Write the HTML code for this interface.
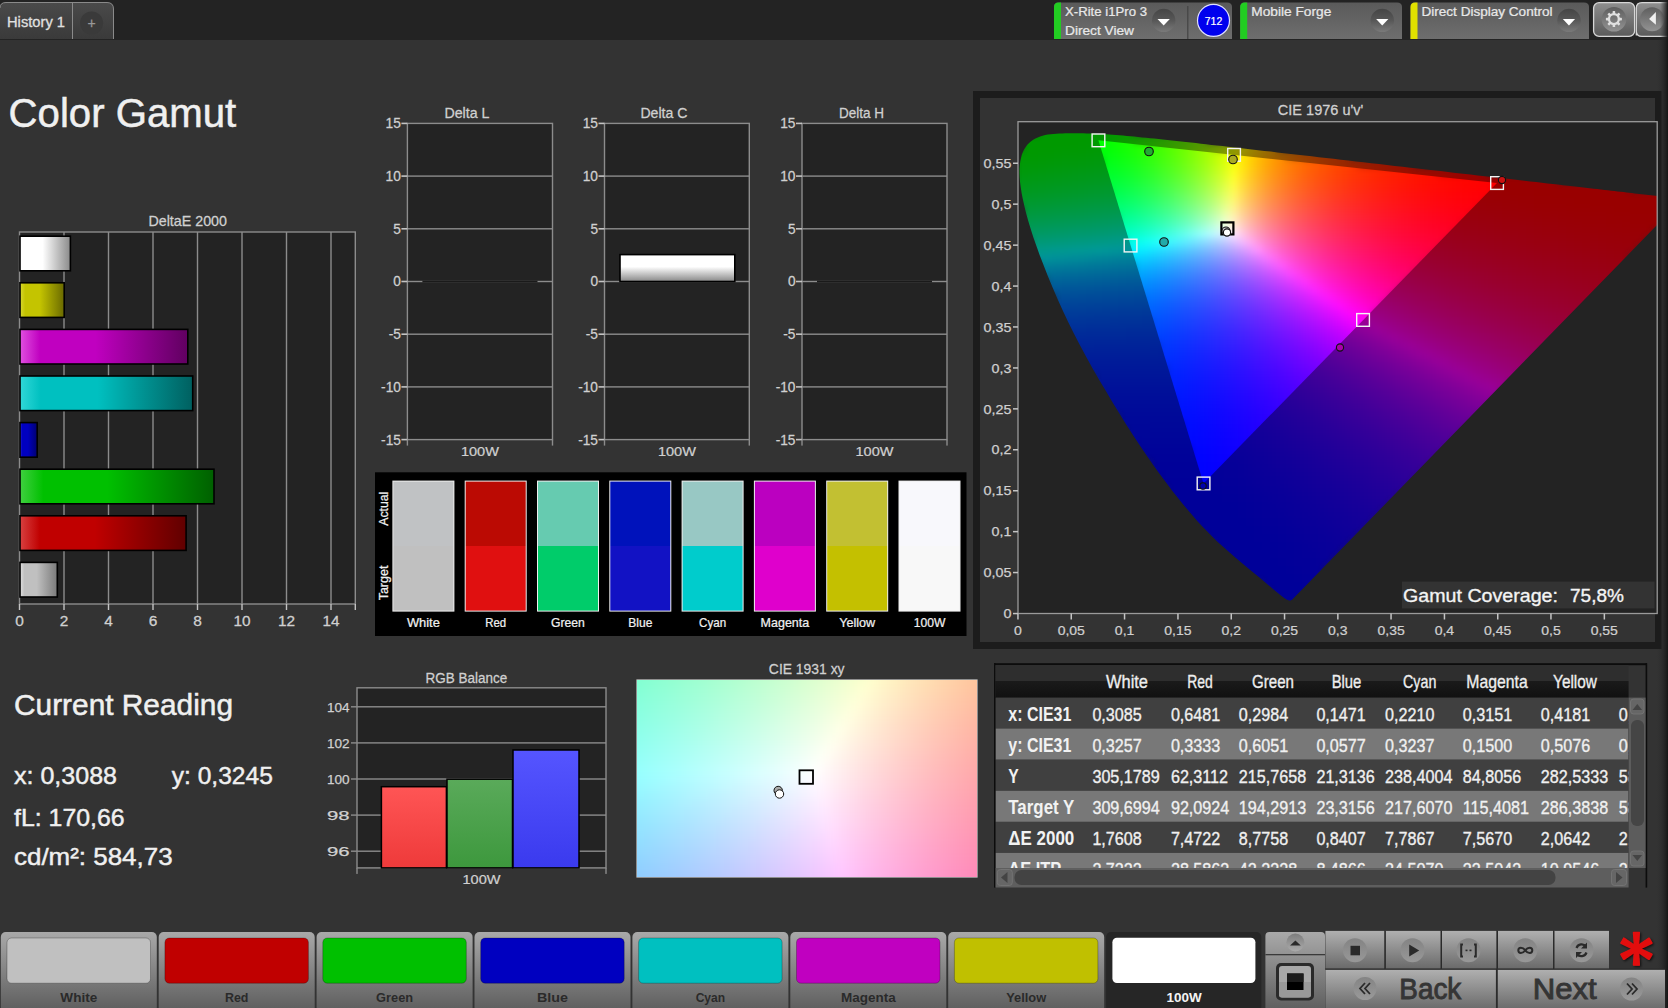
<!DOCTYPE html><html><head><meta charset="utf-8"><title>Color Gamut</title><style>html,body{margin:0;padding:0;background:#333;overflow:hidden;width:1668px;height:1008px}svg{display:block}svg text{font-family:"Liberation Sans",sans-serif}.cl rect{width:8px;height:8px}</style></head><body><svg width="1668" height="1008" viewBox="0 0 1668 1008" font-family="Liberation Sans, sans-serif"><defs><linearGradient id="tabg" x1="0" y1="0" x2="0" y2="1"><stop offset="0" stop-color="#4a4a4a"/><stop offset="1" stop-color="#3a3a3a"/></linearGradient><linearGradient id="selg" x1="0" y1="0" x2="0" y2="1"><stop offset="0" stop-color="#5a5a5a"/><stop offset="1" stop-color="#6e6e6e"/></linearGradient><radialGradient id="ddg" cx="0.5" cy="0.5" r="0.5"><stop offset="0" stop-color="#555"/><stop offset="1" stop-color="#4a4a4a"/></radialGradient><linearGradient id="ddl" x1="0" y1="0" x2="0" y2="1"><stop offset="0" stop-color="#454545"/><stop offset="0.5" stop-color="#575757"/><stop offset="1" stop-color="#7a7a7a"/></linearGradient><linearGradient id="gbtn" x1="0" y1="0" x2="0" y2="1"><stop offset="0" stop-color="#8e8e8e"/><stop offset="1" stop-color="#5a5a5a"/></linearGradient><linearGradient id="gcirc" x1="0" y1="0" x2="0" y2="1"><stop offset="0" stop-color="#5e5e5e"/><stop offset="1" stop-color="#939393"/></linearGradient><linearGradient id="btng" x1="0" y1="0" x2="0" y2="1"><stop offset="0" stop-color="#a9a9a9"/><stop offset="1" stop-color="#5c5c5c"/></linearGradient><linearGradient id="btng2" x1="0" y1="0" x2="0" y2="1"><stop offset="0" stop-color="#b0b0b0"/><stop offset="1" stop-color="#6a6a6a"/></linearGradient><linearGradient id="circg" x1="0" y1="0" x2="0" y2="1"><stop offset="0" stop-color="#6a6a6a"/><stop offset="1" stop-color="#b4b4b4"/></linearGradient><linearGradient id="redge" x1="0" y1="0" x2="1" y2="0"><stop offset="0" stop-color="#333" stop-opacity="0"/><stop offset="1" stop-color="#151515"/></linearGradient><linearGradient id="deb0" x1="0" y1="0" x2="1" y2="0"><stop offset="0" stop-color="#ffffff"/><stop offset="0.12" stop-color="#ffffff"/><stop offset="0.45" stop-color="#ffffff"/><stop offset="1" stop-color="#8a8a8a"/></linearGradient><linearGradient id="deb1" x1="0" y1="0" x2="1" y2="0"><stop offset="0" stop-color="#d8d830"/><stop offset="0.12" stop-color="#c4c400"/><stop offset="0.45" stop-color="#c4c400"/><stop offset="1" stop-color="#6a6a00"/></linearGradient><linearGradient id="deb2" x1="0" y1="0" x2="1" y2="0"><stop offset="0" stop-color="#e050e0"/><stop offset="0.12" stop-color="#c000c0"/><stop offset="0.45" stop-color="#c000c0"/><stop offset="1" stop-color="#600060"/></linearGradient><linearGradient id="deb3" x1="0" y1="0" x2="1" y2="0"><stop offset="0" stop-color="#30d8d8"/><stop offset="0.12" stop-color="#00c0c0"/><stop offset="0.45" stop-color="#00c0c0"/><stop offset="1" stop-color="#006060"/></linearGradient><linearGradient id="deb4" x1="0" y1="0" x2="1" y2="0"><stop offset="0" stop-color="#3030e0"/><stop offset="0.12" stop-color="#0000c0"/><stop offset="0.45" stop-color="#0000c0"/><stop offset="1" stop-color="#000070"/></linearGradient><linearGradient id="deb5" x1="0" y1="0" x2="1" y2="0"><stop offset="0" stop-color="#40d040"/><stop offset="0.12" stop-color="#00c000"/><stop offset="0.45" stop-color="#00c000"/><stop offset="1" stop-color="#006000"/></linearGradient><linearGradient id="deb6" x1="0" y1="0" x2="1" y2="0"><stop offset="0" stop-color="#d84040"/><stop offset="0.12" stop-color="#c00000"/><stop offset="0.45" stop-color="#c00000"/><stop offset="1" stop-color="#600000"/></linearGradient><linearGradient id="deb7" x1="0" y1="0" x2="1" y2="0"><stop offset="0" stop-color="#e0e0e0"/><stop offset="0.12" stop-color="#c0c0c0"/><stop offset="0.45" stop-color="#c0c0c0"/><stop offset="1" stop-color="#7a7a7a"/></linearGradient><linearGradient id="dcb" x1="0" y1="0" x2="0" y2="1"><stop offset="0" stop-color="#fff"/><stop offset="0.45" stop-color="#fff"/><stop offset="1" stop-color="#888"/></linearGradient><clipPath id="loc"><path d="M273.8 478.0 L273.5 478.0 L273.3 478.1 L273.1 478.3 L272.6 478.5 L272.0 478.5 L271.3 478.5 L270.4 478.3 L268.9 477.7 L266.2 475.9 L262.3 473.0 L257.1 468.7 L250.2 462.9 L241.4 455.6 L230.4 446.5 L216.7 435.1 L200.0 420.2 L196.4 416.8 L192.7 413.1 L188.8 409.1 L184.6 404.8 L180.1 399.9 L175.4 394.5 L170.3 388.6 L165.0 382.2 L159.4 375.3 L153.6 367.9 L147.7 360.1 L141.5 351.8 L135.2 343.1 L128.8 333.8 L122.2 324.1 L115.6 314.0 L108.8 303.4 L102.0 292.5 L95.1 281.3 L88.3 269.8 L81.4 258.2 L74.6 246.4 L68.0 234.6 L61.7 222.8 L55.6 211.0 L49.8 199.2 L44.4 187.7 L39.3 176.4 L34.5 165.3 L30.0 154.5 L25.9 144.1 L22.0 134.1 L18.6 124.5 L15.4 115.5 L12.7 106.9 L10.2 98.8 L8.1 91.3 L6.4 84.2 L4.9 77.6 L3.7 71.5 L2.8 65.8 L2.1 60.5 L1.7 55.6 L1.5 51.1 L1.5 46.9 L1.8 42.9 L2.3 39.3 L3.0 35.9 L3.8 32.8 L4.9 29.9 L6.2 27.3 L7.7 24.9 L9.3 22.8 L11.1 20.9 L13.1 19.2 L15.2 17.7 L17.4 16.5 L19.7 15.4 L22.1 14.5 L24.6 13.7 L27.2 13.1 L29.9 12.6 L32.7 12.2 L35.5 11.9 L38.4 11.7 L41.3 11.5 L44.3 11.4 L47.3 11.3 L50.3 11.2 L53.4 11.2 L56.4 11.2 L59.4 11.2 L62.5 11.2 L65.5 11.3 L68.6 11.4 L71.7 11.5 L74.8 11.6 L78.0 11.7 L81.2 11.9 L84.5 12.1 L87.8 12.3 L91.1 12.5 L94.5 12.8 L98.0 13.1 L101.5 13.3 L105.1 13.6 L108.8 14.0 L112.5 14.3 L116.3 14.6 L120.1 15.0 L124.1 15.4 L128.1 15.8 L132.2 16.2 L136.3 16.6 L140.6 17.1 L144.9 17.5 L149.4 18.0 L153.9 18.5 L158.5 19.0 L163.2 19.5 L168.0 20.0 L172.9 20.6 L177.9 21.1 L183.0 21.7 L188.3 22.3 L193.6 22.9 L199.0 23.5 L204.5 24.1 L210.2 24.8 L215.9 25.4 L221.8 26.1 L227.8 26.8 L233.9 27.5 L240.1 28.2 L246.4 28.9 L252.8 29.6 L259.4 30.4 L266.0 31.2 L272.8 31.9 L279.7 32.7 L286.6 33.5 L293.7 34.3 L300.9 35.2 L308.1 36.0 L315.5 36.8 L322.9 37.7 L330.4 38.5 L338.0 39.4 L345.6 40.3 L353.4 41.2 L361.1 42.1 L369.0 43.0 L376.8 43.9 L384.6 44.8 L392.4 45.7 L400.0 46.5 L407.6 47.4 L415.2 48.3 L422.7 49.1 L430.1 50.0 L437.6 50.9 L445.1 51.7 L452.5 52.6 L459.7 53.4 L466.9 54.2 L473.9 55.0 L480.7 55.8 L487.3 56.5 L493.8 57.3 L500.1 58.0 L506.3 58.7 L512.3 59.4 L518.2 60.1 L523.9 60.7 L529.5 61.4 L534.8 62.0 L540.0 62.6 L545.0 63.2 L549.9 63.7 L554.5 64.3 L559.1 64.8 L563.4 65.3 L567.6 65.8 L571.7 66.2 L575.6 66.7 L579.3 67.1 L583.0 67.5 L586.5 67.9 L589.9 68.3 L593.2 68.7 L596.4 69.1 L599.6 69.4 L602.7 69.8 L605.6 70.1 L608.5 70.4 L611.3 70.8 L614.0 71.1 L616.6 71.4 L619.1 71.7 L621.5 71.9 L640.1 74.1 L651.1 75.3 L657.5 76.1 L660.9 76.5 L662.7 76.7 L664.5 76.9 Z"/></clipPath><clipPath id="tri"><path d="M80.4 18.3 L479.0 61.0 L185.5 361.5 Z"/></clipPath><filter id="cblur" x="-5%" y="-5%" width="110%" height="110%" color-interpolation-filters="sRGB"><feGaussianBlur stdDeviation="3.5"/></filter><clipPath id="plotclip"><rect x="0" y="0" width="639.2" height="491.5"/></clipPath><linearGradient id="rbr" x1="0" y1="0" x2="0" y2="1"><stop offset="0" stop-color="#ff5555"/><stop offset="1" stop-color="#ee3a3a"/></linearGradient><linearGradient id="rbg" x1="0" y1="0" x2="0" y2="1"><stop offset="0" stop-color="#5aaa5a"/><stop offset="1" stop-color="#3d983d"/></linearGradient><linearGradient id="rbb" x1="0" y1="0" x2="0" y2="1"><stop offset="0" stop-color="#5555ff"/><stop offset="1" stop-color="#3a3aee"/></linearGradient><clipPath id="c31clip"><rect x="637" y="680" width="340" height="197"/></clipPath><filter id="c31blur" x="-5%" y="-5%" width="110%" height="110%" color-interpolation-filters="sRGB"><feGaussianBlur stdDeviation="4"/></filter><linearGradient id="thg" x1="0" y1="0" x2="0" y2="1"><stop offset="0" stop-color="#2e2e2e"/><stop offset="0.48" stop-color="#2e2e2e"/><stop offset="0.5" stop-color="#1a1a1a"/><stop offset="1" stop-color="#111"/></linearGradient><clipPath id="tclip"><rect x="995.5" y="697.6" width="633.1" height="170.4"/></clipPath><radialGradient id="icg" cx="0.5" cy="0.3" r="0.6"><stop offset="0" stop-color="#7a7a7a"/><stop offset="1" stop-color="#a5a5a5"/></radialGradient><filter id="ashadow" x="-30%" y="-30%" width="160%" height="160%"><feDropShadow dx="1.2" dy="1.2" stdDeviation="1" flood-color="#000" flood-opacity="0.7"/></filter></defs><rect x="0" y="0" width="1668" height="1008" fill="#333"/>
<rect x="0" y="0" width="1668" height="40" fill="#232323"/>
<rect x="1656" y="40" width="12" height="968" fill="url(#redge)"/>
<path d="M0 39 V8 Q0 2.5 6 2.5 H107 Q113.5 2.5 113.5 9 V39 Z" fill="url(#tabg)"/>
<path d="M0 8 Q0 2.5 6 2.5 H107 Q113.5 2.5 113.5 9 V39" fill="none" stroke="#8a8a8a" stroke-width="1"/>
<rect x="72" y="3" width="1" height="36" fill="#8a8a8a"/>
<circle cx="91.6" cy="23" r="11.5" fill="#3a3a3a"/>
<text x="91.6" y="28.0" font-size="14.0" fill="#999" text-anchor="middle" stroke="#999" stroke-width="0.26">+</text>
<text x="7.0" y="27.0" font-size="14.5" fill="#e0e0e0" textLength="58.0" lengthAdjust="spacingAndGlyphs" stroke="#e0e0e0" stroke-width="0.27">History 1</text>
<path d="M1054.0 39 V7 Q1054.0 2.5 1058.5 2.5 H1227.0 Q1232.0 2.5 1232.0 7 V39 Z" fill="url(#selg)"/>
<path d="M1054.0 39 V7 Q1054.0 2.5 1058.5 2.5 H1061.0 V39 Z" fill="#22cc22"/>
<circle cx="1163.7" cy="20.4" r="11.7" fill="url(#ddl)"/>
<path d="M1157.5 18.9 h12.3 l-6.15 6.6 z" fill="#fff"/>
<text x="1065.0" y="15.8" font-size="12.4" fill="#e8e8e8" textLength="82.0" lengthAdjust="spacingAndGlyphs" stroke="#e8e8e8" stroke-width="0.23">X-Rite i1Pro 3</text>
<text x="1065.0" y="34.8" font-size="12.4" fill="#e8e8e8" textLength="69.0" lengthAdjust="spacingAndGlyphs" stroke="#e8e8e8" stroke-width="0.23">Direct View</text>
<rect x="1187.2" y="6" width="1.2" height="33" fill="#444"/>
<circle cx="1213.5" cy="20.4" r="16" fill="#0000ee" stroke="#e0e0ff" stroke-width="1.2"/>
<text x="1213.5" y="24.8" font-size="11.5" fill="#fff" text-anchor="middle" textLength="17.5" lengthAdjust="spacingAndGlyphs" stroke="#fff" stroke-width="0.21">712</text>
<path d="M1240.2 39 V7 Q1240.2 2.5 1244.7 2.5 H1397.0 Q1402.0 2.5 1402.0 7 V39 Z" fill="url(#selg)"/>
<path d="M1240.2 39 V7 Q1240.2 2.5 1244.7 2.5 H1247.2 V39 Z" fill="#22cc22"/>
<circle cx="1382.3" cy="20.4" r="11.7" fill="url(#ddl)"/>
<path d="M1376.1 18.9 h12.3 l-6.15 6.6 z" fill="#fff"/>
<text x="1251.3" y="15.8" font-size="12.4" fill="#e8e8e8" textLength="80.0" lengthAdjust="spacingAndGlyphs" stroke="#e8e8e8" stroke-width="0.23">Mobile Forge</text>
<path d="M1410.5 39 V7 Q1410.5 2.5 1415.0 2.5 H1584.0 Q1589.0 2.5 1589.0 7 V39 Z" fill="url(#selg)"/>
<path d="M1410.5 39 V7 Q1410.5 2.5 1415.0 2.5 H1417.5 V39 Z" fill="#e0e000"/>
<circle cx="1569.0" cy="20.4" r="11.7" fill="url(#ddl)"/>
<path d="M1562.8 18.9 h12.3 l-6.15 6.6 z" fill="#fff"/>
<text x="1421.5" y="16.4" font-size="12.4" fill="#e8e8e8" textLength="131.0" lengthAdjust="spacingAndGlyphs" stroke="#e8e8e8" stroke-width="0.23">Direct Display Control</text>
<rect x="1593.6" y="2.6" width="41" height="33.8" rx="5.5" fill="url(#gbtn)" stroke="#d6d6d6" stroke-width="1.3"/>
<circle cx="1614" cy="19.3" r="12.3" fill="url(#gcirc)"/>
<rect x="1612.60" y="11.10" width="2.6" height="3.2" rx="0.6" fill="#e0e0e0" transform="rotate(0.0 1613.90 19.10)"/><rect x="1612.60" y="11.10" width="2.6" height="3.2" rx="0.6" fill="#e0e0e0" transform="rotate(45.0 1613.90 19.10)"/><rect x="1612.60" y="11.10" width="2.6" height="3.2" rx="0.6" fill="#e0e0e0" transform="rotate(90.0 1613.90 19.10)"/><rect x="1612.60" y="11.10" width="2.6" height="3.2" rx="0.6" fill="#e0e0e0" transform="rotate(135.0 1613.90 19.10)"/><rect x="1612.60" y="11.10" width="2.6" height="3.2" rx="0.6" fill="#e0e0e0" transform="rotate(180.0 1613.90 19.10)"/><rect x="1612.60" y="11.10" width="2.6" height="3.2" rx="0.6" fill="#e0e0e0" transform="rotate(225.0 1613.90 19.10)"/><rect x="1612.60" y="11.10" width="2.6" height="3.2" rx="0.6" fill="#e0e0e0" transform="rotate(270.0 1613.90 19.10)"/><rect x="1612.60" y="11.10" width="2.6" height="3.2" rx="0.6" fill="#e0e0e0" transform="rotate(315.0 1613.90 19.10)"/>
<circle cx="1613.9" cy="19.1" r="4.95" fill="none" stroke="#e0e0e0" stroke-width="2.3"/>
<path d="M1636.3 35.5 V8 Q1636.3 2.6 1642 2.6 H1669 V36.4 H1642 Q1636.3 36.4 1636.3 31 Z" fill="url(#gbtn)" stroke="#d6d6d6" stroke-width="1.3"/>
<circle cx="1652.1" cy="19.3" r="12" fill="url(#gcirc)"/>
<path d="M1649.1 19 L1655.9 12.1 V24.8 Z" fill="#f0f0f0"/>
<rect x="1660" y="0" width="8" height="40" fill="url(#redge)"/>
<text x="8.6" y="126.8" font-size="40.7" fill="#f0f0f0" textLength="227.6" lengthAdjust="spacingAndGlyphs" stroke="#f0f0f0" stroke-width="0.50">Color Gamut</text>
<rect x="19.5" y="232.0" width="335.8" height="372.0" fill="#232323"/>
<rect x="63.3" y="232.0" width="1.4" height="372.0" fill="#8c8c8c"/>
<rect x="107.8" y="232.0" width="1.4" height="372.0" fill="#8c8c8c"/>
<rect x="152.3" y="232.0" width="1.4" height="372.0" fill="#8c8c8c"/>
<rect x="196.8" y="232.0" width="1.4" height="372.0" fill="#8c8c8c"/>
<rect x="241.3" y="232.0" width="1.4" height="372.0" fill="#8c8c8c"/>
<rect x="285.8" y="232.0" width="1.4" height="372.0" fill="#8c8c8c"/>
<rect x="330.3" y="232.0" width="1.4" height="372.0" fill="#8c8c8c"/>
<rect x="19.5" y="232.0" width="335.8" height="372.0" fill="none" stroke="#8c8c8c" stroke-width="1.4"/>
<rect x="18.8" y="604.0" width="1.4" height="6" fill="#c4c4c4"/>
<text x="19.5" y="625.8" font-size="14.0" fill="#d0d0d0" text-anchor="middle" textLength="8.6" lengthAdjust="spacingAndGlyphs" stroke="#d0d0d0" stroke-width="0.26">0</text>
<rect x="63.3" y="604.0" width="1.4" height="6" fill="#c4c4c4"/>
<text x="64.0" y="625.8" font-size="14.0" fill="#d0d0d0" text-anchor="middle" textLength="8.6" lengthAdjust="spacingAndGlyphs" stroke="#d0d0d0" stroke-width="0.26">2</text>
<rect x="107.8" y="604.0" width="1.4" height="6" fill="#c4c4c4"/>
<text x="108.5" y="625.8" font-size="14.0" fill="#d0d0d0" text-anchor="middle" textLength="8.6" lengthAdjust="spacingAndGlyphs" stroke="#d0d0d0" stroke-width="0.26">4</text>
<rect x="152.3" y="604.0" width="1.4" height="6" fill="#c4c4c4"/>
<text x="153.0" y="625.8" font-size="14.0" fill="#d0d0d0" text-anchor="middle" textLength="8.6" lengthAdjust="spacingAndGlyphs" stroke="#d0d0d0" stroke-width="0.26">6</text>
<rect x="196.8" y="604.0" width="1.4" height="6" fill="#c4c4c4"/>
<text x="197.5" y="625.8" font-size="14.0" fill="#d0d0d0" text-anchor="middle" textLength="8.6" lengthAdjust="spacingAndGlyphs" stroke="#d0d0d0" stroke-width="0.26">8</text>
<rect x="241.3" y="604.0" width="1.4" height="6" fill="#c4c4c4"/>
<text x="242.0" y="625.8" font-size="14.0" fill="#d0d0d0" text-anchor="middle" textLength="17.1" lengthAdjust="spacingAndGlyphs" stroke="#d0d0d0" stroke-width="0.26">10</text>
<rect x="285.8" y="604.0" width="1.4" height="6" fill="#c4c4c4"/>
<text x="286.5" y="625.8" font-size="14.0" fill="#d0d0d0" text-anchor="middle" textLength="17.1" lengthAdjust="spacingAndGlyphs" stroke="#d0d0d0" stroke-width="0.26">12</text>
<rect x="330.3" y="604.0" width="1.4" height="6" fill="#c4c4c4"/>
<text x="331.0" y="625.8" font-size="14.0" fill="#d0d0d0" text-anchor="middle" textLength="17.1" lengthAdjust="spacingAndGlyphs" stroke="#d0d0d0" stroke-width="0.26">14</text>
<rect x="354.6" y="604.0" width="1.4" height="6" fill="#c4c4c4"/>
<text x="187.7" y="226.2" font-size="14.5" fill="#d0d0d0" text-anchor="middle" textLength="78.5" lengthAdjust="spacingAndGlyphs" stroke="#d0d0d0" stroke-width="0.27">DeltaE 2000</text>
<rect x="20.0" y="236.2" width="50.4" height="34.6" fill="url(#deb0)" stroke="#000" stroke-width="1.6"/>
<rect x="20.0" y="282.8" width="44.2" height="34.6" fill="url(#deb1)" stroke="#000" stroke-width="1.6"/>
<rect x="20.0" y="329.4" width="167.8" height="34.6" fill="url(#deb2)" stroke="#000" stroke-width="1.6"/>
<rect x="20.0" y="376.0" width="172.7" height="34.6" fill="url(#deb3)" stroke="#000" stroke-width="1.6"/>
<rect x="20.0" y="422.6" width="17.2" height="34.6" fill="url(#deb4)" stroke="#000" stroke-width="1.6"/>
<rect x="20.0" y="469.2" width="194.0" height="34.6" fill="url(#deb5)" stroke="#000" stroke-width="1.6"/>
<rect x="20.0" y="515.8" width="166.1" height="34.6" fill="url(#deb6)" stroke="#000" stroke-width="1.6"/>
<rect x="20.0" y="562.4" width="37.3" height="34.6" fill="url(#deb7)" stroke="#000" stroke-width="1.6"/>
<rect x="407.4" y="123.4" width="145.1" height="316.2" fill="#232323"/>
<rect x="407.4" y="175.4" width="145.1" height="1.4" fill="#8c8c8c"/>
<rect x="407.4" y="228.1" width="145.1" height="1.4" fill="#8c8c8c"/>
<rect x="407.4" y="280.8" width="145.1" height="1.4" fill="#8c8c8c"/>
<rect x="407.4" y="333.5" width="145.1" height="1.4" fill="#8c8c8c"/>
<rect x="407.4" y="386.2" width="145.1" height="1.4" fill="#8c8c8c"/>
<rect x="407.4" y="123.4" width="145.1" height="316.2" fill="none" stroke="#8c8c8c" stroke-width="1.4"/>
<rect x="401.4" y="122.6" width="6" height="1.6" fill="#c4c4c4"/>
<text x="400.9" y="128.3" font-size="14.0" fill="#d0d0d0" text-anchor="end" textLength="15.3" lengthAdjust="spacingAndGlyphs" stroke="#d0d0d0" stroke-width="0.26">15</text>
<rect x="401.4" y="175.3" width="6" height="1.6" fill="#c4c4c4"/>
<text x="400.9" y="181.0" font-size="14.0" fill="#d0d0d0" text-anchor="end" textLength="15.3" lengthAdjust="spacingAndGlyphs" stroke="#d0d0d0" stroke-width="0.26">10</text>
<rect x="401.4" y="228.0" width="6" height="1.6" fill="#c4c4c4"/>
<text x="400.9" y="233.7" font-size="14.0" fill="#d0d0d0" text-anchor="end" textLength="7.6" lengthAdjust="spacingAndGlyphs" stroke="#d0d0d0" stroke-width="0.26">5</text>
<rect x="401.4" y="280.7" width="6" height="1.6" fill="#c4c4c4"/>
<text x="400.9" y="286.4" font-size="14.0" fill="#d0d0d0" text-anchor="end" textLength="7.6" lengthAdjust="spacingAndGlyphs" stroke="#d0d0d0" stroke-width="0.26">0</text>
<rect x="401.4" y="333.4" width="6" height="1.6" fill="#c4c4c4"/>
<text x="400.9" y="339.1" font-size="14.0" fill="#d0d0d0" text-anchor="end" textLength="12.2" lengthAdjust="spacingAndGlyphs" stroke="#d0d0d0" stroke-width="0.26">-5</text>
<rect x="401.4" y="386.1" width="6" height="1.6" fill="#c4c4c4"/>
<text x="400.9" y="391.8" font-size="14.0" fill="#d0d0d0" text-anchor="end" textLength="19.8" lengthAdjust="spacingAndGlyphs" stroke="#d0d0d0" stroke-width="0.26">-10</text>
<rect x="401.4" y="438.8" width="6" height="1.6" fill="#c4c4c4"/>
<text x="400.9" y="444.5" font-size="14.0" fill="#d0d0d0" text-anchor="end" textLength="19.8" lengthAdjust="spacingAndGlyphs" stroke="#d0d0d0" stroke-width="0.26">-15</text>
<rect x="406.7" y="439.6" width="1.4" height="6" fill="#8c8c8c"/>
<rect x="551.8" y="439.6" width="1.4" height="6" fill="#8c8c8c"/>
<text x="479.9" y="455.5" font-size="13.2" fill="#d0d0d0" text-anchor="middle" textLength="38.0" lengthAdjust="spacingAndGlyphs" stroke="#d0d0d0" stroke-width="0.24">100W</text>
<text x="466.9" y="118.0" font-size="14.0" fill="#d0d0d0" text-anchor="middle" textLength="45.0" lengthAdjust="spacingAndGlyphs" stroke="#d0d0d0" stroke-width="0.26">Delta L</text>
<rect x="422.4" y="280.7" width="115.1" height="1.6" fill="#1a1a1a"/>
<rect x="604.5" y="123.4" width="144.8" height="316.2" fill="#232323"/>
<rect x="604.5" y="175.4" width="144.8" height="1.4" fill="#8c8c8c"/>
<rect x="604.5" y="228.1" width="144.8" height="1.4" fill="#8c8c8c"/>
<rect x="604.5" y="280.8" width="144.8" height="1.4" fill="#8c8c8c"/>
<rect x="604.5" y="333.5" width="144.8" height="1.4" fill="#8c8c8c"/>
<rect x="604.5" y="386.2" width="144.8" height="1.4" fill="#8c8c8c"/>
<rect x="604.5" y="123.4" width="144.8" height="316.2" fill="none" stroke="#8c8c8c" stroke-width="1.4"/>
<rect x="598.5" y="122.6" width="6" height="1.6" fill="#c4c4c4"/>
<text x="598.0" y="128.3" font-size="14.0" fill="#d0d0d0" text-anchor="end" textLength="15.3" lengthAdjust="spacingAndGlyphs" stroke="#d0d0d0" stroke-width="0.26">15</text>
<rect x="598.5" y="175.3" width="6" height="1.6" fill="#c4c4c4"/>
<text x="598.0" y="181.0" font-size="14.0" fill="#d0d0d0" text-anchor="end" textLength="15.3" lengthAdjust="spacingAndGlyphs" stroke="#d0d0d0" stroke-width="0.26">10</text>
<rect x="598.5" y="228.0" width="6" height="1.6" fill="#c4c4c4"/>
<text x="598.0" y="233.7" font-size="14.0" fill="#d0d0d0" text-anchor="end" textLength="7.6" lengthAdjust="spacingAndGlyphs" stroke="#d0d0d0" stroke-width="0.26">5</text>
<rect x="598.5" y="280.7" width="6" height="1.6" fill="#c4c4c4"/>
<text x="598.0" y="286.4" font-size="14.0" fill="#d0d0d0" text-anchor="end" textLength="7.6" lengthAdjust="spacingAndGlyphs" stroke="#d0d0d0" stroke-width="0.26">0</text>
<rect x="598.5" y="333.4" width="6" height="1.6" fill="#c4c4c4"/>
<text x="598.0" y="339.1" font-size="14.0" fill="#d0d0d0" text-anchor="end" textLength="12.2" lengthAdjust="spacingAndGlyphs" stroke="#d0d0d0" stroke-width="0.26">-5</text>
<rect x="598.5" y="386.1" width="6" height="1.6" fill="#c4c4c4"/>
<text x="598.0" y="391.8" font-size="14.0" fill="#d0d0d0" text-anchor="end" textLength="19.8" lengthAdjust="spacingAndGlyphs" stroke="#d0d0d0" stroke-width="0.26">-10</text>
<rect x="598.5" y="438.8" width="6" height="1.6" fill="#c4c4c4"/>
<text x="598.0" y="444.5" font-size="14.0" fill="#d0d0d0" text-anchor="end" textLength="19.8" lengthAdjust="spacingAndGlyphs" stroke="#d0d0d0" stroke-width="0.26">-15</text>
<rect x="603.8" y="439.6" width="1.4" height="6" fill="#8c8c8c"/>
<rect x="748.6" y="439.6" width="1.4" height="6" fill="#8c8c8c"/>
<text x="676.9" y="455.5" font-size="13.2" fill="#d0d0d0" text-anchor="middle" textLength="38.0" lengthAdjust="spacingAndGlyphs" stroke="#d0d0d0" stroke-width="0.24">100W</text>
<text x="663.9" y="118.0" font-size="14.0" fill="#d0d0d0" text-anchor="middle" textLength="47.0" lengthAdjust="spacingAndGlyphs" stroke="#d0d0d0" stroke-width="0.26">Delta C</text>
<rect x="620.0" y="254.6" width="114.8" height="26.9" fill="url(#dcb)" stroke="#000" stroke-width="1.6"/>
<rect x="802.0" y="123.4" width="145.0" height="316.2" fill="#232323"/>
<rect x="802.0" y="175.4" width="145.0" height="1.4" fill="#8c8c8c"/>
<rect x="802.0" y="228.1" width="145.0" height="1.4" fill="#8c8c8c"/>
<rect x="802.0" y="280.8" width="145.0" height="1.4" fill="#8c8c8c"/>
<rect x="802.0" y="333.5" width="145.0" height="1.4" fill="#8c8c8c"/>
<rect x="802.0" y="386.2" width="145.0" height="1.4" fill="#8c8c8c"/>
<rect x="802.0" y="123.4" width="145.0" height="316.2" fill="none" stroke="#8c8c8c" stroke-width="1.4"/>
<rect x="796.0" y="122.6" width="6" height="1.6" fill="#c4c4c4"/>
<text x="795.5" y="128.3" font-size="14.0" fill="#d0d0d0" text-anchor="end" textLength="15.3" lengthAdjust="spacingAndGlyphs" stroke="#d0d0d0" stroke-width="0.26">15</text>
<rect x="796.0" y="175.3" width="6" height="1.6" fill="#c4c4c4"/>
<text x="795.5" y="181.0" font-size="14.0" fill="#d0d0d0" text-anchor="end" textLength="15.3" lengthAdjust="spacingAndGlyphs" stroke="#d0d0d0" stroke-width="0.26">10</text>
<rect x="796.0" y="228.0" width="6" height="1.6" fill="#c4c4c4"/>
<text x="795.5" y="233.7" font-size="14.0" fill="#d0d0d0" text-anchor="end" textLength="7.6" lengthAdjust="spacingAndGlyphs" stroke="#d0d0d0" stroke-width="0.26">5</text>
<rect x="796.0" y="280.7" width="6" height="1.6" fill="#c4c4c4"/>
<text x="795.5" y="286.4" font-size="14.0" fill="#d0d0d0" text-anchor="end" textLength="7.6" lengthAdjust="spacingAndGlyphs" stroke="#d0d0d0" stroke-width="0.26">0</text>
<rect x="796.0" y="333.4" width="6" height="1.6" fill="#c4c4c4"/>
<text x="795.5" y="339.1" font-size="14.0" fill="#d0d0d0" text-anchor="end" textLength="12.2" lengthAdjust="spacingAndGlyphs" stroke="#d0d0d0" stroke-width="0.26">-5</text>
<rect x="796.0" y="386.1" width="6" height="1.6" fill="#c4c4c4"/>
<text x="795.5" y="391.8" font-size="14.0" fill="#d0d0d0" text-anchor="end" textLength="19.8" lengthAdjust="spacingAndGlyphs" stroke="#d0d0d0" stroke-width="0.26">-10</text>
<rect x="796.0" y="438.8" width="6" height="1.6" fill="#c4c4c4"/>
<text x="795.5" y="444.5" font-size="14.0" fill="#d0d0d0" text-anchor="end" textLength="19.8" lengthAdjust="spacingAndGlyphs" stroke="#d0d0d0" stroke-width="0.26">-15</text>
<rect x="801.3" y="439.6" width="1.4" height="6" fill="#8c8c8c"/>
<rect x="946.3" y="439.6" width="1.4" height="6" fill="#8c8c8c"/>
<text x="874.5" y="455.5" font-size="13.2" fill="#d0d0d0" text-anchor="middle" textLength="38.0" lengthAdjust="spacingAndGlyphs" stroke="#d0d0d0" stroke-width="0.24">100W</text>
<text x="861.5" y="118.0" font-size="14.0" fill="#d0d0d0" text-anchor="middle" textLength="45.0" lengthAdjust="spacingAndGlyphs" stroke="#d0d0d0" stroke-width="0.26">Delta H</text>
<rect x="817.0" y="280.7" width="115.0" height="1.6" fill="#1a1a1a"/>
<rect x="375" y="472.3" width="591.5" height="163.7" fill="#000"/>
<rect x="392.4" y="480.6" width="62" height="131" fill="#eee"/>
<rect x="393.4" y="481.6" width="60" height="64.4" fill="#c0c2c4"/>
<rect x="393.4" y="546" width="60" height="64.6" fill="#c0c0c0"/>
<text x="423.4" y="626.8" font-size="12.8" fill="#f0f0f0" text-anchor="middle" textLength="33.0" lengthAdjust="spacingAndGlyphs" stroke="#f0f0f0" stroke-width="0.24">White</text>
<rect x="464.7" y="480.6" width="62" height="131" fill="#eee"/>
<rect x="465.7" y="481.6" width="60" height="64.4" fill="#bb0a03"/>
<rect x="465.7" y="546" width="60" height="64.6" fill="#e01010"/>
<text x="495.7" y="626.8" font-size="12.8" fill="#f0f0f0" text-anchor="middle" textLength="20.9" lengthAdjust="spacingAndGlyphs" stroke="#f0f0f0" stroke-width="0.24">Red</text>
<rect x="537.0" y="480.6" width="62" height="131" fill="#eee"/>
<rect x="538.0" y="481.6" width="60" height="64.4" fill="#66cbb0"/>
<rect x="538.0" y="546" width="60" height="64.6" fill="#00cc6a"/>
<text x="568.0" y="626.8" font-size="12.8" fill="#f0f0f0" text-anchor="middle" textLength="33.8" lengthAdjust="spacingAndGlyphs" stroke="#f0f0f0" stroke-width="0.24">Green</text>
<rect x="609.3" y="480.6" width="62" height="131" fill="#eee"/>
<rect x="610.3" y="481.6" width="60" height="64.4" fill="#0012bb"/>
<rect x="610.3" y="546" width="60" height="64.6" fill="#1212c4"/>
<text x="640.3" y="626.8" font-size="12.8" fill="#f0f0f0" text-anchor="middle" textLength="24.1" lengthAdjust="spacingAndGlyphs" stroke="#f0f0f0" stroke-width="0.24">Blue</text>
<rect x="681.6" y="480.6" width="62" height="131" fill="#eee"/>
<rect x="682.6" y="481.6" width="60" height="64.4" fill="#98c8c4"/>
<rect x="682.6" y="546" width="60" height="64.6" fill="#00cccc"/>
<text x="712.6" y="626.8" font-size="12.8" fill="#f0f0f0" text-anchor="middle" textLength="27.0" lengthAdjust="spacingAndGlyphs" stroke="#f0f0f0" stroke-width="0.24">Cyan</text>
<rect x="753.9" y="480.6" width="62" height="131" fill="#eee"/>
<rect x="754.9" y="481.6" width="60" height="64.4" fill="#bb00c0"/>
<rect x="754.9" y="546" width="60" height="64.6" fill="#df00cc"/>
<text x="784.9" y="626.8" font-size="12.8" fill="#f0f0f0" text-anchor="middle" textLength="48.6" lengthAdjust="spacingAndGlyphs" stroke="#f0f0f0" stroke-width="0.24">Magenta</text>
<rect x="826.2" y="480.6" width="62" height="131" fill="#eee"/>
<rect x="827.2" y="481.6" width="60" height="64.4" fill="#c2c032"/>
<rect x="827.2" y="546" width="60" height="64.6" fill="#c4c000"/>
<text x="857.2" y="626.8" font-size="12.8" fill="#f0f0f0" text-anchor="middle" textLength="36.0" lengthAdjust="spacingAndGlyphs" stroke="#f0f0f0" stroke-width="0.24">Yellow</text>
<rect x="898.5" y="480.6" width="62" height="131" fill="#eee"/>
<rect x="899.5" y="481.6" width="60" height="64.4" fill="#f8f8fc"/>
<rect x="899.5" y="546" width="60" height="64.6" fill="#f8f8f8"/>
<text x="929.5" y="626.8" font-size="12.8" fill="#f0f0f0" text-anchor="middle" textLength="31.7" lengthAdjust="spacingAndGlyphs" stroke="#f0f0f0" stroke-width="0.24">100W</text>
<text x="0.0" y="0.0" font-size="12.8" fill="#f0f0f0" text-anchor="middle" textLength="34.0" lengthAdjust="spacingAndGlyphs" stroke="#f0f0f0" stroke-width="0.24" transform="translate(388.2 508.7) rotate(-90)">Actual</text>
<text x="0.0" y="0.0" font-size="12.8" fill="#f0f0f0" text-anchor="middle" textLength="34.7" lengthAdjust="spacingAndGlyphs" stroke="#f0f0f0" stroke-width="0.24" transform="translate(388.2 583) rotate(-90)">Target</text>
<rect x="973" y="91" width="688.5" height="558" fill="#1c1c1c"/>
<rect x="980" y="98" width="675" height="544" fill="#333"/>
<rect x="1018.0" y="121.7" width="639.2" height="491.8" fill="#232323"/>
<g transform="translate(1018 122)" clip-path="url(#plotclip)"><g clip-path="url(#loc)"><g class="cl" filter="url(#cblur)"><rect x="20" y="4" width="8" height="8" fill="#009900"/><rect x="28" y="4" width="8" height="8" fill="#009900"/><rect x="36" y="4" width="8" height="8" fill="#009900"/><rect x="44" y="4" width="8" height="8" fill="#009900"/><rect x="52" y="4" width="8" height="8" fill="#009900"/><rect x="60" y="4" width="8" height="8" fill="#009900"/><rect x="68" y="4" width="8" height="8" fill="#009900"/><rect x="76" y="4" width="8" height="8" fill="#009900"/><rect x="84" y="4" width="8" height="8" fill="#009900"/><rect x="92" y="4" width="8" height="8" fill="#019900"/><rect x="100" y="4" width="8" height="8" fill="#049900"/><rect x="108" y="4" width="8" height="8" fill="#089900"/><rect x="4" y="12" width="8" height="8" fill="#009900"/><rect x="12" y="12" width="8" height="8" fill="#009900"/><rect x="20" y="12" width="8" height="8" fill="#009900"/><rect x="28" y="12" width="8" height="8" fill="#009900"/><rect x="36" y="12" width="8" height="8" fill="#009900"/><rect x="44" y="12" width="8" height="8" fill="#009900"/><rect x="52" y="12" width="8" height="8" fill="#009900"/><rect x="60" y="12" width="8" height="8" fill="#009900"/><rect x="68" y="12" width="8" height="8" fill="#009900"/><rect x="76" y="12" width="8" height="8" fill="#009900"/><rect x="84" y="12" width="8" height="8" fill="#019900"/><rect x="92" y="12" width="8" height="8" fill="#049900"/><rect x="100" y="12" width="8" height="8" fill="#089900"/><rect x="108" y="12" width="8" height="8" fill="#0c9900"/><rect x="116" y="12" width="8" height="8" fill="#119900"/><rect x="124" y="12" width="8" height="8" fill="#179900"/><rect x="132" y="12" width="8" height="8" fill="#1d9900"/><rect x="140" y="12" width="8" height="8" fill="#239900"/><rect x="148" y="12" width="8" height="8" fill="#2a9900"/><rect x="156" y="12" width="8" height="8" fill="#329900"/><rect x="164" y="12" width="8" height="8" fill="#3b9900"/><rect x="172" y="12" width="8" height="8" fill="#449900"/><rect x="180" y="12" width="8" height="8" fill="#4e9900"/><rect x="4" y="20" width="8" height="8" fill="#009900"/><rect x="12" y="20" width="8" height="8" fill="#009900"/><rect x="20" y="20" width="8" height="8" fill="#009900"/><rect x="28" y="20" width="8" height="8" fill="#009900"/><rect x="36" y="20" width="8" height="8" fill="#009900"/><rect x="44" y="20" width="8" height="8" fill="#009900"/><rect x="52" y="20" width="8" height="8" fill="#009900"/><rect x="60" y="20" width="8" height="8" fill="#009901"/><rect x="68" y="20" width="8" height="8" fill="#009902"/><rect x="76" y="20" width="8" height="8" fill="#009902"/><rect x="84" y="20" width="8" height="8" fill="#009903"/><rect x="92" y="20" width="8" height="8" fill="#089900"/><rect x="100" y="20" width="8" height="8" fill="#0d9900"/><rect x="108" y="20" width="8" height="8" fill="#119900"/><rect x="116" y="20" width="8" height="8" fill="#179900"/><rect x="124" y="20" width="8" height="8" fill="#1c9900"/><rect x="132" y="20" width="8" height="8" fill="#239900"/><rect x="140" y="20" width="8" height="8" fill="#2a9900"/><rect x="148" y="20" width="8" height="8" fill="#319900"/><rect x="156" y="20" width="8" height="8" fill="#399900"/><rect x="164" y="20" width="8" height="8" fill="#429900"/><rect x="172" y="20" width="8" height="8" fill="#4c9900"/><rect x="180" y="20" width="8" height="8" fill="#569900"/><rect x="188" y="20" width="8" height="8" fill="#619900"/><rect x="196" y="20" width="8" height="8" fill="#6e9900"/><rect x="204" y="20" width="8" height="8" fill="#7b9900"/><rect x="212" y="20" width="8" height="8" fill="#8a9900"/><rect x="220" y="20" width="8" height="8" fill="#999900"/><rect x="228" y="20" width="8" height="8" fill="#998900"/><rect x="236" y="20" width="8" height="8" fill="#997b00"/><rect x="244" y="20" width="8" height="8" fill="#996f00"/><rect x="252" y="20" width="8" height="8" fill="#996400"/><rect x="-4" y="28" width="8" height="8" fill="#009900"/><rect x="4" y="28" width="8" height="8" fill="#009900"/><rect x="12" y="28" width="8" height="8" fill="#009901"/><rect x="20" y="28" width="8" height="8" fill="#009902"/><rect x="28" y="28" width="8" height="8" fill="#009902"/><rect x="36" y="28" width="8" height="8" fill="#009903"/><rect x="44" y="28" width="8" height="8" fill="#009904"/><rect x="52" y="28" width="8" height="8" fill="#009905"/><rect x="60" y="28" width="8" height="8" fill="#009905"/><rect x="68" y="28" width="8" height="8" fill="#009906"/><rect x="76" y="28" width="8" height="8" fill="#009907"/><rect x="84" y="28" width="8" height="8" fill="#009908"/><rect x="92" y="28" width="8" height="8" fill="#009909"/><rect x="100" y="28" width="8" height="8" fill="#00990a"/><rect x="108" y="28" width="8" height="8" fill="#179900"/><rect x="116" y="28" width="8" height="8" fill="#1c9900"/><rect x="124" y="28" width="8" height="8" fill="#229900"/><rect x="132" y="28" width="8" height="8" fill="#299900"/><rect x="140" y="28" width="8" height="8" fill="#309900"/><rect x="148" y="28" width="8" height="8" fill="#389900"/><rect x="156" y="28" width="8" height="8" fill="#409900"/><rect x="164" y="28" width="8" height="8" fill="#4a9900"/><rect x="172" y="28" width="8" height="8" fill="#539900"/><rect x="180" y="28" width="8" height="8" fill="#5e9900"/><rect x="188" y="28" width="8" height="8" fill="#6a9900"/><rect x="196" y="28" width="8" height="8" fill="#769900"/><rect x="204" y="28" width="8" height="8" fill="#849900"/><rect x="212" y="28" width="8" height="8" fill="#939900"/><rect x="220" y="28" width="8" height="8" fill="#998f00"/><rect x="228" y="28" width="8" height="8" fill="#998100"/><rect x="236" y="28" width="8" height="8" fill="#997500"/><rect x="244" y="28" width="8" height="8" fill="#996a00"/><rect x="252" y="28" width="8" height="8" fill="#996000"/><rect x="260" y="28" width="8" height="8" fill="#995700"/><rect x="268" y="28" width="8" height="8" fill="#994f00"/><rect x="276" y="28" width="8" height="8" fill="#994700"/><rect x="284" y="28" width="8" height="8" fill="#994000"/><rect x="292" y="28" width="8" height="8" fill="#993a00"/><rect x="300" y="28" width="8" height="8" fill="#993500"/><rect x="308" y="28" width="8" height="8" fill="#992f00"/><rect x="316" y="28" width="8" height="8" fill="#992b00"/><rect x="324" y="28" width="8" height="8" fill="#992600"/><rect x="-4" y="36" width="8" height="8" fill="#009904"/><rect x="4" y="36" width="8" height="8" fill="#009905"/><rect x="12" y="36" width="8" height="8" fill="#009905"/><rect x="20" y="36" width="8" height="8" fill="#009906"/><rect x="28" y="36" width="8" height="8" fill="#009907"/><rect x="36" y="36" width="8" height="8" fill="#009908"/><rect x="44" y="36" width="8" height="8" fill="#009909"/><rect x="52" y="36" width="8" height="8" fill="#00990a"/><rect x="60" y="36" width="8" height="8" fill="#00990b"/><rect x="68" y="36" width="8" height="8" fill="#00990c"/><rect x="76" y="36" width="8" height="8" fill="#00990d"/><rect x="84" y="36" width="8" height="8" fill="#00990e"/><rect x="92" y="36" width="8" height="8" fill="#00990f"/><rect x="100" y="36" width="8" height="8" fill="#009910"/><rect x="108" y="36" width="8" height="8" fill="#009911"/><rect x="116" y="36" width="8" height="8" fill="#009913"/><rect x="124" y="36" width="8" height="8" fill="#289900"/><rect x="132" y="36" width="8" height="8" fill="#2f9900"/><rect x="140" y="36" width="8" height="8" fill="#379900"/><rect x="148" y="36" width="8" height="8" fill="#3f9900"/><rect x="156" y="36" width="8" height="8" fill="#489900"/><rect x="164" y="36" width="8" height="8" fill="#519900"/><rect x="172" y="36" width="8" height="8" fill="#5b9900"/><rect x="180" y="36" width="8" height="8" fill="#669900"/><rect x="188" y="36" width="8" height="8" fill="#729900"/><rect x="196" y="36" width="8" height="8" fill="#7f9900"/><rect x="204" y="36" width="8" height="8" fill="#8d9900"/><rect x="212" y="36" width="8" height="8" fill="#999600"/><rect x="220" y="36" width="8" height="8" fill="#998700"/><rect x="228" y="36" width="8" height="8" fill="#997b00"/><rect x="236" y="36" width="8" height="8" fill="#996f00"/><rect x="244" y="36" width="8" height="8" fill="#996500"/><rect x="252" y="36" width="8" height="8" fill="#995c00"/><rect x="260" y="36" width="8" height="8" fill="#995300"/><rect x="268" y="36" width="8" height="8" fill="#994c00"/><rect x="276" y="36" width="8" height="8" fill="#994500"/><rect x="284" y="36" width="8" height="8" fill="#993e00"/><rect x="292" y="36" width="8" height="8" fill="#993900"/><rect x="300" y="36" width="8" height="8" fill="#993300"/><rect x="308" y="36" width="8" height="8" fill="#992e00"/><rect x="316" y="36" width="8" height="8" fill="#992a00"/><rect x="324" y="36" width="8" height="8" fill="#992600"/><rect x="332" y="36" width="8" height="8" fill="#992200"/><rect x="340" y="36" width="8" height="8" fill="#991e00"/><rect x="348" y="36" width="8" height="8" fill="#991b00"/><rect x="356" y="36" width="8" height="8" fill="#991800"/><rect x="364" y="36" width="8" height="8" fill="#991500"/><rect x="372" y="36" width="8" height="8" fill="#991200"/><rect x="380" y="36" width="8" height="8" fill="#991000"/><rect x="388" y="36" width="8" height="8" fill="#990e00"/><rect x="-4" y="44" width="8" height="8" fill="#009909"/><rect x="4" y="44" width="8" height="8" fill="#00990a"/><rect x="12" y="44" width="8" height="8" fill="#00990b"/><rect x="20" y="44" width="8" height="8" fill="#00990c"/><rect x="28" y="44" width="8" height="8" fill="#00990e"/><rect x="36" y="44" width="8" height="8" fill="#00990f"/><rect x="44" y="44" width="8" height="8" fill="#009910"/><rect x="52" y="44" width="8" height="8" fill="#009911"/><rect x="60" y="44" width="8" height="8" fill="#009912"/><rect x="68" y="44" width="8" height="8" fill="#009913"/><rect x="76" y="44" width="8" height="8" fill="#009914"/><rect x="84" y="44" width="8" height="8" fill="#009915"/><rect x="92" y="44" width="8" height="8" fill="#009917"/><rect x="100" y="44" width="8" height="8" fill="#009918"/><rect x="108" y="44" width="8" height="8" fill="#009919"/><rect x="116" y="44" width="8" height="8" fill="#00991a"/><rect x="124" y="44" width="8" height="8" fill="#00991b"/><rect x="132" y="44" width="8" height="8" fill="#00991d"/><rect x="140" y="44" width="8" height="8" fill="#3d9900"/><rect x="148" y="44" width="8" height="8" fill="#469900"/><rect x="156" y="44" width="8" height="8" fill="#4f9900"/><rect x="164" y="44" width="8" height="8" fill="#599900"/><rect x="172" y="44" width="8" height="8" fill="#639900"/><rect x="180" y="44" width="8" height="8" fill="#6e9900"/><rect x="188" y="44" width="8" height="8" fill="#7b9900"/><rect x="196" y="44" width="8" height="8" fill="#889900"/><rect x="204" y="44" width="8" height="8" fill="#969900"/><rect x="212" y="44" width="8" height="8" fill="#998d00"/><rect x="220" y="44" width="8" height="8" fill="#998000"/><rect x="228" y="44" width="8" height="8" fill="#997500"/><rect x="236" y="44" width="8" height="8" fill="#996a00"/><rect x="244" y="44" width="8" height="8" fill="#996100"/><rect x="252" y="44" width="8" height="8" fill="#995800"/><rect x="260" y="44" width="8" height="8" fill="#995000"/><rect x="268" y="44" width="8" height="8" fill="#994900"/><rect x="276" y="44" width="8" height="8" fill="#994300"/><rect x="284" y="44" width="8" height="8" fill="#993d00"/><rect x="292" y="44" width="8" height="8" fill="#993700"/><rect x="300" y="44" width="8" height="8" fill="#993200"/><rect x="308" y="44" width="8" height="8" fill="#992d00"/><rect x="316" y="44" width="8" height="8" fill="#992900"/><rect x="324" y="44" width="8" height="8" fill="#992500"/><rect x="332" y="44" width="8" height="8" fill="#992100"/><rect x="340" y="44" width="8" height="8" fill="#991e00"/><rect x="348" y="44" width="8" height="8" fill="#991b00"/><rect x="356" y="44" width="8" height="8" fill="#991800"/><rect x="364" y="44" width="8" height="8" fill="#991500"/><rect x="372" y="44" width="8" height="8" fill="#991300"/><rect x="380" y="44" width="8" height="8" fill="#991000"/><rect x="388" y="44" width="8" height="8" fill="#990e00"/><rect x="396" y="44" width="8" height="8" fill="#990c00"/><rect x="404" y="44" width="8" height="8" fill="#990a00"/><rect x="412" y="44" width="8" height="8" fill="#990800"/><rect x="420" y="44" width="8" height="8" fill="#990700"/><rect x="428" y="44" width="8" height="8" fill="#990500"/><rect x="436" y="44" width="8" height="8" fill="#990400"/><rect x="444" y="44" width="8" height="8" fill="#990300"/><rect x="452" y="44" width="8" height="8" fill="#990200"/><rect x="460" y="44" width="8" height="8" fill="#990100"/><rect x="-4" y="52" width="8" height="8" fill="#009910"/><rect x="4" y="52" width="8" height="8" fill="#009911"/><rect x="12" y="52" width="8" height="8" fill="#009913"/><rect x="20" y="52" width="8" height="8" fill="#009914"/><rect x="28" y="52" width="8" height="8" fill="#009915"/><rect x="36" y="52" width="8" height="8" fill="#009916"/><rect x="44" y="52" width="8" height="8" fill="#009917"/><rect x="52" y="52" width="8" height="8" fill="#009919"/><rect x="60" y="52" width="8" height="8" fill="#00991a"/><rect x="68" y="52" width="8" height="8" fill="#00991b"/><rect x="76" y="52" width="8" height="8" fill="#00991c"/><rect x="84" y="52" width="8" height="8" fill="#00991d"/><rect x="92" y="52" width="8" height="8" fill="#00991f"/><rect x="100" y="52" width="8" height="8" fill="#009920"/><rect x="108" y="52" width="8" height="8" fill="#009921"/><rect x="116" y="52" width="8" height="8" fill="#009923"/><rect x="124" y="52" width="8" height="8" fill="#009924"/><rect x="132" y="52" width="8" height="8" fill="#009925"/><rect x="140" y="52" width="8" height="8" fill="#009926"/><rect x="148" y="52" width="8" height="8" fill="#009928"/><rect x="156" y="52" width="8" height="8" fill="#569900"/><rect x="164" y="52" width="8" height="8" fill="#609900"/><rect x="172" y="52" width="8" height="8" fill="#6b9900"/><rect x="180" y="52" width="8" height="8" fill="#769900"/><rect x="188" y="52" width="8" height="8" fill="#839900"/><rect x="196" y="52" width="8" height="8" fill="#909900"/><rect x="204" y="52" width="8" height="8" fill="#999300"/><rect x="212" y="52" width="8" height="8" fill="#998600"/><rect x="220" y="52" width="8" height="8" fill="#997a00"/><rect x="228" y="52" width="8" height="8" fill="#996f00"/><rect x="236" y="52" width="8" height="8" fill="#996600"/><rect x="244" y="52" width="8" height="8" fill="#995d00"/><rect x="252" y="52" width="8" height="8" fill="#995500"/><rect x="260" y="52" width="8" height="8" fill="#994d00"/><rect x="268" y="52" width="8" height="8" fill="#994700"/><rect x="276" y="52" width="8" height="8" fill="#994100"/><rect x="284" y="52" width="8" height="8" fill="#993b00"/><rect x="292" y="52" width="8" height="8" fill="#993600"/><rect x="300" y="52" width="8" height="8" fill="#993100"/><rect x="308" y="52" width="8" height="8" fill="#992c00"/><rect x="316" y="52" width="8" height="8" fill="#992800"/><rect x="324" y="52" width="8" height="8" fill="#992400"/><rect x="332" y="52" width="8" height="8" fill="#992100"/><rect x="340" y="52" width="8" height="8" fill="#991e00"/><rect x="348" y="52" width="8" height="8" fill="#991a00"/><rect x="356" y="52" width="8" height="8" fill="#991800"/><rect x="364" y="52" width="8" height="8" fill="#991500"/><rect x="372" y="52" width="8" height="8" fill="#991300"/><rect x="380" y="52" width="8" height="8" fill="#991000"/><rect x="388" y="52" width="8" height="8" fill="#990e00"/><rect x="396" y="52" width="8" height="8" fill="#990c00"/><rect x="404" y="52" width="8" height="8" fill="#990a00"/><rect x="412" y="52" width="8" height="8" fill="#990900"/><rect x="420" y="52" width="8" height="8" fill="#990700"/><rect x="428" y="52" width="8" height="8" fill="#990600"/><rect x="436" y="52" width="8" height="8" fill="#990400"/><rect x="444" y="52" width="8" height="8" fill="#990300"/><rect x="452" y="52" width="8" height="8" fill="#990200"/><rect x="460" y="52" width="8" height="8" fill="#990100"/><rect x="468" y="52" width="8" height="8" fill="#990000"/><rect x="476" y="52" width="8" height="8" fill="#990000"/><rect x="484" y="52" width="8" height="8" fill="#990000"/><rect x="492" y="52" width="8" height="8" fill="#990000"/><rect x="500" y="52" width="8" height="8" fill="#990000"/><rect x="508" y="52" width="8" height="8" fill="#990000"/><rect x="516" y="52" width="8" height="8" fill="#990000"/><rect x="524" y="52" width="8" height="8" fill="#990000"/><rect x="532" y="52" width="8" height="8" fill="#990000"/><rect x="-4" y="60" width="8" height="8" fill="#009918"/><rect x="4" y="60" width="8" height="8" fill="#009919"/><rect x="12" y="60" width="8" height="8" fill="#00991b"/><rect x="20" y="60" width="8" height="8" fill="#00991c"/><rect x="28" y="60" width="8" height="8" fill="#00991d"/><rect x="36" y="60" width="8" height="8" fill="#00991f"/><rect x="44" y="60" width="8" height="8" fill="#009920"/><rect x="52" y="60" width="8" height="8" fill="#009921"/><rect x="60" y="60" width="8" height="8" fill="#009922"/><rect x="68" y="60" width="8" height="8" fill="#009924"/><rect x="76" y="60" width="8" height="8" fill="#009925"/><rect x="84" y="60" width="8" height="8" fill="#009927"/><rect x="92" y="60" width="8" height="8" fill="#009928"/><rect x="100" y="60" width="8" height="8" fill="#009929"/><rect x="108" y="60" width="8" height="8" fill="#00992b"/><rect x="116" y="60" width="8" height="8" fill="#00992c"/><rect x="124" y="60" width="8" height="8" fill="#00992d"/><rect x="132" y="60" width="8" height="8" fill="#00992f"/><rect x="140" y="60" width="8" height="8" fill="#009930"/><rect x="148" y="60" width="8" height="8" fill="#009931"/><rect x="156" y="60" width="8" height="8" fill="#009933"/><rect x="164" y="60" width="8" height="8" fill="#009934"/><rect x="172" y="60" width="8" height="8" fill="#729900"/><rect x="180" y="60" width="8" height="8" fill="#7e9900"/><rect x="188" y="60" width="8" height="8" fill="#8b9900"/><rect x="196" y="60" width="8" height="8" fill="#999900"/><rect x="204" y="60" width="8" height="8" fill="#998c00"/><rect x="212" y="60" width="8" height="8" fill="#997f00"/><rect x="220" y="60" width="8" height="8" fill="#997500"/><rect x="228" y="60" width="8" height="8" fill="#996b00"/><rect x="236" y="60" width="8" height="8" fill="#996200"/><rect x="244" y="60" width="8" height="8" fill="#995900"/><rect x="252" y="60" width="8" height="8" fill="#995200"/><rect x="260" y="60" width="8" height="8" fill="#994b00"/><rect x="268" y="60" width="8" height="8" fill="#994400"/><rect x="276" y="60" width="8" height="8" fill="#993f00"/><rect x="284" y="60" width="8" height="8" fill="#993900"/><rect x="292" y="60" width="8" height="8" fill="#993400"/><rect x="300" y="60" width="8" height="8" fill="#993000"/><rect x="308" y="60" width="8" height="8" fill="#992b00"/><rect x="316" y="60" width="8" height="8" fill="#992700"/><rect x="324" y="60" width="8" height="8" fill="#992400"/><rect x="332" y="60" width="8" height="8" fill="#992000"/><rect x="340" y="60" width="8" height="8" fill="#991d00"/><rect x="348" y="60" width="8" height="8" fill="#991a00"/><rect x="356" y="60" width="8" height="8" fill="#991700"/><rect x="364" y="60" width="8" height="8" fill="#991500"/><rect x="372" y="60" width="8" height="8" fill="#991300"/><rect x="380" y="60" width="8" height="8" fill="#991000"/><rect x="388" y="60" width="8" height="8" fill="#990e00"/><rect x="396" y="60" width="8" height="8" fill="#990c00"/><rect x="404" y="60" width="8" height="8" fill="#990a00"/><rect x="412" y="60" width="8" height="8" fill="#990900"/><rect x="420" y="60" width="8" height="8" fill="#990700"/><rect x="428" y="60" width="8" height="8" fill="#990600"/><rect x="436" y="60" width="8" height="8" fill="#990500"/><rect x="444" y="60" width="8" height="8" fill="#990300"/><rect x="452" y="60" width="8" height="8" fill="#990002"/><rect x="460" y="60" width="8" height="8" fill="#990001"/><rect x="468" y="60" width="8" height="8" fill="#990001"/><rect x="476" y="60" width="8" height="8" fill="#990000"/><rect x="484" y="60" width="8" height="8" fill="#990000"/><rect x="492" y="60" width="8" height="8" fill="#990000"/><rect x="500" y="60" width="8" height="8" fill="#990000"/><rect x="508" y="60" width="8" height="8" fill="#990000"/><rect x="516" y="60" width="8" height="8" fill="#990000"/><rect x="524" y="60" width="8" height="8" fill="#990000"/><rect x="532" y="60" width="8" height="8" fill="#990000"/><rect x="540" y="60" width="8" height="8" fill="#990000"/><rect x="548" y="60" width="8" height="8" fill="#990000"/><rect x="556" y="60" width="8" height="8" fill="#990000"/><rect x="564" y="60" width="8" height="8" fill="#990000"/><rect x="572" y="60" width="8" height="8" fill="#990000"/><rect x="580" y="60" width="8" height="8" fill="#990000"/><rect x="588" y="60" width="8" height="8" fill="#990000"/><rect x="596" y="60" width="8" height="8" fill="#990000"/><rect x="604" y="60" width="8" height="8" fill="#990000"/><rect x="-4" y="68" width="8" height="8" fill="#009921"/><rect x="4" y="68" width="8" height="8" fill="#009922"/><rect x="12" y="68" width="8" height="8" fill="#009924"/><rect x="20" y="68" width="8" height="8" fill="#009925"/><rect x="28" y="68" width="8" height="8" fill="#009927"/><rect x="36" y="68" width="8" height="8" fill="#009928"/><rect x="44" y="68" width="8" height="8" fill="#009929"/><rect x="52" y="68" width="8" height="8" fill="#00992b"/><rect x="60" y="68" width="8" height="8" fill="#00992c"/><rect x="68" y="68" width="8" height="8" fill="#00992e"/><rect x="76" y="68" width="8" height="8" fill="#00992f"/><rect x="84" y="68" width="8" height="8" fill="#009931"/><rect x="92" y="68" width="8" height="8" fill="#009932"/><rect x="100" y="68" width="8" height="8" fill="#009933"/><rect x="108" y="68" width="8" height="8" fill="#009935"/><rect x="116" y="68" width="8" height="8" fill="#009936"/><rect x="124" y="68" width="8" height="8" fill="#009938"/><rect x="132" y="68" width="8" height="8" fill="#009939"/><rect x="140" y="68" width="8" height="8" fill="#00993b"/><rect x="148" y="68" width="8" height="8" fill="#00993c"/><rect x="156" y="68" width="8" height="8" fill="#00993e"/><rect x="164" y="68" width="8" height="8" fill="#00993f"/><rect x="172" y="68" width="8" height="8" fill="#009940"/><rect x="180" y="68" width="8" height="8" fill="#009942"/><rect x="188" y="68" width="8" height="8" fill="#939900"/><rect x="196" y="68" width="8" height="8" fill="#999100"/><rect x="204" y="68" width="8" height="8" fill="#998500"/><rect x="212" y="68" width="8" height="8" fill="#997a00"/><rect x="220" y="68" width="8" height="8" fill="#996f00"/><rect x="228" y="68" width="8" height="8" fill="#996600"/><rect x="236" y="68" width="8" height="8" fill="#995e00"/><rect x="244" y="68" width="8" height="8" fill="#995600"/><rect x="252" y="68" width="8" height="8" fill="#994f00"/><rect x="260" y="68" width="8" height="8" fill="#994800"/><rect x="268" y="68" width="8" height="8" fill="#994200"/><rect x="276" y="68" width="8" height="8" fill="#993d00"/><rect x="284" y="68" width="8" height="8" fill="#993800"/><rect x="292" y="68" width="8" height="8" fill="#993300"/><rect x="300" y="68" width="8" height="8" fill="#992f00"/><rect x="308" y="68" width="8" height="8" fill="#992b00"/><rect x="316" y="68" width="8" height="8" fill="#992700"/><rect x="324" y="68" width="8" height="8" fill="#992300"/><rect x="332" y="68" width="8" height="8" fill="#992000"/><rect x="340" y="68" width="8" height="8" fill="#991d00"/><rect x="348" y="68" width="8" height="8" fill="#991a00"/><rect x="356" y="68" width="8" height="8" fill="#991700"/><rect x="364" y="68" width="8" height="8" fill="#991500"/><rect x="372" y="68" width="8" height="8" fill="#99000c"/><rect x="380" y="68" width="8" height="8" fill="#99000b"/><rect x="388" y="68" width="8" height="8" fill="#99000a"/><rect x="396" y="68" width="8" height="8" fill="#990009"/><rect x="404" y="68" width="8" height="8" fill="#990008"/><rect x="412" y="68" width="8" height="8" fill="#990007"/><rect x="420" y="68" width="8" height="8" fill="#990007"/><rect x="428" y="68" width="8" height="8" fill="#990006"/><rect x="436" y="68" width="8" height="8" fill="#990005"/><rect x="444" y="68" width="8" height="8" fill="#990005"/><rect x="452" y="68" width="8" height="8" fill="#990004"/><rect x="460" y="68" width="8" height="8" fill="#990003"/><rect x="468" y="68" width="8" height="8" fill="#990003"/><rect x="476" y="68" width="8" height="8" fill="#990002"/><rect x="484" y="68" width="8" height="8" fill="#990002"/><rect x="492" y="68" width="8" height="8" fill="#990001"/><rect x="500" y="68" width="8" height="8" fill="#990001"/><rect x="508" y="68" width="8" height="8" fill="#990001"/><rect x="516" y="68" width="8" height="8" fill="#990000"/><rect x="524" y="68" width="8" height="8" fill="#990000"/><rect x="532" y="68" width="8" height="8" fill="#990000"/><rect x="540" y="68" width="8" height="8" fill="#990000"/><rect x="548" y="68" width="8" height="8" fill="#990000"/><rect x="556" y="68" width="8" height="8" fill="#990000"/><rect x="564" y="68" width="8" height="8" fill="#990000"/><rect x="572" y="68" width="8" height="8" fill="#990000"/><rect x="580" y="68" width="8" height="8" fill="#990000"/><rect x="588" y="68" width="8" height="8" fill="#990000"/><rect x="596" y="68" width="8" height="8" fill="#990000"/><rect x="604" y="68" width="8" height="8" fill="#990000"/><rect x="612" y="68" width="8" height="8" fill="#990000"/><rect x="620" y="68" width="8" height="8" fill="#990000"/><rect x="628" y="68" width="8" height="8" fill="#990000"/><rect x="636" y="68" width="8" height="8" fill="#990000"/><rect x="644" y="68" width="8" height="8" fill="#990000"/><rect x="-4" y="76" width="8" height="8" fill="#00992b"/><rect x="4" y="76" width="8" height="8" fill="#00992d"/><rect x="12" y="76" width="8" height="8" fill="#00992e"/><rect x="20" y="76" width="8" height="8" fill="#009930"/><rect x="28" y="76" width="8" height="8" fill="#009931"/><rect x="36" y="76" width="8" height="8" fill="#009933"/><rect x="44" y="76" width="8" height="8" fill="#009934"/><rect x="52" y="76" width="8" height="8" fill="#009936"/><rect x="60" y="76" width="8" height="8" fill="#009937"/><rect x="68" y="76" width="8" height="8" fill="#009939"/><rect x="76" y="76" width="8" height="8" fill="#00993a"/><rect x="84" y="76" width="8" height="8" fill="#00993c"/><rect x="92" y="76" width="8" height="8" fill="#00993d"/><rect x="100" y="76" width="8" height="8" fill="#00993f"/><rect x="108" y="76" width="8" height="8" fill="#009940"/><rect x="116" y="76" width="8" height="8" fill="#009942"/><rect x="124" y="76" width="8" height="8" fill="#009943"/><rect x="132" y="76" width="8" height="8" fill="#009945"/><rect x="140" y="76" width="8" height="8" fill="#009946"/><rect x="148" y="76" width="8" height="8" fill="#009948"/><rect x="156" y="76" width="8" height="8" fill="#009949"/><rect x="164" y="76" width="8" height="8" fill="#00994b"/><rect x="172" y="76" width="8" height="8" fill="#00994c"/><rect x="180" y="76" width="8" height="8" fill="#00994e"/><rect x="188" y="76" width="8" height="8" fill="#00994f"/><rect x="196" y="76" width="8" height="8" fill="#009951"/><rect x="204" y="76" width="8" height="8" fill="#997f00"/><rect x="212" y="76" width="8" height="8" fill="#997400"/><rect x="220" y="76" width="8" height="8" fill="#996b00"/><rect x="228" y="76" width="8" height="8" fill="#996200"/><rect x="236" y="76" width="8" height="8" fill="#995a00"/><rect x="244" y="76" width="8" height="8" fill="#995300"/><rect x="252" y="76" width="8" height="8" fill="#994c00"/><rect x="260" y="76" width="8" height="8" fill="#994600"/><rect x="268" y="76" width="8" height="8" fill="#994100"/><rect x="276" y="76" width="8" height="8" fill="#993b00"/><rect x="284" y="76" width="8" height="8" fill="#993600"/><rect x="292" y="76" width="8" height="8" fill="#993200"/><rect x="300" y="76" width="8" height="8" fill="#99001e"/><rect x="308" y="76" width="8" height="8" fill="#99001c"/><rect x="316" y="76" width="8" height="8" fill="#99001a"/><rect x="324" y="76" width="8" height="8" fill="#990018"/><rect x="332" y="76" width="8" height="8" fill="#990017"/><rect x="340" y="76" width="8" height="8" fill="#990015"/><rect x="348" y="76" width="8" height="8" fill="#990014"/><rect x="356" y="76" width="8" height="8" fill="#990013"/><rect x="364" y="76" width="8" height="8" fill="#990011"/><rect x="372" y="76" width="8" height="8" fill="#990010"/><rect x="380" y="76" width="8" height="8" fill="#99000f"/><rect x="388" y="76" width="8" height="8" fill="#99000e"/><rect x="396" y="76" width="8" height="8" fill="#99000d"/><rect x="404" y="76" width="8" height="8" fill="#99000c"/><rect x="412" y="76" width="8" height="8" fill="#99000b"/><rect x="420" y="76" width="8" height="8" fill="#99000a"/><rect x="428" y="76" width="8" height="8" fill="#990009"/><rect x="436" y="76" width="8" height="8" fill="#990008"/><rect x="444" y="76" width="8" height="8" fill="#990008"/><rect x="452" y="76" width="8" height="8" fill="#990007"/><rect x="460" y="76" width="8" height="8" fill="#990006"/><rect x="468" y="76" width="8" height="8" fill="#990005"/><rect x="476" y="76" width="8" height="8" fill="#990005"/><rect x="484" y="76" width="8" height="8" fill="#990004"/><rect x="492" y="76" width="8" height="8" fill="#990004"/><rect x="500" y="76" width="8" height="8" fill="#990003"/><rect x="508" y="76" width="8" height="8" fill="#990003"/><rect x="516" y="76" width="8" height="8" fill="#990002"/><rect x="524" y="76" width="8" height="8" fill="#990002"/><rect x="532" y="76" width="8" height="8" fill="#990001"/><rect x="540" y="76" width="8" height="8" fill="#990001"/><rect x="548" y="76" width="8" height="8" fill="#990001"/><rect x="556" y="76" width="8" height="8" fill="#990000"/><rect x="564" y="76" width="8" height="8" fill="#990000"/><rect x="572" y="76" width="8" height="8" fill="#990000"/><rect x="580" y="76" width="8" height="8" fill="#990000"/><rect x="588" y="76" width="8" height="8" fill="#990000"/><rect x="596" y="76" width="8" height="8" fill="#990000"/><rect x="604" y="76" width="8" height="8" fill="#990000"/><rect x="612" y="76" width="8" height="8" fill="#990000"/><rect x="620" y="76" width="8" height="8" fill="#990000"/><rect x="628" y="76" width="8" height="8" fill="#990000"/><rect x="636" y="76" width="8" height="8" fill="#990000"/><rect x="644" y="76" width="8" height="8" fill="#990000"/><rect x="4" y="84" width="8" height="8" fill="#009938"/><rect x="12" y="84" width="8" height="8" fill="#009939"/><rect x="20" y="84" width="8" height="8" fill="#00993b"/><rect x="28" y="84" width="8" height="8" fill="#00993d"/><rect x="36" y="84" width="8" height="8" fill="#00993e"/><rect x="44" y="84" width="8" height="8" fill="#009940"/><rect x="52" y="84" width="8" height="8" fill="#009941"/><rect x="60" y="84" width="8" height="8" fill="#009943"/><rect x="68" y="84" width="8" height="8" fill="#009945"/><rect x="76" y="84" width="8" height="8" fill="#009946"/><rect x="84" y="84" width="8" height="8" fill="#009948"/><rect x="92" y="84" width="8" height="8" fill="#009949"/><rect x="100" y="84" width="8" height="8" fill="#00994b"/><rect x="108" y="84" width="8" height="8" fill="#00994d"/><rect x="116" y="84" width="8" height="8" fill="#00994e"/><rect x="124" y="84" width="8" height="8" fill="#009950"/><rect x="132" y="84" width="8" height="8" fill="#009951"/><rect x="140" y="84" width="8" height="8" fill="#009953"/><rect x="148" y="84" width="8" height="8" fill="#009955"/><rect x="156" y="84" width="8" height="8" fill="#009956"/><rect x="164" y="84" width="8" height="8" fill="#009958"/><rect x="172" y="84" width="8" height="8" fill="#009959"/><rect x="180" y="84" width="8" height="8" fill="#00995b"/><rect x="188" y="84" width="8" height="8" fill="#00995d"/><rect x="196" y="84" width="8" height="8" fill="#00995e"/><rect x="204" y="84" width="8" height="8" fill="#009960"/><rect x="212" y="84" width="8" height="8" fill="#009961"/><rect x="220" y="84" width="8" height="8" fill="#990043"/><rect x="228" y="84" width="8" height="8" fill="#99003f"/><rect x="236" y="84" width="8" height="8" fill="#99003b"/><rect x="244" y="84" width="8" height="8" fill="#990037"/><rect x="252" y="84" width="8" height="8" fill="#990034"/><rect x="260" y="84" width="8" height="8" fill="#990031"/><rect x="268" y="84" width="8" height="8" fill="#99002e"/><rect x="276" y="84" width="8" height="8" fill="#99002b"/><rect x="284" y="84" width="8" height="8" fill="#990029"/><rect x="292" y="84" width="8" height="8" fill="#990026"/><rect x="300" y="84" width="8" height="8" fill="#990024"/><rect x="308" y="84" width="8" height="8" fill="#990022"/><rect x="316" y="84" width="8" height="8" fill="#990020"/><rect x="324" y="84" width="8" height="8" fill="#99001e"/><rect x="332" y="84" width="8" height="8" fill="#99001c"/><rect x="340" y="84" width="8" height="8" fill="#99001b"/><rect x="348" y="84" width="8" height="8" fill="#990019"/><rect x="356" y="84" width="8" height="8" fill="#990017"/><rect x="364" y="84" width="8" height="8" fill="#990016"/><rect x="372" y="84" width="8" height="8" fill="#990015"/><rect x="380" y="84" width="8" height="8" fill="#990013"/><rect x="388" y="84" width="8" height="8" fill="#990012"/><rect x="396" y="84" width="8" height="8" fill="#990011"/><rect x="404" y="84" width="8" height="8" fill="#990010"/><rect x="412" y="84" width="8" height="8" fill="#99000f"/><rect x="420" y="84" width="8" height="8" fill="#99000e"/><rect x="428" y="84" width="8" height="8" fill="#99000d"/><rect x="436" y="84" width="8" height="8" fill="#99000c"/><rect x="444" y="84" width="8" height="8" fill="#99000b"/><rect x="452" y="84" width="8" height="8" fill="#99000a"/><rect x="460" y="84" width="8" height="8" fill="#990009"/><rect x="468" y="84" width="8" height="8" fill="#990008"/><rect x="476" y="84" width="8" height="8" fill="#990008"/><rect x="484" y="84" width="8" height="8" fill="#990007"/><rect x="492" y="84" width="8" height="8" fill="#990006"/><rect x="500" y="84" width="8" height="8" fill="#990006"/><rect x="508" y="84" width="8" height="8" fill="#990005"/><rect x="516" y="84" width="8" height="8" fill="#990004"/><rect x="524" y="84" width="8" height="8" fill="#990004"/><rect x="532" y="84" width="8" height="8" fill="#990003"/><rect x="540" y="84" width="8" height="8" fill="#990003"/><rect x="548" y="84" width="8" height="8" fill="#990002"/><rect x="556" y="84" width="8" height="8" fill="#990002"/><rect x="564" y="84" width="8" height="8" fill="#990002"/><rect x="572" y="84" width="8" height="8" fill="#990001"/><rect x="580" y="84" width="8" height="8" fill="#990001"/><rect x="588" y="84" width="8" height="8" fill="#990001"/><rect x="596" y="84" width="8" height="8" fill="#990000"/><rect x="604" y="84" width="8" height="8" fill="#990000"/><rect x="612" y="84" width="8" height="8" fill="#990000"/><rect x="620" y="84" width="8" height="8" fill="#990000"/><rect x="628" y="84" width="8" height="8" fill="#990000"/><rect x="636" y="84" width="8" height="8" fill="#990000"/><rect x="644" y="84" width="8" height="8" fill="#990000"/><rect x="4" y="92" width="8" height="8" fill="#009944"/><rect x="12" y="92" width="8" height="8" fill="#009946"/><rect x="20" y="92" width="8" height="8" fill="#009948"/><rect x="28" y="92" width="8" height="8" fill="#009949"/><rect x="36" y="92" width="8" height="8" fill="#00994b"/><rect x="44" y="92" width="8" height="8" fill="#00994d"/><rect x="52" y="92" width="8" height="8" fill="#00994e"/><rect x="60" y="92" width="8" height="8" fill="#009950"/><rect x="68" y="92" width="8" height="8" fill="#009952"/><rect x="76" y="92" width="8" height="8" fill="#009954"/><rect x="84" y="92" width="8" height="8" fill="#009955"/><rect x="92" y="92" width="8" height="8" fill="#009957"/><rect x="100" y="92" width="8" height="8" fill="#009959"/><rect x="108" y="92" width="8" height="8" fill="#00995a"/><rect x="116" y="92" width="8" height="8" fill="#00995c"/><rect x="124" y="92" width="8" height="8" fill="#00995e"/><rect x="132" y="92" width="8" height="8" fill="#00995f"/><rect x="140" y="92" width="8" height="8" fill="#009961"/><rect x="148" y="92" width="8" height="8" fill="#009963"/><rect x="156" y="92" width="8" height="8" fill="#009964"/><rect x="164" y="92" width="8" height="8" fill="#009966"/><rect x="172" y="92" width="8" height="8" fill="#009968"/><rect x="180" y="92" width="8" height="8" fill="#009969"/><rect x="188" y="92" width="8" height="8" fill="#00996b"/><rect x="196" y="92" width="8" height="8" fill="#00996d"/><rect x="204" y="92" width="8" height="8" fill="#00996e"/><rect x="212" y="92" width="8" height="8" fill="#009970"/><rect x="220" y="92" width="8" height="8" fill="#99004e"/><rect x="228" y="92" width="8" height="8" fill="#990049"/><rect x="236" y="92" width="8" height="8" fill="#990045"/><rect x="244" y="92" width="8" height="8" fill="#990041"/><rect x="252" y="92" width="8" height="8" fill="#99003d"/><rect x="260" y="92" width="8" height="8" fill="#99003a"/><rect x="268" y="92" width="8" height="8" fill="#990036"/><rect x="276" y="92" width="8" height="8" fill="#990033"/><rect x="284" y="92" width="8" height="8" fill="#990030"/><rect x="292" y="92" width="8" height="8" fill="#99002e"/><rect x="300" y="92" width="8" height="8" fill="#99002b"/><rect x="308" y="92" width="8" height="8" fill="#990029"/><rect x="316" y="92" width="8" height="8" fill="#990026"/><rect x="324" y="92" width="8" height="8" fill="#990024"/><rect x="332" y="92" width="8" height="8" fill="#990022"/><rect x="340" y="92" width="8" height="8" fill="#990020"/><rect x="348" y="92" width="8" height="8" fill="#99001e"/><rect x="356" y="92" width="8" height="8" fill="#99001d"/><rect x="364" y="92" width="8" height="8" fill="#99001b"/><rect x="372" y="92" width="8" height="8" fill="#99001a"/><rect x="380" y="92" width="8" height="8" fill="#990018"/><rect x="388" y="92" width="8" height="8" fill="#990017"/><rect x="396" y="92" width="8" height="8" fill="#990015"/><rect x="404" y="92" width="8" height="8" fill="#990014"/><rect x="412" y="92" width="8" height="8" fill="#990013"/><rect x="420" y="92" width="8" height="8" fill="#990012"/><rect x="428" y="92" width="8" height="8" fill="#990010"/><rect x="436" y="92" width="8" height="8" fill="#99000f"/><rect x="444" y="92" width="8" height="8" fill="#99000e"/><rect x="452" y="92" width="8" height="8" fill="#99000d"/><rect x="460" y="92" width="8" height="8" fill="#99000c"/><rect x="468" y="92" width="8" height="8" fill="#99000c"/><rect x="476" y="92" width="8" height="8" fill="#99000b"/><rect x="484" y="92" width="8" height="8" fill="#99000a"/><rect x="492" y="92" width="8" height="8" fill="#990009"/><rect x="500" y="92" width="8" height="8" fill="#990008"/><rect x="508" y="92" width="8" height="8" fill="#990008"/><rect x="516" y="92" width="8" height="8" fill="#990007"/><rect x="524" y="92" width="8" height="8" fill="#990006"/><rect x="532" y="92" width="8" height="8" fill="#990006"/><rect x="540" y="92" width="8" height="8" fill="#990005"/><rect x="548" y="92" width="8" height="8" fill="#990005"/><rect x="556" y="92" width="8" height="8" fill="#990004"/><rect x="564" y="92" width="8" height="8" fill="#990004"/><rect x="572" y="92" width="8" height="8" fill="#990003"/><rect x="580" y="92" width="8" height="8" fill="#990003"/><rect x="588" y="92" width="8" height="8" fill="#990002"/><rect x="596" y="92" width="8" height="8" fill="#990002"/><rect x="604" y="92" width="8" height="8" fill="#990002"/><rect x="612" y="92" width="8" height="8" fill="#990001"/><rect x="620" y="92" width="8" height="8" fill="#990001"/><rect x="628" y="92" width="8" height="8" fill="#990001"/><rect x="636" y="92" width="8" height="8" fill="#990000"/><rect x="644" y="92" width="8" height="8" fill="#990000"/><rect x="4" y="100" width="8" height="8" fill="#009952"/><rect x="12" y="100" width="8" height="8" fill="#009954"/><rect x="20" y="100" width="8" height="8" fill="#009956"/><rect x="28" y="100" width="8" height="8" fill="#009958"/><rect x="36" y="100" width="8" height="8" fill="#009959"/><rect x="44" y="100" width="8" height="8" fill="#00995b"/><rect x="52" y="100" width="8" height="8" fill="#00995d"/><rect x="60" y="100" width="8" height="8" fill="#00995f"/><rect x="68" y="100" width="8" height="8" fill="#009960"/><rect x="76" y="100" width="8" height="8" fill="#009962"/><rect x="84" y="100" width="8" height="8" fill="#009964"/><rect x="92" y="100" width="8" height="8" fill="#009966"/><rect x="100" y="100" width="8" height="8" fill="#009967"/><rect x="108" y="100" width="8" height="8" fill="#009969"/><rect x="116" y="100" width="8" height="8" fill="#00996b"/><rect x="124" y="100" width="8" height="8" fill="#00996d"/><rect x="132" y="100" width="8" height="8" fill="#00996e"/><rect x="140" y="100" width="8" height="8" fill="#009970"/><rect x="148" y="100" width="8" height="8" fill="#009972"/><rect x="156" y="100" width="8" height="8" fill="#009974"/><rect x="164" y="100" width="8" height="8" fill="#009976"/><rect x="172" y="100" width="8" height="8" fill="#009977"/><rect x="180" y="100" width="8" height="8" fill="#009979"/><rect x="188" y="100" width="8" height="8" fill="#00997b"/><rect x="196" y="100" width="8" height="8" fill="#00997c"/><rect x="204" y="100" width="8" height="8" fill="#00997e"/><rect x="212" y="100" width="8" height="8" fill="#009980"/><rect x="220" y="100" width="8" height="8" fill="#99005a"/><rect x="228" y="100" width="8" height="8" fill="#990055"/><rect x="236" y="100" width="8" height="8" fill="#990050"/><rect x="244" y="100" width="8" height="8" fill="#99004b"/><rect x="252" y="100" width="8" height="8" fill="#990047"/><rect x="260" y="100" width="8" height="8" fill="#990043"/><rect x="268" y="100" width="8" height="8" fill="#99003f"/><rect x="276" y="100" width="8" height="8" fill="#99003c"/><rect x="284" y="100" width="8" height="8" fill="#990039"/><rect x="292" y="100" width="8" height="8" fill="#990036"/><rect x="300" y="100" width="8" height="8" fill="#990033"/><rect x="308" y="100" width="8" height="8" fill="#990030"/><rect x="316" y="100" width="8" height="8" fill="#99002d"/><rect x="324" y="100" width="8" height="8" fill="#99002b"/><rect x="332" y="100" width="8" height="8" fill="#990029"/><rect x="340" y="100" width="8" height="8" fill="#990026"/><rect x="348" y="100" width="8" height="8" fill="#990024"/><rect x="356" y="100" width="8" height="8" fill="#990022"/><rect x="364" y="100" width="8" height="8" fill="#990021"/><rect x="372" y="100" width="8" height="8" fill="#99001f"/><rect x="380" y="100" width="8" height="8" fill="#99001d"/><rect x="388" y="100" width="8" height="8" fill="#99001c"/><rect x="396" y="100" width="8" height="8" fill="#99001a"/><rect x="404" y="100" width="8" height="8" fill="#990019"/><rect x="412" y="100" width="8" height="8" fill="#990017"/><rect x="420" y="100" width="8" height="8" fill="#990016"/><rect x="428" y="100" width="8" height="8" fill="#990015"/><rect x="436" y="100" width="8" height="8" fill="#990013"/><rect x="444" y="100" width="8" height="8" fill="#990012"/><rect x="452" y="100" width="8" height="8" fill="#990011"/><rect x="460" y="100" width="8" height="8" fill="#990010"/><rect x="468" y="100" width="8" height="8" fill="#99000f"/><rect x="476" y="100" width="8" height="8" fill="#99000e"/><rect x="484" y="100" width="8" height="8" fill="#99000d"/><rect x="492" y="100" width="8" height="8" fill="#99000c"/><rect x="500" y="100" width="8" height="8" fill="#99000c"/><rect x="508" y="100" width="8" height="8" fill="#99000b"/><rect x="516" y="100" width="8" height="8" fill="#99000a"/><rect x="524" y="100" width="8" height="8" fill="#990009"/><rect x="532" y="100" width="8" height="8" fill="#990009"/><rect x="540" y="100" width="8" height="8" fill="#990008"/><rect x="548" y="100" width="8" height="8" fill="#990007"/><rect x="556" y="100" width="8" height="8" fill="#990007"/><rect x="564" y="100" width="8" height="8" fill="#990006"/><rect x="572" y="100" width="8" height="8" fill="#990005"/><rect x="580" y="100" width="8" height="8" fill="#990005"/><rect x="588" y="100" width="8" height="8" fill="#990004"/><rect x="596" y="100" width="8" height="8" fill="#990004"/><rect x="604" y="100" width="8" height="8" fill="#990003"/><rect x="612" y="100" width="8" height="8" fill="#990003"/><rect x="620" y="100" width="8" height="8" fill="#990003"/><rect x="628" y="100" width="8" height="8" fill="#990002"/><rect x="636" y="100" width="8" height="8" fill="#990002"/><rect x="4" y="108" width="8" height="8" fill="#009962"/><rect x="12" y="108" width="8" height="8" fill="#009964"/><rect x="20" y="108" width="8" height="8" fill="#009965"/><rect x="28" y="108" width="8" height="8" fill="#009967"/><rect x="36" y="108" width="8" height="8" fill="#009969"/><rect x="44" y="108" width="8" height="8" fill="#00996b"/><rect x="52" y="108" width="8" height="8" fill="#00996d"/><rect x="60" y="108" width="8" height="8" fill="#00996f"/><rect x="68" y="108" width="8" height="8" fill="#009970"/><rect x="76" y="108" width="8" height="8" fill="#009972"/><rect x="84" y="108" width="8" height="8" fill="#009974"/><rect x="92" y="108" width="8" height="8" fill="#009976"/><rect x="100" y="108" width="8" height="8" fill="#009978"/><rect x="108" y="108" width="8" height="8" fill="#00997a"/><rect x="116" y="108" width="8" height="8" fill="#00997c"/><rect x="124" y="108" width="8" height="8" fill="#00997d"/><rect x="132" y="108" width="8" height="8" fill="#00997f"/><rect x="140" y="108" width="8" height="8" fill="#009981"/><rect x="148" y="108" width="8" height="8" fill="#009983"/><rect x="156" y="108" width="8" height="8" fill="#009985"/><rect x="164" y="108" width="8" height="8" fill="#009986"/><rect x="172" y="108" width="8" height="8" fill="#009988"/><rect x="180" y="108" width="8" height="8" fill="#00998a"/><rect x="188" y="108" width="8" height="8" fill="#00998c"/><rect x="196" y="108" width="8" height="8" fill="#00998e"/><rect x="204" y="108" width="8" height="8" fill="#009990"/><rect x="212" y="108" width="8" height="8" fill="#009991"/><rect x="220" y="108" width="8" height="8" fill="#990067"/><rect x="228" y="108" width="8" height="8" fill="#990061"/><rect x="236" y="108" width="8" height="8" fill="#99005b"/><rect x="244" y="108" width="8" height="8" fill="#990056"/><rect x="252" y="108" width="8" height="8" fill="#990052"/><rect x="260" y="108" width="8" height="8" fill="#99004d"/><rect x="268" y="108" width="8" height="8" fill="#990049"/><rect x="276" y="108" width="8" height="8" fill="#990045"/><rect x="284" y="108" width="8" height="8" fill="#990041"/><rect x="292" y="108" width="8" height="8" fill="#99003e"/><rect x="300" y="108" width="8" height="8" fill="#99003b"/><rect x="308" y="108" width="8" height="8" fill="#990038"/><rect x="316" y="108" width="8" height="8" fill="#990035"/><rect x="324" y="108" width="8" height="8" fill="#990032"/><rect x="332" y="108" width="8" height="8" fill="#99002f"/><rect x="340" y="108" width="8" height="8" fill="#99002d"/><rect x="348" y="108" width="8" height="8" fill="#99002b"/><rect x="356" y="108" width="8" height="8" fill="#990029"/><rect x="364" y="108" width="8" height="8" fill="#990026"/><rect x="372" y="108" width="8" height="8" fill="#990024"/><rect x="380" y="108" width="8" height="8" fill="#990023"/><rect x="388" y="108" width="8" height="8" fill="#990021"/><rect x="396" y="108" width="8" height="8" fill="#99001f"/><rect x="404" y="108" width="8" height="8" fill="#99001d"/><rect x="412" y="108" width="8" height="8" fill="#99001c"/><rect x="420" y="108" width="8" height="8" fill="#99001a"/><rect x="428" y="108" width="8" height="8" fill="#990019"/><rect x="436" y="108" width="8" height="8" fill="#990018"/><rect x="444" y="108" width="8" height="8" fill="#990016"/><rect x="452" y="108" width="8" height="8" fill="#990015"/><rect x="460" y="108" width="8" height="8" fill="#990014"/><rect x="468" y="108" width="8" height="8" fill="#990013"/><rect x="476" y="108" width="8" height="8" fill="#990012"/><rect x="484" y="108" width="8" height="8" fill="#990011"/><rect x="492" y="108" width="8" height="8" fill="#990010"/><rect x="500" y="108" width="8" height="8" fill="#99000f"/><rect x="508" y="108" width="8" height="8" fill="#99000e"/><rect x="516" y="108" width="8" height="8" fill="#99000d"/><rect x="524" y="108" width="8" height="8" fill="#99000c"/><rect x="532" y="108" width="8" height="8" fill="#99000b"/><rect x="540" y="108" width="8" height="8" fill="#99000b"/><rect x="548" y="108" width="8" height="8" fill="#99000a"/><rect x="556" y="108" width="8" height="8" fill="#990009"/><rect x="564" y="108" width="8" height="8" fill="#990009"/><rect x="572" y="108" width="8" height="8" fill="#990008"/><rect x="580" y="108" width="8" height="8" fill="#990007"/><rect x="588" y="108" width="8" height="8" fill="#990007"/><rect x="596" y="108" width="8" height="8" fill="#990006"/><rect x="604" y="108" width="8" height="8" fill="#990006"/><rect x="612" y="108" width="8" height="8" fill="#990005"/><rect x="620" y="108" width="8" height="8" fill="#990005"/><rect x="628" y="108" width="8" height="8" fill="#990004"/><rect x="12" y="116" width="8" height="8" fill="#009975"/><rect x="20" y="116" width="8" height="8" fill="#009977"/><rect x="28" y="116" width="8" height="8" fill="#009978"/><rect x="36" y="116" width="8" height="8" fill="#00997a"/><rect x="44" y="116" width="8" height="8" fill="#00997c"/><rect x="52" y="116" width="8" height="8" fill="#00997e"/><rect x="60" y="116" width="8" height="8" fill="#009980"/><rect x="68" y="116" width="8" height="8" fill="#009982"/><rect x="76" y="116" width="8" height="8" fill="#009984"/><rect x="84" y="116" width="8" height="8" fill="#009986"/><rect x="92" y="116" width="8" height="8" fill="#009988"/><rect x="100" y="116" width="8" height="8" fill="#00998a"/><rect x="108" y="116" width="8" height="8" fill="#00998c"/><rect x="116" y="116" width="8" height="8" fill="#00998e"/><rect x="124" y="116" width="8" height="8" fill="#009990"/><rect x="132" y="116" width="8" height="8" fill="#009991"/><rect x="140" y="116" width="8" height="8" fill="#009993"/><rect x="148" y="116" width="8" height="8" fill="#009995"/><rect x="156" y="116" width="8" height="8" fill="#009997"/><rect x="164" y="116" width="8" height="8" fill="#009999"/><rect x="172" y="116" width="8" height="8" fill="#009799"/><rect x="180" y="116" width="8" height="8" fill="#009599"/><rect x="188" y="116" width="8" height="8" fill="#009399"/><rect x="196" y="116" width="8" height="8" fill="#009299"/><rect x="204" y="116" width="8" height="8" fill="#009099"/><rect x="212" y="116" width="8" height="8" fill="#008e99"/><rect x="220" y="116" width="8" height="8" fill="#990075"/><rect x="228" y="116" width="8" height="8" fill="#99006e"/><rect x="236" y="116" width="8" height="8" fill="#990068"/><rect x="244" y="116" width="8" height="8" fill="#990062"/><rect x="252" y="116" width="8" height="8" fill="#99005d"/><rect x="260" y="116" width="8" height="8" fill="#990058"/><rect x="268" y="116" width="8" height="8" fill="#990053"/><rect x="276" y="116" width="8" height="8" fill="#99004f"/><rect x="284" y="116" width="8" height="8" fill="#99004b"/><rect x="292" y="116" width="8" height="8" fill="#990047"/><rect x="300" y="116" width="8" height="8" fill="#990043"/><rect x="308" y="116" width="8" height="8" fill="#990040"/><rect x="316" y="116" width="8" height="8" fill="#99003d"/><rect x="324" y="116" width="8" height="8" fill="#99003a"/><rect x="332" y="116" width="8" height="8" fill="#990037"/><rect x="340" y="116" width="8" height="8" fill="#990034"/><rect x="348" y="116" width="8" height="8" fill="#990032"/><rect x="356" y="116" width="8" height="8" fill="#99002f"/><rect x="364" y="116" width="8" height="8" fill="#99002d"/><rect x="372" y="116" width="8" height="8" fill="#99002b"/><rect x="380" y="116" width="8" height="8" fill="#990028"/><rect x="388" y="116" width="8" height="8" fill="#990026"/><rect x="396" y="116" width="8" height="8" fill="#990025"/><rect x="404" y="116" width="8" height="8" fill="#990023"/><rect x="412" y="116" width="8" height="8" fill="#990021"/><rect x="420" y="116" width="8" height="8" fill="#99001f"/><rect x="428" y="116" width="8" height="8" fill="#99001e"/><rect x="436" y="116" width="8" height="8" fill="#99001c"/><rect x="444" y="116" width="8" height="8" fill="#99001b"/><rect x="452" y="116" width="8" height="8" fill="#99001a"/><rect x="460" y="116" width="8" height="8" fill="#990018"/><rect x="468" y="116" width="8" height="8" fill="#990017"/><rect x="476" y="116" width="8" height="8" fill="#990016"/><rect x="484" y="116" width="8" height="8" fill="#990015"/><rect x="492" y="116" width="8" height="8" fill="#990014"/><rect x="500" y="116" width="8" height="8" fill="#990012"/><rect x="508" y="116" width="8" height="8" fill="#990011"/><rect x="516" y="116" width="8" height="8" fill="#990010"/><rect x="524" y="116" width="8" height="8" fill="#990010"/><rect x="532" y="116" width="8" height="8" fill="#99000f"/><rect x="540" y="116" width="8" height="8" fill="#99000e"/><rect x="548" y="116" width="8" height="8" fill="#99000d"/><rect x="556" y="116" width="8" height="8" fill="#99000c"/><rect x="564" y="116" width="8" height="8" fill="#99000b"/><rect x="572" y="116" width="8" height="8" fill="#99000b"/><rect x="580" y="116" width="8" height="8" fill="#99000a"/><rect x="588" y="116" width="8" height="8" fill="#990009"/><rect x="596" y="116" width="8" height="8" fill="#990009"/><rect x="604" y="116" width="8" height="8" fill="#990008"/><rect x="612" y="116" width="8" height="8" fill="#990007"/><rect x="620" y="116" width="8" height="8" fill="#990007"/><rect x="12" y="124" width="8" height="8" fill="#009987"/><rect x="20" y="124" width="8" height="8" fill="#009989"/><rect x="28" y="124" width="8" height="8" fill="#00998c"/><rect x="36" y="124" width="8" height="8" fill="#00998e"/><rect x="44" y="124" width="8" height="8" fill="#009990"/><rect x="52" y="124" width="8" height="8" fill="#009992"/><rect x="60" y="124" width="8" height="8" fill="#009994"/><rect x="68" y="124" width="8" height="8" fill="#009996"/><rect x="76" y="124" width="8" height="8" fill="#009998"/><rect x="84" y="124" width="8" height="8" fill="#009899"/><rect x="92" y="124" width="8" height="8" fill="#009699"/><rect x="100" y="124" width="8" height="8" fill="#009599"/><rect x="108" y="124" width="8" height="8" fill="#009399"/><rect x="116" y="124" width="8" height="8" fill="#009199"/><rect x="124" y="124" width="8" height="8" fill="#008f99"/><rect x="132" y="124" width="8" height="8" fill="#008d99"/><rect x="140" y="124" width="8" height="8" fill="#008c99"/><rect x="148" y="124" width="8" height="8" fill="#008a99"/><rect x="156" y="124" width="8" height="8" fill="#008999"/><rect x="164" y="124" width="8" height="8" fill="#008799"/><rect x="172" y="124" width="8" height="8" fill="#008599"/><rect x="180" y="124" width="8" height="8" fill="#008499"/><rect x="188" y="124" width="8" height="8" fill="#008399"/><rect x="196" y="124" width="8" height="8" fill="#008199"/><rect x="204" y="124" width="8" height="8" fill="#008099"/><rect x="212" y="124" width="8" height="8" fill="#007e99"/><rect x="220" y="124" width="8" height="8" fill="#990084"/><rect x="228" y="124" width="8" height="8" fill="#99007d"/><rect x="236" y="124" width="8" height="8" fill="#990076"/><rect x="244" y="124" width="8" height="8" fill="#99006f"/><rect x="252" y="124" width="8" height="8" fill="#990069"/><rect x="260" y="124" width="8" height="8" fill="#990064"/><rect x="268" y="124" width="8" height="8" fill="#99005e"/><rect x="276" y="124" width="8" height="8" fill="#99005a"/><rect x="284" y="124" width="8" height="8" fill="#990055"/><rect x="292" y="124" width="8" height="8" fill="#990051"/><rect x="300" y="124" width="8" height="8" fill="#99004d"/><rect x="308" y="124" width="8" height="8" fill="#990049"/><rect x="316" y="124" width="8" height="8" fill="#990045"/><rect x="324" y="124" width="8" height="8" fill="#990042"/><rect x="332" y="124" width="8" height="8" fill="#99003f"/><rect x="340" y="124" width="8" height="8" fill="#99003c"/><rect x="348" y="124" width="8" height="8" fill="#990039"/><rect x="356" y="124" width="8" height="8" fill="#990036"/><rect x="364" y="124" width="8" height="8" fill="#990033"/><rect x="372" y="124" width="8" height="8" fill="#990031"/><rect x="380" y="124" width="8" height="8" fill="#99002f"/><rect x="388" y="124" width="8" height="8" fill="#99002c"/><rect x="396" y="124" width="8" height="8" fill="#99002a"/><rect x="404" y="124" width="8" height="8" fill="#990028"/><rect x="412" y="124" width="8" height="8" fill="#990026"/><rect x="420" y="124" width="8" height="8" fill="#990025"/><rect x="428" y="124" width="8" height="8" fill="#990023"/><rect x="436" y="124" width="8" height="8" fill="#990021"/><rect x="444" y="124" width="8" height="8" fill="#990020"/><rect x="452" y="124" width="8" height="8" fill="#99001e"/><rect x="460" y="124" width="8" height="8" fill="#99001d"/><rect x="468" y="124" width="8" height="8" fill="#99001b"/><rect x="476" y="124" width="8" height="8" fill="#99001a"/><rect x="484" y="124" width="8" height="8" fill="#990019"/><rect x="492" y="124" width="8" height="8" fill="#990017"/><rect x="500" y="124" width="8" height="8" fill="#990016"/><rect x="508" y="124" width="8" height="8" fill="#990015"/><rect x="516" y="124" width="8" height="8" fill="#990014"/><rect x="524" y="124" width="8" height="8" fill="#990013"/><rect x="532" y="124" width="8" height="8" fill="#990012"/><rect x="540" y="124" width="8" height="8" fill="#990011"/><rect x="548" y="124" width="8" height="8" fill="#990010"/><rect x="556" y="124" width="8" height="8" fill="#99000f"/><rect x="564" y="124" width="8" height="8" fill="#99000e"/><rect x="572" y="124" width="8" height="8" fill="#99000e"/><rect x="580" y="124" width="8" height="8" fill="#99000d"/><rect x="588" y="124" width="8" height="8" fill="#99000c"/><rect x="596" y="124" width="8" height="8" fill="#99000b"/><rect x="604" y="124" width="8" height="8" fill="#99000b"/><rect x="612" y="124" width="8" height="8" fill="#99000a"/><rect x="12" y="132" width="8" height="8" fill="#009699"/><rect x="20" y="132" width="8" height="8" fill="#009499"/><rect x="28" y="132" width="8" height="8" fill="#009299"/><rect x="36" y="132" width="8" height="8" fill="#009099"/><rect x="44" y="132" width="8" height="8" fill="#008e99"/><rect x="52" y="132" width="8" height="8" fill="#008c99"/><rect x="60" y="132" width="8" height="8" fill="#008b99"/><rect x="68" y="132" width="8" height="8" fill="#008999"/><rect x="76" y="132" width="8" height="8" fill="#008799"/><rect x="84" y="132" width="8" height="8" fill="#008699"/><rect x="92" y="132" width="8" height="8" fill="#008499"/><rect x="100" y="132" width="8" height="8" fill="#008299"/><rect x="108" y="132" width="8" height="8" fill="#008199"/><rect x="116" y="132" width="8" height="8" fill="#008099"/><rect x="124" y="132" width="8" height="8" fill="#007e99"/><rect x="132" y="132" width="8" height="8" fill="#007d99"/><rect x="140" y="132" width="8" height="8" fill="#007b99"/><rect x="148" y="132" width="8" height="8" fill="#007a99"/><rect x="156" y="132" width="8" height="8" fill="#007999"/><rect x="164" y="132" width="8" height="8" fill="#007899"/><rect x="172" y="132" width="8" height="8" fill="#007699"/><rect x="180" y="132" width="8" height="8" fill="#007599"/><rect x="188" y="132" width="8" height="8" fill="#007499"/><rect x="196" y="132" width="8" height="8" fill="#007399"/><rect x="204" y="132" width="8" height="8" fill="#007299"/><rect x="212" y="132" width="8" height="8" fill="#940099"/><rect x="220" y="132" width="8" height="8" fill="#990095"/><rect x="228" y="132" width="8" height="8" fill="#99008c"/><rect x="236" y="132" width="8" height="8" fill="#990085"/><rect x="244" y="132" width="8" height="8" fill="#99007d"/><rect x="252" y="132" width="8" height="8" fill="#990076"/><rect x="260" y="132" width="8" height="8" fill="#990070"/><rect x="268" y="132" width="8" height="8" fill="#99006a"/><rect x="276" y="132" width="8" height="8" fill="#990065"/><rect x="284" y="132" width="8" height="8" fill="#990060"/><rect x="292" y="132" width="8" height="8" fill="#99005b"/><rect x="300" y="132" width="8" height="8" fill="#990056"/><rect x="308" y="132" width="8" height="8" fill="#990052"/><rect x="316" y="132" width="8" height="8" fill="#99004e"/><rect x="324" y="132" width="8" height="8" fill="#99004b"/><rect x="332" y="132" width="8" height="8" fill="#990047"/><rect x="340" y="132" width="8" height="8" fill="#990044"/><rect x="348" y="132" width="8" height="8" fill="#990040"/><rect x="356" y="132" width="8" height="8" fill="#99003d"/><rect x="364" y="132" width="8" height="8" fill="#99003b"/><rect x="372" y="132" width="8" height="8" fill="#990038"/><rect x="380" y="132" width="8" height="8" fill="#990035"/><rect x="388" y="132" width="8" height="8" fill="#990033"/><rect x="396" y="132" width="8" height="8" fill="#990031"/><rect x="404" y="132" width="8" height="8" fill="#99002e"/><rect x="412" y="132" width="8" height="8" fill="#99002c"/><rect x="420" y="132" width="8" height="8" fill="#99002a"/><rect x="428" y="132" width="8" height="8" fill="#990028"/><rect x="436" y="132" width="8" height="8" fill="#990026"/><rect x="444" y="132" width="8" height="8" fill="#990025"/><rect x="452" y="132" width="8" height="8" fill="#990023"/><rect x="460" y="132" width="8" height="8" fill="#990021"/><rect x="468" y="132" width="8" height="8" fill="#990020"/><rect x="476" y="132" width="8" height="8" fill="#99001e"/><rect x="484" y="132" width="8" height="8" fill="#99001d"/><rect x="492" y="132" width="8" height="8" fill="#99001c"/><rect x="500" y="132" width="8" height="8" fill="#99001a"/><rect x="508" y="132" width="8" height="8" fill="#990019"/><rect x="516" y="132" width="8" height="8" fill="#990018"/><rect x="524" y="132" width="8" height="8" fill="#990017"/><rect x="532" y="132" width="8" height="8" fill="#990016"/><rect x="540" y="132" width="8" height="8" fill="#990015"/><rect x="548" y="132" width="8" height="8" fill="#990014"/><rect x="556" y="132" width="8" height="8" fill="#990013"/><rect x="564" y="132" width="8" height="8" fill="#990012"/><rect x="572" y="132" width="8" height="8" fill="#990011"/><rect x="580" y="132" width="8" height="8" fill="#990010"/><rect x="588" y="132" width="8" height="8" fill="#99000f"/><rect x="596" y="132" width="8" height="8" fill="#99000e"/><rect x="604" y="132" width="8" height="8" fill="#99000d"/><rect x="20" y="140" width="8" height="8" fill="#008199"/><rect x="28" y="140" width="8" height="8" fill="#007f99"/><rect x="36" y="140" width="8" height="8" fill="#007e99"/><rect x="44" y="140" width="8" height="8" fill="#007c99"/><rect x="52" y="140" width="8" height="8" fill="#007b99"/><rect x="60" y="140" width="8" height="8" fill="#007a99"/><rect x="68" y="140" width="8" height="8" fill="#007899"/><rect x="76" y="140" width="8" height="8" fill="#007799"/><rect x="84" y="140" width="8" height="8" fill="#007699"/><rect x="92" y="140" width="8" height="8" fill="#007499"/><rect x="100" y="140" width="8" height="8" fill="#007399"/><rect x="108" y="140" width="8" height="8" fill="#007299"/><rect x="116" y="140" width="8" height="8" fill="#007199"/><rect x="124" y="140" width="8" height="8" fill="#007099"/><rect x="132" y="140" width="8" height="8" fill="#006e99"/><rect x="140" y="140" width="8" height="8" fill="#006d99"/><rect x="148" y="140" width="8" height="8" fill="#006c99"/><rect x="156" y="140" width="8" height="8" fill="#006b99"/><rect x="164" y="140" width="8" height="8" fill="#006a99"/><rect x="172" y="140" width="8" height="8" fill="#006999"/><rect x="180" y="140" width="8" height="8" fill="#006899"/><rect x="188" y="140" width="8" height="8" fill="#006799"/><rect x="196" y="140" width="8" height="8" fill="#006699"/><rect x="204" y="140" width="8" height="8" fill="#006599"/><rect x="212" y="140" width="8" height="8" fill="#840099"/><rect x="220" y="140" width="8" height="8" fill="#8c0099"/><rect x="228" y="140" width="8" height="8" fill="#950099"/><rect x="236" y="140" width="8" height="8" fill="#990095"/><rect x="244" y="140" width="8" height="8" fill="#99008c"/><rect x="252" y="140" width="8" height="8" fill="#990085"/><rect x="260" y="140" width="8" height="8" fill="#99007e"/><rect x="268" y="140" width="8" height="8" fill="#990077"/><rect x="276" y="140" width="8" height="8" fill="#990071"/><rect x="284" y="140" width="8" height="8" fill="#99006b"/><rect x="292" y="140" width="8" height="8" fill="#990066"/><rect x="300" y="140" width="8" height="8" fill="#990061"/><rect x="308" y="140" width="8" height="8" fill="#99005c"/><rect x="316" y="140" width="8" height="8" fill="#990058"/><rect x="324" y="140" width="8" height="8" fill="#990054"/><rect x="332" y="140" width="8" height="8" fill="#990050"/><rect x="340" y="140" width="8" height="8" fill="#99004c"/><rect x="348" y="140" width="8" height="8" fill="#990049"/><rect x="356" y="140" width="8" height="8" fill="#990045"/><rect x="364" y="140" width="8" height="8" fill="#990042"/><rect x="372" y="140" width="8" height="8" fill="#99003f"/><rect x="380" y="140" width="8" height="8" fill="#99003c"/><rect x="388" y="140" width="8" height="8" fill="#99003a"/><rect x="396" y="140" width="8" height="8" fill="#990037"/><rect x="404" y="140" width="8" height="8" fill="#990035"/><rect x="412" y="140" width="8" height="8" fill="#990032"/><rect x="420" y="140" width="8" height="8" fill="#990030"/><rect x="428" y="140" width="8" height="8" fill="#99002e"/><rect x="436" y="140" width="8" height="8" fill="#99002c"/><rect x="444" y="140" width="8" height="8" fill="#99002a"/><rect x="452" y="140" width="8" height="8" fill="#990028"/><rect x="460" y="140" width="8" height="8" fill="#990026"/><rect x="468" y="140" width="8" height="8" fill="#990025"/><rect x="476" y="140" width="8" height="8" fill="#990023"/><rect x="484" y="140" width="8" height="8" fill="#990022"/><rect x="492" y="140" width="8" height="8" fill="#990020"/><rect x="500" y="140" width="8" height="8" fill="#99001f"/><rect x="508" y="140" width="8" height="8" fill="#99001d"/><rect x="516" y="140" width="8" height="8" fill="#99001c"/><rect x="524" y="140" width="8" height="8" fill="#99001b"/><rect x="532" y="140" width="8" height="8" fill="#99001a"/><rect x="540" y="140" width="8" height="8" fill="#990018"/><rect x="548" y="140" width="8" height="8" fill="#990017"/><rect x="556" y="140" width="8" height="8" fill="#990016"/><rect x="564" y="140" width="8" height="8" fill="#990015"/><rect x="572" y="140" width="8" height="8" fill="#990014"/><rect x="580" y="140" width="8" height="8" fill="#990013"/><rect x="588" y="140" width="8" height="8" fill="#990012"/><rect x="596" y="140" width="8" height="8" fill="#990011"/><rect x="604" y="140" width="8" height="8" fill="#990011"/><rect x="20" y="148" width="8" height="8" fill="#007199"/><rect x="28" y="148" width="8" height="8" fill="#007099"/><rect x="36" y="148" width="8" height="8" fill="#006e99"/><rect x="44" y="148" width="8" height="8" fill="#006d99"/><rect x="52" y="148" width="8" height="8" fill="#006c99"/><rect x="60" y="148" width="8" height="8" fill="#006b99"/><rect x="68" y="148" width="8" height="8" fill="#006a99"/><rect x="76" y="148" width="8" height="8" fill="#006999"/><rect x="84" y="148" width="8" height="8" fill="#006899"/><rect x="92" y="148" width="8" height="8" fill="#006799"/><rect x="100" y="148" width="8" height="8" fill="#006699"/><rect x="108" y="148" width="8" height="8" fill="#006599"/><rect x="116" y="148" width="8" height="8" fill="#006499"/><rect x="124" y="148" width="8" height="8" fill="#006399"/><rect x="132" y="148" width="8" height="8" fill="#006299"/><rect x="140" y="148" width="8" height="8" fill="#006199"/><rect x="148" y="148" width="8" height="8" fill="#006099"/><rect x="156" y="148" width="8" height="8" fill="#005f99"/><rect x="164" y="148" width="8" height="8" fill="#005f99"/><rect x="172" y="148" width="8" height="8" fill="#005e99"/><rect x="180" y="148" width="8" height="8" fill="#005d99"/><rect x="188" y="148" width="8" height="8" fill="#005c99"/><rect x="196" y="148" width="8" height="8" fill="#005b99"/><rect x="204" y="148" width="8" height="8" fill="#005b99"/><rect x="212" y="148" width="8" height="8" fill="#760099"/><rect x="220" y="148" width="8" height="8" fill="#7d0099"/><rect x="228" y="148" width="8" height="8" fill="#850099"/><rect x="236" y="148" width="8" height="8" fill="#8d0099"/><rect x="244" y="148" width="8" height="8" fill="#950099"/><rect x="252" y="148" width="8" height="8" fill="#990094"/><rect x="260" y="148" width="8" height="8" fill="#99008c"/><rect x="268" y="148" width="8" height="8" fill="#990085"/><rect x="276" y="148" width="8" height="8" fill="#99007e"/><rect x="284" y="148" width="8" height="8" fill="#990078"/><rect x="292" y="148" width="8" height="8" fill="#990072"/><rect x="300" y="148" width="8" height="8" fill="#99006c"/><rect x="308" y="148" width="8" height="8" fill="#990067"/><rect x="316" y="148" width="8" height="8" fill="#990062"/><rect x="324" y="148" width="8" height="8" fill="#99005e"/><rect x="332" y="148" width="8" height="8" fill="#990059"/><rect x="340" y="148" width="8" height="8" fill="#990055"/><rect x="348" y="148" width="8" height="8" fill="#990051"/><rect x="356" y="148" width="8" height="8" fill="#99004e"/><rect x="364" y="148" width="8" height="8" fill="#99004a"/><rect x="372" y="148" width="8" height="8" fill="#990047"/><rect x="380" y="148" width="8" height="8" fill="#990044"/><rect x="388" y="148" width="8" height="8" fill="#990041"/><rect x="396" y="148" width="8" height="8" fill="#99003e"/><rect x="404" y="148" width="8" height="8" fill="#99003b"/><rect x="412" y="148" width="8" height="8" fill="#990039"/><rect x="420" y="148" width="8" height="8" fill="#990036"/><rect x="428" y="148" width="8" height="8" fill="#990034"/><rect x="436" y="148" width="8" height="8" fill="#990032"/><rect x="444" y="148" width="8" height="8" fill="#990030"/><rect x="452" y="148" width="8" height="8" fill="#99002e"/><rect x="460" y="148" width="8" height="8" fill="#99002c"/><rect x="468" y="148" width="8" height="8" fill="#99002a"/><rect x="476" y="148" width="8" height="8" fill="#990028"/><rect x="484" y="148" width="8" height="8" fill="#990027"/><rect x="492" y="148" width="8" height="8" fill="#990025"/><rect x="500" y="148" width="8" height="8" fill="#990023"/><rect x="508" y="148" width="8" height="8" fill="#990022"/><rect x="516" y="148" width="8" height="8" fill="#990020"/><rect x="524" y="148" width="8" height="8" fill="#99001f"/><rect x="532" y="148" width="8" height="8" fill="#99001e"/><rect x="540" y="148" width="8" height="8" fill="#99001c"/><rect x="548" y="148" width="8" height="8" fill="#99001b"/><rect x="556" y="148" width="8" height="8" fill="#99001a"/><rect x="564" y="148" width="8" height="8" fill="#990019"/><rect x="572" y="148" width="8" height="8" fill="#990018"/><rect x="580" y="148" width="8" height="8" fill="#990017"/><rect x="588" y="148" width="8" height="8" fill="#990016"/><rect x="596" y="148" width="8" height="8" fill="#990015"/><rect x="28" y="156" width="8" height="8" fill="#006299"/><rect x="36" y="156" width="8" height="8" fill="#006199"/><rect x="44" y="156" width="8" height="8" fill="#006099"/><rect x="52" y="156" width="8" height="8" fill="#005f99"/><rect x="60" y="156" width="8" height="8" fill="#005e99"/><rect x="68" y="156" width="8" height="8" fill="#005e99"/><rect x="76" y="156" width="8" height="8" fill="#005d99"/><rect x="84" y="156" width="8" height="8" fill="#005c99"/><rect x="92" y="156" width="8" height="8" fill="#005b99"/><rect x="100" y="156" width="8" height="8" fill="#005a99"/><rect x="108" y="156" width="8" height="8" fill="#005999"/><rect x="116" y="156" width="8" height="8" fill="#005999"/><rect x="124" y="156" width="8" height="8" fill="#005899"/><rect x="132" y="156" width="8" height="8" fill="#005799"/><rect x="140" y="156" width="8" height="8" fill="#005699"/><rect x="148" y="156" width="8" height="8" fill="#005699"/><rect x="156" y="156" width="8" height="8" fill="#005599"/><rect x="164" y="156" width="8" height="8" fill="#005499"/><rect x="172" y="156" width="8" height="8" fill="#005499"/><rect x="180" y="156" width="8" height="8" fill="#005399"/><rect x="188" y="156" width="8" height="8" fill="#005299"/><rect x="196" y="156" width="8" height="8" fill="#005299"/><rect x="204" y="156" width="8" height="8" fill="#005199"/><rect x="212" y="156" width="8" height="8" fill="#6a0099"/><rect x="220" y="156" width="8" height="8" fill="#710099"/><rect x="228" y="156" width="8" height="8" fill="#780099"/><rect x="236" y="156" width="8" height="8" fill="#7f0099"/><rect x="244" y="156" width="8" height="8" fill="#860099"/><rect x="252" y="156" width="8" height="8" fill="#8e0099"/><rect x="260" y="156" width="8" height="8" fill="#960099"/><rect x="268" y="156" width="8" height="8" fill="#990094"/><rect x="276" y="156" width="8" height="8" fill="#99008c"/><rect x="284" y="156" width="8" height="8" fill="#990085"/><rect x="292" y="156" width="8" height="8" fill="#99007f"/><rect x="300" y="156" width="8" height="8" fill="#990079"/><rect x="308" y="156" width="8" height="8" fill="#990073"/><rect x="316" y="156" width="8" height="8" fill="#99006d"/><rect x="324" y="156" width="8" height="8" fill="#990068"/><rect x="332" y="156" width="8" height="8" fill="#990063"/><rect x="340" y="156" width="8" height="8" fill="#99005f"/><rect x="348" y="156" width="8" height="8" fill="#99005b"/><rect x="356" y="156" width="8" height="8" fill="#990057"/><rect x="364" y="156" width="8" height="8" fill="#990053"/><rect x="372" y="156" width="8" height="8" fill="#99004f"/><rect x="380" y="156" width="8" height="8" fill="#99004c"/><rect x="388" y="156" width="8" height="8" fill="#990049"/><rect x="396" y="156" width="8" height="8" fill="#990045"/><rect x="404" y="156" width="8" height="8" fill="#990043"/><rect x="412" y="156" width="8" height="8" fill="#990040"/><rect x="420" y="156" width="8" height="8" fill="#99003d"/><rect x="428" y="156" width="8" height="8" fill="#99003b"/><rect x="436" y="156" width="8" height="8" fill="#990038"/><rect x="444" y="156" width="8" height="8" fill="#990036"/><rect x="452" y="156" width="8" height="8" fill="#990034"/><rect x="460" y="156" width="8" height="8" fill="#990031"/><rect x="468" y="156" width="8" height="8" fill="#99002f"/><rect x="476" y="156" width="8" height="8" fill="#99002d"/><rect x="484" y="156" width="8" height="8" fill="#99002c"/><rect x="492" y="156" width="8" height="8" fill="#99002a"/><rect x="500" y="156" width="8" height="8" fill="#990028"/><rect x="508" y="156" width="8" height="8" fill="#990027"/><rect x="516" y="156" width="8" height="8" fill="#990025"/><rect x="524" y="156" width="8" height="8" fill="#990023"/><rect x="532" y="156" width="8" height="8" fill="#990022"/><rect x="540" y="156" width="8" height="8" fill="#990021"/><rect x="548" y="156" width="8" height="8" fill="#99001f"/><rect x="556" y="156" width="8" height="8" fill="#99001e"/><rect x="564" y="156" width="8" height="8" fill="#99001d"/><rect x="572" y="156" width="8" height="8" fill="#99001b"/><rect x="580" y="156" width="8" height="8" fill="#99001a"/><rect x="588" y="156" width="8" height="8" fill="#990019"/><rect x="28" y="164" width="8" height="8" fill="#005799"/><rect x="36" y="164" width="8" height="8" fill="#005699"/><rect x="44" y="164" width="8" height="8" fill="#005599"/><rect x="52" y="164" width="8" height="8" fill="#005499"/><rect x="60" y="164" width="8" height="8" fill="#005499"/><rect x="68" y="164" width="8" height="8" fill="#005399"/><rect x="76" y="164" width="8" height="8" fill="#005299"/><rect x="84" y="164" width="8" height="8" fill="#005199"/><rect x="92" y="164" width="8" height="8" fill="#005199"/><rect x="100" y="164" width="8" height="8" fill="#005099"/><rect x="108" y="164" width="8" height="8" fill="#005099"/><rect x="116" y="164" width="8" height="8" fill="#004f99"/><rect x="124" y="164" width="8" height="8" fill="#004e99"/><rect x="132" y="164" width="8" height="8" fill="#004e99"/><rect x="140" y="164" width="8" height="8" fill="#004d99"/><rect x="148" y="164" width="8" height="8" fill="#004c99"/><rect x="156" y="164" width="8" height="8" fill="#004c99"/><rect x="164" y="164" width="8" height="8" fill="#004b99"/><rect x="172" y="164" width="8" height="8" fill="#004b99"/><rect x="180" y="164" width="8" height="8" fill="#004a99"/><rect x="188" y="164" width="8" height="8" fill="#004a99"/><rect x="196" y="164" width="8" height="8" fill="#004999"/><rect x="204" y="164" width="8" height="8" fill="#004999"/><rect x="212" y="164" width="8" height="8" fill="#5f0099"/><rect x="220" y="164" width="8" height="8" fill="#650099"/><rect x="228" y="164" width="8" height="8" fill="#6c0099"/><rect x="236" y="164" width="8" height="8" fill="#720099"/><rect x="244" y="164" width="8" height="8" fill="#790099"/><rect x="252" y="164" width="8" height="8" fill="#800099"/><rect x="260" y="164" width="8" height="8" fill="#870099"/><rect x="268" y="164" width="8" height="8" fill="#8f0099"/><rect x="276" y="164" width="8" height="8" fill="#970099"/><rect x="284" y="164" width="8" height="8" fill="#990094"/><rect x="292" y="164" width="8" height="8" fill="#99008c"/><rect x="300" y="164" width="8" height="8" fill="#990085"/><rect x="308" y="164" width="8" height="8" fill="#99007f"/><rect x="316" y="164" width="8" height="8" fill="#990079"/><rect x="324" y="164" width="8" height="8" fill="#990073"/><rect x="332" y="164" width="8" height="8" fill="#99006e"/><rect x="340" y="164" width="8" height="8" fill="#990069"/><rect x="348" y="164" width="8" height="8" fill="#990065"/><rect x="356" y="164" width="8" height="8" fill="#990060"/><rect x="364" y="164" width="8" height="8" fill="#99005c"/><rect x="372" y="164" width="8" height="8" fill="#990058"/><rect x="380" y="164" width="8" height="8" fill="#990054"/><rect x="388" y="164" width="8" height="8" fill="#990051"/><rect x="396" y="164" width="8" height="8" fill="#99004d"/><rect x="404" y="164" width="8" height="8" fill="#99004a"/><rect x="412" y="164" width="8" height="8" fill="#990047"/><rect x="420" y="164" width="8" height="8" fill="#990044"/><rect x="428" y="164" width="8" height="8" fill="#990041"/><rect x="436" y="164" width="8" height="8" fill="#99003f"/><rect x="444" y="164" width="8" height="8" fill="#99003c"/><rect x="452" y="164" width="8" height="8" fill="#99003a"/><rect x="460" y="164" width="8" height="8" fill="#990037"/><rect x="468" y="164" width="8" height="8" fill="#990035"/><rect x="476" y="164" width="8" height="8" fill="#990033"/><rect x="484" y="164" width="8" height="8" fill="#990031"/><rect x="492" y="164" width="8" height="8" fill="#99002f"/><rect x="500" y="164" width="8" height="8" fill="#99002d"/><rect x="508" y="164" width="8" height="8" fill="#99002b"/><rect x="516" y="164" width="8" height="8" fill="#99002a"/><rect x="524" y="164" width="8" height="8" fill="#990028"/><rect x="532" y="164" width="8" height="8" fill="#990027"/><rect x="540" y="164" width="8" height="8" fill="#990025"/><rect x="548" y="164" width="8" height="8" fill="#990024"/><rect x="556" y="164" width="8" height="8" fill="#990022"/><rect x="564" y="164" width="8" height="8" fill="#990021"/><rect x="572" y="164" width="8" height="8" fill="#99001f"/><rect x="580" y="164" width="8" height="8" fill="#99001e"/><rect x="36" y="172" width="8" height="8" fill="#004c99"/><rect x="44" y="172" width="8" height="8" fill="#004b99"/><rect x="52" y="172" width="8" height="8" fill="#004b99"/><rect x="60" y="172" width="8" height="8" fill="#004a99"/><rect x="68" y="172" width="8" height="8" fill="#004999"/><rect x="76" y="172" width="8" height="8" fill="#004999"/><rect x="84" y="172" width="8" height="8" fill="#004899"/><rect x="92" y="172" width="8" height="8" fill="#004899"/><rect x="100" y="172" width="8" height="8" fill="#004799"/><rect x="108" y="172" width="8" height="8" fill="#004799"/><rect x="116" y="172" width="8" height="8" fill="#004699"/><rect x="124" y="172" width="8" height="8" fill="#004699"/><rect x="132" y="172" width="8" height="8" fill="#004599"/><rect x="140" y="172" width="8" height="8" fill="#004599"/><rect x="148" y="172" width="8" height="8" fill="#004499"/><rect x="156" y="172" width="8" height="8" fill="#004499"/><rect x="164" y="172" width="8" height="8" fill="#004399"/><rect x="172" y="172" width="8" height="8" fill="#004399"/><rect x="180" y="172" width="8" height="8" fill="#004299"/><rect x="188" y="172" width="8" height="8" fill="#004299"/><rect x="196" y="172" width="8" height="8" fill="#004299"/><rect x="204" y="172" width="8" height="8" fill="#004199"/><rect x="212" y="172" width="8" height="8" fill="#560099"/><rect x="220" y="172" width="8" height="8" fill="#5b0099"/><rect x="228" y="172" width="8" height="8" fill="#610099"/><rect x="236" y="172" width="8" height="8" fill="#670099"/><rect x="244" y="172" width="8" height="8" fill="#6d0099"/><rect x="252" y="172" width="8" height="8" fill="#740099"/><rect x="260" y="172" width="8" height="8" fill="#7a0099"/><rect x="268" y="172" width="8" height="8" fill="#810099"/><rect x="276" y="172" width="8" height="8" fill="#880099"/><rect x="284" y="172" width="8" height="8" fill="#900099"/><rect x="292" y="172" width="8" height="8" fill="#970099"/><rect x="300" y="172" width="8" height="8" fill="#990093"/><rect x="308" y="172" width="8" height="8" fill="#99008c"/><rect x="316" y="172" width="8" height="8" fill="#990086"/><rect x="324" y="172" width="8" height="8" fill="#99007f"/><rect x="332" y="172" width="8" height="8" fill="#99007a"/><rect x="340" y="172" width="8" height="8" fill="#990074"/><rect x="348" y="172" width="8" height="8" fill="#99006f"/><rect x="356" y="172" width="8" height="8" fill="#99006a"/><rect x="364" y="172" width="8" height="8" fill="#990066"/><rect x="372" y="172" width="8" height="8" fill="#990061"/><rect x="380" y="172" width="8" height="8" fill="#99005d"/><rect x="388" y="172" width="8" height="8" fill="#990059"/><rect x="396" y="172" width="8" height="8" fill="#990055"/><rect x="404" y="172" width="8" height="8" fill="#990052"/><rect x="412" y="172" width="8" height="8" fill="#99004f"/><rect x="420" y="172" width="8" height="8" fill="#99004b"/><rect x="428" y="172" width="8" height="8" fill="#990048"/><rect x="436" y="172" width="8" height="8" fill="#990046"/><rect x="444" y="172" width="8" height="8" fill="#990043"/><rect x="452" y="172" width="8" height="8" fill="#990040"/><rect x="460" y="172" width="8" height="8" fill="#99003e"/><rect x="468" y="172" width="8" height="8" fill="#99003b"/><rect x="476" y="172" width="8" height="8" fill="#990039"/><rect x="484" y="172" width="8" height="8" fill="#990037"/><rect x="492" y="172" width="8" height="8" fill="#990035"/><rect x="500" y="172" width="8" height="8" fill="#990033"/><rect x="508" y="172" width="8" height="8" fill="#990031"/><rect x="516" y="172" width="8" height="8" fill="#99002f"/><rect x="524" y="172" width="8" height="8" fill="#99002d"/><rect x="532" y="172" width="8" height="8" fill="#99002b"/><rect x="540" y="172" width="8" height="8" fill="#99002a"/><rect x="548" y="172" width="8" height="8" fill="#990028"/><rect x="556" y="172" width="8" height="8" fill="#990027"/><rect x="564" y="172" width="8" height="8" fill="#990025"/><rect x="572" y="172" width="8" height="8" fill="#990024"/><rect x="36" y="180" width="8" height="8" fill="#004399"/><rect x="44" y="180" width="8" height="8" fill="#004399"/><rect x="52" y="180" width="8" height="8" fill="#004299"/><rect x="60" y="180" width="8" height="8" fill="#004299"/><rect x="68" y="180" width="8" height="8" fill="#004199"/><rect x="76" y="180" width="8" height="8" fill="#004199"/><rect x="84" y="180" width="8" height="8" fill="#004099"/><rect x="92" y="180" width="8" height="8" fill="#004099"/><rect x="100" y="180" width="8" height="8" fill="#003f99"/><rect x="108" y="180" width="8" height="8" fill="#003f99"/><rect x="116" y="180" width="8" height="8" fill="#003f99"/><rect x="124" y="180" width="8" height="8" fill="#003e99"/><rect x="132" y="180" width="8" height="8" fill="#003e99"/><rect x="140" y="180" width="8" height="8" fill="#003d99"/><rect x="148" y="180" width="8" height="8" fill="#003d99"/><rect x="156" y="180" width="8" height="8" fill="#003d99"/><rect x="164" y="180" width="8" height="8" fill="#003c99"/><rect x="172" y="180" width="8" height="8" fill="#003c99"/><rect x="180" y="180" width="8" height="8" fill="#003b99"/><rect x="188" y="180" width="8" height="8" fill="#003b99"/><rect x="196" y="180" width="8" height="8" fill="#003b99"/><rect x="204" y="180" width="8" height="8" fill="#003a99"/><rect x="212" y="180" width="8" height="8" fill="#4d0099"/><rect x="220" y="180" width="8" height="8" fill="#520099"/><rect x="228" y="180" width="8" height="8" fill="#580099"/><rect x="236" y="180" width="8" height="8" fill="#5d0099"/><rect x="244" y="180" width="8" height="8" fill="#630099"/><rect x="252" y="180" width="8" height="8" fill="#690099"/><rect x="260" y="180" width="8" height="8" fill="#6f0099"/><rect x="268" y="180" width="8" height="8" fill="#750099"/><rect x="276" y="180" width="8" height="8" fill="#7c0099"/><rect x="284" y="180" width="8" height="8" fill="#820099"/><rect x="292" y="180" width="8" height="8" fill="#890099"/><rect x="300" y="180" width="8" height="8" fill="#900099"/><rect x="308" y="180" width="8" height="8" fill="#980099"/><rect x="316" y="180" width="8" height="8" fill="#990093"/><rect x="324" y="180" width="8" height="8" fill="#99008c"/><rect x="332" y="180" width="8" height="8" fill="#990086"/><rect x="340" y="180" width="8" height="8" fill="#990080"/><rect x="348" y="180" width="8" height="8" fill="#99007a"/><rect x="356" y="180" width="8" height="8" fill="#990075"/><rect x="364" y="180" width="8" height="8" fill="#990070"/><rect x="372" y="180" width="8" height="8" fill="#99006b"/><rect x="380" y="180" width="8" height="8" fill="#990067"/><rect x="388" y="180" width="8" height="8" fill="#990062"/><rect x="396" y="180" width="8" height="8" fill="#99005e"/><rect x="404" y="180" width="8" height="8" fill="#99005a"/><rect x="412" y="180" width="8" height="8" fill="#990057"/><rect x="420" y="180" width="8" height="8" fill="#990053"/><rect x="428" y="180" width="8" height="8" fill="#990050"/><rect x="436" y="180" width="8" height="8" fill="#99004d"/><rect x="444" y="180" width="8" height="8" fill="#99004a"/><rect x="452" y="180" width="8" height="8" fill="#990047"/><rect x="460" y="180" width="8" height="8" fill="#990044"/><rect x="468" y="180" width="8" height="8" fill="#990042"/><rect x="476" y="180" width="8" height="8" fill="#99003f"/><rect x="484" y="180" width="8" height="8" fill="#99003d"/><rect x="492" y="180" width="8" height="8" fill="#99003a"/><rect x="500" y="180" width="8" height="8" fill="#990038"/><rect x="508" y="180" width="8" height="8" fill="#990036"/><rect x="516" y="180" width="8" height="8" fill="#990034"/><rect x="524" y="180" width="8" height="8" fill="#990032"/><rect x="532" y="180" width="8" height="8" fill="#990030"/><rect x="540" y="180" width="8" height="8" fill="#99002f"/><rect x="548" y="180" width="8" height="8" fill="#99002d"/><rect x="556" y="180" width="8" height="8" fill="#99002b"/><rect x="564" y="180" width="8" height="8" fill="#99002a"/><rect x="36" y="188" width="8" height="8" fill="#003b99"/><rect x="44" y="188" width="8" height="8" fill="#003b99"/><rect x="52" y="188" width="8" height="8" fill="#003b99"/><rect x="60" y="188" width="8" height="8" fill="#003a99"/><rect x="68" y="188" width="8" height="8" fill="#003a99"/><rect x="76" y="188" width="8" height="8" fill="#003999"/><rect x="84" y="188" width="8" height="8" fill="#003999"/><rect x="92" y="188" width="8" height="8" fill="#003999"/><rect x="100" y="188" width="8" height="8" fill="#003899"/><rect x="108" y="188" width="8" height="8" fill="#003899"/><rect x="116" y="188" width="8" height="8" fill="#003899"/><rect x="124" y="188" width="8" height="8" fill="#003799"/><rect x="132" y="188" width="8" height="8" fill="#003799"/><rect x="140" y="188" width="8" height="8" fill="#003799"/><rect x="148" y="188" width="8" height="8" fill="#003699"/><rect x="156" y="188" width="8" height="8" fill="#003699"/><rect x="164" y="188" width="8" height="8" fill="#003699"/><rect x="172" y="188" width="8" height="8" fill="#003699"/><rect x="180" y="188" width="8" height="8" fill="#003599"/><rect x="188" y="188" width="8" height="8" fill="#003599"/><rect x="196" y="188" width="8" height="8" fill="#003599"/><rect x="204" y="188" width="8" height="8" fill="#003499"/><rect x="212" y="188" width="8" height="8" fill="#450099"/><rect x="220" y="188" width="8" height="8" fill="#4a0099"/><rect x="228" y="188" width="8" height="8" fill="#4f0099"/><rect x="236" y="188" width="8" height="8" fill="#540099"/><rect x="244" y="188" width="8" height="8" fill="#5a0099"/><rect x="252" y="188" width="8" height="8" fill="#5f0099"/><rect x="260" y="188" width="8" height="8" fill="#650099"/><rect x="268" y="188" width="8" height="8" fill="#6b0099"/><rect x="276" y="188" width="8" height="8" fill="#700099"/><rect x="284" y="188" width="8" height="8" fill="#770099"/><rect x="292" y="188" width="8" height="8" fill="#7d0099"/><rect x="300" y="188" width="8" height="8" fill="#830099"/><rect x="308" y="188" width="8" height="8" fill="#8a0099"/><rect x="316" y="188" width="8" height="8" fill="#910099"/><rect x="324" y="188" width="8" height="8" fill="#980099"/><rect x="332" y="188" width="8" height="8" fill="#990093"/><rect x="340" y="188" width="8" height="8" fill="#99008c"/><rect x="348" y="188" width="8" height="8" fill="#990086"/><rect x="356" y="188" width="8" height="8" fill="#990080"/><rect x="364" y="188" width="8" height="8" fill="#99007b"/><rect x="372" y="188" width="8" height="8" fill="#990075"/><rect x="380" y="188" width="8" height="8" fill="#990071"/><rect x="388" y="188" width="8" height="8" fill="#99006c"/><rect x="396" y="188" width="8" height="8" fill="#990067"/><rect x="404" y="188" width="8" height="8" fill="#990063"/><rect x="412" y="188" width="8" height="8" fill="#99005f"/><rect x="420" y="188" width="8" height="8" fill="#99005c"/><rect x="428" y="188" width="8" height="8" fill="#990058"/><rect x="436" y="188" width="8" height="8" fill="#990055"/><rect x="444" y="188" width="8" height="8" fill="#990051"/><rect x="452" y="188" width="8" height="8" fill="#99004e"/><rect x="460" y="188" width="8" height="8" fill="#99004b"/><rect x="468" y="188" width="8" height="8" fill="#990048"/><rect x="476" y="188" width="8" height="8" fill="#990046"/><rect x="484" y="188" width="8" height="8" fill="#990043"/><rect x="492" y="188" width="8" height="8" fill="#990041"/><rect x="500" y="188" width="8" height="8" fill="#99003e"/><rect x="508" y="188" width="8" height="8" fill="#99003c"/><rect x="516" y="188" width="8" height="8" fill="#99003a"/><rect x="524" y="188" width="8" height="8" fill="#990038"/><rect x="532" y="188" width="8" height="8" fill="#990036"/><rect x="540" y="188" width="8" height="8" fill="#990034"/><rect x="548" y="188" width="8" height="8" fill="#990032"/><rect x="556" y="188" width="8" height="8" fill="#990030"/><rect x="44" y="196" width="8" height="8" fill="#003499"/><rect x="52" y="196" width="8" height="8" fill="#003499"/><rect x="60" y="196" width="8" height="8" fill="#003499"/><rect x="68" y="196" width="8" height="8" fill="#003399"/><rect x="76" y="196" width="8" height="8" fill="#003399"/><rect x="84" y="196" width="8" height="8" fill="#003399"/><rect x="92" y="196" width="8" height="8" fill="#003299"/><rect x="100" y="196" width="8" height="8" fill="#003299"/><rect x="108" y="196" width="8" height="8" fill="#003299"/><rect x="116" y="196" width="8" height="8" fill="#003299"/><rect x="124" y="196" width="8" height="8" fill="#003199"/><rect x="132" y="196" width="8" height="8" fill="#003199"/><rect x="140" y="196" width="8" height="8" fill="#003199"/><rect x="148" y="196" width="8" height="8" fill="#003199"/><rect x="156" y="196" width="8" height="8" fill="#003099"/><rect x="164" y="196" width="8" height="8" fill="#003099"/><rect x="172" y="196" width="8" height="8" fill="#003099"/><rect x="180" y="196" width="8" height="8" fill="#003099"/><rect x="188" y="196" width="8" height="8" fill="#002f99"/><rect x="196" y="196" width="8" height="8" fill="#002f99"/><rect x="204" y="196" width="8" height="8" fill="#3a0099"/><rect x="212" y="196" width="8" height="8" fill="#3f0099"/><rect x="220" y="196" width="8" height="8" fill="#430099"/><rect x="228" y="196" width="8" height="8" fill="#480099"/><rect x="236" y="196" width="8" height="8" fill="#4d0099"/><rect x="244" y="196" width="8" height="8" fill="#510099"/><rect x="252" y="196" width="8" height="8" fill="#560099"/><rect x="260" y="196" width="8" height="8" fill="#5c0099"/><rect x="268" y="196" width="8" height="8" fill="#610099"/><rect x="276" y="196" width="8" height="8" fill="#660099"/><rect x="284" y="196" width="8" height="8" fill="#6c0099"/><rect x="292" y="196" width="8" height="8" fill="#720099"/><rect x="300" y="196" width="8" height="8" fill="#780099"/><rect x="308" y="196" width="8" height="8" fill="#7e0099"/><rect x="316" y="196" width="8" height="8" fill="#840099"/><rect x="324" y="196" width="8" height="8" fill="#8b0099"/><rect x="332" y="196" width="8" height="8" fill="#920099"/><rect x="340" y="196" width="8" height="8" fill="#990099"/><rect x="348" y="196" width="8" height="8" fill="#990093"/><rect x="356" y="196" width="8" height="8" fill="#99008c"/><rect x="364" y="196" width="8" height="8" fill="#990086"/><rect x="372" y="196" width="8" height="8" fill="#990081"/><rect x="380" y="196" width="8" height="8" fill="#99007b"/><rect x="388" y="196" width="8" height="8" fill="#990076"/><rect x="396" y="196" width="8" height="8" fill="#990071"/><rect x="404" y="196" width="8" height="8" fill="#99006d"/><rect x="412" y="196" width="8" height="8" fill="#990068"/><rect x="420" y="196" width="8" height="8" fill="#990064"/><rect x="428" y="196" width="8" height="8" fill="#990060"/><rect x="436" y="196" width="8" height="8" fill="#99005d"/><rect x="444" y="196" width="8" height="8" fill="#990059"/><rect x="452" y="196" width="8" height="8" fill="#990056"/><rect x="460" y="196" width="8" height="8" fill="#990052"/><rect x="468" y="196" width="8" height="8" fill="#99004f"/><rect x="476" y="196" width="8" height="8" fill="#99004c"/><rect x="484" y="196" width="8" height="8" fill="#99004a"/><rect x="492" y="196" width="8" height="8" fill="#990047"/><rect x="500" y="196" width="8" height="8" fill="#990044"/><rect x="508" y="196" width="8" height="8" fill="#990042"/><rect x="516" y="196" width="8" height="8" fill="#990040"/><rect x="524" y="196" width="8" height="8" fill="#99003d"/><rect x="532" y="196" width="8" height="8" fill="#99003b"/><rect x="540" y="196" width="8" height="8" fill="#990039"/><rect x="548" y="196" width="8" height="8" fill="#990037"/><rect x="44" y="204" width="8" height="8" fill="#002e99"/><rect x="52" y="204" width="8" height="8" fill="#002e99"/><rect x="60" y="204" width="8" height="8" fill="#002e99"/><rect x="68" y="204" width="8" height="8" fill="#002d99"/><rect x="76" y="204" width="8" height="8" fill="#002d99"/><rect x="84" y="204" width="8" height="8" fill="#002d99"/><rect x="92" y="204" width="8" height="8" fill="#002d99"/><rect x="100" y="204" width="8" height="8" fill="#002d99"/><rect x="108" y="204" width="8" height="8" fill="#002c99"/><rect x="116" y="204" width="8" height="8" fill="#002c99"/><rect x="124" y="204" width="8" height="8" fill="#002c99"/><rect x="132" y="204" width="8" height="8" fill="#002c99"/><rect x="140" y="204" width="8" height="8" fill="#002c99"/><rect x="148" y="204" width="8" height="8" fill="#002b99"/><rect x="156" y="204" width="8" height="8" fill="#002b99"/><rect x="164" y="204" width="8" height="8" fill="#002b99"/><rect x="172" y="204" width="8" height="8" fill="#002b99"/><rect x="180" y="204" width="8" height="8" fill="#002b99"/><rect x="188" y="204" width="8" height="8" fill="#002a99"/><rect x="196" y="204" width="8" height="8" fill="#002a99"/><rect x="204" y="204" width="8" height="8" fill="#350099"/><rect x="212" y="204" width="8" height="8" fill="#390099"/><rect x="220" y="204" width="8" height="8" fill="#3d0099"/><rect x="228" y="204" width="8" height="8" fill="#410099"/><rect x="236" y="204" width="8" height="8" fill="#450099"/><rect x="244" y="204" width="8" height="8" fill="#4a0099"/><rect x="252" y="204" width="8" height="8" fill="#4f0099"/><rect x="260" y="204" width="8" height="8" fill="#530099"/><rect x="268" y="204" width="8" height="8" fill="#580099"/><rect x="276" y="204" width="8" height="8" fill="#5d0099"/><rect x="284" y="204" width="8" height="8" fill="#630099"/><rect x="292" y="204" width="8" height="8" fill="#680099"/><rect x="300" y="204" width="8" height="8" fill="#6e0099"/><rect x="308" y="204" width="8" height="8" fill="#730099"/><rect x="316" y="204" width="8" height="8" fill="#790099"/><rect x="324" y="204" width="8" height="8" fill="#7f0099"/><rect x="332" y="204" width="8" height="8" fill="#850099"/><rect x="340" y="204" width="8" height="8" fill="#8c0099"/><rect x="348" y="204" width="8" height="8" fill="#920099"/><rect x="356" y="204" width="8" height="8" fill="#990099"/><rect x="364" y="204" width="8" height="8" fill="#990092"/><rect x="372" y="204" width="8" height="8" fill="#99008c"/><rect x="380" y="204" width="8" height="8" fill="#990086"/><rect x="388" y="204" width="8" height="8" fill="#990081"/><rect x="396" y="204" width="8" height="8" fill="#99007c"/><rect x="404" y="204" width="8" height="8" fill="#990077"/><rect x="412" y="204" width="8" height="8" fill="#990072"/><rect x="420" y="204" width="8" height="8" fill="#99006d"/><rect x="428" y="204" width="8" height="8" fill="#990069"/><rect x="436" y="204" width="8" height="8" fill="#990065"/><rect x="444" y="204" width="8" height="8" fill="#990061"/><rect x="452" y="204" width="8" height="8" fill="#99005e"/><rect x="460" y="204" width="8" height="8" fill="#99005a"/><rect x="468" y="204" width="8" height="8" fill="#990057"/><rect x="476" y="204" width="8" height="8" fill="#990054"/><rect x="484" y="204" width="8" height="8" fill="#990051"/><rect x="492" y="204" width="8" height="8" fill="#99004e"/><rect x="500" y="204" width="8" height="8" fill="#99004b"/><rect x="508" y="204" width="8" height="8" fill="#990048"/><rect x="516" y="204" width="8" height="8" fill="#990046"/><rect x="524" y="204" width="8" height="8" fill="#990043"/><rect x="532" y="204" width="8" height="8" fill="#990041"/><rect x="540" y="204" width="8" height="8" fill="#99003f"/><rect x="52" y="212" width="8" height="8" fill="#002999"/><rect x="60" y="212" width="8" height="8" fill="#002899"/><rect x="68" y="212" width="8" height="8" fill="#002899"/><rect x="76" y="212" width="8" height="8" fill="#002899"/><rect x="84" y="212" width="8" height="8" fill="#002899"/><rect x="92" y="212" width="8" height="8" fill="#002899"/><rect x="100" y="212" width="8" height="8" fill="#002899"/><rect x="108" y="212" width="8" height="8" fill="#002799"/><rect x="116" y="212" width="8" height="8" fill="#002799"/><rect x="124" y="212" width="8" height="8" fill="#002799"/><rect x="132" y="212" width="8" height="8" fill="#002799"/><rect x="140" y="212" width="8" height="8" fill="#002799"/><rect x="148" y="212" width="8" height="8" fill="#002799"/><rect x="156" y="212" width="8" height="8" fill="#002699"/><rect x="164" y="212" width="8" height="8" fill="#002699"/><rect x="172" y="212" width="8" height="8" fill="#002699"/><rect x="180" y="212" width="8" height="8" fill="#002699"/><rect x="188" y="212" width="8" height="8" fill="#002699"/><rect x="196" y="212" width="8" height="8" fill="#002699"/><rect x="204" y="212" width="8" height="8" fill="#2f0099"/><rect x="212" y="212" width="8" height="8" fill="#330099"/><rect x="220" y="212" width="8" height="8" fill="#370099"/><rect x="228" y="212" width="8" height="8" fill="#3b0099"/><rect x="236" y="212" width="8" height="8" fill="#3f0099"/><rect x="244" y="212" width="8" height="8" fill="#430099"/><rect x="252" y="212" width="8" height="8" fill="#480099"/><rect x="260" y="212" width="8" height="8" fill="#4c0099"/><rect x="268" y="212" width="8" height="8" fill="#510099"/><rect x="276" y="212" width="8" height="8" fill="#550099"/><rect x="284" y="212" width="8" height="8" fill="#5a0099"/><rect x="292" y="212" width="8" height="8" fill="#5f0099"/><rect x="300" y="212" width="8" height="8" fill="#640099"/><rect x="308" y="212" width="8" height="8" fill="#6a0099"/><rect x="316" y="212" width="8" height="8" fill="#6f0099"/><rect x="324" y="212" width="8" height="8" fill="#750099"/><rect x="332" y="212" width="8" height="8" fill="#7a0099"/><rect x="340" y="212" width="8" height="8" fill="#800099"/><rect x="348" y="212" width="8" height="8" fill="#860099"/><rect x="356" y="212" width="8" height="8" fill="#8c0099"/><rect x="364" y="212" width="8" height="8" fill="#930099"/><rect x="372" y="212" width="8" height="8" fill="#990099"/><rect x="380" y="212" width="8" height="8" fill="#990092"/><rect x="388" y="212" width="8" height="8" fill="#99008c"/><rect x="396" y="212" width="8" height="8" fill="#990087"/><rect x="404" y="212" width="8" height="8" fill="#990081"/><rect x="412" y="212" width="8" height="8" fill="#99007c"/><rect x="420" y="212" width="8" height="8" fill="#990077"/><rect x="428" y="212" width="8" height="8" fill="#990073"/><rect x="436" y="212" width="8" height="8" fill="#99006e"/><rect x="444" y="212" width="8" height="8" fill="#99006a"/><rect x="452" y="212" width="8" height="8" fill="#990066"/><rect x="460" y="212" width="8" height="8" fill="#990062"/><rect x="468" y="212" width="8" height="8" fill="#99005f"/><rect x="476" y="212" width="8" height="8" fill="#99005b"/><rect x="484" y="212" width="8" height="8" fill="#990058"/><rect x="492" y="212" width="8" height="8" fill="#990055"/><rect x="500" y="212" width="8" height="8" fill="#990052"/><rect x="508" y="212" width="8" height="8" fill="#99004f"/><rect x="516" y="212" width="8" height="8" fill="#99004c"/><rect x="524" y="212" width="8" height="8" fill="#99004a"/><rect x="532" y="212" width="8" height="8" fill="#990047"/><rect x="52" y="220" width="8" height="8" fill="#002499"/><rect x="60" y="220" width="8" height="8" fill="#002499"/><rect x="68" y="220" width="8" height="8" fill="#002499"/><rect x="76" y="220" width="8" height="8" fill="#002399"/><rect x="84" y="220" width="8" height="8" fill="#002399"/><rect x="92" y="220" width="8" height="8" fill="#002399"/><rect x="100" y="220" width="8" height="8" fill="#002399"/><rect x="108" y="220" width="8" height="8" fill="#002399"/><rect x="116" y="220" width="8" height="8" fill="#002399"/><rect x="124" y="220" width="8" height="8" fill="#002399"/><rect x="132" y="220" width="8" height="8" fill="#002299"/><rect x="140" y="220" width="8" height="8" fill="#002299"/><rect x="148" y="220" width="8" height="8" fill="#002299"/><rect x="156" y="220" width="8" height="8" fill="#002299"/><rect x="164" y="220" width="8" height="8" fill="#002299"/><rect x="172" y="220" width="8" height="8" fill="#002299"/><rect x="180" y="220" width="8" height="8" fill="#002299"/><rect x="188" y="220" width="8" height="8" fill="#002299"/><rect x="196" y="220" width="8" height="8" fill="#002299"/><rect x="204" y="220" width="8" height="8" fill="#2a0099"/><rect x="212" y="220" width="8" height="8" fill="#2e0099"/><rect x="220" y="220" width="8" height="8" fill="#320099"/><rect x="228" y="220" width="8" height="8" fill="#350099"/><rect x="236" y="220" width="8" height="8" fill="#390099"/><rect x="244" y="220" width="8" height="8" fill="#3d0099"/><rect x="252" y="220" width="8" height="8" fill="#410099"/><rect x="260" y="220" width="8" height="8" fill="#450099"/><rect x="268" y="220" width="8" height="8" fill="#4a0099"/><rect x="276" y="220" width="8" height="8" fill="#4e0099"/><rect x="284" y="220" width="8" height="8" fill="#530099"/><rect x="292" y="220" width="8" height="8" fill="#570099"/><rect x="300" y="220" width="8" height="8" fill="#5c0099"/><rect x="308" y="220" width="8" height="8" fill="#610099"/><rect x="316" y="220" width="8" height="8" fill="#660099"/><rect x="324" y="220" width="8" height="8" fill="#6b0099"/><rect x="332" y="220" width="8" height="8" fill="#700099"/><rect x="340" y="220" width="8" height="8" fill="#760099"/><rect x="348" y="220" width="8" height="8" fill="#7b0099"/><rect x="356" y="220" width="8" height="8" fill="#810099"/><rect x="364" y="220" width="8" height="8" fill="#870099"/><rect x="372" y="220" width="8" height="8" fill="#8d0099"/><rect x="380" y="220" width="8" height="8" fill="#930099"/><rect x="388" y="220" width="8" height="8" fill="#990098"/><rect x="396" y="220" width="8" height="8" fill="#990092"/><rect x="404" y="220" width="8" height="8" fill="#99008c"/><rect x="412" y="220" width="8" height="8" fill="#990087"/><rect x="420" y="220" width="8" height="8" fill="#990081"/><rect x="428" y="220" width="8" height="8" fill="#99007c"/><rect x="436" y="220" width="8" height="8" fill="#990078"/><rect x="444" y="220" width="8" height="8" fill="#990073"/><rect x="452" y="220" width="8" height="8" fill="#99006f"/><rect x="460" y="220" width="8" height="8" fill="#99006b"/><rect x="468" y="220" width="8" height="8" fill="#990067"/><rect x="476" y="220" width="8" height="8" fill="#990063"/><rect x="484" y="220" width="8" height="8" fill="#990060"/><rect x="492" y="220" width="8" height="8" fill="#99005c"/><rect x="500" y="220" width="8" height="8" fill="#990059"/><rect x="508" y="220" width="8" height="8" fill="#990056"/><rect x="516" y="220" width="8" height="8" fill="#990053"/><rect x="524" y="220" width="8" height="8" fill="#990050"/><rect x="60" y="228" width="8" height="8" fill="#001f99"/><rect x="68" y="228" width="8" height="8" fill="#001f99"/><rect x="76" y="228" width="8" height="8" fill="#001f99"/><rect x="84" y="228" width="8" height="8" fill="#001f99"/><rect x="92" y="228" width="8" height="8" fill="#001f99"/><rect x="100" y="228" width="8" height="8" fill="#001f99"/><rect x="108" y="228" width="8" height="8" fill="#001f99"/><rect x="116" y="228" width="8" height="8" fill="#001f99"/><rect x="124" y="228" width="8" height="8" fill="#001f99"/><rect x="132" y="228" width="8" height="8" fill="#001f99"/><rect x="140" y="228" width="8" height="8" fill="#001e99"/><rect x="148" y="228" width="8" height="8" fill="#001e99"/><rect x="156" y="228" width="8" height="8" fill="#001e99"/><rect x="164" y="228" width="8" height="8" fill="#001e99"/><rect x="172" y="228" width="8" height="8" fill="#001e99"/><rect x="180" y="228" width="8" height="8" fill="#001e99"/><rect x="188" y="228" width="8" height="8" fill="#001e99"/><rect x="196" y="228" width="8" height="8" fill="#001e99"/><rect x="204" y="228" width="8" height="8" fill="#260099"/><rect x="212" y="228" width="8" height="8" fill="#290099"/><rect x="220" y="228" width="8" height="8" fill="#2d0099"/><rect x="228" y="228" width="8" height="8" fill="#300099"/><rect x="236" y="228" width="8" height="8" fill="#340099"/><rect x="244" y="228" width="8" height="8" fill="#380099"/><rect x="252" y="228" width="8" height="8" fill="#3b0099"/><rect x="260" y="228" width="8" height="8" fill="#3f0099"/><rect x="268" y="228" width="8" height="8" fill="#430099"/><rect x="276" y="228" width="8" height="8" fill="#470099"/><rect x="284" y="228" width="8" height="8" fill="#4c0099"/><rect x="292" y="228" width="8" height="8" fill="#500099"/><rect x="300" y="228" width="8" height="8" fill="#540099"/><rect x="308" y="228" width="8" height="8" fill="#590099"/><rect x="316" y="228" width="8" height="8" fill="#5e0099"/><rect x="324" y="228" width="8" height="8" fill="#620099"/><rect x="332" y="228" width="8" height="8" fill="#670099"/><rect x="340" y="228" width="8" height="8" fill="#6c0099"/><rect x="348" y="228" width="8" height="8" fill="#720099"/><rect x="356" y="228" width="8" height="8" fill="#770099"/><rect x="364" y="228" width="8" height="8" fill="#7c0099"/><rect x="372" y="228" width="8" height="8" fill="#820099"/><rect x="380" y="228" width="8" height="8" fill="#880099"/><rect x="388" y="228" width="8" height="8" fill="#8e0099"/><rect x="396" y="228" width="8" height="8" fill="#940099"/><rect x="404" y="228" width="8" height="8" fill="#990098"/><rect x="412" y="228" width="8" height="8" fill="#990092"/><rect x="420" y="228" width="8" height="8" fill="#99008c"/><rect x="428" y="228" width="8" height="8" fill="#990087"/><rect x="436" y="228" width="8" height="8" fill="#990082"/><rect x="444" y="228" width="8" height="8" fill="#99007d"/><rect x="452" y="228" width="8" height="8" fill="#990078"/><rect x="460" y="228" width="8" height="8" fill="#990074"/><rect x="468" y="228" width="8" height="8" fill="#990070"/><rect x="476" y="228" width="8" height="8" fill="#99006b"/><rect x="484" y="228" width="8" height="8" fill="#990068"/><rect x="492" y="228" width="8" height="8" fill="#990064"/><rect x="500" y="228" width="8" height="8" fill="#990061"/><rect x="508" y="228" width="8" height="8" fill="#99005d"/><rect x="516" y="228" width="8" height="8" fill="#99005a"/><rect x="60" y="236" width="8" height="8" fill="#001c99"/><rect x="68" y="236" width="8" height="8" fill="#001b99"/><rect x="76" y="236" width="8" height="8" fill="#001b99"/><rect x="84" y="236" width="8" height="8" fill="#001b99"/><rect x="92" y="236" width="8" height="8" fill="#001b99"/><rect x="100" y="236" width="8" height="8" fill="#001b99"/><rect x="108" y="236" width="8" height="8" fill="#001b99"/><rect x="116" y="236" width="8" height="8" fill="#001b99"/><rect x="124" y="236" width="8" height="8" fill="#001b99"/><rect x="132" y="236" width="8" height="8" fill="#001b99"/><rect x="140" y="236" width="8" height="8" fill="#001b99"/><rect x="148" y="236" width="8" height="8" fill="#001b99"/><rect x="156" y="236" width="8" height="8" fill="#001b99"/><rect x="164" y="236" width="8" height="8" fill="#001b99"/><rect x="172" y="236" width="8" height="8" fill="#001b99"/><rect x="180" y="236" width="8" height="8" fill="#001b99"/><rect x="188" y="236" width="8" height="8" fill="#001a99"/><rect x="196" y="236" width="8" height="8" fill="#001a99"/><rect x="204" y="236" width="8" height="8" fill="#220099"/><rect x="212" y="236" width="8" height="8" fill="#250099"/><rect x="220" y="236" width="8" height="8" fill="#280099"/><rect x="228" y="236" width="8" height="8" fill="#2c0099"/><rect x="236" y="236" width="8" height="8" fill="#2f0099"/><rect x="244" y="236" width="8" height="8" fill="#320099"/><rect x="252" y="236" width="8" height="8" fill="#360099"/><rect x="260" y="236" width="8" height="8" fill="#3a0099"/><rect x="268" y="236" width="8" height="8" fill="#3d0099"/><rect x="276" y="236" width="8" height="8" fill="#410099"/><rect x="284" y="236" width="8" height="8" fill="#450099"/><rect x="292" y="236" width="8" height="8" fill="#490099"/><rect x="300" y="236" width="8" height="8" fill="#4d0099"/><rect x="308" y="236" width="8" height="8" fill="#520099"/><rect x="316" y="236" width="8" height="8" fill="#560099"/><rect x="324" y="236" width="8" height="8" fill="#5b0099"/><rect x="332" y="236" width="8" height="8" fill="#5f0099"/><rect x="340" y="236" width="8" height="8" fill="#640099"/><rect x="348" y="236" width="8" height="8" fill="#690099"/><rect x="356" y="236" width="8" height="8" fill="#6e0099"/><rect x="364" y="236" width="8" height="8" fill="#730099"/><rect x="372" y="236" width="8" height="8" fill="#780099"/><rect x="380" y="236" width="8" height="8" fill="#7e0099"/><rect x="388" y="236" width="8" height="8" fill="#830099"/><rect x="396" y="236" width="8" height="8" fill="#890099"/><rect x="404" y="236" width="8" height="8" fill="#8e0099"/><rect x="412" y="236" width="8" height="8" fill="#940099"/><rect x="420" y="236" width="8" height="8" fill="#990098"/><rect x="428" y="236" width="8" height="8" fill="#990092"/><rect x="436" y="236" width="8" height="8" fill="#99008c"/><rect x="444" y="236" width="8" height="8" fill="#990087"/><rect x="452" y="236" width="8" height="8" fill="#990082"/><rect x="460" y="236" width="8" height="8" fill="#99007d"/><rect x="468" y="236" width="8" height="8" fill="#990079"/><rect x="476" y="236" width="8" height="8" fill="#990074"/><rect x="484" y="236" width="8" height="8" fill="#990070"/><rect x="492" y="236" width="8" height="8" fill="#99006c"/><rect x="500" y="236" width="8" height="8" fill="#990068"/><rect x="508" y="236" width="8" height="8" fill="#990065"/><rect x="68" y="244" width="8" height="8" fill="#001899"/><rect x="76" y="244" width="8" height="8" fill="#001899"/><rect x="84" y="244" width="8" height="8" fill="#001899"/><rect x="92" y="244" width="8" height="8" fill="#001899"/><rect x="100" y="244" width="8" height="8" fill="#001899"/><rect x="108" y="244" width="8" height="8" fill="#001899"/><rect x="116" y="244" width="8" height="8" fill="#001899"/><rect x="124" y="244" width="8" height="8" fill="#001899"/><rect x="132" y="244" width="8" height="8" fill="#001899"/><rect x="140" y="244" width="8" height="8" fill="#001899"/><rect x="148" y="244" width="8" height="8" fill="#001899"/><rect x="156" y="244" width="8" height="8" fill="#001899"/><rect x="164" y="244" width="8" height="8" fill="#001799"/><rect x="172" y="244" width="8" height="8" fill="#001799"/><rect x="180" y="244" width="8" height="8" fill="#001799"/><rect x="188" y="244" width="8" height="8" fill="#001799"/><rect x="196" y="244" width="8" height="8" fill="#001799"/><rect x="204" y="244" width="8" height="8" fill="#1f0099"/><rect x="212" y="244" width="8" height="8" fill="#210099"/><rect x="220" y="244" width="8" height="8" fill="#240099"/><rect x="228" y="244" width="8" height="8" fill="#270099"/><rect x="236" y="244" width="8" height="8" fill="#2b0099"/><rect x="244" y="244" width="8" height="8" fill="#2e0099"/><rect x="252" y="244" width="8" height="8" fill="#310099"/><rect x="260" y="244" width="8" height="8" fill="#350099"/><rect x="268" y="244" width="8" height="8" fill="#380099"/><rect x="276" y="244" width="8" height="8" fill="#3c0099"/><rect x="284" y="244" width="8" height="8" fill="#3f0099"/><rect x="292" y="244" width="8" height="8" fill="#430099"/><rect x="300" y="244" width="8" height="8" fill="#470099"/><rect x="308" y="244" width="8" height="8" fill="#4b0099"/><rect x="316" y="244" width="8" height="8" fill="#4f0099"/><rect x="324" y="244" width="8" height="8" fill="#540099"/><rect x="332" y="244" width="8" height="8" fill="#580099"/><rect x="340" y="244" width="8" height="8" fill="#5c0099"/><rect x="348" y="244" width="8" height="8" fill="#610099"/><rect x="356" y="244" width="8" height="8" fill="#650099"/><rect x="364" y="244" width="8" height="8" fill="#6a0099"/><rect x="372" y="244" width="8" height="8" fill="#6f0099"/><rect x="380" y="244" width="8" height="8" fill="#740099"/><rect x="388" y="244" width="8" height="8" fill="#790099"/><rect x="396" y="244" width="8" height="8" fill="#7e0099"/><rect x="404" y="244" width="8" height="8" fill="#840099"/><rect x="412" y="244" width="8" height="8" fill="#890099"/><rect x="420" y="244" width="8" height="8" fill="#8f0099"/><rect x="428" y="244" width="8" height="8" fill="#950099"/><rect x="436" y="244" width="8" height="8" fill="#990097"/><rect x="444" y="244" width="8" height="8" fill="#990092"/><rect x="452" y="244" width="8" height="8" fill="#99008c"/><rect x="460" y="244" width="8" height="8" fill="#990087"/><rect x="468" y="244" width="8" height="8" fill="#990082"/><rect x="476" y="244" width="8" height="8" fill="#99007d"/><rect x="484" y="244" width="8" height="8" fill="#990079"/><rect x="492" y="244" width="8" height="8" fill="#990075"/><rect x="500" y="244" width="8" height="8" fill="#990071"/><rect x="76" y="252" width="8" height="8" fill="#001599"/><rect x="84" y="252" width="8" height="8" fill="#001599"/><rect x="92" y="252" width="8" height="8" fill="#001599"/><rect x="100" y="252" width="8" height="8" fill="#001599"/><rect x="108" y="252" width="8" height="8" fill="#001599"/><rect x="116" y="252" width="8" height="8" fill="#001599"/><rect x="124" y="252" width="8" height="8" fill="#001599"/><rect x="132" y="252" width="8" height="8" fill="#001599"/><rect x="140" y="252" width="8" height="8" fill="#001599"/><rect x="148" y="252" width="8" height="8" fill="#001599"/><rect x="156" y="252" width="8" height="8" fill="#001599"/><rect x="164" y="252" width="8" height="8" fill="#001599"/><rect x="172" y="252" width="8" height="8" fill="#001599"/><rect x="180" y="252" width="8" height="8" fill="#001599"/><rect x="188" y="252" width="8" height="8" fill="#001499"/><rect x="196" y="252" width="8" height="8" fill="#190099"/><rect x="204" y="252" width="8" height="8" fill="#1b0099"/><rect x="212" y="252" width="8" height="8" fill="#1e0099"/><rect x="220" y="252" width="8" height="8" fill="#210099"/><rect x="228" y="252" width="8" height="8" fill="#240099"/><rect x="236" y="252" width="8" height="8" fill="#270099"/><rect x="244" y="252" width="8" height="8" fill="#2a0099"/><rect x="252" y="252" width="8" height="8" fill="#2d0099"/><rect x="260" y="252" width="8" height="8" fill="#300099"/><rect x="268" y="252" width="8" height="8" fill="#330099"/><rect x="276" y="252" width="8" height="8" fill="#370099"/><rect x="284" y="252" width="8" height="8" fill="#3a0099"/><rect x="292" y="252" width="8" height="8" fill="#3e0099"/><rect x="300" y="252" width="8" height="8" fill="#410099"/><rect x="308" y="252" width="8" height="8" fill="#450099"/><rect x="316" y="252" width="8" height="8" fill="#490099"/><rect x="324" y="252" width="8" height="8" fill="#4d0099"/><rect x="332" y="252" width="8" height="8" fill="#510099"/><rect x="340" y="252" width="8" height="8" fill="#550099"/><rect x="348" y="252" width="8" height="8" fill="#590099"/><rect x="356" y="252" width="8" height="8" fill="#5e0099"/><rect x="364" y="252" width="8" height="8" fill="#620099"/><rect x="372" y="252" width="8" height="8" fill="#670099"/><rect x="380" y="252" width="8" height="8" fill="#6c0099"/><rect x="388" y="252" width="8" height="8" fill="#700099"/><rect x="396" y="252" width="8" height="8" fill="#750099"/><rect x="404" y="252" width="8" height="8" fill="#7a0099"/><rect x="412" y="252" width="8" height="8" fill="#7f0099"/><rect x="420" y="252" width="8" height="8" fill="#850099"/><rect x="428" y="252" width="8" height="8" fill="#8a0099"/><rect x="436" y="252" width="8" height="8" fill="#900099"/><rect x="444" y="252" width="8" height="8" fill="#950099"/><rect x="452" y="252" width="8" height="8" fill="#990097"/><rect x="460" y="252" width="8" height="8" fill="#990091"/><rect x="468" y="252" width="8" height="8" fill="#99008c"/><rect x="476" y="252" width="8" height="8" fill="#990087"/><rect x="484" y="252" width="8" height="8" fill="#990082"/><rect x="492" y="252" width="8" height="8" fill="#99007e"/><rect x="76" y="260" width="8" height="8" fill="#001299"/><rect x="84" y="260" width="8" height="8" fill="#001299"/><rect x="92" y="260" width="8" height="8" fill="#001299"/><rect x="100" y="260" width="8" height="8" fill="#001299"/><rect x="108" y="260" width="8" height="8" fill="#001299"/><rect x="116" y="260" width="8" height="8" fill="#001299"/><rect x="124" y="260" width="8" height="8" fill="#001299"/><rect x="132" y="260" width="8" height="8" fill="#001299"/><rect x="140" y="260" width="8" height="8" fill="#001299"/><rect x="148" y="260" width="8" height="8" fill="#001299"/><rect x="156" y="260" width="8" height="8" fill="#001299"/><rect x="164" y="260" width="8" height="8" fill="#001299"/><rect x="172" y="260" width="8" height="8" fill="#001299"/><rect x="180" y="260" width="8" height="8" fill="#001299"/><rect x="188" y="260" width="8" height="8" fill="#001299"/><rect x="196" y="260" width="8" height="8" fill="#160099"/><rect x="204" y="260" width="8" height="8" fill="#180099"/><rect x="212" y="260" width="8" height="8" fill="#1b0099"/><rect x="220" y="260" width="8" height="8" fill="#1d0099"/><rect x="228" y="260" width="8" height="8" fill="#200099"/><rect x="236" y="260" width="8" height="8" fill="#230099"/><rect x="244" y="260" width="8" height="8" fill="#260099"/><rect x="252" y="260" width="8" height="8" fill="#290099"/><rect x="260" y="260" width="8" height="8" fill="#2c0099"/><rect x="268" y="260" width="8" height="8" fill="#2f0099"/><rect x="276" y="260" width="8" height="8" fill="#320099"/><rect x="284" y="260" width="8" height="8" fill="#350099"/><rect x="292" y="260" width="8" height="8" fill="#390099"/><rect x="300" y="260" width="8" height="8" fill="#3c0099"/><rect x="308" y="260" width="8" height="8" fill="#400099"/><rect x="316" y="260" width="8" height="8" fill="#430099"/><rect x="324" y="260" width="8" height="8" fill="#470099"/><rect x="332" y="260" width="8" height="8" fill="#4b0099"/><rect x="340" y="260" width="8" height="8" fill="#4f0099"/><rect x="348" y="260" width="8" height="8" fill="#530099"/><rect x="356" y="260" width="8" height="8" fill="#570099"/><rect x="364" y="260" width="8" height="8" fill="#5b0099"/><rect x="372" y="260" width="8" height="8" fill="#5f0099"/><rect x="380" y="260" width="8" height="8" fill="#640099"/><rect x="388" y="260" width="8" height="8" fill="#680099"/><rect x="396" y="260" width="8" height="8" fill="#6d0099"/><rect x="404" y="260" width="8" height="8" fill="#710099"/><rect x="412" y="260" width="8" height="8" fill="#760099"/><rect x="420" y="260" width="8" height="8" fill="#7b0099"/><rect x="428" y="260" width="8" height="8" fill="#800099"/><rect x="436" y="260" width="8" height="8" fill="#850099"/><rect x="444" y="260" width="8" height="8" fill="#8b0099"/><rect x="452" y="260" width="8" height="8" fill="#900099"/><rect x="460" y="260" width="8" height="8" fill="#960099"/><rect x="468" y="260" width="8" height="8" fill="#990097"/><rect x="476" y="260" width="8" height="8" fill="#990091"/><rect x="484" y="260" width="8" height="8" fill="#99008c"/><rect x="84" y="268" width="8" height="8" fill="#000f99"/><rect x="92" y="268" width="8" height="8" fill="#000f99"/><rect x="100" y="268" width="8" height="8" fill="#000f99"/><rect x="108" y="268" width="8" height="8" fill="#000f99"/><rect x="116" y="268" width="8" height="8" fill="#000f99"/><rect x="124" y="268" width="8" height="8" fill="#000f99"/><rect x="132" y="268" width="8" height="8" fill="#000f99"/><rect x="140" y="268" width="8" height="8" fill="#000f99"/><rect x="148" y="268" width="8" height="8" fill="#000f99"/><rect x="156" y="268" width="8" height="8" fill="#000f99"/><rect x="164" y="268" width="8" height="8" fill="#000f99"/><rect x="172" y="268" width="8" height="8" fill="#000f99"/><rect x="180" y="268" width="8" height="8" fill="#000f99"/><rect x="188" y="268" width="8" height="8" fill="#000f99"/><rect x="196" y="268" width="8" height="8" fill="#130099"/><rect x="204" y="268" width="8" height="8" fill="#150099"/><rect x="212" y="268" width="8" height="8" fill="#180099"/><rect x="220" y="268" width="8" height="8" fill="#1a0099"/><rect x="228" y="268" width="8" height="8" fill="#1d0099"/><rect x="236" y="268" width="8" height="8" fill="#1f0099"/><rect x="244" y="268" width="8" height="8" fill="#220099"/><rect x="252" y="268" width="8" height="8" fill="#250099"/><rect x="260" y="268" width="8" height="8" fill="#280099"/><rect x="268" y="268" width="8" height="8" fill="#2b0099"/><rect x="276" y="268" width="8" height="8" fill="#2e0099"/><rect x="284" y="268" width="8" height="8" fill="#310099"/><rect x="292" y="268" width="8" height="8" fill="#340099"/><rect x="300" y="268" width="8" height="8" fill="#370099"/><rect x="308" y="268" width="8" height="8" fill="#3b0099"/><rect x="316" y="268" width="8" height="8" fill="#3e0099"/><rect x="324" y="268" width="8" height="8" fill="#420099"/><rect x="332" y="268" width="8" height="8" fill="#450099"/><rect x="340" y="268" width="8" height="8" fill="#490099"/><rect x="348" y="268" width="8" height="8" fill="#4d0099"/><rect x="356" y="268" width="8" height="8" fill="#500099"/><rect x="364" y="268" width="8" height="8" fill="#540099"/><rect x="372" y="268" width="8" height="8" fill="#580099"/><rect x="380" y="268" width="8" height="8" fill="#5d0099"/><rect x="388" y="268" width="8" height="8" fill="#610099"/><rect x="396" y="268" width="8" height="8" fill="#650099"/><rect x="404" y="268" width="8" height="8" fill="#690099"/><rect x="412" y="268" width="8" height="8" fill="#6e0099"/><rect x="420" y="268" width="8" height="8" fill="#730099"/><rect x="428" y="268" width="8" height="8" fill="#770099"/><rect x="436" y="268" width="8" height="8" fill="#7c0099"/><rect x="444" y="268" width="8" height="8" fill="#810099"/><rect x="452" y="268" width="8" height="8" fill="#860099"/><rect x="460" y="268" width="8" height="8" fill="#8b0099"/><rect x="468" y="268" width="8" height="8" fill="#910099"/><rect x="476" y="268" width="8" height="8" fill="#960099"/><rect x="84" y="276" width="8" height="8" fill="#000d99"/><rect x="92" y="276" width="8" height="8" fill="#000d99"/><rect x="100" y="276" width="8" height="8" fill="#000d99"/><rect x="108" y="276" width="8" height="8" fill="#000d99"/><rect x="116" y="276" width="8" height="8" fill="#000d99"/><rect x="124" y="276" width="8" height="8" fill="#000d99"/><rect x="132" y="276" width="8" height="8" fill="#000d99"/><rect x="140" y="276" width="8" height="8" fill="#000d99"/><rect x="148" y="276" width="8" height="8" fill="#000d99"/><rect x="156" y="276" width="8" height="8" fill="#000d99"/><rect x="164" y="276" width="8" height="8" fill="#000d99"/><rect x="172" y="276" width="8" height="8" fill="#000d99"/><rect x="180" y="276" width="8" height="8" fill="#000d99"/><rect x="188" y="276" width="8" height="8" fill="#000d99"/><rect x="196" y="276" width="8" height="8" fill="#110099"/><rect x="204" y="276" width="8" height="8" fill="#130099"/><rect x="212" y="276" width="8" height="8" fill="#150099"/><rect x="220" y="276" width="8" height="8" fill="#170099"/><rect x="228" y="276" width="8" height="8" fill="#1a0099"/><rect x="236" y="276" width="8" height="8" fill="#1c0099"/><rect x="244" y="276" width="8" height="8" fill="#1f0099"/><rect x="252" y="276" width="8" height="8" fill="#220099"/><rect x="260" y="276" width="8" height="8" fill="#240099"/><rect x="268" y="276" width="8" height="8" fill="#270099"/><rect x="276" y="276" width="8" height="8" fill="#2a0099"/><rect x="284" y="276" width="8" height="8" fill="#2d0099"/><rect x="292" y="276" width="8" height="8" fill="#300099"/><rect x="300" y="276" width="8" height="8" fill="#330099"/><rect x="308" y="276" width="8" height="8" fill="#360099"/><rect x="316" y="276" width="8" height="8" fill="#390099"/><rect x="324" y="276" width="8" height="8" fill="#3c0099"/><rect x="332" y="276" width="8" height="8" fill="#400099"/><rect x="340" y="276" width="8" height="8" fill="#430099"/><rect x="348" y="276" width="8" height="8" fill="#470099"/><rect x="356" y="276" width="8" height="8" fill="#4b0099"/><rect x="364" y="276" width="8" height="8" fill="#4e0099"/><rect x="372" y="276" width="8" height="8" fill="#520099"/><rect x="380" y="276" width="8" height="8" fill="#560099"/><rect x="388" y="276" width="8" height="8" fill="#5a0099"/><rect x="396" y="276" width="8" height="8" fill="#5e0099"/><rect x="404" y="276" width="8" height="8" fill="#620099"/><rect x="412" y="276" width="8" height="8" fill="#660099"/><rect x="420" y="276" width="8" height="8" fill="#6b0099"/><rect x="428" y="276" width="8" height="8" fill="#6f0099"/><rect x="436" y="276" width="8" height="8" fill="#740099"/><rect x="444" y="276" width="8" height="8" fill="#780099"/><rect x="452" y="276" width="8" height="8" fill="#7d0099"/><rect x="460" y="276" width="8" height="8" fill="#820099"/><rect x="468" y="276" width="8" height="8" fill="#870099"/><rect x="92" y="284" width="8" height="8" fill="#000b99"/><rect x="100" y="284" width="8" height="8" fill="#000b99"/><rect x="108" y="284" width="8" height="8" fill="#000b99"/><rect x="116" y="284" width="8" height="8" fill="#000b99"/><rect x="124" y="284" width="8" height="8" fill="#000b99"/><rect x="132" y="284" width="8" height="8" fill="#000b99"/><rect x="140" y="284" width="8" height="8" fill="#000b99"/><rect x="148" y="284" width="8" height="8" fill="#000b99"/><rect x="156" y="284" width="8" height="8" fill="#000b99"/><rect x="164" y="284" width="8" height="8" fill="#000b99"/><rect x="172" y="284" width="8" height="8" fill="#000b99"/><rect x="180" y="284" width="8" height="8" fill="#000b99"/><rect x="188" y="284" width="8" height="8" fill="#000b99"/><rect x="196" y="284" width="8" height="8" fill="#0f0099"/><rect x="204" y="284" width="8" height="8" fill="#110099"/><rect x="212" y="284" width="8" height="8" fill="#130099"/><rect x="220" y="284" width="8" height="8" fill="#150099"/><rect x="228" y="284" width="8" height="8" fill="#170099"/><rect x="236" y="284" width="8" height="8" fill="#190099"/><rect x="244" y="284" width="8" height="8" fill="#1c0099"/><rect x="252" y="284" width="8" height="8" fill="#1e0099"/><rect x="260" y="284" width="8" height="8" fill="#210099"/><rect x="268" y="284" width="8" height="8" fill="#240099"/><rect x="276" y="284" width="8" height="8" fill="#260099"/><rect x="284" y="284" width="8" height="8" fill="#290099"/><rect x="292" y="284" width="8" height="8" fill="#2c0099"/><rect x="300" y="284" width="8" height="8" fill="#2f0099"/><rect x="308" y="284" width="8" height="8" fill="#320099"/><rect x="316" y="284" width="8" height="8" fill="#350099"/><rect x="324" y="284" width="8" height="8" fill="#380099"/><rect x="332" y="284" width="8" height="8" fill="#3b0099"/><rect x="340" y="284" width="8" height="8" fill="#3e0099"/><rect x="348" y="284" width="8" height="8" fill="#420099"/><rect x="356" y="284" width="8" height="8" fill="#450099"/><rect x="364" y="284" width="8" height="8" fill="#490099"/><rect x="372" y="284" width="8" height="8" fill="#4c0099"/><rect x="380" y="284" width="8" height="8" fill="#500099"/><rect x="388" y="284" width="8" height="8" fill="#540099"/><rect x="396" y="284" width="8" height="8" fill="#570099"/><rect x="404" y="284" width="8" height="8" fill="#5b0099"/><rect x="412" y="284" width="8" height="8" fill="#5f0099"/><rect x="420" y="284" width="8" height="8" fill="#630099"/><rect x="428" y="284" width="8" height="8" fill="#680099"/><rect x="436" y="284" width="8" height="8" fill="#6c0099"/><rect x="444" y="284" width="8" height="8" fill="#700099"/><rect x="452" y="284" width="8" height="8" fill="#750099"/><rect x="460" y="284" width="8" height="8" fill="#790099"/><rect x="100" y="292" width="8" height="8" fill="#000999"/><rect x="108" y="292" width="8" height="8" fill="#000999"/><rect x="116" y="292" width="8" height="8" fill="#000999"/><rect x="124" y="292" width="8" height="8" fill="#000999"/><rect x="132" y="292" width="8" height="8" fill="#000999"/><rect x="140" y="292" width="8" height="8" fill="#000999"/><rect x="148" y="292" width="8" height="8" fill="#000999"/><rect x="156" y="292" width="8" height="8" fill="#000999"/><rect x="164" y="292" width="8" height="8" fill="#000999"/><rect x="172" y="292" width="8" height="8" fill="#000999"/><rect x="180" y="292" width="8" height="8" fill="#000999"/><rect x="188" y="292" width="8" height="8" fill="#000999"/><rect x="196" y="292" width="8" height="8" fill="#0d0099"/><rect x="204" y="292" width="8" height="8" fill="#0e0099"/><rect x="212" y="292" width="8" height="8" fill="#100099"/><rect x="220" y="292" width="8" height="8" fill="#120099"/><rect x="228" y="292" width="8" height="8" fill="#150099"/><rect x="236" y="292" width="8" height="8" fill="#170099"/><rect x="244" y="292" width="8" height="8" fill="#190099"/><rect x="252" y="292" width="8" height="8" fill="#1b0099"/><rect x="260" y="292" width="8" height="8" fill="#1e0099"/><rect x="268" y="292" width="8" height="8" fill="#200099"/><rect x="276" y="292" width="8" height="8" fill="#230099"/><rect x="284" y="292" width="8" height="8" fill="#250099"/><rect x="292" y="292" width="8" height="8" fill="#280099"/><rect x="300" y="292" width="8" height="8" fill="#2b0099"/><rect x="308" y="292" width="8" height="8" fill="#2e0099"/><rect x="316" y="292" width="8" height="8" fill="#310099"/><rect x="324" y="292" width="8" height="8" fill="#340099"/><rect x="332" y="292" width="8" height="8" fill="#370099"/><rect x="340" y="292" width="8" height="8" fill="#3a0099"/><rect x="348" y="292" width="8" height="8" fill="#3d0099"/><rect x="356" y="292" width="8" height="8" fill="#400099"/><rect x="364" y="292" width="8" height="8" fill="#430099"/><rect x="372" y="292" width="8" height="8" fill="#470099"/><rect x="380" y="292" width="8" height="8" fill="#4a0099"/><rect x="388" y="292" width="8" height="8" fill="#4e0099"/><rect x="396" y="292" width="8" height="8" fill="#510099"/><rect x="404" y="292" width="8" height="8" fill="#550099"/><rect x="412" y="292" width="8" height="8" fill="#590099"/><rect x="420" y="292" width="8" height="8" fill="#5d0099"/><rect x="428" y="292" width="8" height="8" fill="#610099"/><rect x="436" y="292" width="8" height="8" fill="#650099"/><rect x="444" y="292" width="8" height="8" fill="#690099"/><rect x="452" y="292" width="8" height="8" fill="#6d0099"/><rect x="100" y="300" width="8" height="8" fill="#000799"/><rect x="108" y="300" width="8" height="8" fill="#000799"/><rect x="116" y="300" width="8" height="8" fill="#000799"/><rect x="124" y="300" width="8" height="8" fill="#000799"/><rect x="132" y="300" width="8" height="8" fill="#000899"/><rect x="140" y="300" width="8" height="8" fill="#000899"/><rect x="148" y="300" width="8" height="8" fill="#000899"/><rect x="156" y="300" width="8" height="8" fill="#000899"/><rect x="164" y="300" width="8" height="8" fill="#000899"/><rect x="172" y="300" width="8" height="8" fill="#000899"/><rect x="180" y="300" width="8" height="8" fill="#000899"/><rect x="188" y="300" width="8" height="8" fill="#000899"/><rect x="196" y="300" width="8" height="8" fill="#0b0099"/><rect x="204" y="300" width="8" height="8" fill="#0c0099"/><rect x="212" y="300" width="8" height="8" fill="#0e0099"/><rect x="220" y="300" width="8" height="8" fill="#100099"/><rect x="228" y="300" width="8" height="8" fill="#120099"/><rect x="236" y="300" width="8" height="8" fill="#140099"/><rect x="244" y="300" width="8" height="8" fill="#160099"/><rect x="252" y="300" width="8" height="8" fill="#190099"/><rect x="260" y="300" width="8" height="8" fill="#1b0099"/><rect x="268" y="300" width="8" height="8" fill="#1d0099"/><rect x="276" y="300" width="8" height="8" fill="#200099"/><rect x="284" y="300" width="8" height="8" fill="#220099"/><rect x="292" y="300" width="8" height="8" fill="#250099"/><rect x="300" y="300" width="8" height="8" fill="#270099"/><rect x="308" y="300" width="8" height="8" fill="#2a0099"/><rect x="316" y="300" width="8" height="8" fill="#2d0099"/><rect x="324" y="300" width="8" height="8" fill="#300099"/><rect x="332" y="300" width="8" height="8" fill="#320099"/><rect x="340" y="300" width="8" height="8" fill="#350099"/><rect x="348" y="300" width="8" height="8" fill="#380099"/><rect x="356" y="300" width="8" height="8" fill="#3b0099"/><rect x="364" y="300" width="8" height="8" fill="#3f0099"/><rect x="372" y="300" width="8" height="8" fill="#420099"/><rect x="380" y="300" width="8" height="8" fill="#450099"/><rect x="388" y="300" width="8" height="8" fill="#480099"/><rect x="396" y="300" width="8" height="8" fill="#4c0099"/><rect x="404" y="300" width="8" height="8" fill="#4f0099"/><rect x="412" y="300" width="8" height="8" fill="#530099"/><rect x="420" y="300" width="8" height="8" fill="#570099"/><rect x="428" y="300" width="8" height="8" fill="#5a0099"/><rect x="436" y="300" width="8" height="8" fill="#5e0099"/><rect x="444" y="300" width="8" height="8" fill="#620099"/><rect x="108" y="308" width="8" height="8" fill="#000699"/><rect x="116" y="308" width="8" height="8" fill="#000699"/><rect x="124" y="308" width="8" height="8" fill="#000699"/><rect x="132" y="308" width="8" height="8" fill="#000699"/><rect x="140" y="308" width="8" height="8" fill="#000699"/><rect x="148" y="308" width="8" height="8" fill="#000699"/><rect x="156" y="308" width="8" height="8" fill="#000699"/><rect x="164" y="308" width="8" height="8" fill="#000699"/><rect x="172" y="308" width="8" height="8" fill="#000699"/><rect x="180" y="308" width="8" height="8" fill="#000699"/><rect x="188" y="308" width="8" height="8" fill="#000699"/><rect x="196" y="308" width="8" height="8" fill="#090099"/><rect x="204" y="308" width="8" height="8" fill="#0b0099"/><rect x="212" y="308" width="8" height="8" fill="#0c0099"/><rect x="220" y="308" width="8" height="8" fill="#0e0099"/><rect x="228" y="308" width="8" height="8" fill="#100099"/><rect x="236" y="308" width="8" height="8" fill="#120099"/><rect x="244" y="308" width="8" height="8" fill="#140099"/><rect x="252" y="308" width="8" height="8" fill="#160099"/><rect x="260" y="308" width="8" height="8" fill="#180099"/><rect x="268" y="308" width="8" height="8" fill="#1b0099"/><rect x="276" y="308" width="8" height="8" fill="#1d0099"/><rect x="284" y="308" width="8" height="8" fill="#1f0099"/><rect x="292" y="308" width="8" height="8" fill="#220099"/><rect x="300" y="308" width="8" height="8" fill="#240099"/><rect x="308" y="308" width="8" height="8" fill="#270099"/><rect x="316" y="308" width="8" height="8" fill="#290099"/><rect x="324" y="308" width="8" height="8" fill="#2c0099"/><rect x="332" y="308" width="8" height="8" fill="#2f0099"/><rect x="340" y="308" width="8" height="8" fill="#310099"/><rect x="348" y="308" width="8" height="8" fill="#340099"/><rect x="356" y="308" width="8" height="8" fill="#370099"/><rect x="364" y="308" width="8" height="8" fill="#3a0099"/><rect x="372" y="308" width="8" height="8" fill="#3d0099"/><rect x="380" y="308" width="8" height="8" fill="#400099"/><rect x="388" y="308" width="8" height="8" fill="#430099"/><rect x="396" y="308" width="8" height="8" fill="#470099"/><rect x="404" y="308" width="8" height="8" fill="#4a0099"/><rect x="412" y="308" width="8" height="8" fill="#4d0099"/><rect x="420" y="308" width="8" height="8" fill="#510099"/><rect x="428" y="308" width="8" height="8" fill="#540099"/><rect x="436" y="308" width="8" height="8" fill="#580099"/><rect x="108" y="316" width="8" height="8" fill="#000499"/><rect x="116" y="316" width="8" height="8" fill="#000499"/><rect x="124" y="316" width="8" height="8" fill="#000599"/><rect x="132" y="316" width="8" height="8" fill="#000599"/><rect x="140" y="316" width="8" height="8" fill="#000599"/><rect x="148" y="316" width="8" height="8" fill="#000599"/><rect x="156" y="316" width="8" height="8" fill="#000599"/><rect x="164" y="316" width="8" height="8" fill="#000599"/><rect x="172" y="316" width="8" height="8" fill="#000599"/><rect x="180" y="316" width="8" height="8" fill="#000599"/><rect x="188" y="316" width="8" height="8" fill="#060099"/><rect x="196" y="316" width="8" height="8" fill="#070099"/><rect x="204" y="316" width="8" height="8" fill="#090099"/><rect x="212" y="316" width="8" height="8" fill="#0b0099"/><rect x="220" y="316" width="8" height="8" fill="#0c0099"/><rect x="228" y="316" width="8" height="8" fill="#0e0099"/><rect x="236" y="316" width="8" height="8" fill="#100099"/><rect x="244" y="316" width="8" height="8" fill="#120099"/><rect x="252" y="316" width="8" height="8" fill="#140099"/><rect x="260" y="316" width="8" height="8" fill="#160099"/><rect x="268" y="316" width="8" height="8" fill="#180099"/><rect x="276" y="316" width="8" height="8" fill="#1a0099"/><rect x="284" y="316" width="8" height="8" fill="#1c0099"/><rect x="292" y="316" width="8" height="8" fill="#1f0099"/><rect x="300" y="316" width="8" height="8" fill="#210099"/><rect x="308" y="316" width="8" height="8" fill="#230099"/><rect x="316" y="316" width="8" height="8" fill="#260099"/><rect x="324" y="316" width="8" height="8" fill="#280099"/><rect x="332" y="316" width="8" height="8" fill="#2b0099"/><rect x="340" y="316" width="8" height="8" fill="#2e0099"/><rect x="348" y="316" width="8" height="8" fill="#300099"/><rect x="356" y="316" width="8" height="8" fill="#330099"/><rect x="364" y="316" width="8" height="8" fill="#360099"/><rect x="372" y="316" width="8" height="8" fill="#390099"/><rect x="380" y="316" width="8" height="8" fill="#3c0099"/><rect x="388" y="316" width="8" height="8" fill="#3f0099"/><rect x="396" y="316" width="8" height="8" fill="#420099"/><rect x="404" y="316" width="8" height="8" fill="#450099"/><rect x="412" y="316" width="8" height="8" fill="#480099"/><rect x="420" y="316" width="8" height="8" fill="#4b0099"/><rect x="428" y="316" width="8" height="8" fill="#4f0099"/><rect x="116" y="324" width="8" height="8" fill="#000399"/><rect x="124" y="324" width="8" height="8" fill="#000399"/><rect x="132" y="324" width="8" height="8" fill="#000399"/><rect x="140" y="324" width="8" height="8" fill="#000399"/><rect x="148" y="324" width="8" height="8" fill="#000399"/><rect x="156" y="324" width="8" height="8" fill="#000399"/><rect x="164" y="324" width="8" height="8" fill="#000399"/><rect x="172" y="324" width="8" height="8" fill="#000499"/><rect x="180" y="324" width="8" height="8" fill="#000499"/><rect x="188" y="324" width="8" height="8" fill="#050099"/><rect x="196" y="324" width="8" height="8" fill="#060099"/><rect x="204" y="324" width="8" height="8" fill="#070099"/><rect x="212" y="324" width="8" height="8" fill="#090099"/><rect x="220" y="324" width="8" height="8" fill="#0b0099"/><rect x="228" y="324" width="8" height="8" fill="#0c0099"/><rect x="236" y="324" width="8" height="8" fill="#0e0099"/><rect x="244" y="324" width="8" height="8" fill="#100099"/><rect x="252" y="324" width="8" height="8" fill="#120099"/><rect x="260" y="324" width="8" height="8" fill="#140099"/><rect x="268" y="324" width="8" height="8" fill="#160099"/><rect x="276" y="324" width="8" height="8" fill="#180099"/><rect x="284" y="324" width="8" height="8" fill="#1a0099"/><rect x="292" y="324" width="8" height="8" fill="#1c0099"/><rect x="300" y="324" width="8" height="8" fill="#1e0099"/><rect x="308" y="324" width="8" height="8" fill="#200099"/><rect x="316" y="324" width="8" height="8" fill="#230099"/><rect x="324" y="324" width="8" height="8" fill="#250099"/><rect x="332" y="324" width="8" height="8" fill="#280099"/><rect x="340" y="324" width="8" height="8" fill="#2a0099"/><rect x="348" y="324" width="8" height="8" fill="#2d0099"/><rect x="356" y="324" width="8" height="8" fill="#2f0099"/><rect x="364" y="324" width="8" height="8" fill="#320099"/><rect x="372" y="324" width="8" height="8" fill="#350099"/><rect x="380" y="324" width="8" height="8" fill="#380099"/><rect x="388" y="324" width="8" height="8" fill="#3a0099"/><rect x="396" y="324" width="8" height="8" fill="#3d0099"/><rect x="404" y="324" width="8" height="8" fill="#400099"/><rect x="412" y="324" width="8" height="8" fill="#430099"/><rect x="420" y="324" width="8" height="8" fill="#470099"/><rect x="124" y="332" width="8" height="8" fill="#000299"/><rect x="132" y="332" width="8" height="8" fill="#000299"/><rect x="140" y="332" width="8" height="8" fill="#000299"/><rect x="148" y="332" width="8" height="8" fill="#000299"/><rect x="156" y="332" width="8" height="8" fill="#000299"/><rect x="164" y="332" width="8" height="8" fill="#000299"/><rect x="172" y="332" width="8" height="8" fill="#000299"/><rect x="180" y="332" width="8" height="8" fill="#000299"/><rect x="188" y="332" width="8" height="8" fill="#030099"/><rect x="196" y="332" width="8" height="8" fill="#050099"/><rect x="204" y="332" width="8" height="8" fill="#060099"/><rect x="212" y="332" width="8" height="8" fill="#070099"/><rect x="220" y="332" width="8" height="8" fill="#090099"/><rect x="228" y="332" width="8" height="8" fill="#0b0099"/><rect x="236" y="332" width="8" height="8" fill="#0c0099"/><rect x="244" y="332" width="8" height="8" fill="#0e0099"/><rect x="252" y="332" width="8" height="8" fill="#100099"/><rect x="260" y="332" width="8" height="8" fill="#120099"/><rect x="268" y="332" width="8" height="8" fill="#130099"/><rect x="276" y="332" width="8" height="8" fill="#150099"/><rect x="284" y="332" width="8" height="8" fill="#170099"/><rect x="292" y="332" width="8" height="8" fill="#190099"/><rect x="300" y="332" width="8" height="8" fill="#1c0099"/><rect x="308" y="332" width="8" height="8" fill="#1e0099"/><rect x="316" y="332" width="8" height="8" fill="#200099"/><rect x="324" y="332" width="8" height="8" fill="#220099"/><rect x="332" y="332" width="8" height="8" fill="#250099"/><rect x="340" y="332" width="8" height="8" fill="#270099"/><rect x="348" y="332" width="8" height="8" fill="#290099"/><rect x="356" y="332" width="8" height="8" fill="#2c0099"/><rect x="364" y="332" width="8" height="8" fill="#2e0099"/><rect x="372" y="332" width="8" height="8" fill="#310099"/><rect x="380" y="332" width="8" height="8" fill="#340099"/><rect x="388" y="332" width="8" height="8" fill="#360099"/><rect x="396" y="332" width="8" height="8" fill="#390099"/><rect x="404" y="332" width="8" height="8" fill="#3c0099"/><rect x="412" y="332" width="8" height="8" fill="#3f0099"/><rect x="132" y="340" width="8" height="8" fill="#000199"/><rect x="140" y="340" width="8" height="8" fill="#000199"/><rect x="148" y="340" width="8" height="8" fill="#000199"/><rect x="156" y="340" width="8" height="8" fill="#000199"/><rect x="164" y="340" width="8" height="8" fill="#000199"/><rect x="172" y="340" width="8" height="8" fill="#000199"/><rect x="180" y="340" width="8" height="8" fill="#000199"/><rect x="188" y="340" width="8" height="8" fill="#020099"/><rect x="196" y="340" width="8" height="8" fill="#030099"/><rect x="204" y="340" width="8" height="8" fill="#050099"/><rect x="212" y="340" width="8" height="8" fill="#060099"/><rect x="220" y="340" width="8" height="8" fill="#070099"/><rect x="228" y="340" width="8" height="8" fill="#090099"/><rect x="236" y="340" width="8" height="8" fill="#0b0099"/><rect x="244" y="340" width="8" height="8" fill="#0c0099"/><rect x="252" y="340" width="8" height="8" fill="#0e0099"/><rect x="260" y="340" width="8" height="8" fill="#100099"/><rect x="268" y="340" width="8" height="8" fill="#110099"/><rect x="276" y="340" width="8" height="8" fill="#130099"/><rect x="284" y="340" width="8" height="8" fill="#150099"/><rect x="292" y="340" width="8" height="8" fill="#170099"/><rect x="300" y="340" width="8" height="8" fill="#190099"/><rect x="308" y="340" width="8" height="8" fill="#1b0099"/><rect x="316" y="340" width="8" height="8" fill="#1d0099"/><rect x="324" y="340" width="8" height="8" fill="#1f0099"/><rect x="332" y="340" width="8" height="8" fill="#220099"/><rect x="340" y="340" width="8" height="8" fill="#240099"/><rect x="348" y="340" width="8" height="8" fill="#260099"/><rect x="356" y="340" width="8" height="8" fill="#290099"/><rect x="364" y="340" width="8" height="8" fill="#2b0099"/><rect x="372" y="340" width="8" height="8" fill="#2e0099"/><rect x="380" y="340" width="8" height="8" fill="#300099"/><rect x="388" y="340" width="8" height="8" fill="#330099"/><rect x="396" y="340" width="8" height="8" fill="#350099"/><rect x="404" y="340" width="8" height="8" fill="#380099"/><rect x="132" y="348" width="8" height="8" fill="#000099"/><rect x="140" y="348" width="8" height="8" fill="#000099"/><rect x="148" y="348" width="8" height="8" fill="#000199"/><rect x="156" y="348" width="8" height="8" fill="#000199"/><rect x="164" y="348" width="8" height="8" fill="#000199"/><rect x="172" y="348" width="8" height="8" fill="#000199"/><rect x="180" y="348" width="8" height="8" fill="#000199"/><rect x="188" y="348" width="8" height="8" fill="#010099"/><rect x="196" y="348" width="8" height="8" fill="#020099"/><rect x="204" y="348" width="8" height="8" fill="#040099"/><rect x="212" y="348" width="8" height="8" fill="#050099"/><rect x="220" y="348" width="8" height="8" fill="#060099"/><rect x="228" y="348" width="8" height="8" fill="#080099"/><rect x="236" y="348" width="8" height="8" fill="#090099"/><rect x="244" y="348" width="8" height="8" fill="#0b0099"/><rect x="252" y="348" width="8" height="8" fill="#0c0099"/><rect x="260" y="348" width="8" height="8" fill="#0e0099"/><rect x="268" y="348" width="8" height="8" fill="#0f0099"/><rect x="276" y="348" width="8" height="8" fill="#110099"/><rect x="284" y="348" width="8" height="8" fill="#130099"/><rect x="292" y="348" width="8" height="8" fill="#150099"/><rect x="300" y="348" width="8" height="8" fill="#170099"/><rect x="308" y="348" width="8" height="8" fill="#190099"/><rect x="316" y="348" width="8" height="8" fill="#1b0099"/><rect x="324" y="348" width="8" height="8" fill="#1d0099"/><rect x="332" y="348" width="8" height="8" fill="#1f0099"/><rect x="340" y="348" width="8" height="8" fill="#210099"/><rect x="348" y="348" width="8" height="8" fill="#230099"/><rect x="356" y="348" width="8" height="8" fill="#260099"/><rect x="364" y="348" width="8" height="8" fill="#280099"/><rect x="372" y="348" width="8" height="8" fill="#2a0099"/><rect x="380" y="348" width="8" height="8" fill="#2d0099"/><rect x="388" y="348" width="8" height="8" fill="#2f0099"/><rect x="396" y="348" width="8" height="8" fill="#320099"/><rect x="140" y="356" width="8" height="8" fill="#000099"/><rect x="148" y="356" width="8" height="8" fill="#000099"/><rect x="156" y="356" width="8" height="8" fill="#000099"/><rect x="164" y="356" width="8" height="8" fill="#000099"/><rect x="172" y="356" width="8" height="8" fill="#000099"/><rect x="180" y="356" width="8" height="8" fill="#000099"/><rect x="188" y="356" width="8" height="8" fill="#010099"/><rect x="196" y="356" width="8" height="8" fill="#020099"/><rect x="204" y="356" width="8" height="8" fill="#030099"/><rect x="212" y="356" width="8" height="8" fill="#040099"/><rect x="220" y="356" width="8" height="8" fill="#050099"/><rect x="228" y="356" width="8" height="8" fill="#060099"/><rect x="236" y="356" width="8" height="8" fill="#080099"/><rect x="244" y="356" width="8" height="8" fill="#090099"/><rect x="252" y="356" width="8" height="8" fill="#0a0099"/><rect x="260" y="356" width="8" height="8" fill="#0c0099"/><rect x="268" y="356" width="8" height="8" fill="#0e0099"/><rect x="276" y="356" width="8" height="8" fill="#0f0099"/><rect x="284" y="356" width="8" height="8" fill="#110099"/><rect x="292" y="356" width="8" height="8" fill="#130099"/><rect x="300" y="356" width="8" height="8" fill="#150099"/><rect x="308" y="356" width="8" height="8" fill="#160099"/><rect x="316" y="356" width="8" height="8" fill="#180099"/><rect x="324" y="356" width="8" height="8" fill="#1a0099"/><rect x="332" y="356" width="8" height="8" fill="#1c0099"/><rect x="340" y="356" width="8" height="8" fill="#1e0099"/><rect x="348" y="356" width="8" height="8" fill="#210099"/><rect x="356" y="356" width="8" height="8" fill="#230099"/><rect x="364" y="356" width="8" height="8" fill="#250099"/><rect x="372" y="356" width="8" height="8" fill="#270099"/><rect x="380" y="356" width="8" height="8" fill="#2a0099"/><rect x="388" y="356" width="8" height="8" fill="#2c0099"/><rect x="148" y="364" width="8" height="8" fill="#000099"/><rect x="156" y="364" width="8" height="8" fill="#000099"/><rect x="164" y="364" width="8" height="8" fill="#000099"/><rect x="172" y="364" width="8" height="8" fill="#000099"/><rect x="180" y="364" width="8" height="8" fill="#000099"/><rect x="188" y="364" width="8" height="8" fill="#000099"/><rect x="196" y="364" width="8" height="8" fill="#010099"/><rect x="204" y="364" width="8" height="8" fill="#020099"/><rect x="212" y="364" width="8" height="8" fill="#030099"/><rect x="220" y="364" width="8" height="8" fill="#040099"/><rect x="228" y="364" width="8" height="8" fill="#050099"/><rect x="236" y="364" width="8" height="8" fill="#060099"/><rect x="244" y="364" width="8" height="8" fill="#080099"/><rect x="252" y="364" width="8" height="8" fill="#090099"/><rect x="260" y="364" width="8" height="8" fill="#0a0099"/><rect x="268" y="364" width="8" height="8" fill="#0c0099"/><rect x="276" y="364" width="8" height="8" fill="#0e0099"/><rect x="284" y="364" width="8" height="8" fill="#0f0099"/><rect x="292" y="364" width="8" height="8" fill="#110099"/><rect x="300" y="364" width="8" height="8" fill="#130099"/><rect x="308" y="364" width="8" height="8" fill="#140099"/><rect x="316" y="364" width="8" height="8" fill="#160099"/><rect x="324" y="364" width="8" height="8" fill="#180099"/><rect x="332" y="364" width="8" height="8" fill="#1a0099"/><rect x="340" y="364" width="8" height="8" fill="#1c0099"/><rect x="348" y="364" width="8" height="8" fill="#1e0099"/><rect x="356" y="364" width="8" height="8" fill="#200099"/><rect x="364" y="364" width="8" height="8" fill="#220099"/><rect x="372" y="364" width="8" height="8" fill="#240099"/><rect x="380" y="364" width="8" height="8" fill="#270099"/><rect x="148" y="372" width="8" height="8" fill="#000099"/><rect x="156" y="372" width="8" height="8" fill="#000099"/><rect x="164" y="372" width="8" height="8" fill="#000099"/><rect x="172" y="372" width="8" height="8" fill="#000099"/><rect x="180" y="372" width="8" height="8" fill="#000099"/><rect x="188" y="372" width="8" height="8" fill="#000099"/><rect x="196" y="372" width="8" height="8" fill="#000099"/><rect x="204" y="372" width="8" height="8" fill="#010099"/><rect x="212" y="372" width="8" height="8" fill="#020099"/><rect x="220" y="372" width="8" height="8" fill="#030099"/><rect x="228" y="372" width="8" height="8" fill="#040099"/><rect x="236" y="372" width="8" height="8" fill="#050099"/><rect x="244" y="372" width="8" height="8" fill="#060099"/><rect x="252" y="372" width="8" height="8" fill="#080099"/><rect x="260" y="372" width="8" height="8" fill="#090099"/><rect x="268" y="372" width="8" height="8" fill="#0a0099"/><rect x="276" y="372" width="8" height="8" fill="#0c0099"/><rect x="284" y="372" width="8" height="8" fill="#0d0099"/><rect x="292" y="372" width="8" height="8" fill="#0f0099"/><rect x="300" y="372" width="8" height="8" fill="#110099"/><rect x="308" y="372" width="8" height="8" fill="#120099"/><rect x="316" y="372" width="8" height="8" fill="#140099"/><rect x="324" y="372" width="8" height="8" fill="#160099"/><rect x="332" y="372" width="8" height="8" fill="#180099"/><rect x="340" y="372" width="8" height="8" fill="#1a0099"/><rect x="348" y="372" width="8" height="8" fill="#1c0099"/><rect x="356" y="372" width="8" height="8" fill="#1e0099"/><rect x="364" y="372" width="8" height="8" fill="#200099"/><rect x="372" y="372" width="8" height="8" fill="#220099"/><rect x="156" y="380" width="8" height="8" fill="#000099"/><rect x="164" y="380" width="8" height="8" fill="#000099"/><rect x="172" y="380" width="8" height="8" fill="#000099"/><rect x="180" y="380" width="8" height="8" fill="#000099"/><rect x="188" y="380" width="8" height="8" fill="#000099"/><rect x="196" y="380" width="8" height="8" fill="#000099"/><rect x="204" y="380" width="8" height="8" fill="#000099"/><rect x="212" y="380" width="8" height="8" fill="#010099"/><rect x="220" y="380" width="8" height="8" fill="#020099"/><rect x="228" y="380" width="8" height="8" fill="#030099"/><rect x="236" y="380" width="8" height="8" fill="#040099"/><rect x="244" y="380" width="8" height="8" fill="#050099"/><rect x="252" y="380" width="8" height="8" fill="#060099"/><rect x="260" y="380" width="8" height="8" fill="#080099"/><rect x="268" y="380" width="8" height="8" fill="#090099"/><rect x="276" y="380" width="8" height="8" fill="#0a0099"/><rect x="284" y="380" width="8" height="8" fill="#0c0099"/><rect x="292" y="380" width="8" height="8" fill="#0d0099"/><rect x="300" y="380" width="8" height="8" fill="#0f0099"/><rect x="308" y="380" width="8" height="8" fill="#110099"/><rect x="316" y="380" width="8" height="8" fill="#120099"/><rect x="324" y="380" width="8" height="8" fill="#140099"/><rect x="332" y="380" width="8" height="8" fill="#160099"/><rect x="340" y="380" width="8" height="8" fill="#170099"/><rect x="348" y="380" width="8" height="8" fill="#190099"/><rect x="356" y="380" width="8" height="8" fill="#1b0099"/><rect x="364" y="380" width="8" height="8" fill="#1d0099"/><rect x="164" y="388" width="8" height="8" fill="#000099"/><rect x="172" y="388" width="8" height="8" fill="#000099"/><rect x="180" y="388" width="8" height="8" fill="#000099"/><rect x="188" y="388" width="8" height="8" fill="#000099"/><rect x="196" y="388" width="8" height="8" fill="#000099"/><rect x="204" y="388" width="8" height="8" fill="#000099"/><rect x="212" y="388" width="8" height="8" fill="#000099"/><rect x="220" y="388" width="8" height="8" fill="#010099"/><rect x="228" y="388" width="8" height="8" fill="#020099"/><rect x="236" y="388" width="8" height="8" fill="#030099"/><rect x="244" y="388" width="8" height="8" fill="#040099"/><rect x="252" y="388" width="8" height="8" fill="#050099"/><rect x="260" y="388" width="8" height="8" fill="#060099"/><rect x="268" y="388" width="8" height="8" fill="#080099"/><rect x="276" y="388" width="8" height="8" fill="#090099"/><rect x="284" y="388" width="8" height="8" fill="#0a0099"/><rect x="292" y="388" width="8" height="8" fill="#0c0099"/><rect x="300" y="388" width="8" height="8" fill="#0d0099"/><rect x="308" y="388" width="8" height="8" fill="#0f0099"/><rect x="316" y="388" width="8" height="8" fill="#100099"/><rect x="324" y="388" width="8" height="8" fill="#120099"/><rect x="332" y="388" width="8" height="8" fill="#140099"/><rect x="340" y="388" width="8" height="8" fill="#150099"/><rect x="348" y="388" width="8" height="8" fill="#170099"/><rect x="356" y="388" width="8" height="8" fill="#190099"/><rect x="172" y="396" width="8" height="8" fill="#000099"/><rect x="180" y="396" width="8" height="8" fill="#000099"/><rect x="188" y="396" width="8" height="8" fill="#000099"/><rect x="196" y="396" width="8" height="8" fill="#000099"/><rect x="204" y="396" width="8" height="8" fill="#000099"/><rect x="212" y="396" width="8" height="8" fill="#000099"/><rect x="220" y="396" width="8" height="8" fill="#000099"/><rect x="228" y="396" width="8" height="8" fill="#010099"/><rect x="236" y="396" width="8" height="8" fill="#020099"/><rect x="244" y="396" width="8" height="8" fill="#030099"/><rect x="252" y="396" width="8" height="8" fill="#040099"/><rect x="260" y="396" width="8" height="8" fill="#050099"/><rect x="268" y="396" width="8" height="8" fill="#060099"/><rect x="276" y="396" width="8" height="8" fill="#080099"/><rect x="284" y="396" width="8" height="8" fill="#090099"/><rect x="292" y="396" width="8" height="8" fill="#0a0099"/><rect x="300" y="396" width="8" height="8" fill="#0c0099"/><rect x="308" y="396" width="8" height="8" fill="#0d0099"/><rect x="316" y="396" width="8" height="8" fill="#0f0099"/><rect x="324" y="396" width="8" height="8" fill="#100099"/><rect x="332" y="396" width="8" height="8" fill="#120099"/><rect x="340" y="396" width="8" height="8" fill="#140099"/><rect x="348" y="396" width="8" height="8" fill="#150099"/><rect x="180" y="404" width="8" height="8" fill="#000099"/><rect x="188" y="404" width="8" height="8" fill="#000099"/><rect x="196" y="404" width="8" height="8" fill="#000099"/><rect x="204" y="404" width="8" height="8" fill="#000099"/><rect x="212" y="404" width="8" height="8" fill="#000099"/><rect x="220" y="404" width="8" height="8" fill="#000099"/><rect x="228" y="404" width="8" height="8" fill="#000099"/><rect x="236" y="404" width="8" height="8" fill="#010099"/><rect x="244" y="404" width="8" height="8" fill="#020099"/><rect x="252" y="404" width="8" height="8" fill="#030099"/><rect x="260" y="404" width="8" height="8" fill="#040099"/><rect x="268" y="404" width="8" height="8" fill="#050099"/><rect x="276" y="404" width="8" height="8" fill="#060099"/><rect x="284" y="404" width="8" height="8" fill="#080099"/><rect x="292" y="404" width="8" height="8" fill="#090099"/><rect x="300" y="404" width="8" height="8" fill="#0a0099"/><rect x="308" y="404" width="8" height="8" fill="#0c0099"/><rect x="316" y="404" width="8" height="8" fill="#0d0099"/><rect x="324" y="404" width="8" height="8" fill="#0f0099"/><rect x="332" y="404" width="8" height="8" fill="#100099"/><rect x="340" y="404" width="8" height="8" fill="#120099"/><rect x="188" y="412" width="8" height="8" fill="#000099"/><rect x="196" y="412" width="8" height="8" fill="#000099"/><rect x="204" y="412" width="8" height="8" fill="#000099"/><rect x="212" y="412" width="8" height="8" fill="#000099"/><rect x="220" y="412" width="8" height="8" fill="#000099"/><rect x="228" y="412" width="8" height="8" fill="#000099"/><rect x="236" y="412" width="8" height="8" fill="#010099"/><rect x="244" y="412" width="8" height="8" fill="#010099"/><rect x="252" y="412" width="8" height="8" fill="#020099"/><rect x="260" y="412" width="8" height="8" fill="#030099"/><rect x="268" y="412" width="8" height="8" fill="#040099"/><rect x="276" y="412" width="8" height="8" fill="#050099"/><rect x="284" y="412" width="8" height="8" fill="#070099"/><rect x="292" y="412" width="8" height="8" fill="#080099"/><rect x="300" y="412" width="8" height="8" fill="#090099"/><rect x="308" y="412" width="8" height="8" fill="#0a0099"/><rect x="316" y="412" width="8" height="8" fill="#0c0099"/><rect x="324" y="412" width="8" height="8" fill="#0d0099"/><rect x="332" y="412" width="8" height="8" fill="#0f0099"/><rect x="196" y="420" width="8" height="8" fill="#000099"/><rect x="204" y="420" width="8" height="8" fill="#000099"/><rect x="212" y="420" width="8" height="8" fill="#000099"/><rect x="220" y="420" width="8" height="8" fill="#000099"/><rect x="228" y="420" width="8" height="8" fill="#000099"/><rect x="236" y="420" width="8" height="8" fill="#000099"/><rect x="244" y="420" width="8" height="8" fill="#010099"/><rect x="252" y="420" width="8" height="8" fill="#010099"/><rect x="260" y="420" width="8" height="8" fill="#020099"/><rect x="268" y="420" width="8" height="8" fill="#030099"/><rect x="276" y="420" width="8" height="8" fill="#040099"/><rect x="284" y="420" width="8" height="8" fill="#050099"/><rect x="292" y="420" width="8" height="8" fill="#070099"/><rect x="300" y="420" width="8" height="8" fill="#080099"/><rect x="308" y="420" width="8" height="8" fill="#090099"/><rect x="316" y="420" width="8" height="8" fill="#0a0099"/><rect x="324" y="420" width="8" height="8" fill="#0c0099"/><rect x="204" y="428" width="8" height="8" fill="#000099"/><rect x="212" y="428" width="8" height="8" fill="#000099"/><rect x="220" y="428" width="8" height="8" fill="#000099"/><rect x="228" y="428" width="8" height="8" fill="#000099"/><rect x="236" y="428" width="8" height="8" fill="#000099"/><rect x="244" y="428" width="8" height="8" fill="#000099"/><rect x="252" y="428" width="8" height="8" fill="#010099"/><rect x="260" y="428" width="8" height="8" fill="#020099"/><rect x="268" y="428" width="8" height="8" fill="#020099"/><rect x="276" y="428" width="8" height="8" fill="#030099"/><rect x="284" y="428" width="8" height="8" fill="#040099"/><rect x="292" y="428" width="8" height="8" fill="#050099"/><rect x="300" y="428" width="8" height="8" fill="#070099"/><rect x="308" y="428" width="8" height="8" fill="#080099"/><rect x="316" y="428" width="8" height="8" fill="#090099"/><rect x="212" y="436" width="8" height="8" fill="#000099"/><rect x="220" y="436" width="8" height="8" fill="#000099"/><rect x="228" y="436" width="8" height="8" fill="#000099"/><rect x="236" y="436" width="8" height="8" fill="#000099"/><rect x="244" y="436" width="8" height="8" fill="#000099"/><rect x="252" y="436" width="8" height="8" fill="#000099"/><rect x="260" y="436" width="8" height="8" fill="#010099"/><rect x="268" y="436" width="8" height="8" fill="#020099"/><rect x="276" y="436" width="8" height="8" fill="#030099"/><rect x="284" y="436" width="8" height="8" fill="#030099"/><rect x="292" y="436" width="8" height="8" fill="#040099"/><rect x="300" y="436" width="8" height="8" fill="#060099"/><rect x="308" y="436" width="8" height="8" fill="#070099"/><rect x="220" y="444" width="8" height="8" fill="#000099"/><rect x="228" y="444" width="8" height="8" fill="#000099"/><rect x="236" y="444" width="8" height="8" fill="#000099"/><rect x="244" y="444" width="8" height="8" fill="#000099"/><rect x="252" y="444" width="8" height="8" fill="#000099"/><rect x="260" y="444" width="8" height="8" fill="#000099"/><rect x="268" y="444" width="8" height="8" fill="#010099"/><rect x="276" y="444" width="8" height="8" fill="#020099"/><rect x="284" y="444" width="8" height="8" fill="#030099"/><rect x="292" y="444" width="8" height="8" fill="#040099"/><rect x="300" y="444" width="8" height="8" fill="#050099"/><rect x="228" y="452" width="8" height="8" fill="#000099"/><rect x="236" y="452" width="8" height="8" fill="#000099"/><rect x="244" y="452" width="8" height="8" fill="#000099"/><rect x="252" y="452" width="8" height="8" fill="#000099"/><rect x="260" y="452" width="8" height="8" fill="#000099"/><rect x="268" y="452" width="8" height="8" fill="#000099"/><rect x="276" y="452" width="8" height="8" fill="#010099"/><rect x="284" y="452" width="8" height="8" fill="#020099"/><rect x="292" y="452" width="8" height="8" fill="#030099"/><rect x="300" y="452" width="8" height="8" fill="#040099"/><rect x="244" y="460" width="8" height="8" fill="#000099"/><rect x="252" y="460" width="8" height="8" fill="#000099"/><rect x="260" y="460" width="8" height="8" fill="#000099"/><rect x="268" y="460" width="8" height="8" fill="#000099"/><rect x="276" y="460" width="8" height="8" fill="#000099"/><rect x="284" y="460" width="8" height="8" fill="#010099"/><rect x="292" y="460" width="8" height="8" fill="#020099"/><rect x="252" y="468" width="8" height="8" fill="#000099"/><rect x="260" y="468" width="8" height="8" fill="#000099"/><rect x="268" y="468" width="8" height="8" fill="#000099"/><rect x="276" y="468" width="8" height="8" fill="#000099"/><rect x="284" y="468" width="8" height="8" fill="#010099"/><rect x="260" y="476" width="8" height="8" fill="#000099"/><rect x="268" y="476" width="8" height="8" fill="#000099"/><rect x="276" y="476" width="8" height="8" fill="#000099"/></g></g><g clip-path="url(#tri)"><g class="cl" filter="url(#cblur)"><rect x="76" y="12" width="8" height="8" fill="#00ff00"/><rect x="84" y="12" width="8" height="8" fill="#05ff00"/><rect x="92" y="12" width="8" height="8" fill="#0bff00"/><rect x="100" y="12" width="8" height="8" fill="#13ff00"/><rect x="108" y="12" width="8" height="8" fill="#1cff00"/><rect x="76" y="20" width="8" height="8" fill="#00ff04"/><rect x="84" y="20" width="8" height="8" fill="#03ff04"/><rect x="92" y="20" width="8" height="8" fill="#09ff03"/><rect x="100" y="20" width="8" height="8" fill="#11ff02"/><rect x="108" y="20" width="8" height="8" fill="#1aff02"/><rect x="116" y="20" width="8" height="8" fill="#24ff01"/><rect x="124" y="20" width="8" height="8" fill="#2eff00"/><rect x="132" y="20" width="8" height="8" fill="#3aff00"/><rect x="140" y="20" width="8" height="8" fill="#47ff00"/><rect x="148" y="20" width="8" height="8" fill="#55ff00"/><rect x="156" y="20" width="8" height="8" fill="#64ff00"/><rect x="164" y="20" width="8" height="8" fill="#74ff00"/><rect x="172" y="20" width="8" height="8" fill="#86ff00"/><rect x="180" y="20" width="8" height="8" fill="#99ff00"/><rect x="188" y="20" width="8" height="8" fill="#adff00"/><rect x="76" y="28" width="8" height="8" fill="#00ff0d"/><rect x="84" y="28" width="8" height="8" fill="#02ff0d"/><rect x="92" y="28" width="8" height="8" fill="#08ff0c"/><rect x="100" y="28" width="8" height="8" fill="#0fff0b"/><rect x="108" y="28" width="8" height="8" fill="#18ff0a"/><rect x="116" y="28" width="8" height="8" fill="#21ff09"/><rect x="124" y="28" width="8" height="8" fill="#2cff09"/><rect x="132" y="28" width="8" height="8" fill="#38ff08"/><rect x="140" y="28" width="8" height="8" fill="#45ff07"/><rect x="148" y="28" width="8" height="8" fill="#53ff06"/><rect x="156" y="28" width="8" height="8" fill="#63ff05"/><rect x="164" y="28" width="8" height="8" fill="#73ff04"/><rect x="172" y="28" width="8" height="8" fill="#85ff03"/><rect x="180" y="28" width="8" height="8" fill="#99ff02"/><rect x="188" y="28" width="8" height="8" fill="#adff01"/><rect x="196" y="28" width="8" height="8" fill="#c4ff01"/><rect x="204" y="28" width="8" height="8" fill="#dcff00"/><rect x="212" y="28" width="8" height="8" fill="#f6ff00"/><rect x="220" y="28" width="8" height="8" fill="#ffed00"/><rect x="228" y="28" width="8" height="8" fill="#ffd500"/><rect x="236" y="28" width="8" height="8" fill="#ffc000"/><rect x="244" y="28" width="8" height="8" fill="#ffae00"/><rect x="252" y="28" width="8" height="8" fill="#ff9d00"/><rect x="260" y="28" width="8" height="8" fill="#ff8f00"/><rect x="84" y="36" width="8" height="8" fill="#00ff18"/><rect x="92" y="36" width="8" height="8" fill="#06ff17"/><rect x="100" y="36" width="8" height="8" fill="#0dff16"/><rect x="108" y="36" width="8" height="8" fill="#16ff16"/><rect x="116" y="36" width="8" height="8" fill="#1fff15"/><rect x="124" y="36" width="8" height="8" fill="#2aff14"/><rect x="132" y="36" width="8" height="8" fill="#36ff13"/><rect x="140" y="36" width="8" height="8" fill="#44ff12"/><rect x="148" y="36" width="8" height="8" fill="#52ff12"/><rect x="156" y="36" width="8" height="8" fill="#61ff11"/><rect x="164" y="36" width="8" height="8" fill="#72ff10"/><rect x="172" y="36" width="8" height="8" fill="#85ff0f"/><rect x="180" y="36" width="8" height="8" fill="#98ff0e"/><rect x="188" y="36" width="8" height="8" fill="#aeff0d"/><rect x="196" y="36" width="8" height="8" fill="#c5ff0c"/><rect x="204" y="36" width="8" height="8" fill="#deff0b"/><rect x="212" y="36" width="8" height="8" fill="#f9ff0a"/><rect x="220" y="36" width="8" height="8" fill="#ffea08"/><rect x="228" y="36" width="8" height="8" fill="#ffd206"/><rect x="236" y="36" width="8" height="8" fill="#ffbd05"/><rect x="244" y="36" width="8" height="8" fill="#ffaa03"/><rect x="252" y="36" width="8" height="8" fill="#ff9a02"/><rect x="260" y="36" width="8" height="8" fill="#ff8b01"/><rect x="268" y="36" width="8" height="8" fill="#ff7e01"/><rect x="276" y="36" width="8" height="8" fill="#ff7300"/><rect x="284" y="36" width="8" height="8" fill="#ff6800"/><rect x="292" y="36" width="8" height="8" fill="#ff5e00"/><rect x="300" y="36" width="8" height="8" fill="#ff5600"/><rect x="308" y="36" width="8" height="8" fill="#ff4e00"/><rect x="316" y="36" width="8" height="8" fill="#ff4600"/><rect x="324" y="36" width="8" height="8" fill="#ff4000"/><rect x="332" y="36" width="8" height="8" fill="#ff3a00"/><rect x="84" y="44" width="8" height="8" fill="#00ff24"/><rect x="92" y="44" width="8" height="8" fill="#04ff24"/><rect x="100" y="44" width="8" height="8" fill="#0bff23"/><rect x="108" y="44" width="8" height="8" fill="#13ff23"/><rect x="116" y="44" width="8" height="8" fill="#1dff22"/><rect x="124" y="44" width="8" height="8" fill="#28ff22"/><rect x="132" y="44" width="8" height="8" fill="#34ff21"/><rect x="140" y="44" width="8" height="8" fill="#42ff21"/><rect x="148" y="44" width="8" height="8" fill="#50ff20"/><rect x="156" y="44" width="8" height="8" fill="#60ff1f"/><rect x="164" y="44" width="8" height="8" fill="#71ff1f"/><rect x="172" y="44" width="8" height="8" fill="#84ff1e"/><rect x="180" y="44" width="8" height="8" fill="#98ff1d"/><rect x="188" y="44" width="8" height="8" fill="#aeff1d"/><rect x="196" y="44" width="8" height="8" fill="#c6ff1c"/><rect x="204" y="44" width="8" height="8" fill="#e0ff1b"/><rect x="212" y="44" width="8" height="8" fill="#fcff1a"/><rect x="220" y="44" width="8" height="8" fill="#ffe717"/><rect x="228" y="44" width="8" height="8" fill="#ffcf14"/><rect x="236" y="44" width="8" height="8" fill="#ffba11"/><rect x="244" y="44" width="8" height="8" fill="#ffa70e"/><rect x="252" y="44" width="8" height="8" fill="#ff970c"/><rect x="260" y="44" width="8" height="8" fill="#ff880b"/><rect x="268" y="44" width="8" height="8" fill="#ff7b09"/><rect x="276" y="44" width="8" height="8" fill="#ff6f07"/><rect x="284" y="44" width="8" height="8" fill="#ff6506"/><rect x="292" y="44" width="8" height="8" fill="#ff5b05"/><rect x="300" y="44" width="8" height="8" fill="#ff5304"/><rect x="308" y="44" width="8" height="8" fill="#ff4b03"/><rect x="316" y="44" width="8" height="8" fill="#ff4402"/><rect x="324" y="44" width="8" height="8" fill="#ff3d02"/><rect x="332" y="44" width="8" height="8" fill="#ff3701"/><rect x="340" y="44" width="8" height="8" fill="#ff3101"/><rect x="348" y="44" width="8" height="8" fill="#ff2c00"/><rect x="356" y="44" width="8" height="8" fill="#ff2800"/><rect x="364" y="44" width="8" height="8" fill="#ff2300"/><rect x="372" y="44" width="8" height="8" fill="#ff1f00"/><rect x="380" y="44" width="8" height="8" fill="#ff1c00"/><rect x="388" y="44" width="8" height="8" fill="#ff1800"/><rect x="396" y="44" width="8" height="8" fill="#ff1500"/><rect x="404" y="44" width="8" height="8" fill="#ff1200"/><rect x="412" y="44" width="8" height="8" fill="#ff1000"/><rect x="84" y="52" width="8" height="8" fill="#00ff32"/><rect x="92" y="52" width="8" height="8" fill="#02ff32"/><rect x="100" y="52" width="8" height="8" fill="#09ff32"/><rect x="108" y="52" width="8" height="8" fill="#11ff32"/><rect x="116" y="52" width="8" height="8" fill="#1bff31"/><rect x="124" y="52" width="8" height="8" fill="#26ff31"/><rect x="132" y="52" width="8" height="8" fill="#32ff31"/><rect x="140" y="52" width="8" height="8" fill="#40ff31"/><rect x="148" y="52" width="8" height="8" fill="#4fff30"/><rect x="156" y="52" width="8" height="8" fill="#5fff30"/><rect x="164" y="52" width="8" height="8" fill="#70ff30"/><rect x="172" y="52" width="8" height="8" fill="#84ff30"/><rect x="180" y="52" width="8" height="8" fill="#98ff2f"/><rect x="188" y="52" width="8" height="8" fill="#afff2f"/><rect x="196" y="52" width="8" height="8" fill="#c7ff2f"/><rect x="204" y="52" width="8" height="8" fill="#e2ff2e"/><rect x="212" y="52" width="8" height="8" fill="#ffff2e"/><rect x="220" y="52" width="8" height="8" fill="#ffe328"/><rect x="228" y="52" width="8" height="8" fill="#ffcb24"/><rect x="236" y="52" width="8" height="8" fill="#ffb620"/><rect x="244" y="52" width="8" height="8" fill="#ffa41c"/><rect x="252" y="52" width="8" height="8" fill="#ff9319"/><rect x="260" y="52" width="8" height="8" fill="#ff8516"/><rect x="268" y="52" width="8" height="8" fill="#ff7814"/><rect x="276" y="52" width="8" height="8" fill="#ff6c12"/><rect x="284" y="52" width="8" height="8" fill="#ff6110"/><rect x="292" y="52" width="8" height="8" fill="#ff580e"/><rect x="300" y="52" width="8" height="8" fill="#ff4f0c"/><rect x="308" y="52" width="8" height="8" fill="#ff480b"/><rect x="316" y="52" width="8" height="8" fill="#ff4109"/><rect x="324" y="52" width="8" height="8" fill="#ff3a08"/><rect x="332" y="52" width="8" height="8" fill="#ff3407"/><rect x="340" y="52" width="8" height="8" fill="#ff2f06"/><rect x="348" y="52" width="8" height="8" fill="#ff2a05"/><rect x="356" y="52" width="8" height="8" fill="#ff2504"/><rect x="364" y="52" width="8" height="8" fill="#ff2104"/><rect x="372" y="52" width="8" height="8" fill="#ff1d03"/><rect x="380" y="52" width="8" height="8" fill="#ff1a02"/><rect x="388" y="52" width="8" height="8" fill="#ff1602"/><rect x="396" y="52" width="8" height="8" fill="#ff1301"/><rect x="404" y="52" width="8" height="8" fill="#ff1001"/><rect x="412" y="52" width="8" height="8" fill="#ff0e01"/><rect x="420" y="52" width="8" height="8" fill="#ff0b00"/><rect x="428" y="52" width="8" height="8" fill="#ff0900"/><rect x="436" y="52" width="8" height="8" fill="#ff0700"/><rect x="444" y="52" width="8" height="8" fill="#ff0600"/><rect x="452" y="52" width="8" height="8" fill="#ff0400"/><rect x="460" y="52" width="8" height="8" fill="#ff0300"/><rect x="468" y="52" width="8" height="8" fill="#ff0100"/><rect x="476" y="52" width="8" height="8" fill="#ff0000"/><rect x="484" y="52" width="8" height="8" fill="#ff0000"/><rect x="84" y="60" width="8" height="8" fill="#00ff42"/><rect x="92" y="60" width="8" height="8" fill="#01ff42"/><rect x="100" y="60" width="8" height="8" fill="#07ff42"/><rect x="108" y="60" width="8" height="8" fill="#0fff42"/><rect x="116" y="60" width="8" height="8" fill="#19ff42"/><rect x="124" y="60" width="8" height="8" fill="#24ff43"/><rect x="132" y="60" width="8" height="8" fill="#30ff43"/><rect x="140" y="60" width="8" height="8" fill="#3eff43"/><rect x="148" y="60" width="8" height="8" fill="#4dff43"/><rect x="156" y="60" width="8" height="8" fill="#5dff43"/><rect x="164" y="60" width="8" height="8" fill="#6fff43"/><rect x="172" y="60" width="8" height="8" fill="#83ff44"/><rect x="180" y="60" width="8" height="8" fill="#98ff44"/><rect x="188" y="60" width="8" height="8" fill="#afff44"/><rect x="196" y="60" width="8" height="8" fill="#c8ff44"/><rect x="204" y="60" width="8" height="8" fill="#e4ff45"/><rect x="212" y="60" width="8" height="8" fill="#fffc44"/><rect x="220" y="60" width="8" height="8" fill="#ffe03d"/><rect x="228" y="60" width="8" height="8" fill="#ffc836"/><rect x="236" y="60" width="8" height="8" fill="#ffb331"/><rect x="244" y="60" width="8" height="8" fill="#ffa02c"/><rect x="252" y="60" width="8" height="8" fill="#ff9028"/><rect x="260" y="60" width="8" height="8" fill="#ff8124"/><rect x="268" y="60" width="8" height="8" fill="#ff7420"/><rect x="276" y="60" width="8" height="8" fill="#ff681d"/><rect x="284" y="60" width="8" height="8" fill="#ff5e1b"/><rect x="292" y="60" width="8" height="8" fill="#ff5518"/><rect x="300" y="60" width="8" height="8" fill="#ff4c16"/><rect x="308" y="60" width="8" height="8" fill="#ff4514"/><rect x="316" y="60" width="8" height="8" fill="#ff3e12"/><rect x="324" y="60" width="8" height="8" fill="#ff3710"/><rect x="332" y="60" width="8" height="8" fill="#ff310f"/><rect x="340" y="60" width="8" height="8" fill="#ff2c0d"/><rect x="348" y="60" width="8" height="8" fill="#ff270c"/><rect x="356" y="60" width="8" height="8" fill="#ff230b"/><rect x="364" y="60" width="8" height="8" fill="#ff1f0a"/><rect x="372" y="60" width="8" height="8" fill="#ff1b09"/><rect x="380" y="60" width="8" height="8" fill="#ff1708"/><rect x="388" y="60" width="8" height="8" fill="#ff1407"/><rect x="396" y="60" width="8" height="8" fill="#ff1106"/><rect x="404" y="60" width="8" height="8" fill="#ff0e05"/><rect x="412" y="60" width="8" height="8" fill="#ff0c05"/><rect x="420" y="60" width="8" height="8" fill="#ff0a04"/><rect x="428" y="60" width="8" height="8" fill="#ff0803"/><rect x="436" y="60" width="8" height="8" fill="#ff0603"/><rect x="444" y="60" width="8" height="8" fill="#ff0402"/><rect x="452" y="60" width="8" height="8" fill="#ff0302"/><rect x="460" y="60" width="8" height="8" fill="#ff0102"/><rect x="468" y="60" width="8" height="8" fill="#ff0001"/><rect x="476" y="60" width="8" height="8" fill="#ff0001"/><rect x="92" y="68" width="8" height="8" fill="#00ff53"/><rect x="100" y="68" width="8" height="8" fill="#05ff54"/><rect x="108" y="68" width="8" height="8" fill="#0dff55"/><rect x="116" y="68" width="8" height="8" fill="#17ff55"/><rect x="124" y="68" width="8" height="8" fill="#22ff56"/><rect x="132" y="68" width="8" height="8" fill="#2eff56"/><rect x="140" y="68" width="8" height="8" fill="#3cff57"/><rect x="148" y="68" width="8" height="8" fill="#4bff58"/><rect x="156" y="68" width="8" height="8" fill="#5cff59"/><rect x="164" y="68" width="8" height="8" fill="#6eff59"/><rect x="172" y="68" width="8" height="8" fill="#82ff5a"/><rect x="180" y="68" width="8" height="8" fill="#98ff5b"/><rect x="188" y="68" width="8" height="8" fill="#b0ff5c"/><rect x="196" y="68" width="8" height="8" fill="#caff5d"/><rect x="204" y="68" width="8" height="8" fill="#e6ff5e"/><rect x="212" y="68" width="8" height="8" fill="#fff95d"/><rect x="220" y="68" width="8" height="8" fill="#ffdd53"/><rect x="228" y="68" width="8" height="8" fill="#ffc44b"/><rect x="236" y="68" width="8" height="8" fill="#ffaf44"/><rect x="244" y="68" width="8" height="8" fill="#ff9c3e"/><rect x="252" y="68" width="8" height="8" fill="#ff8c38"/><rect x="260" y="68" width="8" height="8" fill="#ff7d33"/><rect x="268" y="68" width="8" height="8" fill="#ff702f"/><rect x="276" y="68" width="8" height="8" fill="#ff652b"/><rect x="284" y="68" width="8" height="8" fill="#ff5b27"/><rect x="292" y="68" width="8" height="8" fill="#ff5124"/><rect x="300" y="68" width="8" height="8" fill="#ff4921"/><rect x="308" y="68" width="8" height="8" fill="#ff411e"/><rect x="316" y="68" width="8" height="8" fill="#ff3b1c"/><rect x="324" y="68" width="8" height="8" fill="#ff341a"/><rect x="332" y="68" width="8" height="8" fill="#ff2f18"/><rect x="340" y="68" width="8" height="8" fill="#ff2916"/><rect x="348" y="68" width="8" height="8" fill="#ff2514"/><rect x="356" y="68" width="8" height="8" fill="#ff2012"/><rect x="364" y="68" width="8" height="8" fill="#ff1c11"/><rect x="372" y="68" width="8" height="8" fill="#ff1810"/><rect x="380" y="68" width="8" height="8" fill="#ff150e"/><rect x="388" y="68" width="8" height="8" fill="#ff120d"/><rect x="396" y="68" width="8" height="8" fill="#ff0f0c"/><rect x="404" y="68" width="8" height="8" fill="#ff0d0b"/><rect x="412" y="68" width="8" height="8" fill="#ff0a0a"/><rect x="420" y="68" width="8" height="8" fill="#ff0809"/><rect x="428" y="68" width="8" height="8" fill="#ff0608"/><rect x="436" y="68" width="8" height="8" fill="#ff0408"/><rect x="444" y="68" width="8" height="8" fill="#ff0307"/><rect x="452" y="68" width="8" height="8" fill="#ff0106"/><rect x="460" y="68" width="8" height="8" fill="#ff0006"/><rect x="468" y="68" width="8" height="8" fill="#ff0005"/><rect x="92" y="76" width="8" height="8" fill="#00ff66"/><rect x="100" y="76" width="8" height="8" fill="#03ff67"/><rect x="108" y="76" width="8" height="8" fill="#0bff69"/><rect x="116" y="76" width="8" height="8" fill="#14ff6a"/><rect x="124" y="76" width="8" height="8" fill="#1fff6b"/><rect x="132" y="76" width="8" height="8" fill="#2cff6c"/><rect x="140" y="76" width="8" height="8" fill="#3aff6d"/><rect x="148" y="76" width="8" height="8" fill="#49ff6f"/><rect x="156" y="76" width="8" height="8" fill="#5aff70"/><rect x="164" y="76" width="8" height="8" fill="#6dff72"/><rect x="172" y="76" width="8" height="8" fill="#82ff73"/><rect x="180" y="76" width="8" height="8" fill="#98ff75"/><rect x="188" y="76" width="8" height="8" fill="#b0ff77"/><rect x="196" y="76" width="8" height="8" fill="#cbff79"/><rect x="204" y="76" width="8" height="8" fill="#e8ff7b"/><rect x="212" y="76" width="8" height="8" fill="#fff678"/><rect x="220" y="76" width="8" height="8" fill="#ffd96c"/><rect x="228" y="76" width="8" height="8" fill="#ffc062"/><rect x="236" y="76" width="8" height="8" fill="#ffab59"/><rect x="244" y="76" width="8" height="8" fill="#ff9851"/><rect x="252" y="76" width="8" height="8" fill="#ff884a"/><rect x="260" y="76" width="8" height="8" fill="#ff7a44"/><rect x="268" y="76" width="8" height="8" fill="#ff6d3e"/><rect x="276" y="76" width="8" height="8" fill="#ff6139"/><rect x="284" y="76" width="8" height="8" fill="#ff5735"/><rect x="292" y="76" width="8" height="8" fill="#ff4e31"/><rect x="300" y="76" width="8" height="8" fill="#ff462d"/><rect x="308" y="76" width="8" height="8" fill="#ff3e2a"/><rect x="316" y="76" width="8" height="8" fill="#ff3727"/><rect x="324" y="76" width="8" height="8" fill="#ff3124"/><rect x="332" y="76" width="8" height="8" fill="#ff2c21"/><rect x="340" y="76" width="8" height="8" fill="#ff271f"/><rect x="348" y="76" width="8" height="8" fill="#ff221d"/><rect x="356" y="76" width="8" height="8" fill="#ff1e1b"/><rect x="364" y="76" width="8" height="8" fill="#ff1a19"/><rect x="372" y="76" width="8" height="8" fill="#ff1617"/><rect x="380" y="76" width="8" height="8" fill="#ff1316"/><rect x="388" y="76" width="8" height="8" fill="#ff1014"/><rect x="396" y="76" width="8" height="8" fill="#ff0d13"/><rect x="404" y="76" width="8" height="8" fill="#ff0b11"/><rect x="412" y="76" width="8" height="8" fill="#ff0810"/><rect x="420" y="76" width="8" height="8" fill="#ff060f"/><rect x="428" y="76" width="8" height="8" fill="#ff050e"/><rect x="436" y="76" width="8" height="8" fill="#ff030d"/><rect x="444" y="76" width="8" height="8" fill="#ff020c"/><rect x="452" y="76" width="8" height="8" fill="#ff000b"/><rect x="460" y="76" width="8" height="8" fill="#ff000a"/><rect x="92" y="84" width="8" height="8" fill="#00ff7b"/><rect x="100" y="84" width="8" height="8" fill="#01ff7d"/><rect x="108" y="84" width="8" height="8" fill="#08ff7e"/><rect x="116" y="84" width="8" height="8" fill="#12ff80"/><rect x="124" y="84" width="8" height="8" fill="#1dff82"/><rect x="132" y="84" width="8" height="8" fill="#29ff84"/><rect x="140" y="84" width="8" height="8" fill="#38ff86"/><rect x="148" y="84" width="8" height="8" fill="#47ff88"/><rect x="156" y="84" width="8" height="8" fill="#59ff8a"/><rect x="164" y="84" width="8" height="8" fill="#6cff8c"/><rect x="172" y="84" width="8" height="8" fill="#81ff8f"/><rect x="180" y="84" width="8" height="8" fill="#98ff92"/><rect x="188" y="84" width="8" height="8" fill="#b1ff94"/><rect x="196" y="84" width="8" height="8" fill="#cdff97"/><rect x="204" y="84" width="8" height="8" fill="#ebff9b"/><rect x="212" y="84" width="8" height="8" fill="#fff296"/><rect x="220" y="84" width="8" height="8" fill="#ffd588"/><rect x="228" y="84" width="8" height="8" fill="#ffbd7b"/><rect x="236" y="84" width="8" height="8" fill="#ffa770"/><rect x="244" y="84" width="8" height="8" fill="#ff9466"/><rect x="252" y="84" width="8" height="8" fill="#ff845d"/><rect x="260" y="84" width="8" height="8" fill="#ff7656"/><rect x="268" y="84" width="8" height="8" fill="#ff694f"/><rect x="276" y="84" width="8" height="8" fill="#ff5e49"/><rect x="284" y="84" width="8" height="8" fill="#ff5444"/><rect x="292" y="84" width="8" height="8" fill="#ff4b3f"/><rect x="300" y="84" width="8" height="8" fill="#ff423a"/><rect x="308" y="84" width="8" height="8" fill="#ff3b36"/><rect x="316" y="84" width="8" height="8" fill="#ff3433"/><rect x="324" y="84" width="8" height="8" fill="#ff2e2f"/><rect x="332" y="84" width="8" height="8" fill="#ff292c"/><rect x="340" y="84" width="8" height="8" fill="#ff2429"/><rect x="348" y="84" width="8" height="8" fill="#ff1f26"/><rect x="356" y="84" width="8" height="8" fill="#ff1b24"/><rect x="364" y="84" width="8" height="8" fill="#ff1722"/><rect x="372" y="84" width="8" height="8" fill="#ff1420"/><rect x="380" y="84" width="8" height="8" fill="#ff111e"/><rect x="388" y="84" width="8" height="8" fill="#ff0e1c"/><rect x="396" y="84" width="8" height="8" fill="#ff0b1a"/><rect x="404" y="84" width="8" height="8" fill="#ff0918"/><rect x="412" y="84" width="8" height="8" fill="#ff0717"/><rect x="420" y="84" width="8" height="8" fill="#ff0516"/><rect x="428" y="84" width="8" height="8" fill="#ff0314"/><rect x="436" y="84" width="8" height="8" fill="#ff0213"/><rect x="444" y="84" width="8" height="8" fill="#ff0012"/><rect x="452" y="84" width="8" height="8" fill="#ff0011"/><rect x="100" y="92" width="8" height="8" fill="#00ff94"/><rect x="108" y="92" width="8" height="8" fill="#06ff96"/><rect x="116" y="92" width="8" height="8" fill="#0fff98"/><rect x="124" y="92" width="8" height="8" fill="#1aff9b"/><rect x="132" y="92" width="8" height="8" fill="#27ff9e"/><rect x="140" y="92" width="8" height="8" fill="#35ffa0"/><rect x="148" y="92" width="8" height="8" fill="#45ffa3"/><rect x="156" y="92" width="8" height="8" fill="#57ffa6"/><rect x="164" y="92" width="8" height="8" fill="#6affaa"/><rect x="172" y="92" width="8" height="8" fill="#80ffad"/><rect x="180" y="92" width="8" height="8" fill="#98ffb1"/><rect x="188" y="92" width="8" height="8" fill="#b2ffb5"/><rect x="196" y="92" width="8" height="8" fill="#ceffba"/><rect x="204" y="92" width="8" height="8" fill="#eeffbe"/><rect x="212" y="92" width="8" height="8" fill="#ffefb7"/><rect x="220" y="92" width="8" height="8" fill="#ffd2a5"/><rect x="228" y="92" width="8" height="8" fill="#ffb996"/><rect x="236" y="92" width="8" height="8" fill="#ffa388"/><rect x="244" y="92" width="8" height="8" fill="#ff907d"/><rect x="252" y="92" width="8" height="8" fill="#ff8072"/><rect x="260" y="92" width="8" height="8" fill="#ff7269"/><rect x="268" y="92" width="8" height="8" fill="#ff6561"/><rect x="276" y="92" width="8" height="8" fill="#ff5a5a"/><rect x="284" y="92" width="8" height="8" fill="#ff5054"/><rect x="292" y="92" width="8" height="8" fill="#ff474e"/><rect x="300" y="92" width="8" height="8" fill="#ff3f48"/><rect x="308" y="92" width="8" height="8" fill="#ff3844"/><rect x="316" y="92" width="8" height="8" fill="#ff313f"/><rect x="324" y="92" width="8" height="8" fill="#ff2b3b"/><rect x="332" y="92" width="8" height="8" fill="#ff2637"/><rect x="340" y="92" width="8" height="8" fill="#ff2134"/><rect x="348" y="92" width="8" height="8" fill="#ff1d31"/><rect x="356" y="92" width="8" height="8" fill="#ff192e"/><rect x="364" y="92" width="8" height="8" fill="#ff152b"/><rect x="372" y="92" width="8" height="8" fill="#ff1229"/><rect x="380" y="92" width="8" height="8" fill="#ff0e26"/><rect x="388" y="92" width="8" height="8" fill="#ff0c24"/><rect x="396" y="92" width="8" height="8" fill="#ff0922"/><rect x="404" y="92" width="8" height="8" fill="#ff0720"/><rect x="412" y="92" width="8" height="8" fill="#ff051e"/><rect x="420" y="92" width="8" height="8" fill="#ff031d"/><rect x="428" y="92" width="8" height="8" fill="#ff021b"/><rect x="436" y="92" width="8" height="8" fill="#ff0019"/><rect x="444" y="92" width="8" height="8" fill="#ff0018"/><rect x="100" y="100" width="8" height="8" fill="#00ffac"/><rect x="108" y="100" width="8" height="8" fill="#04ffaf"/><rect x="116" y="100" width="8" height="8" fill="#0dffb3"/><rect x="124" y="100" width="8" height="8" fill="#18ffb6"/><rect x="132" y="100" width="8" height="8" fill="#24ffba"/><rect x="140" y="100" width="8" height="8" fill="#33ffbd"/><rect x="148" y="100" width="8" height="8" fill="#43ffc1"/><rect x="156" y="100" width="8" height="8" fill="#55ffc6"/><rect x="164" y="100" width="8" height="8" fill="#69ffca"/><rect x="172" y="100" width="8" height="8" fill="#7fffcf"/><rect x="180" y="100" width="8" height="8" fill="#98ffd4"/><rect x="188" y="100" width="8" height="8" fill="#b2ffda"/><rect x="196" y="100" width="8" height="8" fill="#d0ffe0"/><rect x="204" y="100" width="8" height="8" fill="#f1ffe6"/><rect x="212" y="100" width="8" height="8" fill="#ffebda"/><rect x="220" y="100" width="8" height="8" fill="#ffcec5"/><rect x="228" y="100" width="8" height="8" fill="#ffb4b3"/><rect x="236" y="100" width="8" height="8" fill="#ff9fa3"/><rect x="244" y="100" width="8" height="8" fill="#ff8c95"/><rect x="252" y="100" width="8" height="8" fill="#ff7c89"/><rect x="260" y="100" width="8" height="8" fill="#ff6e7e"/><rect x="268" y="100" width="8" height="8" fill="#ff6175"/><rect x="276" y="100" width="8" height="8" fill="#ff566c"/><rect x="284" y="100" width="8" height="8" fill="#ff4c65"/><rect x="292" y="100" width="8" height="8" fill="#ff435e"/><rect x="300" y="100" width="8" height="8" fill="#ff3c57"/><rect x="308" y="100" width="8" height="8" fill="#ff3452"/><rect x="316" y="100" width="8" height="8" fill="#ff2e4d"/><rect x="324" y="100" width="8" height="8" fill="#ff2848"/><rect x="332" y="100" width="8" height="8" fill="#ff2343"/><rect x="340" y="100" width="8" height="8" fill="#ff1e3f"/><rect x="348" y="100" width="8" height="8" fill="#ff1a3c"/><rect x="356" y="100" width="8" height="8" fill="#ff1638"/><rect x="364" y="100" width="8" height="8" fill="#ff1235"/><rect x="372" y="100" width="8" height="8" fill="#ff0f32"/><rect x="380" y="100" width="8" height="8" fill="#ff0c2f"/><rect x="388" y="100" width="8" height="8" fill="#ff0a2d"/><rect x="396" y="100" width="8" height="8" fill="#ff072a"/><rect x="404" y="100" width="8" height="8" fill="#ff0528"/><rect x="412" y="100" width="8" height="8" fill="#ff0326"/><rect x="420" y="100" width="8" height="8" fill="#ff0224"/><rect x="428" y="100" width="8" height="8" fill="#ff0122"/><rect x="436" y="100" width="8" height="8" fill="#ff0020"/><rect x="100" y="108" width="8" height="8" fill="#00ffc7"/><rect x="108" y="108" width="8" height="8" fill="#02ffcb"/><rect x="116" y="108" width="8" height="8" fill="#0affcf"/><rect x="124" y="108" width="8" height="8" fill="#15ffd4"/><rect x="132" y="108" width="8" height="8" fill="#22ffd8"/><rect x="140" y="108" width="8" height="8" fill="#30ffdd"/><rect x="148" y="108" width="8" height="8" fill="#41ffe2"/><rect x="156" y="108" width="8" height="8" fill="#53ffe8"/><rect x="164" y="108" width="8" height="8" fill="#68ffee"/><rect x="172" y="108" width="8" height="8" fill="#7efff4"/><rect x="180" y="108" width="8" height="8" fill="#97fffb"/><rect x="188" y="108" width="8" height="8" fill="#b1fcff"/><rect x="196" y="108" width="8" height="8" fill="#c9f5ff"/><rect x="204" y="108" width="8" height="8" fill="#e3edff"/><rect x="212" y="108" width="8" height="8" fill="#fde6ff"/><rect x="220" y="108" width="8" height="8" fill="#ffc9e7"/><rect x="228" y="108" width="8" height="8" fill="#ffb0d2"/><rect x="236" y="108" width="8" height="8" fill="#ff9bbf"/><rect x="244" y="108" width="8" height="8" fill="#ff88af"/><rect x="252" y="108" width="8" height="8" fill="#ff78a1"/><rect x="260" y="108" width="8" height="8" fill="#ff6a94"/><rect x="268" y="108" width="8" height="8" fill="#ff5d89"/><rect x="276" y="108" width="8" height="8" fill="#ff5280"/><rect x="284" y="108" width="8" height="8" fill="#ff4977"/><rect x="292" y="108" width="8" height="8" fill="#ff406f"/><rect x="300" y="108" width="8" height="8" fill="#ff3867"/><rect x="308" y="108" width="8" height="8" fill="#ff3161"/><rect x="316" y="108" width="8" height="8" fill="#ff2b5b"/><rect x="324" y="108" width="8" height="8" fill="#ff2555"/><rect x="332" y="108" width="8" height="8" fill="#ff2050"/><rect x="340" y="108" width="8" height="8" fill="#ff1b4c"/><rect x="348" y="108" width="8" height="8" fill="#ff1747"/><rect x="356" y="108" width="8" height="8" fill="#ff1343"/><rect x="364" y="108" width="8" height="8" fill="#ff1040"/><rect x="372" y="108" width="8" height="8" fill="#ff0d3c"/><rect x="380" y="108" width="8" height="8" fill="#ff0a39"/><rect x="388" y="108" width="8" height="8" fill="#ff0836"/><rect x="396" y="108" width="8" height="8" fill="#ff0633"/><rect x="404" y="108" width="8" height="8" fill="#ff0431"/><rect x="412" y="108" width="8" height="8" fill="#ff022e"/><rect x="420" y="108" width="8" height="8" fill="#ff012c"/><rect x="428" y="108" width="8" height="8" fill="#ff002a"/><rect x="108" y="116" width="8" height="8" fill="#00ffe9"/><rect x="116" y="116" width="8" height="8" fill="#08ffee"/><rect x="124" y="116" width="8" height="8" fill="#12fff4"/><rect x="132" y="116" width="8" height="8" fill="#1ffff9"/><rect x="140" y="116" width="8" height="8" fill="#2effff"/><rect x="148" y="116" width="8" height="8" fill="#3df8ff"/><rect x="156" y="116" width="8" height="8" fill="#4df2ff"/><rect x="164" y="116" width="8" height="8" fill="#5eebff"/><rect x="172" y="116" width="8" height="8" fill="#70e5ff"/><rect x="180" y="116" width="8" height="8" fill="#84deff"/><rect x="188" y="116" width="8" height="8" fill="#98d7ff"/><rect x="196" y="116" width="8" height="8" fill="#add0ff"/><rect x="204" y="116" width="8" height="8" fill="#c3c9ff"/><rect x="212" y="116" width="8" height="8" fill="#dac2ff"/><rect x="220" y="116" width="8" height="8" fill="#f2bbff"/><rect x="228" y="116" width="8" height="8" fill="#ffacf3"/><rect x="236" y="116" width="8" height="8" fill="#ff96de"/><rect x="244" y="116" width="8" height="8" fill="#ff84cb"/><rect x="252" y="116" width="8" height="8" fill="#ff74bb"/><rect x="260" y="116" width="8" height="8" fill="#ff66ac"/><rect x="268" y="116" width="8" height="8" fill="#ff599f"/><rect x="276" y="116" width="8" height="8" fill="#ff4e94"/><rect x="284" y="116" width="8" height="8" fill="#ff458a"/><rect x="292" y="116" width="8" height="8" fill="#ff3c81"/><rect x="300" y="116" width="8" height="8" fill="#ff3578"/><rect x="308" y="116" width="8" height="8" fill="#ff2e71"/><rect x="316" y="116" width="8" height="8" fill="#ff286a"/><rect x="324" y="116" width="8" height="8" fill="#ff2264"/><rect x="332" y="116" width="8" height="8" fill="#ff1d5e"/><rect x="340" y="116" width="8" height="8" fill="#ff1959"/><rect x="348" y="116" width="8" height="8" fill="#ff1554"/><rect x="356" y="116" width="8" height="8" fill="#ff114f"/><rect x="364" y="116" width="8" height="8" fill="#ff0e4b"/><rect x="372" y="116" width="8" height="8" fill="#ff0b47"/><rect x="380" y="116" width="8" height="8" fill="#ff0843"/><rect x="388" y="116" width="8" height="8" fill="#ff0640"/><rect x="396" y="116" width="8" height="8" fill="#ff043d"/><rect x="404" y="116" width="8" height="8" fill="#ff023a"/><rect x="412" y="116" width="8" height="8" fill="#ff0137"/><rect x="420" y="116" width="8" height="8" fill="#ff0034"/><rect x="108" y="124" width="8" height="8" fill="#00f5ff"/><rect x="116" y="124" width="8" height="8" fill="#05efff"/><rect x="124" y="124" width="8" height="8" fill="#0eeaff"/><rect x="132" y="124" width="8" height="8" fill="#19e4ff"/><rect x="140" y="124" width="8" height="8" fill="#25deff"/><rect x="148" y="124" width="8" height="8" fill="#33d8ff"/><rect x="156" y="124" width="8" height="8" fill="#41d2ff"/><rect x="164" y="124" width="8" height="8" fill="#50ccff"/><rect x="172" y="124" width="8" height="8" fill="#60c6ff"/><rect x="180" y="124" width="8" height="8" fill="#71bfff"/><rect x="188" y="124" width="8" height="8" fill="#83b9ff"/><rect x="196" y="124" width="8" height="8" fill="#96b3ff"/><rect x="204" y="124" width="8" height="8" fill="#a9acff"/><rect x="212" y="124" width="8" height="8" fill="#bea6ff"/><rect x="220" y="124" width="8" height="8" fill="#d39fff"/><rect x="228" y="124" width="8" height="8" fill="#e999ff"/><rect x="236" y="124" width="8" height="8" fill="#ff92fe"/><rect x="244" y="124" width="8" height="8" fill="#ff7fe9"/><rect x="252" y="124" width="8" height="8" fill="#ff6fd6"/><rect x="260" y="124" width="8" height="8" fill="#ff61c5"/><rect x="268" y="124" width="8" height="8" fill="#ff55b7"/><rect x="276" y="124" width="8" height="8" fill="#ff4aaa"/><rect x="284" y="124" width="8" height="8" fill="#ff419e"/><rect x="292" y="124" width="8" height="8" fill="#ff3994"/><rect x="300" y="124" width="8" height="8" fill="#ff318a"/><rect x="308" y="124" width="8" height="8" fill="#ff2a82"/><rect x="316" y="124" width="8" height="8" fill="#ff247a"/><rect x="324" y="124" width="8" height="8" fill="#ff1f73"/><rect x="332" y="124" width="8" height="8" fill="#ff1a6c"/><rect x="340" y="124" width="8" height="8" fill="#ff1666"/><rect x="348" y="124" width="8" height="8" fill="#ff1261"/><rect x="356" y="124" width="8" height="8" fill="#ff0f5b"/><rect x="364" y="124" width="8" height="8" fill="#ff0b57"/><rect x="372" y="124" width="8" height="8" fill="#ff0952"/><rect x="380" y="124" width="8" height="8" fill="#ff064e"/><rect x="388" y="124" width="8" height="8" fill="#ff044a"/><rect x="396" y="124" width="8" height="8" fill="#ff0247"/><rect x="404" y="124" width="8" height="8" fill="#ff0143"/><rect x="412" y="124" width="8" height="8" fill="#ff0040"/><rect x="108" y="132" width="8" height="8" fill="#00d9ff"/><rect x="116" y="132" width="8" height="8" fill="#02d3ff"/><rect x="124" y="132" width="8" height="8" fill="#0aceff"/><rect x="132" y="132" width="8" height="8" fill="#14c8ff"/><rect x="140" y="132" width="8" height="8" fill="#1fc3ff"/><rect x="148" y="132" width="8" height="8" fill="#2abdff"/><rect x="156" y="132" width="8" height="8" fill="#37b8ff"/><rect x="164" y="132" width="8" height="8" fill="#45b2ff"/><rect x="172" y="132" width="8" height="8" fill="#53acff"/><rect x="180" y="132" width="8" height="8" fill="#62a6ff"/><rect x="188" y="132" width="8" height="8" fill="#72a0ff"/><rect x="196" y="132" width="8" height="8" fill="#839bff"/><rect x="204" y="132" width="8" height="8" fill="#9495ff"/><rect x="212" y="132" width="8" height="8" fill="#a68fff"/><rect x="220" y="132" width="8" height="8" fill="#b989ff"/><rect x="228" y="132" width="8" height="8" fill="#cd82ff"/><rect x="236" y="132" width="8" height="8" fill="#e17cff"/><rect x="244" y="132" width="8" height="8" fill="#f676ff"/><rect x="252" y="132" width="8" height="8" fill="#ff6bf3"/><rect x="260" y="132" width="8" height="8" fill="#ff5de0"/><rect x="268" y="132" width="8" height="8" fill="#ff51d0"/><rect x="276" y="132" width="8" height="8" fill="#ff46c1"/><rect x="284" y="132" width="8" height="8" fill="#ff3db4"/><rect x="292" y="132" width="8" height="8" fill="#ff35a8"/><rect x="300" y="132" width="8" height="8" fill="#ff2d9d"/><rect x="308" y="132" width="8" height="8" fill="#ff2793"/><rect x="316" y="132" width="8" height="8" fill="#ff218b"/><rect x="324" y="132" width="8" height="8" fill="#ff1c82"/><rect x="332" y="132" width="8" height="8" fill="#ff177b"/><rect x="340" y="132" width="8" height="8" fill="#ff1374"/><rect x="348" y="132" width="8" height="8" fill="#ff0f6e"/><rect x="356" y="132" width="8" height="8" fill="#ff0c68"/><rect x="364" y="132" width="8" height="8" fill="#ff0963"/><rect x="372" y="132" width="8" height="8" fill="#ff075e"/><rect x="380" y="132" width="8" height="8" fill="#ff0459"/><rect x="388" y="132" width="8" height="8" fill="#ff0255"/><rect x="396" y="132" width="8" height="8" fill="#ff0151"/><rect x="404" y="132" width="8" height="8" fill="#ff004d"/><rect x="116" y="140" width="8" height="8" fill="#00bbff"/><rect x="124" y="140" width="8" height="8" fill="#07b6ff"/><rect x="132" y="140" width="8" height="8" fill="#0fb1ff"/><rect x="140" y="140" width="8" height="8" fill="#19acff"/><rect x="148" y="140" width="8" height="8" fill="#24a7ff"/><rect x="156" y="140" width="8" height="8" fill="#2fa1ff"/><rect x="164" y="140" width="8" height="8" fill="#3b9cff"/><rect x="172" y="140" width="8" height="8" fill="#4897ff"/><rect x="180" y="140" width="8" height="8" fill="#5691ff"/><rect x="188" y="140" width="8" height="8" fill="#648cff"/><rect x="196" y="140" width="8" height="8" fill="#7386ff"/><rect x="204" y="140" width="8" height="8" fill="#8381ff"/><rect x="212" y="140" width="8" height="8" fill="#937bff"/><rect x="220" y="140" width="8" height="8" fill="#a476ff"/><rect x="228" y="140" width="8" height="8" fill="#b570ff"/><rect x="236" y="140" width="8" height="8" fill="#c76aff"/><rect x="244" y="140" width="8" height="8" fill="#da65ff"/><rect x="252" y="140" width="8" height="8" fill="#ee5fff"/><rect x="260" y="140" width="8" height="8" fill="#ff58fc"/><rect x="268" y="140" width="8" height="8" fill="#ff4cea"/><rect x="276" y="140" width="8" height="8" fill="#ff42d9"/><rect x="284" y="140" width="8" height="8" fill="#ff39ca"/><rect x="292" y="140" width="8" height="8" fill="#ff31bd"/><rect x="300" y="140" width="8" height="8" fill="#ff2ab1"/><rect x="308" y="140" width="8" height="8" fill="#ff23a6"/><rect x="316" y="140" width="8" height="8" fill="#ff1e9c"/><rect x="324" y="140" width="8" height="8" fill="#ff1993"/><rect x="332" y="140" width="8" height="8" fill="#ff148b"/><rect x="340" y="140" width="8" height="8" fill="#ff1083"/><rect x="348" y="140" width="8" height="8" fill="#ff0d7c"/><rect x="356" y="140" width="8" height="8" fill="#ff0a76"/><rect x="364" y="140" width="8" height="8" fill="#ff0770"/><rect x="372" y="140" width="8" height="8" fill="#ff046a"/><rect x="380" y="140" width="8" height="8" fill="#ff0265"/><rect x="388" y="140" width="8" height="8" fill="#ff0160"/><rect x="396" y="140" width="8" height="8" fill="#ff005c"/><rect x="116" y="148" width="8" height="8" fill="#00a7ff"/><rect x="124" y="148" width="8" height="8" fill="#04a2ff"/><rect x="132" y="148" width="8" height="8" fill="#0c9dff"/><rect x="140" y="148" width="8" height="8" fill="#1498ff"/><rect x="148" y="148" width="8" height="8" fill="#1e93ff"/><rect x="156" y="148" width="8" height="8" fill="#288fff"/><rect x="164" y="148" width="8" height="8" fill="#338aff"/><rect x="172" y="148" width="8" height="8" fill="#3f85ff"/><rect x="180" y="148" width="8" height="8" fill="#4b7fff"/><rect x="188" y="148" width="8" height="8" fill="#587aff"/><rect x="196" y="148" width="8" height="8" fill="#6675ff"/><rect x="204" y="148" width="8" height="8" fill="#7470ff"/><rect x="212" y="148" width="8" height="8" fill="#826bff"/><rect x="220" y="148" width="8" height="8" fill="#9266ff"/><rect x="228" y="148" width="8" height="8" fill="#a261ff"/><rect x="236" y="148" width="8" height="8" fill="#b25bff"/><rect x="244" y="148" width="8" height="8" fill="#c356ff"/><rect x="252" y="148" width="8" height="8" fill="#d451ff"/><rect x="260" y="148" width="8" height="8" fill="#e64cff"/><rect x="268" y="148" width="8" height="8" fill="#f946ff"/><rect x="276" y="148" width="8" height="8" fill="#ff3ef3"/><rect x="284" y="148" width="8" height="8" fill="#ff35e2"/><rect x="292" y="148" width="8" height="8" fill="#ff2dd3"/><rect x="300" y="148" width="8" height="8" fill="#ff26c6"/><rect x="308" y="148" width="8" height="8" fill="#ff20ba"/><rect x="316" y="148" width="8" height="8" fill="#ff1baf"/><rect x="324" y="148" width="8" height="8" fill="#ff16a4"/><rect x="332" y="148" width="8" height="8" fill="#ff119b"/><rect x="340" y="148" width="8" height="8" fill="#ff0e93"/><rect x="348" y="148" width="8" height="8" fill="#ff0a8b"/><rect x="356" y="148" width="8" height="8" fill="#ff0784"/><rect x="364" y="148" width="8" height="8" fill="#ff057d"/><rect x="372" y="148" width="8" height="8" fill="#ff0377"/><rect x="380" y="148" width="8" height="8" fill="#ff0171"/><rect x="388" y="148" width="8" height="8" fill="#ff006c"/><rect x="116" y="156" width="8" height="8" fill="#0095ff"/><rect x="124" y="156" width="8" height="8" fill="#0291ff"/><rect x="132" y="156" width="8" height="8" fill="#098cff"/><rect x="140" y="156" width="8" height="8" fill="#1088ff"/><rect x="148" y="156" width="8" height="8" fill="#1983ff"/><rect x="156" y="156" width="8" height="8" fill="#227eff"/><rect x="164" y="156" width="8" height="8" fill="#2c7aff"/><rect x="172" y="156" width="8" height="8" fill="#3775ff"/><rect x="180" y="156" width="8" height="8" fill="#4270ff"/><rect x="188" y="156" width="8" height="8" fill="#4e6bff"/><rect x="196" y="156" width="8" height="8" fill="#5a67ff"/><rect x="204" y="156" width="8" height="8" fill="#6762ff"/><rect x="212" y="156" width="8" height="8" fill="#745dff"/><rect x="220" y="156" width="8" height="8" fill="#8258ff"/><rect x="228" y="156" width="8" height="8" fill="#9153ff"/><rect x="236" y="156" width="8" height="8" fill="#9f4fff"/><rect x="244" y="156" width="8" height="8" fill="#af4aff"/><rect x="252" y="156" width="8" height="8" fill="#bf45ff"/><rect x="260" y="156" width="8" height="8" fill="#cf40ff"/><rect x="268" y="156" width="8" height="8" fill="#e03bff"/><rect x="276" y="156" width="8" height="8" fill="#f136ff"/><rect x="284" y="156" width="8" height="8" fill="#ff31fb"/><rect x="292" y="156" width="8" height="8" fill="#ff29ea"/><rect x="300" y="156" width="8" height="8" fill="#ff22dc"/><rect x="308" y="156" width="8" height="8" fill="#ff1cce"/><rect x="316" y="156" width="8" height="8" fill="#ff17c2"/><rect x="324" y="156" width="8" height="8" fill="#ff13b7"/><rect x="332" y="156" width="8" height="8" fill="#ff0fac"/><rect x="340" y="156" width="8" height="8" fill="#ff0ba3"/><rect x="348" y="156" width="8" height="8" fill="#ff089b"/><rect x="356" y="156" width="8" height="8" fill="#ff0593"/><rect x="364" y="156" width="8" height="8" fill="#ff038b"/><rect x="372" y="156" width="8" height="8" fill="#ff0184"/><rect x="380" y="156" width="8" height="8" fill="#ff007e"/><rect x="116" y="164" width="8" height="8" fill="#0086ff"/><rect x="124" y="164" width="8" height="8" fill="#0182ff"/><rect x="132" y="164" width="8" height="8" fill="#067dff"/><rect x="140" y="164" width="8" height="8" fill="#0d79ff"/><rect x="148" y="164" width="8" height="8" fill="#1575ff"/><rect x="156" y="164" width="8" height="8" fill="#1d70ff"/><rect x="164" y="164" width="8" height="8" fill="#266cff"/><rect x="172" y="164" width="8" height="8" fill="#3068ff"/><rect x="180" y="164" width="8" height="8" fill="#3a63ff"/><rect x="188" y="164" width="8" height="8" fill="#455fff"/><rect x="196" y="164" width="8" height="8" fill="#505aff"/><rect x="204" y="164" width="8" height="8" fill="#5c56ff"/><rect x="212" y="164" width="8" height="8" fill="#6851ff"/><rect x="220" y="164" width="8" height="8" fill="#754dff"/><rect x="228" y="164" width="8" height="8" fill="#8248ff"/><rect x="236" y="164" width="8" height="8" fill="#9044ff"/><rect x="244" y="164" width="8" height="8" fill="#9e3fff"/><rect x="252" y="164" width="8" height="8" fill="#ac3bff"/><rect x="260" y="164" width="8" height="8" fill="#bb36ff"/><rect x="268" y="164" width="8" height="8" fill="#ca32ff"/><rect x="276" y="164" width="8" height="8" fill="#da2dff"/><rect x="284" y="164" width="8" height="8" fill="#ea29ff"/><rect x="292" y="164" width="8" height="8" fill="#fb25ff"/><rect x="300" y="164" width="8" height="8" fill="#ff1ff2"/><rect x="308" y="164" width="8" height="8" fill="#ff19e3"/><rect x="316" y="164" width="8" height="8" fill="#ff14d6"/><rect x="324" y="164" width="8" height="8" fill="#ff10ca"/><rect x="332" y="164" width="8" height="8" fill="#ff0cbe"/><rect x="340" y="164" width="8" height="8" fill="#ff08b4"/><rect x="348" y="164" width="8" height="8" fill="#ff05ab"/><rect x="356" y="164" width="8" height="8" fill="#ff03a2"/><rect x="364" y="164" width="8" height="8" fill="#ff019a"/><rect x="372" y="164" width="8" height="8" fill="#ff0092"/><rect x="124" y="172" width="8" height="8" fill="#0074ff"/><rect x="132" y="172" width="8" height="8" fill="#0470ff"/><rect x="140" y="172" width="8" height="8" fill="#0a6cff"/><rect x="148" y="172" width="8" height="8" fill="#1168ff"/><rect x="156" y="172" width="8" height="8" fill="#1964ff"/><rect x="164" y="172" width="8" height="8" fill="#2160ff"/><rect x="172" y="172" width="8" height="8" fill="#2a5cff"/><rect x="180" y="172" width="8" height="8" fill="#3358ff"/><rect x="188" y="172" width="8" height="8" fill="#3d54ff"/><rect x="196" y="172" width="8" height="8" fill="#484fff"/><rect x="204" y="172" width="8" height="8" fill="#534bff"/><rect x="212" y="172" width="8" height="8" fill="#5e47ff"/><rect x="220" y="172" width="8" height="8" fill="#6943ff"/><rect x="228" y="172" width="8" height="8" fill="#753fff"/><rect x="236" y="172" width="8" height="8" fill="#823aff"/><rect x="244" y="172" width="8" height="8" fill="#8f36ff"/><rect x="252" y="172" width="8" height="8" fill="#9c32ff"/><rect x="260" y="172" width="8" height="8" fill="#aa2eff"/><rect x="268" y="172" width="8" height="8" fill="#b82aff"/><rect x="276" y="172" width="8" height="8" fill="#c626ff"/><rect x="284" y="172" width="8" height="8" fill="#d522ff"/><rect x="292" y="172" width="8" height="8" fill="#e41eff"/><rect x="300" y="172" width="8" height="8" fill="#f41aff"/><rect x="308" y="172" width="8" height="8" fill="#ff16fa"/><rect x="316" y="172" width="8" height="8" fill="#ff11eb"/><rect x="324" y="172" width="8" height="8" fill="#ff0dde"/><rect x="332" y="172" width="8" height="8" fill="#ff09d1"/><rect x="340" y="172" width="8" height="8" fill="#ff06c6"/><rect x="348" y="172" width="8" height="8" fill="#ff03bb"/><rect x="356" y="172" width="8" height="8" fill="#ff01b2"/><rect x="364" y="172" width="8" height="8" fill="#ff00a9"/><rect x="124" y="180" width="8" height="8" fill="#0069ff"/><rect x="132" y="180" width="8" height="8" fill="#0265ff"/><rect x="140" y="180" width="8" height="8" fill="#0861ff"/><rect x="148" y="180" width="8" height="8" fill="#0e5dff"/><rect x="156" y="180" width="8" height="8" fill="#1559ff"/><rect x="164" y="180" width="8" height="8" fill="#1d55ff"/><rect x="172" y="180" width="8" height="8" fill="#2552ff"/><rect x="180" y="180" width="8" height="8" fill="#2d4eff"/><rect x="188" y="180" width="8" height="8" fill="#374aff"/><rect x="196" y="180" width="8" height="8" fill="#4046ff"/><rect x="204" y="180" width="8" height="8" fill="#4a42ff"/><rect x="212" y="180" width="8" height="8" fill="#553eff"/><rect x="220" y="180" width="8" height="8" fill="#5f3aff"/><rect x="228" y="180" width="8" height="8" fill="#6a36ff"/><rect x="236" y="180" width="8" height="8" fill="#7632ff"/><rect x="244" y="180" width="8" height="8" fill="#822fff"/><rect x="252" y="180" width="8" height="8" fill="#8e2bff"/><rect x="260" y="180" width="8" height="8" fill="#9b27ff"/><rect x="268" y="180" width="8" height="8" fill="#a823ff"/><rect x="276" y="180" width="8" height="8" fill="#b51fff"/><rect x="284" y="180" width="8" height="8" fill="#c31cff"/><rect x="292" y="180" width="8" height="8" fill="#d118ff"/><rect x="300" y="180" width="8" height="8" fill="#df14ff"/><rect x="308" y="180" width="8" height="8" fill="#ee11ff"/><rect x="316" y="180" width="8" height="8" fill="#fd0dff"/><rect x="324" y="180" width="8" height="8" fill="#ff0af2"/><rect x="332" y="180" width="8" height="8" fill="#ff06e5"/><rect x="340" y="180" width="8" height="8" fill="#ff04d8"/><rect x="348" y="180" width="8" height="8" fill="#ff01cd"/><rect x="356" y="180" width="8" height="8" fill="#ff00c3"/><rect x="124" y="188" width="8" height="8" fill="#005eff"/><rect x="132" y="188" width="8" height="8" fill="#015bff"/><rect x="140" y="188" width="8" height="8" fill="#0557ff"/><rect x="148" y="188" width="8" height="8" fill="#0b54ff"/><rect x="156" y="188" width="8" height="8" fill="#1250ff"/><rect x="164" y="188" width="8" height="8" fill="#194cff"/><rect x="172" y="188" width="8" height="8" fill="#2049ff"/><rect x="180" y="188" width="8" height="8" fill="#2845ff"/><rect x="188" y="188" width="8" height="8" fill="#3141ff"/><rect x="196" y="188" width="8" height="8" fill="#3a3eff"/><rect x="204" y="188" width="8" height="8" fill="#433aff"/><rect x="212" y="188" width="8" height="8" fill="#4c36ff"/><rect x="220" y="188" width="8" height="8" fill="#5633ff"/><rect x="228" y="188" width="8" height="8" fill="#612fff"/><rect x="236" y="188" width="8" height="8" fill="#6b2bff"/><rect x="244" y="188" width="8" height="8" fill="#7628ff"/><rect x="252" y="188" width="8" height="8" fill="#8224ff"/><rect x="260" y="188" width="8" height="8" fill="#8d21ff"/><rect x="268" y="188" width="8" height="8" fill="#991dff"/><rect x="276" y="188" width="8" height="8" fill="#a61aff"/><rect x="284" y="188" width="8" height="8" fill="#b216ff"/><rect x="292" y="188" width="8" height="8" fill="#bf13ff"/><rect x="300" y="188" width="8" height="8" fill="#cd10ff"/><rect x="308" y="188" width="8" height="8" fill="#da0cff"/><rect x="316" y="188" width="8" height="8" fill="#e809ff"/><rect x="324" y="188" width="8" height="8" fill="#f607ff"/><rect x="332" y="188" width="8" height="8" fill="#ff04f9"/><rect x="340" y="188" width="8" height="8" fill="#ff01ec"/><rect x="348" y="188" width="8" height="8" fill="#ff00df"/><rect x="132" y="196" width="8" height="8" fill="#0052ff"/><rect x="140" y="196" width="8" height="8" fill="#044eff"/><rect x="148" y="196" width="8" height="8" fill="#094bff"/><rect x="156" y="196" width="8" height="8" fill="#0f47ff"/><rect x="164" y="196" width="8" height="8" fill="#1544ff"/><rect x="172" y="196" width="8" height="8" fill="#1c41ff"/><rect x="180" y="196" width="8" height="8" fill="#243dff"/><rect x="188" y="196" width="8" height="8" fill="#2b3aff"/><rect x="196" y="196" width="8" height="8" fill="#3436ff"/><rect x="204" y="196" width="8" height="8" fill="#3c33ff"/><rect x="212" y="196" width="8" height="8" fill="#452fff"/><rect x="220" y="196" width="8" height="8" fill="#4e2cff"/><rect x="228" y="196" width="8" height="8" fill="#5829ff"/><rect x="236" y="196" width="8" height="8" fill="#6225ff"/><rect x="244" y="196" width="8" height="8" fill="#6c22ff"/><rect x="252" y="196" width="8" height="8" fill="#771fff"/><rect x="260" y="196" width="8" height="8" fill="#821bff"/><rect x="268" y="196" width="8" height="8" fill="#8d18ff"/><rect x="276" y="196" width="8" height="8" fill="#9815ff"/><rect x="284" y="196" width="8" height="8" fill="#a412ff"/><rect x="292" y="196" width="8" height="8" fill="#b00fff"/><rect x="300" y="196" width="8" height="8" fill="#bc0cff"/><rect x="308" y="196" width="8" height="8" fill="#c909ff"/><rect x="316" y="196" width="8" height="8" fill="#d606ff"/><rect x="324" y="196" width="8" height="8" fill="#e304ff"/><rect x="332" y="196" width="8" height="8" fill="#f101ff"/><rect x="340" y="196" width="8" height="8" fill="#fe00ff"/><rect x="348" y="196" width="8" height="8" fill="#ff00f2"/><rect x="132" y="204" width="8" height="8" fill="#004aff"/><rect x="140" y="204" width="8" height="8" fill="#0246ff"/><rect x="148" y="204" width="8" height="8" fill="#0743ff"/><rect x="156" y="204" width="8" height="8" fill="#0c40ff"/><rect x="164" y="204" width="8" height="8" fill="#123dff"/><rect x="172" y="204" width="8" height="8" fill="#1939ff"/><rect x="180" y="204" width="8" height="8" fill="#2036ff"/><rect x="188" y="204" width="8" height="8" fill="#2733ff"/><rect x="196" y="204" width="8" height="8" fill="#2e30ff"/><rect x="204" y="204" width="8" height="8" fill="#362cff"/><rect x="212" y="204" width="8" height="8" fill="#3f29ff"/><rect x="220" y="204" width="8" height="8" fill="#4726ff"/><rect x="228" y="204" width="8" height="8" fill="#5023ff"/><rect x="236" y="204" width="8" height="8" fill="#5a20ff"/><rect x="244" y="204" width="8" height="8" fill="#631dff"/><rect x="252" y="204" width="8" height="8" fill="#6d1aff"/><rect x="260" y="204" width="8" height="8" fill="#7717ff"/><rect x="268" y="204" width="8" height="8" fill="#8114ff"/><rect x="276" y="204" width="8" height="8" fill="#8c11ff"/><rect x="284" y="204" width="8" height="8" fill="#970eff"/><rect x="292" y="204" width="8" height="8" fill="#a20bff"/><rect x="300" y="204" width="8" height="8" fill="#ae08ff"/><rect x="308" y="204" width="8" height="8" fill="#b906ff"/><rect x="316" y="204" width="8" height="8" fill="#c503ff"/><rect x="324" y="204" width="8" height="8" fill="#d201ff"/><rect x="332" y="204" width="8" height="8" fill="#de00ff"/><rect x="340" y="204" width="8" height="8" fill="#eb00ff"/><rect x="132" y="212" width="8" height="8" fill="#0043ff"/><rect x="140" y="212" width="8" height="8" fill="#013fff"/><rect x="148" y="212" width="8" height="8" fill="#053cff"/><rect x="156" y="212" width="8" height="8" fill="#0a39ff"/><rect x="164" y="212" width="8" height="8" fill="#0f36ff"/><rect x="172" y="212" width="8" height="8" fill="#1533ff"/><rect x="180" y="212" width="8" height="8" fill="#1c30ff"/><rect x="188" y="212" width="8" height="8" fill="#232dff"/><rect x="196" y="212" width="8" height="8" fill="#2a2aff"/><rect x="204" y="212" width="8" height="8" fill="#3127ff"/><rect x="212" y="212" width="8" height="8" fill="#3924ff"/><rect x="220" y="212" width="8" height="8" fill="#4121ff"/><rect x="228" y="212" width="8" height="8" fill="#491eff"/><rect x="236" y="212" width="8" height="8" fill="#521bff"/><rect x="244" y="212" width="8" height="8" fill="#5b18ff"/><rect x="252" y="212" width="8" height="8" fill="#6415ff"/><rect x="260" y="212" width="8" height="8" fill="#6e12ff"/><rect x="268" y="212" width="8" height="8" fill="#7710ff"/><rect x="276" y="212" width="8" height="8" fill="#810dff"/><rect x="284" y="212" width="8" height="8" fill="#8c0aff"/><rect x="292" y="212" width="8" height="8" fill="#9608ff"/><rect x="300" y="212" width="8" height="8" fill="#a105ff"/><rect x="308" y="212" width="8" height="8" fill="#ac03ff"/><rect x="316" y="212" width="8" height="8" fill="#b701ff"/><rect x="324" y="212" width="8" height="8" fill="#c200ff"/><rect x="332" y="212" width="8" height="8" fill="#ce00ff"/><rect x="140" y="220" width="8" height="8" fill="#0039ff"/><rect x="148" y="220" width="8" height="8" fill="#0336ff"/><rect x="156" y="220" width="8" height="8" fill="#0833ff"/><rect x="164" y="220" width="8" height="8" fill="#0d30ff"/><rect x="172" y="220" width="8" height="8" fill="#132dff"/><rect x="180" y="220" width="8" height="8" fill="#192aff"/><rect x="188" y="220" width="8" height="8" fill="#1f28ff"/><rect x="196" y="220" width="8" height="8" fill="#2625ff"/><rect x="204" y="220" width="8" height="8" fill="#2d22ff"/><rect x="212" y="220" width="8" height="8" fill="#341fff"/><rect x="220" y="220" width="8" height="8" fill="#3b1cff"/><rect x="228" y="220" width="8" height="8" fill="#4319ff"/><rect x="236" y="220" width="8" height="8" fill="#4b17ff"/><rect x="244" y="220" width="8" height="8" fill="#5414ff"/><rect x="252" y="220" width="8" height="8" fill="#5c11ff"/><rect x="260" y="220" width="8" height="8" fill="#650fff"/><rect x="268" y="220" width="8" height="8" fill="#6e0cff"/><rect x="276" y="220" width="8" height="8" fill="#780aff"/><rect x="284" y="220" width="8" height="8" fill="#8107ff"/><rect x="292" y="220" width="8" height="8" fill="#8b05ff"/><rect x="300" y="220" width="8" height="8" fill="#9503ff"/><rect x="308" y="220" width="8" height="8" fill="#9f01ff"/><rect x="316" y="220" width="8" height="8" fill="#aa00ff"/><rect x="324" y="220" width="8" height="8" fill="#b500ff"/><rect x="140" y="228" width="8" height="8" fill="#0033ff"/><rect x="148" y="228" width="8" height="8" fill="#0231ff"/><rect x="156" y="228" width="8" height="8" fill="#062eff"/><rect x="164" y="228" width="8" height="8" fill="#0b2bff"/><rect x="172" y="228" width="8" height="8" fill="#1028ff"/><rect x="180" y="228" width="8" height="8" fill="#1625ff"/><rect x="188" y="228" width="8" height="8" fill="#1c23ff"/><rect x="196" y="228" width="8" height="8" fill="#2220ff"/><rect x="204" y="228" width="8" height="8" fill="#281dff"/><rect x="212" y="228" width="8" height="8" fill="#2f1bff"/><rect x="220" y="228" width="8" height="8" fill="#3618ff"/><rect x="228" y="228" width="8" height="8" fill="#3e16ff"/><rect x="236" y="228" width="8" height="8" fill="#4513ff"/><rect x="244" y="228" width="8" height="8" fill="#4d10ff"/><rect x="252" y="228" width="8" height="8" fill="#550eff"/><rect x="260" y="228" width="8" height="8" fill="#5e0cff"/><rect x="268" y="228" width="8" height="8" fill="#6609ff"/><rect x="276" y="228" width="8" height="8" fill="#6f07ff"/><rect x="284" y="228" width="8" height="8" fill="#7805ff"/><rect x="292" y="228" width="8" height="8" fill="#8103ff"/><rect x="300" y="228" width="8" height="8" fill="#8b01ff"/><rect x="308" y="228" width="8" height="8" fill="#9400ff"/><rect x="316" y="228" width="8" height="8" fill="#9e00ff"/><rect x="140" y="236" width="8" height="8" fill="#002eff"/><rect x="148" y="236" width="8" height="8" fill="#012bff"/><rect x="156" y="236" width="8" height="8" fill="#0529ff"/><rect x="164" y="236" width="8" height="8" fill="#0926ff"/><rect x="172" y="236" width="8" height="8" fill="#0e24ff"/><rect x="180" y="236" width="8" height="8" fill="#1321ff"/><rect x="188" y="236" width="8" height="8" fill="#191eff"/><rect x="196" y="236" width="8" height="8" fill="#1e1cff"/><rect x="204" y="236" width="8" height="8" fill="#2519ff"/><rect x="212" y="236" width="8" height="8" fill="#2b17ff"/><rect x="220" y="236" width="8" height="8" fill="#3214ff"/><rect x="228" y="236" width="8" height="8" fill="#3912ff"/><rect x="236" y="236" width="8" height="8" fill="#4010ff"/><rect x="244" y="236" width="8" height="8" fill="#470dff"/><rect x="252" y="236" width="8" height="8" fill="#4f0bff"/><rect x="260" y="236" width="8" height="8" fill="#5709ff"/><rect x="268" y="236" width="8" height="8" fill="#5f07ff"/><rect x="276" y="236" width="8" height="8" fill="#6705ff"/><rect x="284" y="236" width="8" height="8" fill="#7003ff"/><rect x="292" y="236" width="8" height="8" fill="#7801ff"/><rect x="300" y="236" width="8" height="8" fill="#8100ff"/><rect x="308" y="236" width="8" height="8" fill="#8a00ff"/><rect x="148" y="244" width="8" height="8" fill="#0027ff"/><rect x="156" y="244" width="8" height="8" fill="#0324ff"/><rect x="164" y="244" width="8" height="8" fill="#0722ff"/><rect x="172" y="244" width="8" height="8" fill="#0c1fff"/><rect x="180" y="244" width="8" height="8" fill="#111dff"/><rect x="188" y="244" width="8" height="8" fill="#161bff"/><rect x="196" y="244" width="8" height="8" fill="#1b18ff"/><rect x="204" y="244" width="8" height="8" fill="#2116ff"/><rect x="212" y="244" width="8" height="8" fill="#2713ff"/><rect x="220" y="244" width="8" height="8" fill="#2d11ff"/><rect x="228" y="244" width="8" height="8" fill="#340fff"/><rect x="236" y="244" width="8" height="8" fill="#3b0dff"/><rect x="244" y="244" width="8" height="8" fill="#420bff"/><rect x="252" y="244" width="8" height="8" fill="#4908ff"/><rect x="260" y="244" width="8" height="8" fill="#5006ff"/><rect x="268" y="244" width="8" height="8" fill="#5805ff"/><rect x="276" y="244" width="8" height="8" fill="#6003ff"/><rect x="284" y="244" width="8" height="8" fill="#6801ff"/><rect x="292" y="244" width="8" height="8" fill="#7000ff"/><rect x="300" y="244" width="8" height="8" fill="#7800ff"/><rect x="148" y="252" width="8" height="8" fill="#0023ff"/><rect x="156" y="252" width="8" height="8" fill="#0220ff"/><rect x="164" y="252" width="8" height="8" fill="#061eff"/><rect x="172" y="252" width="8" height="8" fill="#0a1cff"/><rect x="180" y="252" width="8" height="8" fill="#0e19ff"/><rect x="188" y="252" width="8" height="8" fill="#1317ff"/><rect x="196" y="252" width="8" height="8" fill="#1815ff"/><rect x="204" y="252" width="8" height="8" fill="#1e13ff"/><rect x="212" y="252" width="8" height="8" fill="#2410ff"/><rect x="220" y="252" width="8" height="8" fill="#2a0eff"/><rect x="228" y="252" width="8" height="8" fill="#300cff"/><rect x="236" y="252" width="8" height="8" fill="#360aff"/><rect x="244" y="252" width="8" height="8" fill="#3d08ff"/><rect x="252" y="252" width="8" height="8" fill="#4406ff"/><rect x="260" y="252" width="8" height="8" fill="#4b04ff"/><rect x="268" y="252" width="8" height="8" fill="#5203ff"/><rect x="276" y="252" width="8" height="8" fill="#5901ff"/><rect x="284" y="252" width="8" height="8" fill="#6100ff"/><rect x="292" y="252" width="8" height="8" fill="#6900ff"/><rect x="148" y="260" width="8" height="8" fill="#001fff"/><rect x="156" y="260" width="8" height="8" fill="#011dff"/><rect x="164" y="260" width="8" height="8" fill="#041aff"/><rect x="172" y="260" width="8" height="8" fill="#0818ff"/><rect x="180" y="260" width="8" height="8" fill="#0c16ff"/><rect x="188" y="260" width="8" height="8" fill="#1114ff"/><rect x="196" y="260" width="8" height="8" fill="#1612ff"/><rect x="204" y="260" width="8" height="8" fill="#1b10ff"/><rect x="212" y="260" width="8" height="8" fill="#200eff"/><rect x="220" y="260" width="8" height="8" fill="#260cff"/><rect x="228" y="260" width="8" height="8" fill="#2c0aff"/><rect x="236" y="260" width="8" height="8" fill="#3208ff"/><rect x="244" y="260" width="8" height="8" fill="#3806ff"/><rect x="252" y="260" width="8" height="8" fill="#3f04ff"/><rect x="260" y="260" width="8" height="8" fill="#4503ff"/><rect x="268" y="260" width="8" height="8" fill="#4c01ff"/><rect x="276" y="260" width="8" height="8" fill="#5300ff"/><rect x="284" y="260" width="8" height="8" fill="#5a00ff"/><rect x="148" y="268" width="8" height="8" fill="#001bff"/><rect x="156" y="268" width="8" height="8" fill="#0019ff"/><rect x="164" y="268" width="8" height="8" fill="#0317ff"/><rect x="172" y="268" width="8" height="8" fill="#0715ff"/><rect x="180" y="268" width="8" height="8" fill="#0b13ff"/><rect x="188" y="268" width="8" height="8" fill="#0f11ff"/><rect x="196" y="268" width="8" height="8" fill="#140fff"/><rect x="204" y="268" width="8" height="8" fill="#180dff"/><rect x="212" y="268" width="8" height="8" fill="#1e0bff"/><rect x="220" y="268" width="8" height="8" fill="#2309ff"/><rect x="228" y="268" width="8" height="8" fill="#2807ff"/><rect x="236" y="268" width="8" height="8" fill="#2e06ff"/><rect x="244" y="268" width="8" height="8" fill="#3404ff"/><rect x="252" y="268" width="8" height="8" fill="#3a02ff"/><rect x="260" y="268" width="8" height="8" fill="#4101ff"/><rect x="268" y="268" width="8" height="8" fill="#4700ff"/><rect x="276" y="268" width="8" height="8" fill="#4e00ff"/><rect x="156" y="276" width="8" height="8" fill="#0016ff"/><rect x="164" y="276" width="8" height="8" fill="#0214ff"/><rect x="172" y="276" width="8" height="8" fill="#0512ff"/><rect x="180" y="276" width="8" height="8" fill="#0910ff"/><rect x="188" y="276" width="8" height="8" fill="#0d0eff"/><rect x="196" y="276" width="8" height="8" fill="#110cff"/><rect x="204" y="276" width="8" height="8" fill="#160bff"/><rect x="212" y="276" width="8" height="8" fill="#1b09ff"/><rect x="220" y="276" width="8" height="8" fill="#2007ff"/><rect x="228" y="276" width="8" height="8" fill="#2505ff"/><rect x="236" y="276" width="8" height="8" fill="#2b04ff"/><rect x="244" y="276" width="8" height="8" fill="#3002ff"/><rect x="252" y="276" width="8" height="8" fill="#3601ff"/><rect x="260" y="276" width="8" height="8" fill="#3c00ff"/><rect x="268" y="276" width="8" height="8" fill="#4200ff"/><rect x="156" y="284" width="8" height="8" fill="#0013ff"/><rect x="164" y="284" width="8" height="8" fill="#0111ff"/><rect x="172" y="284" width="8" height="8" fill="#0410ff"/><rect x="180" y="284" width="8" height="8" fill="#080eff"/><rect x="188" y="284" width="8" height="8" fill="#0b0cff"/><rect x="196" y="284" width="8" height="8" fill="#0f0aff"/><rect x="204" y="284" width="8" height="8" fill="#1408ff"/><rect x="212" y="284" width="8" height="8" fill="#1807ff"/><rect x="220" y="284" width="8" height="8" fill="#1d05ff"/><rect x="228" y="284" width="8" height="8" fill="#2204ff"/><rect x="236" y="284" width="8" height="8" fill="#2702ff"/><rect x="244" y="284" width="8" height="8" fill="#2d01ff"/><rect x="252" y="284" width="8" height="8" fill="#3200ff"/><rect x="260" y="284" width="8" height="8" fill="#3800ff"/><rect x="156" y="292" width="8" height="8" fill="#0011ff"/><rect x="164" y="292" width="8" height="8" fill="#010fff"/><rect x="172" y="292" width="8" height="8" fill="#030dff"/><rect x="180" y="292" width="8" height="8" fill="#060cff"/><rect x="188" y="292" width="8" height="8" fill="#0a0aff"/><rect x="196" y="292" width="8" height="8" fill="#0e08ff"/><rect x="204" y="292" width="8" height="8" fill="#1207ff"/><rect x="212" y="292" width="8" height="8" fill="#1605ff"/><rect x="220" y="292" width="8" height="8" fill="#1b04ff"/><rect x="228" y="292" width="8" height="8" fill="#1f02ff"/><rect x="236" y="292" width="8" height="8" fill="#2401ff"/><rect x="244" y="292" width="8" height="8" fill="#2a00ff"/><rect x="252" y="292" width="8" height="8" fill="#2f00ff"/><rect x="164" y="300" width="8" height="8" fill="#000dff"/><rect x="172" y="300" width="8" height="8" fill="#020bff"/><rect x="180" y="300" width="8" height="8" fill="#0509ff"/><rect x="188" y="300" width="8" height="8" fill="#0808ff"/><rect x="196" y="300" width="8" height="8" fill="#0c06ff"/><rect x="204" y="300" width="8" height="8" fill="#1005ff"/><rect x="212" y="300" width="8" height="8" fill="#1403ff"/><rect x="220" y="300" width="8" height="8" fill="#1802ff"/><rect x="228" y="300" width="8" height="8" fill="#1d01ff"/><rect x="236" y="300" width="8" height="8" fill="#2200ff"/><rect x="244" y="300" width="8" height="8" fill="#2700ff"/><rect x="164" y="308" width="8" height="8" fill="#000bff"/><rect x="172" y="308" width="8" height="8" fill="#0109ff"/><rect x="180" y="308" width="8" height="8" fill="#0408ff"/><rect x="188" y="308" width="8" height="8" fill="#0706ff"/><rect x="196" y="308" width="8" height="8" fill="#0a05ff"/><rect x="204" y="308" width="8" height="8" fill="#0e03ff"/><rect x="212" y="308" width="8" height="8" fill="#1202ff"/><rect x="220" y="308" width="8" height="8" fill="#1601ff"/><rect x="228" y="308" width="8" height="8" fill="#1b00ff"/><rect x="236" y="308" width="8" height="8" fill="#1f00ff"/><rect x="164" y="316" width="8" height="8" fill="#0009ff"/><rect x="172" y="316" width="8" height="8" fill="#0107ff"/><rect x="180" y="316" width="8" height="8" fill="#0306ff"/><rect x="188" y="316" width="8" height="8" fill="#0605ff"/><rect x="196" y="316" width="8" height="8" fill="#0903ff"/><rect x="204" y="316" width="8" height="8" fill="#0d02ff"/><rect x="212" y="316" width="8" height="8" fill="#1001ff"/><rect x="220" y="316" width="8" height="8" fill="#1400ff"/><rect x="228" y="316" width="8" height="8" fill="#1800ff"/><rect x="172" y="324" width="8" height="8" fill="#0006ff"/><rect x="180" y="324" width="8" height="8" fill="#0204ff"/><rect x="188" y="324" width="8" height="8" fill="#0503ff"/><rect x="196" y="324" width="8" height="8" fill="#0802ff"/><rect x="204" y="324" width="8" height="8" fill="#0b01ff"/><rect x="212" y="324" width="8" height="8" fill="#0f00ff"/><rect x="220" y="324" width="8" height="8" fill="#1200ff"/><rect x="172" y="332" width="8" height="8" fill="#0004ff"/><rect x="180" y="332" width="8" height="8" fill="#0103ff"/><rect x="188" y="332" width="8" height="8" fill="#0402ff"/><rect x="196" y="332" width="8" height="8" fill="#0701ff"/><rect x="204" y="332" width="8" height="8" fill="#0a00ff"/><rect x="212" y="332" width="8" height="8" fill="#0d00ff"/><rect x="172" y="340" width="8" height="8" fill="#0003ff"/><rect x="180" y="340" width="8" height="8" fill="#0102ff"/><rect x="188" y="340" width="8" height="8" fill="#0301ff"/><rect x="196" y="340" width="8" height="8" fill="#0600ff"/><rect x="204" y="340" width="8" height="8" fill="#0800ff"/><rect x="172" y="348" width="8" height="8" fill="#0002ff"/><rect x="180" y="348" width="8" height="8" fill="#0001ff"/><rect x="188" y="348" width="8" height="8" fill="#0200ff"/><rect x="196" y="348" width="8" height="8" fill="#0500ff"/><rect x="180" y="356" width="8" height="8" fill="#0000ff"/><rect x="188" y="356" width="8" height="8" fill="#0100ff"/><rect x="180" y="364" width="8" height="8" fill="#0000ff"/></g></g></g>
<rect x="1018.0" y="121.7" width="639.2" height="491.8" fill="none" stroke="#9a9a9a" stroke-width="1.3"/>
<rect x="1013.0" y="612.8" width="5" height="1.5" fill="#c4c4c4"/>
<text x="1011.5" y="618.1" font-size="13.5" fill="#d0d0d0" text-anchor="end" textLength="8.0" lengthAdjust="spacingAndGlyphs" stroke="#d0d0d0" stroke-width="0.25">0</text>
<rect x="1013.0" y="571.8" width="5" height="1.5" fill="#c4c4c4"/>
<text x="1011.5" y="577.2" font-size="13.5" fill="#d0d0d0" text-anchor="end" textLength="27.9" lengthAdjust="spacingAndGlyphs" stroke="#d0d0d0" stroke-width="0.25">0,05</text>
<rect x="1013.0" y="530.9" width="5" height="1.5" fill="#c4c4c4"/>
<text x="1011.5" y="536.2" font-size="13.5" fill="#d0d0d0" text-anchor="end" textLength="19.9" lengthAdjust="spacingAndGlyphs" stroke="#d0d0d0" stroke-width="0.25">0,1</text>
<rect x="1013.0" y="490.0" width="5" height="1.5" fill="#c4c4c4"/>
<text x="1011.5" y="495.3" font-size="13.5" fill="#d0d0d0" text-anchor="end" textLength="27.9" lengthAdjust="spacingAndGlyphs" stroke="#d0d0d0" stroke-width="0.25">0,15</text>
<rect x="1013.0" y="449.0" width="5" height="1.5" fill="#c4c4c4"/>
<text x="1011.5" y="454.4" font-size="13.5" fill="#d0d0d0" text-anchor="end" textLength="19.9" lengthAdjust="spacingAndGlyphs" stroke="#d0d0d0" stroke-width="0.25">0,2</text>
<rect x="1013.0" y="408.1" width="5" height="1.5" fill="#c4c4c4"/>
<text x="1011.5" y="413.5" font-size="13.5" fill="#d0d0d0" text-anchor="end" textLength="27.9" lengthAdjust="spacingAndGlyphs" stroke="#d0d0d0" stroke-width="0.25">0,25</text>
<rect x="1013.0" y="367.2" width="5" height="1.5" fill="#c4c4c4"/>
<text x="1011.5" y="372.5" font-size="13.5" fill="#d0d0d0" text-anchor="end" textLength="19.9" lengthAdjust="spacingAndGlyphs" stroke="#d0d0d0" stroke-width="0.25">0,3</text>
<rect x="1013.0" y="326.2" width="5" height="1.5" fill="#c4c4c4"/>
<text x="1011.5" y="331.6" font-size="13.5" fill="#d0d0d0" text-anchor="end" textLength="27.9" lengthAdjust="spacingAndGlyphs" stroke="#d0d0d0" stroke-width="0.25">0,35</text>
<rect x="1013.0" y="285.3" width="5" height="1.5" fill="#c4c4c4"/>
<text x="1011.5" y="290.7" font-size="13.5" fill="#d0d0d0" text-anchor="end" textLength="19.9" lengthAdjust="spacingAndGlyphs" stroke="#d0d0d0" stroke-width="0.25">0,4</text>
<rect x="1013.0" y="244.4" width="5" height="1.5" fill="#c4c4c4"/>
<text x="1011.5" y="249.7" font-size="13.5" fill="#d0d0d0" text-anchor="end" textLength="27.9" lengthAdjust="spacingAndGlyphs" stroke="#d0d0d0" stroke-width="0.25">0,45</text>
<rect x="1013.0" y="203.4" width="5" height="1.5" fill="#c4c4c4"/>
<text x="1011.5" y="208.8" font-size="13.5" fill="#d0d0d0" text-anchor="end" textLength="19.9" lengthAdjust="spacingAndGlyphs" stroke="#d0d0d0" stroke-width="0.25">0,5</text>
<rect x="1013.0" y="162.5" width="5" height="1.5" fill="#c4c4c4"/>
<text x="1011.5" y="167.9" font-size="13.5" fill="#d0d0d0" text-anchor="end" textLength="27.9" lengthAdjust="spacingAndGlyphs" stroke="#d0d0d0" stroke-width="0.25">0,55</text>
<rect x="1017.2" y="613.5" width="1.5" height="6" fill="#c4c4c4"/>
<text x="1018.0" y="634.6" font-size="13.2" fill="#d0d0d0" text-anchor="middle" textLength="7.8" lengthAdjust="spacingAndGlyphs" stroke="#d0d0d0" stroke-width="0.24">0</text>
<rect x="1070.5" y="613.5" width="1.5" height="6" fill="#c4c4c4"/>
<text x="1071.3" y="634.6" font-size="13.2" fill="#d0d0d0" text-anchor="middle" textLength="27.2" lengthAdjust="spacingAndGlyphs" stroke="#d0d0d0" stroke-width="0.24">0,05</text>
<rect x="1123.8" y="613.5" width="1.5" height="6" fill="#c4c4c4"/>
<text x="1124.6" y="634.6" font-size="13.2" fill="#d0d0d0" text-anchor="middle" textLength="19.5" lengthAdjust="spacingAndGlyphs" stroke="#d0d0d0" stroke-width="0.24">0,1</text>
<rect x="1177.2" y="613.5" width="1.5" height="6" fill="#c4c4c4"/>
<text x="1177.9" y="634.6" font-size="13.2" fill="#d0d0d0" text-anchor="middle" textLength="27.2" lengthAdjust="spacingAndGlyphs" stroke="#d0d0d0" stroke-width="0.24">0,15</text>
<rect x="1230.5" y="613.5" width="1.5" height="6" fill="#c4c4c4"/>
<text x="1231.2" y="634.6" font-size="13.2" fill="#d0d0d0" text-anchor="middle" textLength="19.5" lengthAdjust="spacingAndGlyphs" stroke="#d0d0d0" stroke-width="0.24">0,2</text>
<rect x="1283.8" y="613.5" width="1.5" height="6" fill="#c4c4c4"/>
<text x="1284.5" y="634.6" font-size="13.2" fill="#d0d0d0" text-anchor="middle" textLength="27.2" lengthAdjust="spacingAndGlyphs" stroke="#d0d0d0" stroke-width="0.24">0,25</text>
<rect x="1337.1" y="613.5" width="1.5" height="6" fill="#c4c4c4"/>
<text x="1337.8" y="634.6" font-size="13.2" fill="#d0d0d0" text-anchor="middle" textLength="19.5" lengthAdjust="spacingAndGlyphs" stroke="#d0d0d0" stroke-width="0.24">0,3</text>
<rect x="1390.3" y="613.5" width="1.5" height="6" fill="#c4c4c4"/>
<text x="1391.1" y="634.6" font-size="13.2" fill="#d0d0d0" text-anchor="middle" textLength="27.2" lengthAdjust="spacingAndGlyphs" stroke="#d0d0d0" stroke-width="0.24">0,35</text>
<rect x="1443.7" y="613.5" width="1.5" height="6" fill="#c4c4c4"/>
<text x="1444.4" y="634.6" font-size="13.2" fill="#d0d0d0" text-anchor="middle" textLength="19.5" lengthAdjust="spacingAndGlyphs" stroke="#d0d0d0" stroke-width="0.24">0,4</text>
<rect x="1497.0" y="613.5" width="1.5" height="6" fill="#c4c4c4"/>
<text x="1497.7" y="634.6" font-size="13.2" fill="#d0d0d0" text-anchor="middle" textLength="27.2" lengthAdjust="spacingAndGlyphs" stroke="#d0d0d0" stroke-width="0.24">0,45</text>
<rect x="1550.2" y="613.5" width="1.5" height="6" fill="#c4c4c4"/>
<text x="1551.0" y="634.6" font-size="13.2" fill="#d0d0d0" text-anchor="middle" textLength="19.5" lengthAdjust="spacingAndGlyphs" stroke="#d0d0d0" stroke-width="0.24">0,5</text>
<rect x="1603.6" y="613.5" width="1.5" height="6" fill="#c4c4c4"/>
<text x="1604.3" y="634.6" font-size="13.2" fill="#d0d0d0" text-anchor="middle" textLength="27.2" lengthAdjust="spacingAndGlyphs" stroke="#d0d0d0" stroke-width="0.24">0,55</text>
<text x="1320.6" y="114.6" font-size="14.0" fill="#d0d0d0" text-anchor="middle" textLength="85.5" lengthAdjust="spacingAndGlyphs" stroke="#d0d0d0" stroke-width="0.26">CIE 1976 u'v'</text>
<rect x="1402" y="581.6" width="252.6" height="26.8" fill="#333"/>
<text x="1403.0" y="602.3" font-size="18.7" fill="#f4f4f4" textLength="155.0" lengthAdjust="spacingAndGlyphs" stroke="#f4f4f4" stroke-width="0.34">Gamut Coverage:</text>
<text x="1570.0" y="602.3" font-size="18.7" fill="#f4f4f4" textLength="54.0" lengthAdjust="spacingAndGlyphs" stroke="#f4f4f4" stroke-width="0.34">75,8%</text>
<rect x="1092.1" y="134.0" width="12.7" height="12.7" fill="none" stroke="#f4f4f4" stroke-width="1.4"/>
<rect x="1227.7" y="148.5" width="12.7" height="12.7" fill="none" stroke="#f4f4f4" stroke-width="1.4"/>
<rect x="1490.7" y="176.7" width="12.7" height="12.7" fill="none" stroke="#f4f4f4" stroke-width="1.4"/>
<rect x="1124.2" y="239.2" width="12.7" height="12.7" fill="none" stroke="#f4f4f4" stroke-width="1.4"/>
<rect x="1356.7" y="313.6" width="12.7" height="12.7" fill="none" stroke="#f4f4f4" stroke-width="1.4"/>
<rect x="1197.2" y="477.1" width="12.7" height="12.7" fill="none" stroke="#f4f4f4" stroke-width="1.4"/>
<rect x="1221.4" y="222.4" width="12.0" height="12.0" fill="none" stroke="#000" stroke-width="2.2"/>
<circle cx="1149.0" cy="151.5" r="4.3" fill="#22aa33" stroke="#111" stroke-width="1.1"/>
<circle cx="1233.0" cy="159.5" r="4.3" fill="#aaaa22" stroke="#111" stroke-width="1.1"/>
<circle cx="1164.0" cy="242.0" r="4.3" fill="#22aaaa" stroke="#111" stroke-width="1.1"/>
<circle cx="1502.0" cy="180.0" r="3.6" fill="#cc1111" stroke="#111" stroke-width="1.1"/>
<circle cx="1340.0" cy="347.5" r="3.6" fill="#aa00aa" stroke="#111" stroke-width="1.1"/>
<circle cx="1203.0" cy="486.0" r="3.2" fill="#0000aa" stroke="#111" stroke-width="1.1"/>
<circle cx="1226.0" cy="231.0" r="4.0" fill="#ccc" stroke="#111" stroke-width="1.1"/>
<circle cx="1227.0" cy="232.5" r="3.6" fill="#fff" stroke="#111" stroke-width="1.1"/>
<text x="14.0" y="715.0" font-size="29.6" fill="#f0f0f0" textLength="219.0" lengthAdjust="spacingAndGlyphs" stroke="#f0f0f0" stroke-width="0.50">Current Reading</text>
<text x="14.0" y="784.0" font-size="24.0" fill="#f0f0f0" textLength="103.0" lengthAdjust="spacingAndGlyphs" stroke="#f0f0f0" stroke-width="0.44">x: 0,3088</text>
<text x="171.8" y="784.0" font-size="24.0" fill="#f0f0f0" textLength="101.0" lengthAdjust="spacingAndGlyphs" stroke="#f0f0f0" stroke-width="0.44">y: 0,3245</text>
<text x="14.0" y="825.6" font-size="24.0" fill="#f0f0f0" textLength="110.6" lengthAdjust="spacingAndGlyphs" stroke="#f0f0f0" stroke-width="0.44">fL: 170,66</text>
<text x="14.0" y="865.0" font-size="24.0" fill="#f0f0f0" textLength="158.6" lengthAdjust="spacingAndGlyphs" stroke="#f0f0f0" stroke-width="0.44">cd/m²: 584,73</text>
<rect x="357.0" y="687.8" width="249.0" height="180.1" fill="#232323"/>
<rect x="357.0" y="706.1" width="249.0" height="1.4" fill="#8c8c8c"/>
<rect x="351.0" y="706.1" width="6" height="1.4" fill="#8c8c8c"/>
<text x="349.5" y="711.5" font-size="13.5" fill="#d0d0d0" text-anchor="end" textLength="22.6" lengthAdjust="spacingAndGlyphs" stroke="#d0d0d0" stroke-width="0.25">104</text>
<rect x="357.0" y="742.2" width="249.0" height="1.4" fill="#8c8c8c"/>
<rect x="351.0" y="742.2" width="6" height="1.4" fill="#8c8c8c"/>
<text x="349.5" y="747.6" font-size="13.5" fill="#d0d0d0" text-anchor="end" textLength="22.6" lengthAdjust="spacingAndGlyphs" stroke="#d0d0d0" stroke-width="0.25">102</text>
<rect x="357.0" y="778.3" width="249.0" height="1.4" fill="#8c8c8c"/>
<rect x="351.0" y="778.3" width="6" height="1.4" fill="#8c8c8c"/>
<text x="349.5" y="783.7" font-size="13.5" fill="#d0d0d0" text-anchor="end" textLength="22.6" lengthAdjust="spacingAndGlyphs" stroke="#d0d0d0" stroke-width="0.25">100</text>
<rect x="357.0" y="814.4" width="249.0" height="1.4" fill="#8c8c8c"/>
<rect x="351.0" y="814.4" width="6" height="1.4" fill="#8c8c8c"/>
<text x="349.5" y="819.8" font-size="13.5" fill="#d0d0d0" text-anchor="end" textLength="22.6" lengthAdjust="spacingAndGlyphs" stroke="#d0d0d0" stroke-width="0.25">98</text>
<rect x="357.0" y="850.5" width="249.0" height="1.4" fill="#8c8c8c"/>
<rect x="351.0" y="850.5" width="6" height="1.4" fill="#8c8c8c"/>
<text x="349.5" y="855.9" font-size="13.5" fill="#d0d0d0" text-anchor="end" textLength="22.6" lengthAdjust="spacingAndGlyphs" stroke="#d0d0d0" stroke-width="0.25">96</text>
<rect x="357.0" y="687.8" width="249.0" height="180.1" fill="none" stroke="#8c8c8c" stroke-width="1.4"/>
<rect x="356.3" y="867.9" width="1.4" height="6" fill="#8c8c8c"/>
<rect x="605.3" y="867.9" width="1.4" height="6" fill="#8c8c8c"/>
<rect x="381.4" y="786.7" width="65" height="81.2" fill="url(#rbr)" stroke="#000" stroke-width="1.5"/>
<rect x="447" y="779.2" width="65.5" height="88.7" fill="url(#rbg)" stroke="#000" stroke-width="1.5"/>
<rect x="513" y="750" width="66" height="117.9" fill="url(#rbb)" stroke="#000" stroke-width="1.5"/>
<text x="466.4" y="683.2" font-size="14.0" fill="#d0d0d0" text-anchor="middle" textLength="81.6" lengthAdjust="spacingAndGlyphs" stroke="#d0d0d0" stroke-width="0.26">RGB Balance</text>
<text x="481.5" y="884.0" font-size="13.2" fill="#d0d0d0" text-anchor="middle" textLength="38.0" lengthAdjust="spacingAndGlyphs" stroke="#d0d0d0" stroke-width="0.24">100W</text>
<rect x="636.4" y="679.4" width="341.2" height="198.2" fill="#ccc"/>
<g clip-path="url(#c31clip)"><g class="cl" filter="url(#c31blur)"><rect x="628" y="671" width="8" height="8" fill="#80ffd0"/><rect x="636" y="671" width="8" height="8" fill="#83ffd0"/><rect x="644" y="671" width="8" height="8" fill="#87ffcf"/><rect x="652" y="671" width="8" height="8" fill="#8affcf"/><rect x="660" y="671" width="8" height="8" fill="#8effcf"/><rect x="668" y="671" width="8" height="8" fill="#92ffcf"/><rect x="676" y="671" width="8" height="8" fill="#95ffcf"/><rect x="684" y="671" width="8" height="8" fill="#99ffcf"/><rect x="692" y="671" width="8" height="8" fill="#9dffcf"/><rect x="700" y="671" width="8" height="8" fill="#a0ffcf"/><rect x="708" y="671" width="8" height="8" fill="#a4ffce"/><rect x="716" y="671" width="8" height="8" fill="#a8ffce"/><rect x="724" y="671" width="8" height="8" fill="#acffce"/><rect x="732" y="671" width="8" height="8" fill="#b0ffce"/><rect x="740" y="671" width="8" height="8" fill="#b4ffce"/><rect x="748" y="671" width="8" height="8" fill="#b8ffce"/><rect x="756" y="671" width="8" height="8" fill="#bdffcd"/><rect x="764" y="671" width="8" height="8" fill="#c1ffcd"/><rect x="772" y="671" width="8" height="8" fill="#c5ffcd"/><rect x="780" y="671" width="8" height="8" fill="#caffcd"/><rect x="788" y="671" width="8" height="8" fill="#ceffcd"/><rect x="796" y="671" width="8" height="8" fill="#d2ffcd"/><rect x="804" y="671" width="8" height="8" fill="#d7ffcd"/><rect x="812" y="671" width="8" height="8" fill="#dcffcc"/><rect x="820" y="671" width="8" height="8" fill="#e0ffcc"/><rect x="828" y="671" width="8" height="8" fill="#e5ffcc"/><rect x="836" y="671" width="8" height="8" fill="#eaffcc"/><rect x="844" y="671" width="8" height="8" fill="#efffcc"/><rect x="852" y="671" width="8" height="8" fill="#f4ffcc"/><rect x="860" y="671" width="8" height="8" fill="#f9ffcb"/><rect x="868" y="671" width="8" height="8" fill="#feffcb"/><rect x="876" y="671" width="8" height="8" fill="#fffbc8"/><rect x="884" y="671" width="8" height="8" fill="#fff6c4"/><rect x="892" y="671" width="8" height="8" fill="#fff1c0"/><rect x="900" y="671" width="8" height="8" fill="#ffedbc"/><rect x="908" y="671" width="8" height="8" fill="#ffe8b8"/><rect x="916" y="671" width="8" height="8" fill="#ffe4b5"/><rect x="924" y="671" width="8" height="8" fill="#ffdfb1"/><rect x="932" y="671" width="8" height="8" fill="#ffdbad"/><rect x="940" y="671" width="8" height="8" fill="#ffd7aa"/><rect x="948" y="671" width="8" height="8" fill="#ffd3a7"/><rect x="956" y="671" width="8" height="8" fill="#ffcfa3"/><rect x="964" y="671" width="8" height="8" fill="#ffcba0"/><rect x="972" y="671" width="8" height="8" fill="#ffc79d"/><rect x="980" y="671" width="8" height="8" fill="#ffc49a"/><rect x="628" y="679" width="8" height="8" fill="#81ffd3"/><rect x="636" y="679" width="8" height="8" fill="#85ffd3"/><rect x="644" y="679" width="8" height="8" fill="#88ffd3"/><rect x="652" y="679" width="8" height="8" fill="#8cffd3"/><rect x="660" y="679" width="8" height="8" fill="#90ffd3"/><rect x="668" y="679" width="8" height="8" fill="#93ffd2"/><rect x="676" y="679" width="8" height="8" fill="#97ffd2"/><rect x="684" y="679" width="8" height="8" fill="#9bffd2"/><rect x="692" y="679" width="8" height="8" fill="#9effd2"/><rect x="700" y="679" width="8" height="8" fill="#a2ffd2"/><rect x="708" y="679" width="8" height="8" fill="#a6ffd2"/><rect x="716" y="679" width="8" height="8" fill="#aaffd2"/><rect x="724" y="679" width="8" height="8" fill="#aeffd2"/><rect x="732" y="679" width="8" height="8" fill="#b2ffd1"/><rect x="740" y="679" width="8" height="8" fill="#b6ffd1"/><rect x="748" y="679" width="8" height="8" fill="#bbffd1"/><rect x="756" y="679" width="8" height="8" fill="#bfffd1"/><rect x="764" y="679" width="8" height="8" fill="#c3ffd1"/><rect x="772" y="679" width="8" height="8" fill="#c8ffd1"/><rect x="780" y="679" width="8" height="8" fill="#ccffd1"/><rect x="788" y="679" width="8" height="8" fill="#d0ffd1"/><rect x="796" y="679" width="8" height="8" fill="#d5ffd0"/><rect x="804" y="679" width="8" height="8" fill="#daffd0"/><rect x="812" y="679" width="8" height="8" fill="#deffd0"/><rect x="820" y="679" width="8" height="8" fill="#e3ffd0"/><rect x="828" y="679" width="8" height="8" fill="#e8ffd0"/><rect x="836" y="679" width="8" height="8" fill="#edffd0"/><rect x="844" y="679" width="8" height="8" fill="#f2ffd0"/><rect x="852" y="679" width="8" height="8" fill="#f7ffcf"/><rect x="860" y="679" width="8" height="8" fill="#fcffcf"/><rect x="868" y="679" width="8" height="8" fill="#fffdce"/><rect x="876" y="679" width="8" height="8" fill="#fff8c9"/><rect x="884" y="679" width="8" height="8" fill="#fff3c5"/><rect x="892" y="679" width="8" height="8" fill="#ffefc1"/><rect x="900" y="679" width="8" height="8" fill="#ffeabd"/><rect x="908" y="679" width="8" height="8" fill="#ffe5ba"/><rect x="916" y="679" width="8" height="8" fill="#ffe1b6"/><rect x="924" y="679" width="8" height="8" fill="#ffddb2"/><rect x="932" y="679" width="8" height="8" fill="#ffd8af"/><rect x="940" y="679" width="8" height="8" fill="#ffd4ab"/><rect x="948" y="679" width="8" height="8" fill="#ffd0a8"/><rect x="956" y="679" width="8" height="8" fill="#ffcca4"/><rect x="964" y="679" width="8" height="8" fill="#ffc8a1"/><rect x="972" y="679" width="8" height="8" fill="#ffc59e"/><rect x="980" y="679" width="8" height="8" fill="#ffc19b"/><rect x="628" y="687" width="8" height="8" fill="#83ffd7"/><rect x="636" y="687" width="8" height="8" fill="#86ffd6"/><rect x="644" y="687" width="8" height="8" fill="#8affd6"/><rect x="652" y="687" width="8" height="8" fill="#8effd6"/><rect x="660" y="687" width="8" height="8" fill="#91ffd6"/><rect x="668" y="687" width="8" height="8" fill="#95ffd6"/><rect x="676" y="687" width="8" height="8" fill="#99ffd6"/><rect x="684" y="687" width="8" height="8" fill="#9dffd6"/><rect x="692" y="687" width="8" height="8" fill="#a0ffd6"/><rect x="700" y="687" width="8" height="8" fill="#a4ffd6"/><rect x="708" y="687" width="8" height="8" fill="#a8ffd5"/><rect x="716" y="687" width="8" height="8" fill="#acffd5"/><rect x="724" y="687" width="8" height="8" fill="#b0ffd5"/><rect x="732" y="687" width="8" height="8" fill="#b4ffd5"/><rect x="740" y="687" width="8" height="8" fill="#b9ffd5"/><rect x="748" y="687" width="8" height="8" fill="#bdffd5"/><rect x="756" y="687" width="8" height="8" fill="#c1ffd5"/><rect x="764" y="687" width="8" height="8" fill="#c6ffd5"/><rect x="772" y="687" width="8" height="8" fill="#caffd5"/><rect x="780" y="687" width="8" height="8" fill="#ceffd4"/><rect x="788" y="687" width="8" height="8" fill="#d3ffd4"/><rect x="796" y="687" width="8" height="8" fill="#d8ffd4"/><rect x="804" y="687" width="8" height="8" fill="#dcffd4"/><rect x="812" y="687" width="8" height="8" fill="#e1ffd4"/><rect x="820" y="687" width="8" height="8" fill="#e6ffd4"/><rect x="828" y="687" width="8" height="8" fill="#ebffd4"/><rect x="836" y="687" width="8" height="8" fill="#f0ffd4"/><rect x="844" y="687" width="8" height="8" fill="#f5ffd3"/><rect x="852" y="687" width="8" height="8" fill="#faffd3"/><rect x="860" y="687" width="8" height="8" fill="#ffffd3"/><rect x="868" y="687" width="8" height="8" fill="#fffacf"/><rect x="876" y="687" width="8" height="8" fill="#fff5cb"/><rect x="884" y="687" width="8" height="8" fill="#fff0c7"/><rect x="892" y="687" width="8" height="8" fill="#ffecc2"/><rect x="900" y="687" width="8" height="8" fill="#ffe7bf"/><rect x="908" y="687" width="8" height="8" fill="#ffe2bb"/><rect x="916" y="687" width="8" height="8" fill="#ffdeb7"/><rect x="924" y="687" width="8" height="8" fill="#ffdab3"/><rect x="932" y="687" width="8" height="8" fill="#ffd6b0"/><rect x="940" y="687" width="8" height="8" fill="#ffd2ac"/><rect x="948" y="687" width="8" height="8" fill="#ffcea9"/><rect x="956" y="687" width="8" height="8" fill="#ffcaa6"/><rect x="964" y="687" width="8" height="8" fill="#ffc6a2"/><rect x="972" y="687" width="8" height="8" fill="#ffc29f"/><rect x="980" y="687" width="8" height="8" fill="#ffbf9c"/><rect x="628" y="695" width="8" height="8" fill="#85ffda"/><rect x="636" y="695" width="8" height="8" fill="#88ffda"/><rect x="644" y="695" width="8" height="8" fill="#8cffda"/><rect x="652" y="695" width="8" height="8" fill="#8fffda"/><rect x="660" y="695" width="8" height="8" fill="#93ffda"/><rect x="668" y="695" width="8" height="8" fill="#97ffda"/><rect x="676" y="695" width="8" height="8" fill="#9bffd9"/><rect x="684" y="695" width="8" height="8" fill="#9effd9"/><rect x="692" y="695" width="8" height="8" fill="#a2ffd9"/><rect x="700" y="695" width="8" height="8" fill="#a6ffd9"/><rect x="708" y="695" width="8" height="8" fill="#aaffd9"/><rect x="716" y="695" width="8" height="8" fill="#aeffd9"/><rect x="724" y="695" width="8" height="8" fill="#b2ffd9"/><rect x="732" y="695" width="8" height="8" fill="#b7ffd9"/><rect x="740" y="695" width="8" height="8" fill="#bbffd9"/><rect x="748" y="695" width="8" height="8" fill="#bfffd9"/><rect x="756" y="695" width="8" height="8" fill="#c3ffd8"/><rect x="764" y="695" width="8" height="8" fill="#c8ffd8"/><rect x="772" y="695" width="8" height="8" fill="#ccffd8"/><rect x="780" y="695" width="8" height="8" fill="#d1ffd8"/><rect x="788" y="695" width="8" height="8" fill="#d6ffd8"/><rect x="796" y="695" width="8" height="8" fill="#daffd8"/><rect x="804" y="695" width="8" height="8" fill="#dfffd8"/><rect x="812" y="695" width="8" height="8" fill="#e4ffd8"/><rect x="820" y="695" width="8" height="8" fill="#e9ffd8"/><rect x="828" y="695" width="8" height="8" fill="#eeffd8"/><rect x="836" y="695" width="8" height="8" fill="#f3ffd7"/><rect x="844" y="695" width="8" height="8" fill="#f8ffd7"/><rect x="852" y="695" width="8" height="8" fill="#fdffd7"/><rect x="860" y="695" width="8" height="8" fill="#fffcd5"/><rect x="868" y="695" width="8" height="8" fill="#fff7d0"/><rect x="876" y="695" width="8" height="8" fill="#fff2cc"/><rect x="884" y="695" width="8" height="8" fill="#ffedc8"/><rect x="892" y="695" width="8" height="8" fill="#ffe9c4"/><rect x="900" y="695" width="8" height="8" fill="#ffe4c0"/><rect x="908" y="695" width="8" height="8" fill="#ffe0bc"/><rect x="916" y="695" width="8" height="8" fill="#ffdbb8"/><rect x="924" y="695" width="8" height="8" fill="#ffd7b5"/><rect x="932" y="695" width="8" height="8" fill="#ffd3b1"/><rect x="940" y="695" width="8" height="8" fill="#ffcfad"/><rect x="948" y="695" width="8" height="8" fill="#ffcbaa"/><rect x="956" y="695" width="8" height="8" fill="#ffc7a7"/><rect x="964" y="695" width="8" height="8" fill="#ffc3a4"/><rect x="972" y="695" width="8" height="8" fill="#ffc0a0"/><rect x="980" y="695" width="8" height="8" fill="#ffbc9d"/><rect x="628" y="703" width="8" height="8" fill="#86ffde"/><rect x="636" y="703" width="8" height="8" fill="#8affde"/><rect x="644" y="703" width="8" height="8" fill="#8dffdd"/><rect x="652" y="703" width="8" height="8" fill="#91ffdd"/><rect x="660" y="703" width="8" height="8" fill="#95ffdd"/><rect x="668" y="703" width="8" height="8" fill="#99ffdd"/><rect x="676" y="703" width="8" height="8" fill="#9cffdd"/><rect x="684" y="703" width="8" height="8" fill="#a0ffdd"/><rect x="692" y="703" width="8" height="8" fill="#a4ffdd"/><rect x="700" y="703" width="8" height="8" fill="#a8ffdd"/><rect x="708" y="703" width="8" height="8" fill="#acffdd"/><rect x="716" y="703" width="8" height="8" fill="#b0ffdd"/><rect x="724" y="703" width="8" height="8" fill="#b5ffdd"/><rect x="732" y="703" width="8" height="8" fill="#b9ffdd"/><rect x="740" y="703" width="8" height="8" fill="#bdffdc"/><rect x="748" y="703" width="8" height="8" fill="#c1ffdc"/><rect x="756" y="703" width="8" height="8" fill="#c6ffdc"/><rect x="764" y="703" width="8" height="8" fill="#caffdc"/><rect x="772" y="703" width="8" height="8" fill="#cfffdc"/><rect x="780" y="703" width="8" height="8" fill="#d3ffdc"/><rect x="788" y="703" width="8" height="8" fill="#d8ffdc"/><rect x="796" y="703" width="8" height="8" fill="#ddffdc"/><rect x="804" y="703" width="8" height="8" fill="#e2ffdc"/><rect x="812" y="703" width="8" height="8" fill="#e7ffdc"/><rect x="820" y="703" width="8" height="8" fill="#ebffdc"/><rect x="828" y="703" width="8" height="8" fill="#f0ffdb"/><rect x="836" y="703" width="8" height="8" fill="#f6ffdb"/><rect x="844" y="703" width="8" height="8" fill="#fbffdb"/><rect x="852" y="703" width="8" height="8" fill="#fffeda"/><rect x="860" y="703" width="8" height="8" fill="#fff9d6"/><rect x="868" y="703" width="8" height="8" fill="#fff4d2"/><rect x="876" y="703" width="8" height="8" fill="#ffefcd"/><rect x="884" y="703" width="8" height="8" fill="#ffeac9"/><rect x="892" y="703" width="8" height="8" fill="#ffe6c5"/><rect x="900" y="703" width="8" height="8" fill="#ffe1c1"/><rect x="908" y="703" width="8" height="8" fill="#ffddbd"/><rect x="916" y="703" width="8" height="8" fill="#ffd8b9"/><rect x="924" y="703" width="8" height="8" fill="#ffd4b6"/><rect x="932" y="703" width="8" height="8" fill="#ffd0b2"/><rect x="940" y="703" width="8" height="8" fill="#ffccaf"/><rect x="948" y="703" width="8" height="8" fill="#ffc8ab"/><rect x="956" y="703" width="8" height="8" fill="#ffc5a8"/><rect x="964" y="703" width="8" height="8" fill="#ffc1a5"/><rect x="972" y="703" width="8" height="8" fill="#ffbda1"/><rect x="980" y="703" width="8" height="8" fill="#ffba9e"/><rect x="628" y="711" width="8" height="8" fill="#88ffe1"/><rect x="636" y="711" width="8" height="8" fill="#8bffe1"/><rect x="644" y="711" width="8" height="8" fill="#8fffe1"/><rect x="652" y="711" width="8" height="8" fill="#93ffe1"/><rect x="660" y="711" width="8" height="8" fill="#97ffe1"/><rect x="668" y="711" width="8" height="8" fill="#9affe1"/><rect x="676" y="711" width="8" height="8" fill="#9effe1"/><rect x="684" y="711" width="8" height="8" fill="#a2ffe1"/><rect x="692" y="711" width="8" height="8" fill="#a6ffe1"/><rect x="700" y="711" width="8" height="8" fill="#aaffe1"/><rect x="708" y="711" width="8" height="8" fill="#aeffe1"/><rect x="716" y="711" width="8" height="8" fill="#b3ffe1"/><rect x="724" y="711" width="8" height="8" fill="#b7ffe0"/><rect x="732" y="711" width="8" height="8" fill="#bbffe0"/><rect x="740" y="711" width="8" height="8" fill="#bfffe0"/><rect x="748" y="711" width="8" height="8" fill="#c4ffe0"/><rect x="756" y="711" width="8" height="8" fill="#c8ffe0"/><rect x="764" y="711" width="8" height="8" fill="#cdffe0"/><rect x="772" y="711" width="8" height="8" fill="#d1ffe0"/><rect x="780" y="711" width="8" height="8" fill="#d6ffe0"/><rect x="788" y="711" width="8" height="8" fill="#dbffe0"/><rect x="796" y="711" width="8" height="8" fill="#e0ffe0"/><rect x="804" y="711" width="8" height="8" fill="#e4ffe0"/><rect x="812" y="711" width="8" height="8" fill="#e9ffe0"/><rect x="820" y="711" width="8" height="8" fill="#eeffe0"/><rect x="828" y="711" width="8" height="8" fill="#f4ffe0"/><rect x="836" y="711" width="8" height="8" fill="#f9ffdf"/><rect x="844" y="711" width="8" height="8" fill="#feffdf"/><rect x="852" y="711" width="8" height="8" fill="#fffbdc"/><rect x="860" y="711" width="8" height="8" fill="#fff6d7"/><rect x="868" y="711" width="8" height="8" fill="#fff1d3"/><rect x="876" y="711" width="8" height="8" fill="#ffecce"/><rect x="884" y="711" width="8" height="8" fill="#ffe7ca"/><rect x="892" y="711" width="8" height="8" fill="#ffe3c6"/><rect x="900" y="711" width="8" height="8" fill="#ffdec2"/><rect x="908" y="711" width="8" height="8" fill="#ffdabe"/><rect x="916" y="711" width="8" height="8" fill="#ffd6bb"/><rect x="924" y="711" width="8" height="8" fill="#ffd2b7"/><rect x="932" y="711" width="8" height="8" fill="#ffcdb3"/><rect x="940" y="711" width="8" height="8" fill="#ffcab0"/><rect x="948" y="711" width="8" height="8" fill="#ffc6ac"/><rect x="956" y="711" width="8" height="8" fill="#ffc2a9"/><rect x="964" y="711" width="8" height="8" fill="#ffbea6"/><rect x="972" y="711" width="8" height="8" fill="#ffbba3"/><rect x="980" y="711" width="8" height="8" fill="#ffb79f"/><rect x="628" y="719" width="8" height="8" fill="#89ffe5"/><rect x="636" y="719" width="8" height="8" fill="#8dffe5"/><rect x="644" y="719" width="8" height="8" fill="#91ffe5"/><rect x="652" y="719" width="8" height="8" fill="#94ffe5"/><rect x="660" y="719" width="8" height="8" fill="#98ffe5"/><rect x="668" y="719" width="8" height="8" fill="#9cffe5"/><rect x="676" y="719" width="8" height="8" fill="#a0ffe5"/><rect x="684" y="719" width="8" height="8" fill="#a4ffe5"/><rect x="692" y="719" width="8" height="8" fill="#a8ffe5"/><rect x="700" y="719" width="8" height="8" fill="#acffe5"/><rect x="708" y="719" width="8" height="8" fill="#b0ffe4"/><rect x="716" y="719" width="8" height="8" fill="#b5ffe4"/><rect x="724" y="719" width="8" height="8" fill="#b9ffe4"/><rect x="732" y="719" width="8" height="8" fill="#bdffe4"/><rect x="740" y="719" width="8" height="8" fill="#c2ffe4"/><rect x="748" y="719" width="8" height="8" fill="#c6ffe4"/><rect x="756" y="719" width="8" height="8" fill="#cbffe4"/><rect x="764" y="719" width="8" height="8" fill="#cfffe4"/><rect x="772" y="719" width="8" height="8" fill="#d4ffe4"/><rect x="780" y="719" width="8" height="8" fill="#d9ffe4"/><rect x="788" y="719" width="8" height="8" fill="#deffe4"/><rect x="796" y="719" width="8" height="8" fill="#e2ffe4"/><rect x="804" y="719" width="8" height="8" fill="#e7ffe4"/><rect x="812" y="719" width="8" height="8" fill="#ecffe4"/><rect x="820" y="719" width="8" height="8" fill="#f1ffe4"/><rect x="828" y="719" width="8" height="8" fill="#f7ffe4"/><rect x="836" y="719" width="8" height="8" fill="#fcffe4"/><rect x="844" y="719" width="8" height="8" fill="#fffde2"/><rect x="852" y="719" width="8" height="8" fill="#fff8dd"/><rect x="860" y="719" width="8" height="8" fill="#fff3d9"/><rect x="868" y="719" width="8" height="8" fill="#ffeed4"/><rect x="876" y="719" width="8" height="8" fill="#ffe9d0"/><rect x="884" y="719" width="8" height="8" fill="#ffe4cc"/><rect x="892" y="719" width="8" height="8" fill="#ffe0c7"/><rect x="900" y="719" width="8" height="8" fill="#ffdbc3"/><rect x="908" y="719" width="8" height="8" fill="#ffd7c0"/><rect x="916" y="719" width="8" height="8" fill="#ffd3bc"/><rect x="924" y="719" width="8" height="8" fill="#ffcfb8"/><rect x="932" y="719" width="8" height="8" fill="#ffcbb4"/><rect x="940" y="719" width="8" height="8" fill="#ffc7b1"/><rect x="948" y="719" width="8" height="8" fill="#ffc3ae"/><rect x="956" y="719" width="8" height="8" fill="#ffbfaa"/><rect x="964" y="719" width="8" height="8" fill="#ffbca7"/><rect x="972" y="719" width="8" height="8" fill="#ffb8a4"/><rect x="980" y="719" width="8" height="8" fill="#ffb5a1"/><rect x="628" y="727" width="8" height="8" fill="#8bffe9"/><rect x="636" y="727" width="8" height="8" fill="#8fffe9"/><rect x="644" y="727" width="8" height="8" fill="#92ffe9"/><rect x="652" y="727" width="8" height="8" fill="#96ffe9"/><rect x="660" y="727" width="8" height="8" fill="#9affe9"/><rect x="668" y="727" width="8" height="8" fill="#9effe9"/><rect x="676" y="727" width="8" height="8" fill="#a2ffe9"/><rect x="684" y="727" width="8" height="8" fill="#a6ffe9"/><rect x="692" y="727" width="8" height="8" fill="#aaffe8"/><rect x="700" y="727" width="8" height="8" fill="#aeffe8"/><rect x="708" y="727" width="8" height="8" fill="#b3ffe8"/><rect x="716" y="727" width="8" height="8" fill="#b7ffe8"/><rect x="724" y="727" width="8" height="8" fill="#bbffe8"/><rect x="732" y="727" width="8" height="8" fill="#c0ffe8"/><rect x="740" y="727" width="8" height="8" fill="#c4ffe8"/><rect x="748" y="727" width="8" height="8" fill="#c9ffe8"/><rect x="756" y="727" width="8" height="8" fill="#cdffe8"/><rect x="764" y="727" width="8" height="8" fill="#d2ffe8"/><rect x="772" y="727" width="8" height="8" fill="#d7ffe8"/><rect x="780" y="727" width="8" height="8" fill="#dbffe8"/><rect x="788" y="727" width="8" height="8" fill="#e0ffe8"/><rect x="796" y="727" width="8" height="8" fill="#e5ffe8"/><rect x="804" y="727" width="8" height="8" fill="#eaffe8"/><rect x="812" y="727" width="8" height="8" fill="#efffe8"/><rect x="820" y="727" width="8" height="8" fill="#f4ffe8"/><rect x="828" y="727" width="8" height="8" fill="#faffe8"/><rect x="836" y="727" width="8" height="8" fill="#ffffe8"/><rect x="844" y="727" width="8" height="8" fill="#fffae3"/><rect x="852" y="727" width="8" height="8" fill="#fff5de"/><rect x="860" y="727" width="8" height="8" fill="#fff0da"/><rect x="868" y="727" width="8" height="8" fill="#ffebd5"/><rect x="876" y="727" width="8" height="8" fill="#ffe6d1"/><rect x="884" y="727" width="8" height="8" fill="#ffe1cd"/><rect x="892" y="727" width="8" height="8" fill="#ffddc9"/><rect x="900" y="727" width="8" height="8" fill="#ffd9c5"/><rect x="908" y="727" width="8" height="8" fill="#ffd4c1"/><rect x="916" y="727" width="8" height="8" fill="#ffd0bd"/><rect x="924" y="727" width="8" height="8" fill="#ffccb9"/><rect x="932" y="727" width="8" height="8" fill="#ffc8b6"/><rect x="940" y="727" width="8" height="8" fill="#ffc4b2"/><rect x="948" y="727" width="8" height="8" fill="#ffc1af"/><rect x="956" y="727" width="8" height="8" fill="#ffbdab"/><rect x="964" y="727" width="8" height="8" fill="#ffb9a8"/><rect x="972" y="727" width="8" height="8" fill="#ffb6a5"/><rect x="980" y="727" width="8" height="8" fill="#ffb2a2"/><rect x="628" y="735" width="8" height="8" fill="#8dffed"/><rect x="636" y="735" width="8" height="8" fill="#90ffed"/><rect x="644" y="735" width="8" height="8" fill="#94ffed"/><rect x="652" y="735" width="8" height="8" fill="#98ffed"/><rect x="660" y="735" width="8" height="8" fill="#9cffed"/><rect x="668" y="735" width="8" height="8" fill="#a0ffed"/><rect x="676" y="735" width="8" height="8" fill="#a4ffed"/><rect x="684" y="735" width="8" height="8" fill="#a8ffec"/><rect x="692" y="735" width="8" height="8" fill="#acffec"/><rect x="700" y="735" width="8" height="8" fill="#b1ffec"/><rect x="708" y="735" width="8" height="8" fill="#b5ffec"/><rect x="716" y="735" width="8" height="8" fill="#b9ffec"/><rect x="724" y="735" width="8" height="8" fill="#beffec"/><rect x="732" y="735" width="8" height="8" fill="#c2ffec"/><rect x="740" y="735" width="8" height="8" fill="#c7ffec"/><rect x="748" y="735" width="8" height="8" fill="#cbffec"/><rect x="756" y="735" width="8" height="8" fill="#d0ffec"/><rect x="764" y="735" width="8" height="8" fill="#d5ffec"/><rect x="772" y="735" width="8" height="8" fill="#d9ffec"/><rect x="780" y="735" width="8" height="8" fill="#deffec"/><rect x="788" y="735" width="8" height="8" fill="#e3ffec"/><rect x="796" y="735" width="8" height="8" fill="#e8ffec"/><rect x="804" y="735" width="8" height="8" fill="#edffec"/><rect x="812" y="735" width="8" height="8" fill="#f2ffec"/><rect x="820" y="735" width="8" height="8" fill="#f8ffec"/><rect x="828" y="735" width="8" height="8" fill="#fdffec"/><rect x="836" y="735" width="8" height="8" fill="#fffce9"/><rect x="844" y="735" width="8" height="8" fill="#fff7e4"/><rect x="852" y="735" width="8" height="8" fill="#fff1e0"/><rect x="860" y="735" width="8" height="8" fill="#ffeddb"/><rect x="868" y="735" width="8" height="8" fill="#ffe8d7"/><rect x="876" y="735" width="8" height="8" fill="#ffe3d2"/><rect x="884" y="735" width="8" height="8" fill="#ffdfce"/><rect x="892" y="735" width="8" height="8" fill="#ffdaca"/><rect x="900" y="735" width="8" height="8" fill="#ffd6c6"/><rect x="908" y="735" width="8" height="8" fill="#ffd2c2"/><rect x="916" y="735" width="8" height="8" fill="#ffcdbe"/><rect x="924" y="735" width="8" height="8" fill="#ffc9ba"/><rect x="932" y="735" width="8" height="8" fill="#ffc5b7"/><rect x="940" y="735" width="8" height="8" fill="#ffc2b3"/><rect x="948" y="735" width="8" height="8" fill="#ffbeb0"/><rect x="956" y="735" width="8" height="8" fill="#ffbaac"/><rect x="964" y="735" width="8" height="8" fill="#ffb7a9"/><rect x="972" y="735" width="8" height="8" fill="#ffb3a6"/><rect x="980" y="735" width="8" height="8" fill="#ffb0a3"/><rect x="628" y="743" width="8" height="8" fill="#8efff0"/><rect x="636" y="743" width="8" height="8" fill="#92fff1"/><rect x="644" y="743" width="8" height="8" fill="#96fff1"/><rect x="652" y="743" width="8" height="8" fill="#9afff1"/><rect x="660" y="743" width="8" height="8" fill="#9efff1"/><rect x="668" y="743" width="8" height="8" fill="#a2fff1"/><rect x="676" y="743" width="8" height="8" fill="#a6fff1"/><rect x="684" y="743" width="8" height="8" fill="#aafff1"/><rect x="692" y="743" width="8" height="8" fill="#aefff1"/><rect x="700" y="743" width="8" height="8" fill="#b3fff1"/><rect x="708" y="743" width="8" height="8" fill="#b7fff1"/><rect x="716" y="743" width="8" height="8" fill="#bbfff1"/><rect x="724" y="743" width="8" height="8" fill="#c0fff1"/><rect x="732" y="743" width="8" height="8" fill="#c4fff1"/><rect x="740" y="743" width="8" height="8" fill="#c9fff1"/><rect x="748" y="743" width="8" height="8" fill="#cefff1"/><rect x="756" y="743" width="8" height="8" fill="#d2fff1"/><rect x="764" y="743" width="8" height="8" fill="#d7fff1"/><rect x="772" y="743" width="8" height="8" fill="#dcfff1"/><rect x="780" y="743" width="8" height="8" fill="#e1fff1"/><rect x="788" y="743" width="8" height="8" fill="#e6fff1"/><rect x="796" y="743" width="8" height="8" fill="#ebfff1"/><rect x="804" y="743" width="8" height="8" fill="#f0fff1"/><rect x="812" y="743" width="8" height="8" fill="#f6fff1"/><rect x="820" y="743" width="8" height="8" fill="#fbfff1"/><rect x="828" y="743" width="8" height="8" fill="#fffef0"/><rect x="836" y="743" width="8" height="8" fill="#fff9eb"/><rect x="844" y="743" width="8" height="8" fill="#fff3e6"/><rect x="852" y="743" width="8" height="8" fill="#ffeee1"/><rect x="860" y="743" width="8" height="8" fill="#ffe9dc"/><rect x="868" y="743" width="8" height="8" fill="#ffe5d8"/><rect x="876" y="743" width="8" height="8" fill="#ffe0d4"/><rect x="884" y="743" width="8" height="8" fill="#ffdccf"/><rect x="892" y="743" width="8" height="8" fill="#ffd7cb"/><rect x="900" y="743" width="8" height="8" fill="#ffd3c7"/><rect x="908" y="743" width="8" height="8" fill="#ffcfc3"/><rect x="916" y="743" width="8" height="8" fill="#ffcbbf"/><rect x="924" y="743" width="8" height="8" fill="#ffc7bc"/><rect x="932" y="743" width="8" height="8" fill="#ffc3b8"/><rect x="940" y="743" width="8" height="8" fill="#ffbfb4"/><rect x="948" y="743" width="8" height="8" fill="#ffbbb1"/><rect x="956" y="743" width="8" height="8" fill="#ffb8ae"/><rect x="964" y="743" width="8" height="8" fill="#ffb4aa"/><rect x="972" y="743" width="8" height="8" fill="#ffb1a7"/><rect x="980" y="743" width="8" height="8" fill="#ffada4"/><rect x="628" y="751" width="8" height="8" fill="#90fff4"/><rect x="636" y="751" width="8" height="8" fill="#94fff5"/><rect x="644" y="751" width="8" height="8" fill="#98fff5"/><rect x="652" y="751" width="8" height="8" fill="#9cfff5"/><rect x="660" y="751" width="8" height="8" fill="#a0fff5"/><rect x="668" y="751" width="8" height="8" fill="#a4fff5"/><rect x="676" y="751" width="8" height="8" fill="#a8fff5"/><rect x="684" y="751" width="8" height="8" fill="#acfff5"/><rect x="692" y="751" width="8" height="8" fill="#b1fff5"/><rect x="700" y="751" width="8" height="8" fill="#b5fff5"/><rect x="708" y="751" width="8" height="8" fill="#b9fff5"/><rect x="716" y="751" width="8" height="8" fill="#befff5"/><rect x="724" y="751" width="8" height="8" fill="#c2fff5"/><rect x="732" y="751" width="8" height="8" fill="#c7fff5"/><rect x="740" y="751" width="8" height="8" fill="#ccfff5"/><rect x="748" y="751" width="8" height="8" fill="#d0fff5"/><rect x="756" y="751" width="8" height="8" fill="#d5fff5"/><rect x="764" y="751" width="8" height="8" fill="#dafff5"/><rect x="772" y="751" width="8" height="8" fill="#dffff5"/><rect x="780" y="751" width="8" height="8" fill="#e4fff5"/><rect x="788" y="751" width="8" height="8" fill="#e9fff5"/><rect x="796" y="751" width="8" height="8" fill="#eefff5"/><rect x="804" y="751" width="8" height="8" fill="#f3fff5"/><rect x="812" y="751" width="8" height="8" fill="#f9fff5"/><rect x="820" y="751" width="8" height="8" fill="#fefff5"/><rect x="828" y="751" width="8" height="8" fill="#fffbf1"/><rect x="836" y="751" width="8" height="8" fill="#fff5ec"/><rect x="844" y="751" width="8" height="8" fill="#fff0e7"/><rect x="852" y="751" width="8" height="8" fill="#ffebe2"/><rect x="860" y="751" width="8" height="8" fill="#ffe6de"/><rect x="868" y="751" width="8" height="8" fill="#ffe2d9"/><rect x="876" y="751" width="8" height="8" fill="#ffddd5"/><rect x="884" y="751" width="8" height="8" fill="#ffd9d1"/><rect x="892" y="751" width="8" height="8" fill="#ffd4cc"/><rect x="900" y="751" width="8" height="8" fill="#ffd0c8"/><rect x="908" y="751" width="8" height="8" fill="#ffccc4"/><rect x="916" y="751" width="8" height="8" fill="#ffc8c1"/><rect x="924" y="751" width="8" height="8" fill="#ffc4bd"/><rect x="932" y="751" width="8" height="8" fill="#ffc0b9"/><rect x="940" y="751" width="8" height="8" fill="#ffbcb6"/><rect x="948" y="751" width="8" height="8" fill="#ffb9b2"/><rect x="956" y="751" width="8" height="8" fill="#ffb5af"/><rect x="964" y="751" width="8" height="8" fill="#ffb2ab"/><rect x="972" y="751" width="8" height="8" fill="#ffaea8"/><rect x="980" y="751" width="8" height="8" fill="#ffaba5"/><rect x="628" y="759" width="8" height="8" fill="#92fff9"/><rect x="636" y="759" width="8" height="8" fill="#96fff9"/><rect x="644" y="759" width="8" height="8" fill="#9afff9"/><rect x="652" y="759" width="8" height="8" fill="#9efff9"/><rect x="660" y="759" width="8" height="8" fill="#a2fff9"/><rect x="668" y="759" width="8" height="8" fill="#a6fff9"/><rect x="676" y="759" width="8" height="8" fill="#aafff9"/><rect x="684" y="759" width="8" height="8" fill="#affff9"/><rect x="692" y="759" width="8" height="8" fill="#b3fff9"/><rect x="700" y="759" width="8" height="8" fill="#b7fff9"/><rect x="708" y="759" width="8" height="8" fill="#bcfff9"/><rect x="716" y="759" width="8" height="8" fill="#c0fff9"/><rect x="724" y="759" width="8" height="8" fill="#c5fff9"/><rect x="732" y="759" width="8" height="8" fill="#c9fff9"/><rect x="740" y="759" width="8" height="8" fill="#cefff9"/><rect x="748" y="759" width="8" height="8" fill="#d3fff9"/><rect x="756" y="759" width="8" height="8" fill="#d8fff9"/><rect x="764" y="759" width="8" height="8" fill="#ddfff9"/><rect x="772" y="759" width="8" height="8" fill="#e2fff9"/><rect x="780" y="759" width="8" height="8" fill="#e7fffa"/><rect x="788" y="759" width="8" height="8" fill="#ecfffa"/><rect x="796" y="759" width="8" height="8" fill="#f1fffa"/><rect x="804" y="759" width="8" height="8" fill="#f7fffa"/><rect x="812" y="759" width="8" height="8" fill="#fcfffa"/><rect x="820" y="759" width="8" height="8" fill="#fffdf7"/><rect x="828" y="759" width="8" height="8" fill="#fff7f2"/><rect x="836" y="759" width="8" height="8" fill="#fff2ed"/><rect x="844" y="759" width="8" height="8" fill="#ffede8"/><rect x="852" y="759" width="8" height="8" fill="#ffe8e4"/><rect x="860" y="759" width="8" height="8" fill="#ffe3df"/><rect x="868" y="759" width="8" height="8" fill="#ffdfdb"/><rect x="876" y="759" width="8" height="8" fill="#ffdad6"/><rect x="884" y="759" width="8" height="8" fill="#ffd6d2"/><rect x="892" y="759" width="8" height="8" fill="#ffd2ce"/><rect x="900" y="759" width="8" height="8" fill="#ffcdca"/><rect x="908" y="759" width="8" height="8" fill="#ffc9c6"/><rect x="916" y="759" width="8" height="8" fill="#ffc5c2"/><rect x="924" y="759" width="8" height="8" fill="#ffc1be"/><rect x="932" y="759" width="8" height="8" fill="#ffbeba"/><rect x="940" y="759" width="8" height="8" fill="#ffbab7"/><rect x="948" y="759" width="8" height="8" fill="#ffb6b3"/><rect x="956" y="759" width="8" height="8" fill="#ffb3b0"/><rect x="964" y="759" width="8" height="8" fill="#ffafad"/><rect x="972" y="759" width="8" height="8" fill="#ffaca9"/><rect x="980" y="759" width="8" height="8" fill="#ffa9a6"/><rect x="628" y="767" width="8" height="8" fill="#94fffd"/><rect x="636" y="767" width="8" height="8" fill="#98fffd"/><rect x="644" y="767" width="8" height="8" fill="#9cfffd"/><rect x="652" y="767" width="8" height="8" fill="#a0fffd"/><rect x="660" y="767" width="8" height="8" fill="#a4fffd"/><rect x="668" y="767" width="8" height="8" fill="#a8fffd"/><rect x="676" y="767" width="8" height="8" fill="#acfffd"/><rect x="684" y="767" width="8" height="8" fill="#b1fffd"/><rect x="692" y="767" width="8" height="8" fill="#b5fffd"/><rect x="700" y="767" width="8" height="8" fill="#bafffd"/><rect x="708" y="767" width="8" height="8" fill="#befffd"/><rect x="716" y="767" width="8" height="8" fill="#c3fffe"/><rect x="724" y="767" width="8" height="8" fill="#c7fffe"/><rect x="732" y="767" width="8" height="8" fill="#ccfffe"/><rect x="740" y="767" width="8" height="8" fill="#d1fffe"/><rect x="748" y="767" width="8" height="8" fill="#d6fffe"/><rect x="756" y="767" width="8" height="8" fill="#dbfffe"/><rect x="764" y="767" width="8" height="8" fill="#e0fffe"/><rect x="772" y="767" width="8" height="8" fill="#e5fffe"/><rect x="780" y="767" width="8" height="8" fill="#eafffe"/><rect x="788" y="767" width="8" height="8" fill="#effffe"/><rect x="796" y="767" width="8" height="8" fill="#f4fffe"/><rect x="804" y="767" width="8" height="8" fill="#fafffe"/><rect x="812" y="767" width="8" height="8" fill="#fffffe"/><rect x="820" y="767" width="8" height="8" fill="#fff9f9"/><rect x="828" y="767" width="8" height="8" fill="#fff4f4"/><rect x="836" y="767" width="8" height="8" fill="#ffefef"/><rect x="844" y="767" width="8" height="8" fill="#ffeaea"/><rect x="852" y="767" width="8" height="8" fill="#ffe5e5"/><rect x="860" y="767" width="8" height="8" fill="#ffe0e0"/><rect x="868" y="767" width="8" height="8" fill="#ffdcdc"/><rect x="876" y="767" width="8" height="8" fill="#ffd7d7"/><rect x="884" y="767" width="8" height="8" fill="#ffd3d3"/><rect x="892" y="767" width="8" height="8" fill="#ffcfcf"/><rect x="900" y="767" width="8" height="8" fill="#ffcbcb"/><rect x="908" y="767" width="8" height="8" fill="#ffc7c7"/><rect x="916" y="767" width="8" height="8" fill="#ffc3c3"/><rect x="924" y="767" width="8" height="8" fill="#ffbfbf"/><rect x="932" y="767" width="8" height="8" fill="#ffbbbc"/><rect x="940" y="767" width="8" height="8" fill="#ffb7b8"/><rect x="948" y="767" width="8" height="8" fill="#ffb4b4"/><rect x="956" y="767" width="8" height="8" fill="#ffb0b1"/><rect x="964" y="767" width="8" height="8" fill="#ffadae"/><rect x="972" y="767" width="8" height="8" fill="#ffaaaa"/><rect x="980" y="767" width="8" height="8" fill="#ffa6a7"/><rect x="628" y="775" width="8" height="8" fill="#94fdff"/><rect x="636" y="775" width="8" height="8" fill="#98fdff"/><rect x="644" y="775" width="8" height="8" fill="#9cfdff"/><rect x="652" y="775" width="8" height="8" fill="#a0fdff"/><rect x="660" y="775" width="8" height="8" fill="#a4fdff"/><rect x="668" y="775" width="8" height="8" fill="#a9fdff"/><rect x="676" y="775" width="8" height="8" fill="#adfcff"/><rect x="684" y="775" width="8" height="8" fill="#b1fcff"/><rect x="692" y="775" width="8" height="8" fill="#b6fcff"/><rect x="700" y="775" width="8" height="8" fill="#bafcff"/><rect x="708" y="775" width="8" height="8" fill="#befcff"/><rect x="716" y="775" width="8" height="8" fill="#c3fcff"/><rect x="724" y="775" width="8" height="8" fill="#c7fcff"/><rect x="732" y="775" width="8" height="8" fill="#ccfcff"/><rect x="740" y="775" width="8" height="8" fill="#d1fcff"/><rect x="748" y="775" width="8" height="8" fill="#d6fcff"/><rect x="756" y="775" width="8" height="8" fill="#dbfcff"/><rect x="764" y="775" width="8" height="8" fill="#dffbff"/><rect x="772" y="775" width="8" height="8" fill="#e4fbff"/><rect x="780" y="775" width="8" height="8" fill="#e9fbff"/><rect x="788" y="775" width="8" height="8" fill="#effbff"/><rect x="796" y="775" width="8" height="8" fill="#f4fbff"/><rect x="804" y="775" width="8" height="8" fill="#f9fbff"/><rect x="812" y="775" width="8" height="8" fill="#fefbff"/><rect x="820" y="775" width="8" height="8" fill="#fff6fa"/><rect x="828" y="775" width="8" height="8" fill="#fff1f5"/><rect x="836" y="775" width="8" height="8" fill="#ffecf0"/><rect x="844" y="775" width="8" height="8" fill="#ffe7eb"/><rect x="852" y="775" width="8" height="8" fill="#ffe2e6"/><rect x="860" y="775" width="8" height="8" fill="#ffdde2"/><rect x="868" y="775" width="8" height="8" fill="#ffd9dd"/><rect x="876" y="775" width="8" height="8" fill="#ffd4d9"/><rect x="884" y="775" width="8" height="8" fill="#ffd0d4"/><rect x="892" y="775" width="8" height="8" fill="#ffccd0"/><rect x="900" y="775" width="8" height="8" fill="#ffc8cc"/><rect x="908" y="775" width="8" height="8" fill="#ffc4c8"/><rect x="916" y="775" width="8" height="8" fill="#ffc0c4"/><rect x="924" y="775" width="8" height="8" fill="#ffbcc0"/><rect x="932" y="775" width="8" height="8" fill="#ffb8bd"/><rect x="940" y="775" width="8" height="8" fill="#ffb5b9"/><rect x="948" y="775" width="8" height="8" fill="#ffb1b6"/><rect x="956" y="775" width="8" height="8" fill="#ffaeb2"/><rect x="964" y="775" width="8" height="8" fill="#ffaaaf"/><rect x="972" y="775" width="8" height="8" fill="#ffa7ab"/><rect x="980" y="775" width="8" height="8" fill="#ffa4a8"/><rect x="628" y="783" width="8" height="8" fill="#94f9ff"/><rect x="636" y="783" width="8" height="8" fill="#98f9ff"/><rect x="644" y="783" width="8" height="8" fill="#9cf9ff"/><rect x="652" y="783" width="8" height="8" fill="#a0f9ff"/><rect x="660" y="783" width="8" height="8" fill="#a4f8ff"/><rect x="668" y="783" width="8" height="8" fill="#a8f8ff"/><rect x="676" y="783" width="8" height="8" fill="#acf8ff"/><rect x="684" y="783" width="8" height="8" fill="#b0f8ff"/><rect x="692" y="783" width="8" height="8" fill="#b5f8ff"/><rect x="700" y="783" width="8" height="8" fill="#b9f8ff"/><rect x="708" y="783" width="8" height="8" fill="#bdf8ff"/><rect x="716" y="783" width="8" height="8" fill="#c2f8ff"/><rect x="724" y="783" width="8" height="8" fill="#c7f8ff"/><rect x="732" y="783" width="8" height="8" fill="#cbf7ff"/><rect x="740" y="783" width="8" height="8" fill="#d0f7ff"/><rect x="748" y="783" width="8" height="8" fill="#d5f7ff"/><rect x="756" y="783" width="8" height="8" fill="#d9f7ff"/><rect x="764" y="783" width="8" height="8" fill="#def7ff"/><rect x="772" y="783" width="8" height="8" fill="#e3f7ff"/><rect x="780" y="783" width="8" height="8" fill="#e8f7ff"/><rect x="788" y="783" width="8" height="8" fill="#edf7ff"/><rect x="796" y="783" width="8" height="8" fill="#f3f6ff"/><rect x="804" y="783" width="8" height="8" fill="#f8f6ff"/><rect x="812" y="783" width="8" height="8" fill="#fdf6ff"/><rect x="820" y="783" width="8" height="8" fill="#fff3fc"/><rect x="828" y="783" width="8" height="8" fill="#ffeef6"/><rect x="836" y="783" width="8" height="8" fill="#ffe9f1"/><rect x="844" y="783" width="8" height="8" fill="#ffe4ec"/><rect x="852" y="783" width="8" height="8" fill="#ffdfe8"/><rect x="860" y="783" width="8" height="8" fill="#ffdae3"/><rect x="868" y="783" width="8" height="8" fill="#ffd6de"/><rect x="876" y="783" width="8" height="8" fill="#ffd2da"/><rect x="884" y="783" width="8" height="8" fill="#ffcdd6"/><rect x="892" y="783" width="8" height="8" fill="#ffc9d1"/><rect x="900" y="783" width="8" height="8" fill="#ffc5cd"/><rect x="908" y="783" width="8" height="8" fill="#ffc1c9"/><rect x="916" y="783" width="8" height="8" fill="#ffbdc5"/><rect x="924" y="783" width="8" height="8" fill="#ffb9c2"/><rect x="932" y="783" width="8" height="8" fill="#ffb6be"/><rect x="940" y="783" width="8" height="8" fill="#ffb2ba"/><rect x="948" y="783" width="8" height="8" fill="#ffafb7"/><rect x="956" y="783" width="8" height="8" fill="#ffabb3"/><rect x="964" y="783" width="8" height="8" fill="#ffa8b0"/><rect x="972" y="783" width="8" height="8" fill="#ffa5ad"/><rect x="980" y="783" width="8" height="8" fill="#ffa2a9"/><rect x="628" y="791" width="8" height="8" fill="#93f5ff"/><rect x="636" y="791" width="8" height="8" fill="#97f5ff"/><rect x="644" y="791" width="8" height="8" fill="#9bf4ff"/><rect x="652" y="791" width="8" height="8" fill="#9ff4ff"/><rect x="660" y="791" width="8" height="8" fill="#a3f4ff"/><rect x="668" y="791" width="8" height="8" fill="#a7f4ff"/><rect x="676" y="791" width="8" height="8" fill="#abf4ff"/><rect x="684" y="791" width="8" height="8" fill="#b0f4ff"/><rect x="692" y="791" width="8" height="8" fill="#b4f4ff"/><rect x="700" y="791" width="8" height="8" fill="#b8f4ff"/><rect x="708" y="791" width="8" height="8" fill="#bdf3ff"/><rect x="716" y="791" width="8" height="8" fill="#c1f3ff"/><rect x="724" y="791" width="8" height="8" fill="#c6f3ff"/><rect x="732" y="791" width="8" height="8" fill="#caf3ff"/><rect x="740" y="791" width="8" height="8" fill="#cff3ff"/><rect x="748" y="791" width="8" height="8" fill="#d4f3ff"/><rect x="756" y="791" width="8" height="8" fill="#d8f3ff"/><rect x="764" y="791" width="8" height="8" fill="#ddf2ff"/><rect x="772" y="791" width="8" height="8" fill="#e2f2ff"/><rect x="780" y="791" width="8" height="8" fill="#e7f2ff"/><rect x="788" y="791" width="8" height="8" fill="#ecf2ff"/><rect x="796" y="791" width="8" height="8" fill="#f1f2ff"/><rect x="804" y="791" width="8" height="8" fill="#f6f2ff"/><rect x="812" y="791" width="8" height="8" fill="#fcf2ff"/><rect x="820" y="791" width="8" height="8" fill="#fff0fd"/><rect x="828" y="791" width="8" height="8" fill="#ffeaf8"/><rect x="836" y="791" width="8" height="8" fill="#ffe5f3"/><rect x="844" y="791" width="8" height="8" fill="#ffe1ee"/><rect x="852" y="791" width="8" height="8" fill="#ffdce9"/><rect x="860" y="791" width="8" height="8" fill="#ffd7e4"/><rect x="868" y="791" width="8" height="8" fill="#ffd3e0"/><rect x="876" y="791" width="8" height="8" fill="#ffcfdb"/><rect x="884" y="791" width="8" height="8" fill="#ffcad7"/><rect x="892" y="791" width="8" height="8" fill="#ffc6d3"/><rect x="900" y="791" width="8" height="8" fill="#ffc2cf"/><rect x="908" y="791" width="8" height="8" fill="#ffbeca"/><rect x="916" y="791" width="8" height="8" fill="#ffbbc7"/><rect x="924" y="791" width="8" height="8" fill="#ffb7c3"/><rect x="932" y="791" width="8" height="8" fill="#ffb3bf"/><rect x="940" y="791" width="8" height="8" fill="#ffb0bb"/><rect x="948" y="791" width="8" height="8" fill="#ffacb8"/><rect x="956" y="791" width="8" height="8" fill="#ffa9b4"/><rect x="964" y="791" width="8" height="8" fill="#ffa6b1"/><rect x="972" y="791" width="8" height="8" fill="#ffa2ae"/><rect x="980" y="791" width="8" height="8" fill="#ff9faa"/><rect x="628" y="799" width="8" height="8" fill="#93f1ff"/><rect x="636" y="799" width="8" height="8" fill="#96f0ff"/><rect x="644" y="799" width="8" height="8" fill="#9af0ff"/><rect x="652" y="799" width="8" height="8" fill="#9ef0ff"/><rect x="660" y="799" width="8" height="8" fill="#a2f0ff"/><rect x="668" y="799" width="8" height="8" fill="#a6f0ff"/><rect x="676" y="799" width="8" height="8" fill="#abf0ff"/><rect x="684" y="799" width="8" height="8" fill="#aff0ff"/><rect x="692" y="799" width="8" height="8" fill="#b3efff"/><rect x="700" y="799" width="8" height="8" fill="#b7efff"/><rect x="708" y="799" width="8" height="8" fill="#bcefff"/><rect x="716" y="799" width="8" height="8" fill="#c0efff"/><rect x="724" y="799" width="8" height="8" fill="#c5efff"/><rect x="732" y="799" width="8" height="8" fill="#c9efff"/><rect x="740" y="799" width="8" height="8" fill="#ceefff"/><rect x="748" y="799" width="8" height="8" fill="#d2eeff"/><rect x="756" y="799" width="8" height="8" fill="#d7eeff"/><rect x="764" y="799" width="8" height="8" fill="#dceeff"/><rect x="772" y="799" width="8" height="8" fill="#e1eeff"/><rect x="780" y="799" width="8" height="8" fill="#e6eeff"/><rect x="788" y="799" width="8" height="8" fill="#ebeeff"/><rect x="796" y="799" width="8" height="8" fill="#f0edff"/><rect x="804" y="799" width="8" height="8" fill="#f5edff"/><rect x="812" y="799" width="8" height="8" fill="#faedff"/><rect x="820" y="799" width="8" height="8" fill="#ffecfe"/><rect x="828" y="799" width="8" height="8" fill="#ffe7f9"/><rect x="836" y="799" width="8" height="8" fill="#ffe2f4"/><rect x="844" y="799" width="8" height="8" fill="#ffdeef"/><rect x="852" y="799" width="8" height="8" fill="#ffd9ea"/><rect x="860" y="799" width="8" height="8" fill="#ffd4e5"/><rect x="868" y="799" width="8" height="8" fill="#ffd0e1"/><rect x="876" y="799" width="8" height="8" fill="#ffccdc"/><rect x="884" y="799" width="8" height="8" fill="#ffc8d8"/><rect x="892" y="799" width="8" height="8" fill="#ffc4d4"/><rect x="900" y="799" width="8" height="8" fill="#ffc0d0"/><rect x="908" y="799" width="8" height="8" fill="#ffbccc"/><rect x="916" y="799" width="8" height="8" fill="#ffb8c8"/><rect x="924" y="799" width="8" height="8" fill="#ffb4c4"/><rect x="932" y="799" width="8" height="8" fill="#ffb1c0"/><rect x="940" y="799" width="8" height="8" fill="#ffadbd"/><rect x="948" y="799" width="8" height="8" fill="#ffaab9"/><rect x="956" y="799" width="8" height="8" fill="#ffa6b6"/><rect x="964" y="799" width="8" height="8" fill="#ffa3b2"/><rect x="972" y="799" width="8" height="8" fill="#ffa0af"/><rect x="980" y="799" width="8" height="8" fill="#ff9dac"/><rect x="628" y="807" width="8" height="8" fill="#92edff"/><rect x="636" y="807" width="8" height="8" fill="#96ecff"/><rect x="644" y="807" width="8" height="8" fill="#9aecff"/><rect x="652" y="807" width="8" height="8" fill="#9eecff"/><rect x="660" y="807" width="8" height="8" fill="#a2ecff"/><rect x="668" y="807" width="8" height="8" fill="#a6ecff"/><rect x="676" y="807" width="8" height="8" fill="#aaecff"/><rect x="684" y="807" width="8" height="8" fill="#aeebff"/><rect x="692" y="807" width="8" height="8" fill="#b2ebff"/><rect x="700" y="807" width="8" height="8" fill="#b6ebff"/><rect x="708" y="807" width="8" height="8" fill="#bbebff"/><rect x="716" y="807" width="8" height="8" fill="#bfebff"/><rect x="724" y="807" width="8" height="8" fill="#c4ebff"/><rect x="732" y="807" width="8" height="8" fill="#c8eaff"/><rect x="740" y="807" width="8" height="8" fill="#cdeaff"/><rect x="748" y="807" width="8" height="8" fill="#d1eaff"/><rect x="756" y="807" width="8" height="8" fill="#d6eaff"/><rect x="764" y="807" width="8" height="8" fill="#dbeaff"/><rect x="772" y="807" width="8" height="8" fill="#e0eaff"/><rect x="780" y="807" width="8" height="8" fill="#e5e9ff"/><rect x="788" y="807" width="8" height="8" fill="#eae9ff"/><rect x="796" y="807" width="8" height="8" fill="#efe9ff"/><rect x="804" y="807" width="8" height="8" fill="#f4e9ff"/><rect x="812" y="807" width="8" height="8" fill="#f9e9ff"/><rect x="820" y="807" width="8" height="8" fill="#fee8ff"/><rect x="828" y="807" width="8" height="8" fill="#ffe4fa"/><rect x="836" y="807" width="8" height="8" fill="#ffdff5"/><rect x="844" y="807" width="8" height="8" fill="#ffdbf0"/><rect x="852" y="807" width="8" height="8" fill="#ffd6eb"/><rect x="860" y="807" width="8" height="8" fill="#ffd2e7"/><rect x="868" y="807" width="8" height="8" fill="#ffcde2"/><rect x="876" y="807" width="8" height="8" fill="#ffc9de"/><rect x="884" y="807" width="8" height="8" fill="#ffc5d9"/><rect x="892" y="807" width="8" height="8" fill="#ffc1d5"/><rect x="900" y="807" width="8" height="8" fill="#ffbdd1"/><rect x="908" y="807" width="8" height="8" fill="#ffb9cd"/><rect x="916" y="807" width="8" height="8" fill="#ffb5c9"/><rect x="924" y="807" width="8" height="8" fill="#ffb2c5"/><rect x="932" y="807" width="8" height="8" fill="#ffaec1"/><rect x="940" y="807" width="8" height="8" fill="#ffabbe"/><rect x="948" y="807" width="8" height="8" fill="#ffa7ba"/><rect x="956" y="807" width="8" height="8" fill="#ffa4b7"/><rect x="964" y="807" width="8" height="8" fill="#ffa1b3"/><rect x="972" y="807" width="8" height="8" fill="#ff9eb0"/><rect x="980" y="807" width="8" height="8" fill="#ff9bad"/><rect x="628" y="815" width="8" height="8" fill="#91e9ff"/><rect x="636" y="815" width="8" height="8" fill="#95e8ff"/><rect x="644" y="815" width="8" height="8" fill="#99e8ff"/><rect x="652" y="815" width="8" height="8" fill="#9de8ff"/><rect x="660" y="815" width="8" height="8" fill="#a1e8ff"/><rect x="668" y="815" width="8" height="8" fill="#a5e8ff"/><rect x="676" y="815" width="8" height="8" fill="#a9e8ff"/><rect x="684" y="815" width="8" height="8" fill="#ade7ff"/><rect x="692" y="815" width="8" height="8" fill="#b1e7ff"/><rect x="700" y="815" width="8" height="8" fill="#b6e7ff"/><rect x="708" y="815" width="8" height="8" fill="#bae7ff"/><rect x="716" y="815" width="8" height="8" fill="#bee7ff"/><rect x="724" y="815" width="8" height="8" fill="#c3e6ff"/><rect x="732" y="815" width="8" height="8" fill="#c7e6ff"/><rect x="740" y="815" width="8" height="8" fill="#cce6ff"/><rect x="748" y="815" width="8" height="8" fill="#d0e6ff"/><rect x="756" y="815" width="8" height="8" fill="#d5e6ff"/><rect x="764" y="815" width="8" height="8" fill="#dae5ff"/><rect x="772" y="815" width="8" height="8" fill="#dfe5ff"/><rect x="780" y="815" width="8" height="8" fill="#e4e5ff"/><rect x="788" y="815" width="8" height="8" fill="#e9e5ff"/><rect x="796" y="815" width="8" height="8" fill="#eee5ff"/><rect x="804" y="815" width="8" height="8" fill="#f3e4ff"/><rect x="812" y="815" width="8" height="8" fill="#f8e4ff"/><rect x="820" y="815" width="8" height="8" fill="#fde4ff"/><rect x="828" y="815" width="8" height="8" fill="#ffe1fc"/><rect x="836" y="815" width="8" height="8" fill="#ffdcf7"/><rect x="844" y="815" width="8" height="8" fill="#ffd8f2"/><rect x="852" y="815" width="8" height="8" fill="#ffd3ed"/><rect x="860" y="815" width="8" height="8" fill="#ffcfe8"/><rect x="868" y="815" width="8" height="8" fill="#ffcae3"/><rect x="876" y="815" width="8" height="8" fill="#ffc6df"/><rect x="884" y="815" width="8" height="8" fill="#ffc2db"/><rect x="892" y="815" width="8" height="8" fill="#ffbed6"/><rect x="900" y="815" width="8" height="8" fill="#ffbad2"/><rect x="908" y="815" width="8" height="8" fill="#ffb6ce"/><rect x="916" y="815" width="8" height="8" fill="#ffb3ca"/><rect x="924" y="815" width="8" height="8" fill="#ffafc6"/><rect x="932" y="815" width="8" height="8" fill="#ffacc3"/><rect x="940" y="815" width="8" height="8" fill="#ffa8bf"/><rect x="948" y="815" width="8" height="8" fill="#ffa5bb"/><rect x="956" y="815" width="8" height="8" fill="#ffa2b8"/><rect x="964" y="815" width="8" height="8" fill="#ff9eb4"/><rect x="972" y="815" width="8" height="8" fill="#ff9bb1"/><rect x="980" y="815" width="8" height="8" fill="#ff98ae"/><rect x="628" y="823" width="8" height="8" fill="#91e5ff"/><rect x="636" y="823" width="8" height="8" fill="#95e4ff"/><rect x="644" y="823" width="8" height="8" fill="#98e4ff"/><rect x="652" y="823" width="8" height="8" fill="#9ce4ff"/><rect x="660" y="823" width="8" height="8" fill="#a0e4ff"/><rect x="668" y="823" width="8" height="8" fill="#a4e4ff"/><rect x="676" y="823" width="8" height="8" fill="#a8e3ff"/><rect x="684" y="823" width="8" height="8" fill="#ace3ff"/><rect x="692" y="823" width="8" height="8" fill="#b1e3ff"/><rect x="700" y="823" width="8" height="8" fill="#b5e3ff"/><rect x="708" y="823" width="8" height="8" fill="#b9e3ff"/><rect x="716" y="823" width="8" height="8" fill="#bde2ff"/><rect x="724" y="823" width="8" height="8" fill="#c2e2ff"/><rect x="732" y="823" width="8" height="8" fill="#c6e2ff"/><rect x="740" y="823" width="8" height="8" fill="#cbe2ff"/><rect x="748" y="823" width="8" height="8" fill="#cfe2ff"/><rect x="756" y="823" width="8" height="8" fill="#d4e1ff"/><rect x="764" y="823" width="8" height="8" fill="#d9e1ff"/><rect x="772" y="823" width="8" height="8" fill="#dee1ff"/><rect x="780" y="823" width="8" height="8" fill="#e2e1ff"/><rect x="788" y="823" width="8" height="8" fill="#e7e1ff"/><rect x="796" y="823" width="8" height="8" fill="#ece0ff"/><rect x="804" y="823" width="8" height="8" fill="#f1e0ff"/><rect x="812" y="823" width="8" height="8" fill="#f6e0ff"/><rect x="820" y="823" width="8" height="8" fill="#fce0ff"/><rect x="828" y="823" width="8" height="8" fill="#ffdefd"/><rect x="836" y="823" width="8" height="8" fill="#ffd9f8"/><rect x="844" y="823" width="8" height="8" fill="#ffd4f3"/><rect x="852" y="823" width="8" height="8" fill="#ffd0ee"/><rect x="860" y="823" width="8" height="8" fill="#ffcce9"/><rect x="868" y="823" width="8" height="8" fill="#ffc7e5"/><rect x="876" y="823" width="8" height="8" fill="#ffc3e0"/><rect x="884" y="823" width="8" height="8" fill="#ffbfdc"/><rect x="892" y="823" width="8" height="8" fill="#ffbbd8"/><rect x="900" y="823" width="8" height="8" fill="#ffb7d3"/><rect x="908" y="823" width="8" height="8" fill="#ffb4cf"/><rect x="916" y="823" width="8" height="8" fill="#ffb0cb"/><rect x="924" y="823" width="8" height="8" fill="#ffadc7"/><rect x="932" y="823" width="8" height="8" fill="#ffa9c4"/><rect x="940" y="823" width="8" height="8" fill="#ffa6c0"/><rect x="948" y="823" width="8" height="8" fill="#ffa2bc"/><rect x="956" y="823" width="8" height="8" fill="#ff9fb9"/><rect x="964" y="823" width="8" height="8" fill="#ff9cb5"/><rect x="972" y="823" width="8" height="8" fill="#ff99b2"/><rect x="980" y="823" width="8" height="8" fill="#ff96af"/><rect x="628" y="831" width="8" height="8" fill="#90e1ff"/><rect x="636" y="831" width="8" height="8" fill="#94e1ff"/><rect x="644" y="831" width="8" height="8" fill="#98e0ff"/><rect x="652" y="831" width="8" height="8" fill="#9ce0ff"/><rect x="660" y="831" width="8" height="8" fill="#a0e0ff"/><rect x="668" y="831" width="8" height="8" fill="#a4e0ff"/><rect x="676" y="831" width="8" height="8" fill="#a8e0ff"/><rect x="684" y="831" width="8" height="8" fill="#acdfff"/><rect x="692" y="831" width="8" height="8" fill="#b0dfff"/><rect x="700" y="831" width="8" height="8" fill="#b4dfff"/><rect x="708" y="831" width="8" height="8" fill="#b8dfff"/><rect x="716" y="831" width="8" height="8" fill="#bddeff"/><rect x="724" y="831" width="8" height="8" fill="#c1deff"/><rect x="732" y="831" width="8" height="8" fill="#c5deff"/><rect x="740" y="831" width="8" height="8" fill="#cadeff"/><rect x="748" y="831" width="8" height="8" fill="#cedeff"/><rect x="756" y="831" width="8" height="8" fill="#d3ddff"/><rect x="764" y="831" width="8" height="8" fill="#d8ddff"/><rect x="772" y="831" width="8" height="8" fill="#dcddff"/><rect x="780" y="831" width="8" height="8" fill="#e1ddff"/><rect x="788" y="831" width="8" height="8" fill="#e6dcff"/><rect x="796" y="831" width="8" height="8" fill="#ebdcff"/><rect x="804" y="831" width="8" height="8" fill="#f0dcff"/><rect x="812" y="831" width="8" height="8" fill="#f5dcff"/><rect x="820" y="831" width="8" height="8" fill="#fadbff"/><rect x="828" y="831" width="8" height="8" fill="#ffdbfe"/><rect x="836" y="831" width="8" height="8" fill="#ffd6f9"/><rect x="844" y="831" width="8" height="8" fill="#ffd1f4"/><rect x="852" y="831" width="8" height="8" fill="#ffcdef"/><rect x="860" y="831" width="8" height="8" fill="#ffc9eb"/><rect x="868" y="831" width="8" height="8" fill="#ffc5e6"/><rect x="876" y="831" width="8" height="8" fill="#ffc0e1"/><rect x="884" y="831" width="8" height="8" fill="#ffbcdd"/><rect x="892" y="831" width="8" height="8" fill="#ffb9d9"/><rect x="900" y="831" width="8" height="8" fill="#ffb5d5"/><rect x="908" y="831" width="8" height="8" fill="#ffb1d1"/><rect x="916" y="831" width="8" height="8" fill="#ffaecd"/><rect x="924" y="831" width="8" height="8" fill="#ffaac9"/><rect x="932" y="831" width="8" height="8" fill="#ffa7c5"/><rect x="940" y="831" width="8" height="8" fill="#ffa3c1"/><rect x="948" y="831" width="8" height="8" fill="#ffa0be"/><rect x="956" y="831" width="8" height="8" fill="#ff9dba"/><rect x="964" y="831" width="8" height="8" fill="#ff9ab7"/><rect x="972" y="831" width="8" height="8" fill="#ff97b3"/><rect x="980" y="831" width="8" height="8" fill="#ff94b0"/><rect x="628" y="839" width="8" height="8" fill="#90ddff"/><rect x="636" y="839" width="8" height="8" fill="#93ddff"/><rect x="644" y="839" width="8" height="8" fill="#97dcff"/><rect x="652" y="839" width="8" height="8" fill="#9bdcff"/><rect x="660" y="839" width="8" height="8" fill="#9fdcff"/><rect x="668" y="839" width="8" height="8" fill="#a3dcff"/><rect x="676" y="839" width="8" height="8" fill="#a7dcff"/><rect x="684" y="839" width="8" height="8" fill="#abdbff"/><rect x="692" y="839" width="8" height="8" fill="#afdbff"/><rect x="700" y="839" width="8" height="8" fill="#b3dbff"/><rect x="708" y="839" width="8" height="8" fill="#b7dbff"/><rect x="716" y="839" width="8" height="8" fill="#bcdaff"/><rect x="724" y="839" width="8" height="8" fill="#c0daff"/><rect x="732" y="839" width="8" height="8" fill="#c4daff"/><rect x="740" y="839" width="8" height="8" fill="#c9daff"/><rect x="748" y="839" width="8" height="8" fill="#cdd9ff"/><rect x="756" y="839" width="8" height="8" fill="#d2d9ff"/><rect x="764" y="839" width="8" height="8" fill="#d7d9ff"/><rect x="772" y="839" width="8" height="8" fill="#dbd9ff"/><rect x="780" y="839" width="8" height="8" fill="#e0d8ff"/><rect x="788" y="839" width="8" height="8" fill="#e5d8ff"/><rect x="796" y="839" width="8" height="8" fill="#ead8ff"/><rect x="804" y="839" width="8" height="8" fill="#efd8ff"/><rect x="812" y="839" width="8" height="8" fill="#f4d7ff"/><rect x="820" y="839" width="8" height="8" fill="#f9d7ff"/><rect x="828" y="839" width="8" height="8" fill="#fed7ff"/><rect x="836" y="839" width="8" height="8" fill="#ffd3fb"/><rect x="844" y="839" width="8" height="8" fill="#ffcff6"/><rect x="852" y="839" width="8" height="8" fill="#ffcaf1"/><rect x="860" y="839" width="8" height="8" fill="#ffc6ec"/><rect x="868" y="839" width="8" height="8" fill="#ffc2e7"/><rect x="876" y="839" width="8" height="8" fill="#ffbee3"/><rect x="884" y="839" width="8" height="8" fill="#ffbade"/><rect x="892" y="839" width="8" height="8" fill="#ffb6da"/><rect x="900" y="839" width="8" height="8" fill="#ffb2d6"/><rect x="908" y="839" width="8" height="8" fill="#ffaed2"/><rect x="916" y="839" width="8" height="8" fill="#ffabce"/><rect x="924" y="839" width="8" height="8" fill="#ffa7ca"/><rect x="932" y="839" width="8" height="8" fill="#ffa4c6"/><rect x="940" y="839" width="8" height="8" fill="#ffa1c2"/><rect x="948" y="839" width="8" height="8" fill="#ff9ebf"/><rect x="956" y="839" width="8" height="8" fill="#ff9abb"/><rect x="964" y="839" width="8" height="8" fill="#ff97b8"/><rect x="972" y="839" width="8" height="8" fill="#ff94b4"/><rect x="980" y="839" width="8" height="8" fill="#ff91b1"/><rect x="628" y="847" width="8" height="8" fill="#8fd9ff"/><rect x="636" y="847" width="8" height="8" fill="#93d9ff"/><rect x="644" y="847" width="8" height="8" fill="#97d9ff"/><rect x="652" y="847" width="8" height="8" fill="#9ad8ff"/><rect x="660" y="847" width="8" height="8" fill="#9ed8ff"/><rect x="668" y="847" width="8" height="8" fill="#a2d8ff"/><rect x="676" y="847" width="8" height="8" fill="#a6d8ff"/><rect x="684" y="847" width="8" height="8" fill="#aad7ff"/><rect x="692" y="847" width="8" height="8" fill="#aed7ff"/><rect x="700" y="847" width="8" height="8" fill="#b2d7ff"/><rect x="708" y="847" width="8" height="8" fill="#b7d7ff"/><rect x="716" y="847" width="8" height="8" fill="#bbd6ff"/><rect x="724" y="847" width="8" height="8" fill="#bfd6ff"/><rect x="732" y="847" width="8" height="8" fill="#c4d6ff"/><rect x="740" y="847" width="8" height="8" fill="#c8d6ff"/><rect x="748" y="847" width="8" height="8" fill="#ccd5ff"/><rect x="756" y="847" width="8" height="8" fill="#d1d5ff"/><rect x="764" y="847" width="8" height="8" fill="#d6d5ff"/><rect x="772" y="847" width="8" height="8" fill="#dad5ff"/><rect x="780" y="847" width="8" height="8" fill="#dfd4ff"/><rect x="788" y="847" width="8" height="8" fill="#e4d4ff"/><rect x="796" y="847" width="8" height="8" fill="#e9d4ff"/><rect x="804" y="847" width="8" height="8" fill="#eed4ff"/><rect x="812" y="847" width="8" height="8" fill="#f3d3ff"/><rect x="820" y="847" width="8" height="8" fill="#f8d3ff"/><rect x="828" y="847" width="8" height="8" fill="#fdd3ff"/><rect x="836" y="847" width="8" height="8" fill="#ffd0fc"/><rect x="844" y="847" width="8" height="8" fill="#ffccf7"/><rect x="852" y="847" width="8" height="8" fill="#ffc7f2"/><rect x="860" y="847" width="8" height="8" fill="#ffc3ed"/><rect x="868" y="847" width="8" height="8" fill="#ffbfe9"/><rect x="876" y="847" width="8" height="8" fill="#ffbbe4"/><rect x="884" y="847" width="8" height="8" fill="#ffb7e0"/><rect x="892" y="847" width="8" height="8" fill="#ffb3db"/><rect x="900" y="847" width="8" height="8" fill="#ffafd7"/><rect x="908" y="847" width="8" height="8" fill="#ffacd3"/><rect x="916" y="847" width="8" height="8" fill="#ffa8cf"/><rect x="924" y="847" width="8" height="8" fill="#ffa5cb"/><rect x="932" y="847" width="8" height="8" fill="#ffa2c7"/><rect x="940" y="847" width="8" height="8" fill="#ff9ec3"/><rect x="948" y="847" width="8" height="8" fill="#ff9bc0"/><rect x="956" y="847" width="8" height="8" fill="#ff98bc"/><rect x="964" y="847" width="8" height="8" fill="#ff95b9"/><rect x="972" y="847" width="8" height="8" fill="#ff92b5"/><rect x="980" y="847" width="8" height="8" fill="#ff8fb2"/><rect x="628" y="855" width="8" height="8" fill="#8fd5ff"/><rect x="636" y="855" width="8" height="8" fill="#92d5ff"/><rect x="644" y="855" width="8" height="8" fill="#96d5ff"/><rect x="652" y="855" width="8" height="8" fill="#9ad5ff"/><rect x="660" y="855" width="8" height="8" fill="#9ed4ff"/><rect x="668" y="855" width="8" height="8" fill="#a2d4ff"/><rect x="676" y="855" width="8" height="8" fill="#a5d4ff"/><rect x="684" y="855" width="8" height="8" fill="#a9d4ff"/><rect x="692" y="855" width="8" height="8" fill="#aed3ff"/><rect x="700" y="855" width="8" height="8" fill="#b2d3ff"/><rect x="708" y="855" width="8" height="8" fill="#b6d3ff"/><rect x="716" y="855" width="8" height="8" fill="#bad3ff"/><rect x="724" y="855" width="8" height="8" fill="#bed2ff"/><rect x="732" y="855" width="8" height="8" fill="#c3d2ff"/><rect x="740" y="855" width="8" height="8" fill="#c7d2ff"/><rect x="748" y="855" width="8" height="8" fill="#ccd2ff"/><rect x="756" y="855" width="8" height="8" fill="#d0d1ff"/><rect x="764" y="855" width="8" height="8" fill="#d5d1ff"/><rect x="772" y="855" width="8" height="8" fill="#d9d1ff"/><rect x="780" y="855" width="8" height="8" fill="#ded0ff"/><rect x="788" y="855" width="8" height="8" fill="#e3d0ff"/><rect x="796" y="855" width="8" height="8" fill="#e8d0ff"/><rect x="804" y="855" width="8" height="8" fill="#ecd0ff"/><rect x="812" y="855" width="8" height="8" fill="#f1cfff"/><rect x="820" y="855" width="8" height="8" fill="#f6cfff"/><rect x="828" y="855" width="8" height="8" fill="#fccfff"/><rect x="836" y="855" width="8" height="8" fill="#ffcdfd"/><rect x="844" y="855" width="8" height="8" fill="#ffc9f8"/><rect x="852" y="855" width="8" height="8" fill="#ffc4f3"/><rect x="860" y="855" width="8" height="8" fill="#ffc0ee"/><rect x="868" y="855" width="8" height="8" fill="#ffbcea"/><rect x="876" y="855" width="8" height="8" fill="#ffb8e5"/><rect x="884" y="855" width="8" height="8" fill="#ffb4e1"/><rect x="892" y="855" width="8" height="8" fill="#ffb1dc"/><rect x="900" y="855" width="8" height="8" fill="#ffadd8"/><rect x="908" y="855" width="8" height="8" fill="#ffa9d4"/><rect x="916" y="855" width="8" height="8" fill="#ffa6d0"/><rect x="924" y="855" width="8" height="8" fill="#ffa2cc"/><rect x="932" y="855" width="8" height="8" fill="#ff9fc8"/><rect x="940" y="855" width="8" height="8" fill="#ff9cc5"/><rect x="948" y="855" width="8" height="8" fill="#ff99c1"/><rect x="956" y="855" width="8" height="8" fill="#ff96bd"/><rect x="964" y="855" width="8" height="8" fill="#ff93ba"/><rect x="972" y="855" width="8" height="8" fill="#ff90b6"/><rect x="980" y="855" width="8" height="8" fill="#ff8db3"/><rect x="628" y="863" width="8" height="8" fill="#8ed2ff"/><rect x="636" y="863" width="8" height="8" fill="#92d1ff"/><rect x="644" y="863" width="8" height="8" fill="#95d1ff"/><rect x="652" y="863" width="8" height="8" fill="#99d1ff"/><rect x="660" y="863" width="8" height="8" fill="#9dd1ff"/><rect x="668" y="863" width="8" height="8" fill="#a1d0ff"/><rect x="676" y="863" width="8" height="8" fill="#a5d0ff"/><rect x="684" y="863" width="8" height="8" fill="#a9d0ff"/><rect x="692" y="863" width="8" height="8" fill="#add0ff"/><rect x="700" y="863" width="8" height="8" fill="#b1cfff"/><rect x="708" y="863" width="8" height="8" fill="#b5cfff"/><rect x="716" y="863" width="8" height="8" fill="#b9cfff"/><rect x="724" y="863" width="8" height="8" fill="#bdceff"/><rect x="732" y="863" width="8" height="8" fill="#c2ceff"/><rect x="740" y="863" width="8" height="8" fill="#c6ceff"/><rect x="748" y="863" width="8" height="8" fill="#cbceff"/><rect x="756" y="863" width="8" height="8" fill="#cfcdff"/><rect x="764" y="863" width="8" height="8" fill="#d4cdff"/><rect x="772" y="863" width="8" height="8" fill="#d8cdff"/><rect x="780" y="863" width="8" height="8" fill="#ddccff"/><rect x="788" y="863" width="8" height="8" fill="#e2ccff"/><rect x="796" y="863" width="8" height="8" fill="#e6ccff"/><rect x="804" y="863" width="8" height="8" fill="#ebccff"/><rect x="812" y="863" width="8" height="8" fill="#f0cbff"/><rect x="820" y="863" width="8" height="8" fill="#f5cbff"/><rect x="828" y="863" width="8" height="8" fill="#facbff"/><rect x="836" y="863" width="8" height="8" fill="#ffcaff"/><rect x="844" y="863" width="8" height="8" fill="#ffc6fa"/><rect x="852" y="863" width="8" height="8" fill="#ffc1f5"/><rect x="860" y="863" width="8" height="8" fill="#ffbdf0"/><rect x="868" y="863" width="8" height="8" fill="#ffb9eb"/><rect x="876" y="863" width="8" height="8" fill="#ffb5e6"/><rect x="884" y="863" width="8" height="8" fill="#ffb2e2"/><rect x="892" y="863" width="8" height="8" fill="#ffaede"/><rect x="900" y="863" width="8" height="8" fill="#ffaad9"/><rect x="908" y="863" width="8" height="8" fill="#ffa7d5"/><rect x="916" y="863" width="8" height="8" fill="#ffa3d1"/><rect x="924" y="863" width="8" height="8" fill="#ffa0cd"/><rect x="932" y="863" width="8" height="8" fill="#ff9dca"/><rect x="940" y="863" width="8" height="8" fill="#ff99c6"/><rect x="948" y="863" width="8" height="8" fill="#ff96c2"/><rect x="956" y="863" width="8" height="8" fill="#ff93bf"/><rect x="964" y="863" width="8" height="8" fill="#ff90bb"/><rect x="972" y="863" width="8" height="8" fill="#ff8db8"/><rect x="980" y="863" width="8" height="8" fill="#ff8bb4"/><rect x="628" y="871" width="8" height="8" fill="#8dceff"/><rect x="636" y="871" width="8" height="8" fill="#91ceff"/><rect x="644" y="871" width="8" height="8" fill="#95ceff"/><rect x="652" y="871" width="8" height="8" fill="#99cdff"/><rect x="660" y="871" width="8" height="8" fill="#9ccdff"/><rect x="668" y="871" width="8" height="8" fill="#a0cdff"/><rect x="676" y="871" width="8" height="8" fill="#a4ccff"/><rect x="684" y="871" width="8" height="8" fill="#a8ccff"/><rect x="692" y="871" width="8" height="8" fill="#acccff"/><rect x="700" y="871" width="8" height="8" fill="#b0ccff"/><rect x="708" y="871" width="8" height="8" fill="#b4cbff"/><rect x="716" y="871" width="8" height="8" fill="#b8cbff"/><rect x="724" y="871" width="8" height="8" fill="#bdcbff"/><rect x="732" y="871" width="8" height="8" fill="#c1caff"/><rect x="740" y="871" width="8" height="8" fill="#c5caff"/><rect x="748" y="871" width="8" height="8" fill="#cacaff"/><rect x="756" y="871" width="8" height="8" fill="#cec9ff"/><rect x="764" y="871" width="8" height="8" fill="#d3c9ff"/><rect x="772" y="871" width="8" height="8" fill="#d7c9ff"/><rect x="780" y="871" width="8" height="8" fill="#dcc9ff"/><rect x="788" y="871" width="8" height="8" fill="#e1c8ff"/><rect x="796" y="871" width="8" height="8" fill="#e5c8ff"/><rect x="804" y="871" width="8" height="8" fill="#eac8ff"/><rect x="812" y="871" width="8" height="8" fill="#efc7ff"/><rect x="820" y="871" width="8" height="8" fill="#f4c7ff"/><rect x="828" y="871" width="8" height="8" fill="#f9c7ff"/><rect x="836" y="871" width="8" height="8" fill="#fec6ff"/><rect x="844" y="871" width="8" height="8" fill="#ffc3fb"/><rect x="852" y="871" width="8" height="8" fill="#ffbff6"/><rect x="860" y="871" width="8" height="8" fill="#ffbaf1"/><rect x="868" y="871" width="8" height="8" fill="#ffb6ec"/><rect x="876" y="871" width="8" height="8" fill="#ffb3e8"/><rect x="884" y="871" width="8" height="8" fill="#ffafe3"/><rect x="892" y="871" width="8" height="8" fill="#ffabdf"/><rect x="900" y="871" width="8" height="8" fill="#ffa8db"/><rect x="908" y="871" width="8" height="8" fill="#ffa4d7"/><rect x="916" y="871" width="8" height="8" fill="#ffa1d2"/><rect x="924" y="871" width="8" height="8" fill="#ff9dcf"/><rect x="932" y="871" width="8" height="8" fill="#ff9acb"/><rect x="940" y="871" width="8" height="8" fill="#ff97c7"/><rect x="948" y="871" width="8" height="8" fill="#ff94c3"/><rect x="956" y="871" width="8" height="8" fill="#ff91c0"/><rect x="964" y="871" width="8" height="8" fill="#ff8ebc"/><rect x="972" y="871" width="8" height="8" fill="#ff8bb9"/><rect x="980" y="871" width="8" height="8" fill="#ff88b5"/><rect x="628" y="879" width="8" height="8" fill="#8dcaff"/><rect x="636" y="879" width="8" height="8" fill="#90caff"/><rect x="644" y="879" width="8" height="8" fill="#94caff"/><rect x="652" y="879" width="8" height="8" fill="#98caff"/><rect x="660" y="879" width="8" height="8" fill="#9cc9ff"/><rect x="668" y="879" width="8" height="8" fill="#9fc9ff"/><rect x="676" y="879" width="8" height="8" fill="#a3c9ff"/><rect x="684" y="879" width="8" height="8" fill="#a7c8ff"/><rect x="692" y="879" width="8" height="8" fill="#abc8ff"/><rect x="700" y="879" width="8" height="8" fill="#afc8ff"/><rect x="708" y="879" width="8" height="8" fill="#b3c8ff"/><rect x="716" y="879" width="8" height="8" fill="#b8c7ff"/><rect x="724" y="879" width="8" height="8" fill="#bcc7ff"/><rect x="732" y="879" width="8" height="8" fill="#c0c7ff"/><rect x="740" y="879" width="8" height="8" fill="#c4c6ff"/><rect x="748" y="879" width="8" height="8" fill="#c9c6ff"/><rect x="756" y="879" width="8" height="8" fill="#cdc6ff"/><rect x="764" y="879" width="8" height="8" fill="#d2c5ff"/><rect x="772" y="879" width="8" height="8" fill="#d6c5ff"/><rect x="780" y="879" width="8" height="8" fill="#dbc5ff"/><rect x="788" y="879" width="8" height="8" fill="#dfc4ff"/><rect x="796" y="879" width="8" height="8" fill="#e4c4ff"/><rect x="804" y="879" width="8" height="8" fill="#e9c4ff"/><rect x="812" y="879" width="8" height="8" fill="#eec3ff"/><rect x="820" y="879" width="8" height="8" fill="#f3c3ff"/><rect x="828" y="879" width="8" height="8" fill="#f8c3ff"/><rect x="836" y="879" width="8" height="8" fill="#fdc2ff"/><rect x="844" y="879" width="8" height="8" fill="#ffc0fc"/><rect x="852" y="879" width="8" height="8" fill="#ffbcf7"/><rect x="860" y="879" width="8" height="8" fill="#ffb8f2"/><rect x="868" y="879" width="8" height="8" fill="#ffb4ee"/><rect x="876" y="879" width="8" height="8" fill="#ffb0e9"/><rect x="884" y="879" width="8" height="8" fill="#fface5"/><rect x="892" y="879" width="8" height="8" fill="#ffa9e0"/><rect x="900" y="879" width="8" height="8" fill="#ffa5dc"/><rect x="908" y="879" width="8" height="8" fill="#ffa2d8"/><rect x="916" y="879" width="8" height="8" fill="#ff9ed4"/><rect x="924" y="879" width="8" height="8" fill="#ff9bd0"/><rect x="932" y="879" width="8" height="8" fill="#ff98cc"/><rect x="940" y="879" width="8" height="8" fill="#ff95c8"/><rect x="948" y="879" width="8" height="8" fill="#ff92c4"/><rect x="956" y="879" width="8" height="8" fill="#ff8fc1"/><rect x="964" y="879" width="8" height="8" fill="#ff8cbd"/><rect x="972" y="879" width="8" height="8" fill="#ff89ba"/><rect x="980" y="879" width="8" height="8" fill="#ff86b6"/></g></g>
<rect x="799.5" y="770.3" width="13.5" height="13.5" fill="none" stroke="#000" stroke-width="1.8"/>
<circle cx="778.2" cy="790.5" r="4.2" fill="#aaa" stroke="#111" stroke-width="1"/>
<circle cx="779.5" cy="794" r="4.2" fill="#fff" stroke="#111" stroke-width="1"/>
<text x="806.7" y="674.0" font-size="14.3" fill="#d0d0d0" text-anchor="middle" textLength="75.7" lengthAdjust="spacingAndGlyphs" stroke="#d0d0d0" stroke-width="0.26">CIE 1931 xy</text>
<rect x="994" y="663.2" width="653" height="2" fill="#0c0c0c"/>
<rect x="994" y="663.2" width="1.6" height="224.4" fill="#0c0c0c"/>
<rect x="1645.6" y="663.2" width="1.6" height="224.4" fill="#0c0c0c"/>
<rect x="995.5" y="665" width="633.1" height="32.6" fill="url(#thg)"/>
<g clip-path="url(#tclip)"><rect x="995.5" y="697.6" width="633.1" height="31.1" fill="#404040"/><text x="1008.3" y="720.7" font-size="19.5" fill="#f2f2f2" font-weight="bold" textLength="63.0" lengthAdjust="spacingAndGlyphs">x: CIE31</text><text x="1092.4" y="720.7" font-size="19.0" fill="#f0f0f0" textLength="49.4" lengthAdjust="spacingAndGlyphs" stroke="#f0f0f0" stroke-width="0.35">0,3085</text><text x="1170.9" y="720.7" font-size="19.0" fill="#f0f0f0" textLength="49.4" lengthAdjust="spacingAndGlyphs" stroke="#f0f0f0" stroke-width="0.35">0,6481</text><text x="1238.8" y="720.7" font-size="19.0" fill="#f0f0f0" textLength="49.4" lengthAdjust="spacingAndGlyphs" stroke="#f0f0f0" stroke-width="0.35">0,2984</text><text x="1316.4" y="720.7" font-size="19.0" fill="#f0f0f0" textLength="49.4" lengthAdjust="spacingAndGlyphs" stroke="#f0f0f0" stroke-width="0.35">0,1471</text><text x="1385.0" y="720.7" font-size="19.0" fill="#f0f0f0" textLength="49.4" lengthAdjust="spacingAndGlyphs" stroke="#f0f0f0" stroke-width="0.35">0,2210</text><text x="1462.8" y="720.7" font-size="19.0" fill="#f0f0f0" textLength="49.4" lengthAdjust="spacingAndGlyphs" stroke="#f0f0f0" stroke-width="0.35">0,3151</text><text x="1540.8" y="720.7" font-size="19.0" fill="#f0f0f0" textLength="49.4" lengthAdjust="spacingAndGlyphs" stroke="#f0f0f0" stroke-width="0.35">0,4181</text><text x="1618.8" y="720.7" font-size="19.0" fill="#f0f0f0" textLength="22.5" lengthAdjust="spacingAndGlyphs" stroke="#f0f0f0" stroke-width="0.35">0,3</text><rect x="995.5" y="728.6" width="633.1" height="31.1" fill="#787878"/><text x="1008.3" y="751.8" font-size="19.5" fill="#f2f2f2" font-weight="bold" textLength="63.0" lengthAdjust="spacingAndGlyphs">y: CIE31</text><text x="1092.4" y="751.8" font-size="19.0" fill="#f0f0f0" textLength="49.4" lengthAdjust="spacingAndGlyphs" stroke="#f0f0f0" stroke-width="0.35">0,3257</text><text x="1170.9" y="751.8" font-size="19.0" fill="#f0f0f0" textLength="49.4" lengthAdjust="spacingAndGlyphs" stroke="#f0f0f0" stroke-width="0.35">0,3333</text><text x="1238.8" y="751.8" font-size="19.0" fill="#f0f0f0" textLength="49.4" lengthAdjust="spacingAndGlyphs" stroke="#f0f0f0" stroke-width="0.35">0,6051</text><text x="1316.4" y="751.8" font-size="19.0" fill="#f0f0f0" textLength="49.4" lengthAdjust="spacingAndGlyphs" stroke="#f0f0f0" stroke-width="0.35">0,0577</text><text x="1385.0" y="751.8" font-size="19.0" fill="#f0f0f0" textLength="49.4" lengthAdjust="spacingAndGlyphs" stroke="#f0f0f0" stroke-width="0.35">0,3237</text><text x="1462.8" y="751.8" font-size="19.0" fill="#f0f0f0" textLength="49.4" lengthAdjust="spacingAndGlyphs" stroke="#f0f0f0" stroke-width="0.35">0,1500</text><text x="1540.8" y="751.8" font-size="19.0" fill="#f0f0f0" textLength="49.4" lengthAdjust="spacingAndGlyphs" stroke="#f0f0f0" stroke-width="0.35">0,5076</text><text x="1618.8" y="751.8" font-size="19.0" fill="#f0f0f0" textLength="22.5" lengthAdjust="spacingAndGlyphs" stroke="#f0f0f0" stroke-width="0.35">0,3</text><rect x="995.5" y="759.7" width="633.1" height="31.1" fill="#404040"/><text x="1008.3" y="782.8" font-size="19.5" fill="#f2f2f2" font-weight="bold" textLength="10.5" lengthAdjust="spacingAndGlyphs">Y</text><text x="1092.4" y="782.8" font-size="19.0" fill="#f0f0f0" textLength="67.4" lengthAdjust="spacingAndGlyphs" stroke="#f0f0f0" stroke-width="0.35">305,1789</text><text x="1170.9" y="782.8" font-size="19.0" fill="#f0f0f0" textLength="57.2" lengthAdjust="spacingAndGlyphs" stroke="#f0f0f0" stroke-width="0.35">62,3112</text><text x="1238.8" y="782.8" font-size="19.0" fill="#f0f0f0" textLength="67.4" lengthAdjust="spacingAndGlyphs" stroke="#f0f0f0" stroke-width="0.35">215,7658</text><text x="1316.4" y="782.8" font-size="19.0" fill="#f0f0f0" textLength="58.4" lengthAdjust="spacingAndGlyphs" stroke="#f0f0f0" stroke-width="0.35">21,3136</text><text x="1385.0" y="782.8" font-size="19.0" fill="#f0f0f0" textLength="67.4" lengthAdjust="spacingAndGlyphs" stroke="#f0f0f0" stroke-width="0.35">238,4004</text><text x="1462.8" y="782.8" font-size="19.0" fill="#f0f0f0" textLength="58.4" lengthAdjust="spacingAndGlyphs" stroke="#f0f0f0" stroke-width="0.35">84,8056</text><text x="1540.8" y="782.8" font-size="19.0" fill="#f0f0f0" textLength="67.4" lengthAdjust="spacingAndGlyphs" stroke="#f0f0f0" stroke-width="0.35">282,5333</text><text x="1618.8" y="782.8" font-size="19.0" fill="#f0f0f0" textLength="26.9" lengthAdjust="spacingAndGlyphs" stroke="#f0f0f0" stroke-width="0.35">584</text><rect x="995.5" y="790.8" width="633.1" height="31.1" fill="#787878"/><text x="1008.3" y="813.9" font-size="19.5" fill="#f2f2f2" font-weight="bold" textLength="66.0" lengthAdjust="spacingAndGlyphs">Target Y</text><text x="1092.4" y="813.9" font-size="19.0" fill="#f0f0f0" textLength="67.4" lengthAdjust="spacingAndGlyphs" stroke="#f0f0f0" stroke-width="0.35">309,6994</text><text x="1170.9" y="813.9" font-size="19.0" fill="#f0f0f0" textLength="58.4" lengthAdjust="spacingAndGlyphs" stroke="#f0f0f0" stroke-width="0.35">92,0924</text><text x="1238.8" y="813.9" font-size="19.0" fill="#f0f0f0" textLength="67.4" lengthAdjust="spacingAndGlyphs" stroke="#f0f0f0" stroke-width="0.35">194,2913</text><text x="1316.4" y="813.9" font-size="19.0" fill="#f0f0f0" textLength="58.4" lengthAdjust="spacingAndGlyphs" stroke="#f0f0f0" stroke-width="0.35">23,3156</text><text x="1385.0" y="813.9" font-size="19.0" fill="#f0f0f0" textLength="67.4" lengthAdjust="spacingAndGlyphs" stroke="#f0f0f0" stroke-width="0.35">217,6070</text><text x="1462.8" y="813.9" font-size="19.0" fill="#f0f0f0" textLength="66.2" lengthAdjust="spacingAndGlyphs" stroke="#f0f0f0" stroke-width="0.35">115,4081</text><text x="1540.8" y="813.9" font-size="19.0" fill="#f0f0f0" textLength="67.4" lengthAdjust="spacingAndGlyphs" stroke="#f0f0f0" stroke-width="0.35">286,3838</text><text x="1618.8" y="813.9" font-size="19.0" fill="#f0f0f0" textLength="26.9" lengthAdjust="spacingAndGlyphs" stroke="#f0f0f0" stroke-width="0.35">584</text><rect x="995.5" y="821.8" width="633.1" height="31.1" fill="#404040"/><text x="1008.3" y="844.9" font-size="19.5" fill="#f2f2f2" font-weight="bold" textLength="66.0" lengthAdjust="spacingAndGlyphs">ΔE 2000</text><text x="1092.4" y="844.9" font-size="19.0" fill="#f0f0f0" textLength="49.4" lengthAdjust="spacingAndGlyphs" stroke="#f0f0f0" stroke-width="0.35">1,7608</text><text x="1170.9" y="844.9" font-size="19.0" fill="#f0f0f0" textLength="49.4" lengthAdjust="spacingAndGlyphs" stroke="#f0f0f0" stroke-width="0.35">7,4722</text><text x="1238.8" y="844.9" font-size="19.0" fill="#f0f0f0" textLength="49.4" lengthAdjust="spacingAndGlyphs" stroke="#f0f0f0" stroke-width="0.35">8,7758</text><text x="1316.4" y="844.9" font-size="19.0" fill="#f0f0f0" textLength="49.4" lengthAdjust="spacingAndGlyphs" stroke="#f0f0f0" stroke-width="0.35">0,8407</text><text x="1385.0" y="844.9" font-size="19.0" fill="#f0f0f0" textLength="49.4" lengthAdjust="spacingAndGlyphs" stroke="#f0f0f0" stroke-width="0.35">7,7867</text><text x="1462.8" y="844.9" font-size="19.0" fill="#f0f0f0" textLength="49.4" lengthAdjust="spacingAndGlyphs" stroke="#f0f0f0" stroke-width="0.35">7,5670</text><text x="1540.8" y="844.9" font-size="19.0" fill="#f0f0f0" textLength="49.4" lengthAdjust="spacingAndGlyphs" stroke="#f0f0f0" stroke-width="0.35">2,0642</text><text x="1618.8" y="844.9" font-size="19.0" fill="#f0f0f0" textLength="22.5" lengthAdjust="spacingAndGlyphs" stroke="#f0f0f0" stroke-width="0.35">2,3</text><rect x="995.5" y="852.9" width="633.1" height="31.1" fill="#787878"/><text x="1008.3" y="876.0" font-size="19.5" fill="#f2f2f2" font-weight="bold" textLength="53.0" lengthAdjust="spacingAndGlyphs">ΔE ITP</text><text x="1092.4" y="876.0" font-size="19.0" fill="#f0f0f0" textLength="49.4" lengthAdjust="spacingAndGlyphs" stroke="#f0f0f0" stroke-width="0.35">2,7222</text><text x="1170.9" y="876.0" font-size="19.0" fill="#f0f0f0" textLength="58.4" lengthAdjust="spacingAndGlyphs" stroke="#f0f0f0" stroke-width="0.35">28,5863</text><text x="1238.8" y="876.0" font-size="19.0" fill="#f0f0f0" textLength="58.4" lengthAdjust="spacingAndGlyphs" stroke="#f0f0f0" stroke-width="0.35">42,2328</text><text x="1316.4" y="876.0" font-size="19.0" fill="#f0f0f0" textLength="49.4" lengthAdjust="spacingAndGlyphs" stroke="#f0f0f0" stroke-width="0.35">8,4866</text><text x="1385.0" y="876.0" font-size="19.0" fill="#f0f0f0" textLength="58.4" lengthAdjust="spacingAndGlyphs" stroke="#f0f0f0" stroke-width="0.35">34,5070</text><text x="1462.8" y="876.0" font-size="19.0" fill="#f0f0f0" textLength="58.4" lengthAdjust="spacingAndGlyphs" stroke="#f0f0f0" stroke-width="0.35">33,5043</text><text x="1540.8" y="876.0" font-size="19.0" fill="#f0f0f0" textLength="58.4" lengthAdjust="spacingAndGlyphs" stroke="#f0f0f0" stroke-width="0.35">10,9546</text><text x="1618.8" y="876.0" font-size="19.0" fill="#f0f0f0" textLength="22.5" lengthAdjust="spacingAndGlyphs" stroke="#f0f0f0" stroke-width="0.35">2,9</text></g>
<text x="1127.0" y="687.6" font-size="18.6" fill="#eeeeee" text-anchor="middle" textLength="42.0" lengthAdjust="spacingAndGlyphs" stroke="#eeeeee" stroke-width="0.34">White</text>
<text x="1200.0" y="687.6" font-size="18.6" fill="#eeeeee" text-anchor="middle" textLength="25.6" lengthAdjust="spacingAndGlyphs" stroke="#eeeeee" stroke-width="0.34">Red</text>
<text x="1273.0" y="687.6" font-size="18.6" fill="#eeeeee" text-anchor="middle" textLength="41.9" lengthAdjust="spacingAndGlyphs" stroke="#eeeeee" stroke-width="0.34">Green</text>
<text x="1346.5" y="687.6" font-size="18.6" fill="#eeeeee" text-anchor="middle" textLength="29.7" lengthAdjust="spacingAndGlyphs" stroke="#eeeeee" stroke-width="0.34">Blue</text>
<text x="1419.7" y="687.6" font-size="18.6" fill="#eeeeee" text-anchor="middle" textLength="33.3" lengthAdjust="spacingAndGlyphs" stroke="#eeeeee" stroke-width="0.34">Cyan</text>
<text x="1497.0" y="687.6" font-size="18.6" fill="#eeeeee" text-anchor="middle" textLength="61.4" lengthAdjust="spacingAndGlyphs" stroke="#eeeeee" stroke-width="0.34">Magenta</text>
<text x="1575.0" y="687.6" font-size="18.6" fill="#eeeeee" text-anchor="middle" textLength="43.9" lengthAdjust="spacingAndGlyphs" stroke="#eeeeee" stroke-width="0.34">Yellow</text>
<rect x="1628.6" y="697.6" width="17" height="170.4" fill="#5c5c5c"/>
<rect x="1630.5" y="699" width="13.5" height="15" rx="3" fill="#666" stroke="#777" stroke-width="0.8"/>
<path d="M1632.5 710 l4.8 -6 l4.8 6 z" fill="#444"/>
<rect x="1631" y="720" width="13" height="106" rx="6" fill="#454545"/>
<rect x="1630.5" y="851" width="13.5" height="15" rx="3" fill="#666" stroke="#777" stroke-width="0.8"/>
<path d="M1632.5 855 l4.8 6 l4.8 -6 z" fill="#444"/>
<rect x="995.5" y="868" width="633.1" height="19.5" fill="#5e5e5e"/>
<rect x="997.3" y="869.5" width="15" height="16" rx="3" fill="#666" stroke="#777" stroke-width="0.8"/>
<path d="M1001 877.5 l6.5 -5.5 v11 z" fill="#444"/>
<rect x="1014.5" y="870" width="541" height="15" rx="7" fill="#434343"/>
<rect x="1611.5" y="869.5" width="15" height="16" rx="3" fill="#666" stroke="#777" stroke-width="0.8"/>
<path d="M1622.5 877.5 l-6.5 -5.5 v11 z" fill="#444"/>
<rect x="0.8" y="932" width="156" height="80" rx="5" fill="url(#btng)"/>
<rect x="7.0" y="938" width="143.5" height="45.2" rx="4.5" fill="#c0c0c0" stroke="rgba(0,0,0,0.25)" stroke-width="1"/>
<text x="78.8" y="1001.6" font-size="12.8" fill="#2a2a2a" text-anchor="middle" font-weight="bold" textLength="36.9" lengthAdjust="spacingAndGlyphs">White</text>
<rect x="158.7" y="932" width="156" height="80" rx="5" fill="url(#btng)"/>
<rect x="164.9" y="938" width="143.5" height="45.2" rx="4.5" fill="#c00000" stroke="rgba(0,0,0,0.25)" stroke-width="1"/>
<text x="236.7" y="1001.6" font-size="12.8" fill="#2a2a2a" text-anchor="middle" font-weight="bold" textLength="23.5" lengthAdjust="spacingAndGlyphs">Red</text>
<rect x="316.6" y="932" width="156" height="80" rx="5" fill="url(#btng)"/>
<rect x="322.8" y="938" width="143.5" height="45.2" rx="4.5" fill="#00c000" stroke="rgba(0,0,0,0.25)" stroke-width="1"/>
<text x="394.6" y="1001.6" font-size="12.8" fill="#2a2a2a" text-anchor="middle" font-weight="bold" textLength="37.0" lengthAdjust="spacingAndGlyphs">Green</text>
<rect x="474.5" y="932" width="156" height="80" rx="5" fill="url(#btng)"/>
<rect x="480.7" y="938" width="143.5" height="45.2" rx="4.5" fill="#0000c0" stroke="rgba(0,0,0,0.25)" stroke-width="1"/>
<text x="552.5" y="1001.6" font-size="12.8" fill="#2a2a2a" text-anchor="middle" font-weight="bold" textLength="31.0" lengthAdjust="spacingAndGlyphs">Blue</text>
<rect x="632.4" y="932" width="156" height="80" rx="5" fill="url(#btng)"/>
<rect x="638.6" y="938" width="143.5" height="45.2" rx="4.5" fill="#00c0c0" stroke="rgba(0,0,0,0.25)" stroke-width="1"/>
<text x="710.4" y="1001.6" font-size="12.8" fill="#2a2a2a" text-anchor="middle" font-weight="bold" textLength="29.5" lengthAdjust="spacingAndGlyphs">Cyan</text>
<rect x="790.3" y="932" width="156" height="80" rx="5" fill="url(#btng)"/>
<rect x="796.5" y="938" width="143.5" height="45.2" rx="4.5" fill="#c000c0" stroke="rgba(0,0,0,0.25)" stroke-width="1"/>
<text x="868.3" y="1001.6" font-size="12.8" fill="#2a2a2a" text-anchor="middle" font-weight="bold" textLength="54.7" lengthAdjust="spacingAndGlyphs">Magenta</text>
<rect x="948.2" y="932" width="156" height="80" rx="5" fill="url(#btng)"/>
<rect x="954.4" y="938" width="143.5" height="45.2" rx="4.5" fill="#c0c000" stroke="rgba(0,0,0,0.25)" stroke-width="1"/>
<text x="1026.2" y="1001.6" font-size="12.8" fill="#2a2a2a" text-anchor="middle" font-weight="bold" textLength="40.0" lengthAdjust="spacingAndGlyphs">Yellow</text>
<rect x="1106.1" y="932" width="155.2" height="80" rx="5" fill="#262626"/>
<rect x="1112.4" y="937.7" width="143" height="45.3" rx="4.5" fill="#fff"/>
<text x="1184.1" y="1001.7" font-size="12.8" fill="#f4f4f4" text-anchor="middle" font-weight="bold" textLength="35.2" lengthAdjust="spacingAndGlyphs">100W</text>
<rect x="1265.4" y="932" width="59.6" height="80" rx="4" fill="url(#btng)"/>
<rect x="1265.4" y="954" width="59.6" height="1.3" fill="#3a3a3a"/>
<circle cx="1295.4" cy="942.5" r="9" fill="url(#circg)" opacity="0.7"/>
<path d="M1290 945.5 l5.4 -5 l5.4 5 z" fill="#2a2a2a"/>
<rect x="1276" y="963" width="38" height="37.5" rx="5" fill="#2a2a2a"/>
<rect x="1279" y="966" width="32" height="31.5" rx="3" fill="#a8a8a8"/>
<path d="M1279 982 H1311 V994.5 Q1311 997.5 1308 997.5 H1282 Q1279 997.5 1279 994.5 Z" fill="#999"/>
<rect x="1287" y="973.5" width="16.5" height="16.5" fill="#000"/>
<rect x="1287" y="973.5" width="16.5" height="8.5" fill="#1c1c1c"/>
<rect x="1325.4" y="930.9" width="59.0" height="37.8" fill="url(#btng2)"/>
<rect x="1385.4" y="930.9" width="55.2" height="37.8" fill="url(#btng2)"/>
<rect x="1441.6" y="930.9" width="54.8" height="37.8" fill="url(#btng2)"/>
<rect x="1497.6" y="930.9" width="55.4" height="37.8" fill="url(#btng2)"/>
<rect x="1554.0" y="930.9" width="55.0" height="37.8" fill="url(#btng2)"/>
<rect x="1384.6" y="930.9" width="1.2" height="37.8" fill="#2a2a2a"/>
<rect x="1440.8" y="930.9" width="1.2" height="37.8" fill="#2a2a2a"/>
<rect x="1496.8" y="930.9" width="1.2" height="37.8" fill="#2a2a2a"/>
<rect x="1553.3" y="930.9" width="1.2" height="37.8" fill="#2a2a2a"/>
<circle cx="1355.0" cy="950.3" r="12" fill="url(#circg)" opacity="0.55"/>
<circle cx="1412.5" cy="950.3" r="12" fill="url(#circg)" opacity="0.55"/>
<circle cx="1468.5" cy="950.3" r="12" fill="url(#circg)" opacity="0.55"/>
<circle cx="1525.3" cy="950.3" r="12" fill="url(#circg)" opacity="0.55"/>
<circle cx="1581.5" cy="950.3" r="12" fill="url(#circg)" opacity="0.55"/>
<rect x="1350.5" y="945.8" width="9.5" height="9.5" fill="#2a2a2a"/>
<path d="M1409.2 944.5 v12 l10 -6 z" fill="#2a2a2a"/>
<path d="M1463 944.5 h-1.8 v12 h1.8 M1474 944.5 h1.8 v12 h-1.8" fill="none" stroke="#2a2a2a" stroke-width="2"/>
<rect x="1465.5" y="949.6" width="2" height="1.6" fill="#2a2a2a"/><rect x="1469.5" y="949.6" width="2" height="1.6" fill="#2a2a2a"/>
<path d="M1525.3 950.3 c-2.5 -3.5 -7 -3.5 -7 0 c0 3.5 4.5 3.5 7 0 c2.5 -3.5 7 -3.5 7 0 c0 3.5 -4.5 3.5 -7 0 z" fill="none" stroke="#2a2a2a" stroke-width="2"/>
<path d="M1576.5 948 a5.5 5.5 0 0 1 9.5 -1.5 M1586.5 952.5 a5.5 5.5 0 0 1 -9.5 1.5" fill="none" stroke="#2a2a2a" stroke-width="2.2"/>
<path d="M1587 942.5 v6 h-6 z M1576 958 v-6 h6 z" fill="#2a2a2a"/>
<rect x="1325.4" y="969.5" width="170.5" height="40" fill="url(#btng2)"/>
<rect x="1497.6" y="969.5" width="167.4" height="40" fill="url(#btng2)"/>
<rect x="1496.3" y="969.5" width="1.2" height="40" fill="#2a2a2a"/>
<rect x="1325.4" y="968.6" width="339.6" height="1.1" fill="#2a2a2a"/>
<circle cx="1365" cy="988.5" r="11.5" fill="url(#circg)" opacity="0.55"/>
<circle cx="1631.5" cy="989" r="11.5" fill="url(#circg)" opacity="0.55"/>
<path d="M1365 983 l-5 5.5 l5 5.5 M1370 983 l-5 5.5 l5 5.5" fill="none" stroke="#2a2a2a" stroke-width="1.8"/>
<path d="M1627 983.5 l5 5.5 l-5 5.5 M1632 983.5 l5 5.5 l-5 5.5" fill="none" stroke="#2a2a2a" stroke-width="1.8"/>
<text x="1399.3" y="999.2" font-size="28.6" fill="#353535" textLength="62.0" lengthAdjust="spacingAndGlyphs" stroke="#353535" stroke-width="0.9">Back</text>
<text x="1532.7" y="998.6" font-size="28.6" fill="#353535" textLength="64.0" lengthAdjust="spacingAndGlyphs" stroke="#353535" stroke-width="0.9">Next</text>
<path d="M1638.00 948.70 L1639.30 932.50 L1633.50 932.50 L1634.80 948.70ZM1637.20 947.31 L1623.82 938.09 L1620.92 943.11 L1635.60 950.09ZM1635.60 947.31 L1620.92 954.29 L1623.82 959.31 L1637.20 950.09ZM1634.80 948.70 L1633.50 964.90 L1639.30 964.90 L1638.00 948.70ZM1635.60 950.09 L1648.98 959.31 L1651.88 954.29 L1637.20 947.31ZM1637.20 950.09 L1651.88 943.11 L1648.98 938.09 L1635.60 947.31Z" fill="#e30f0f" stroke="#e30f0f" stroke-width="1.5" stroke-linejoin="round" filter="url(#ashadow)"/></svg></body></html>
